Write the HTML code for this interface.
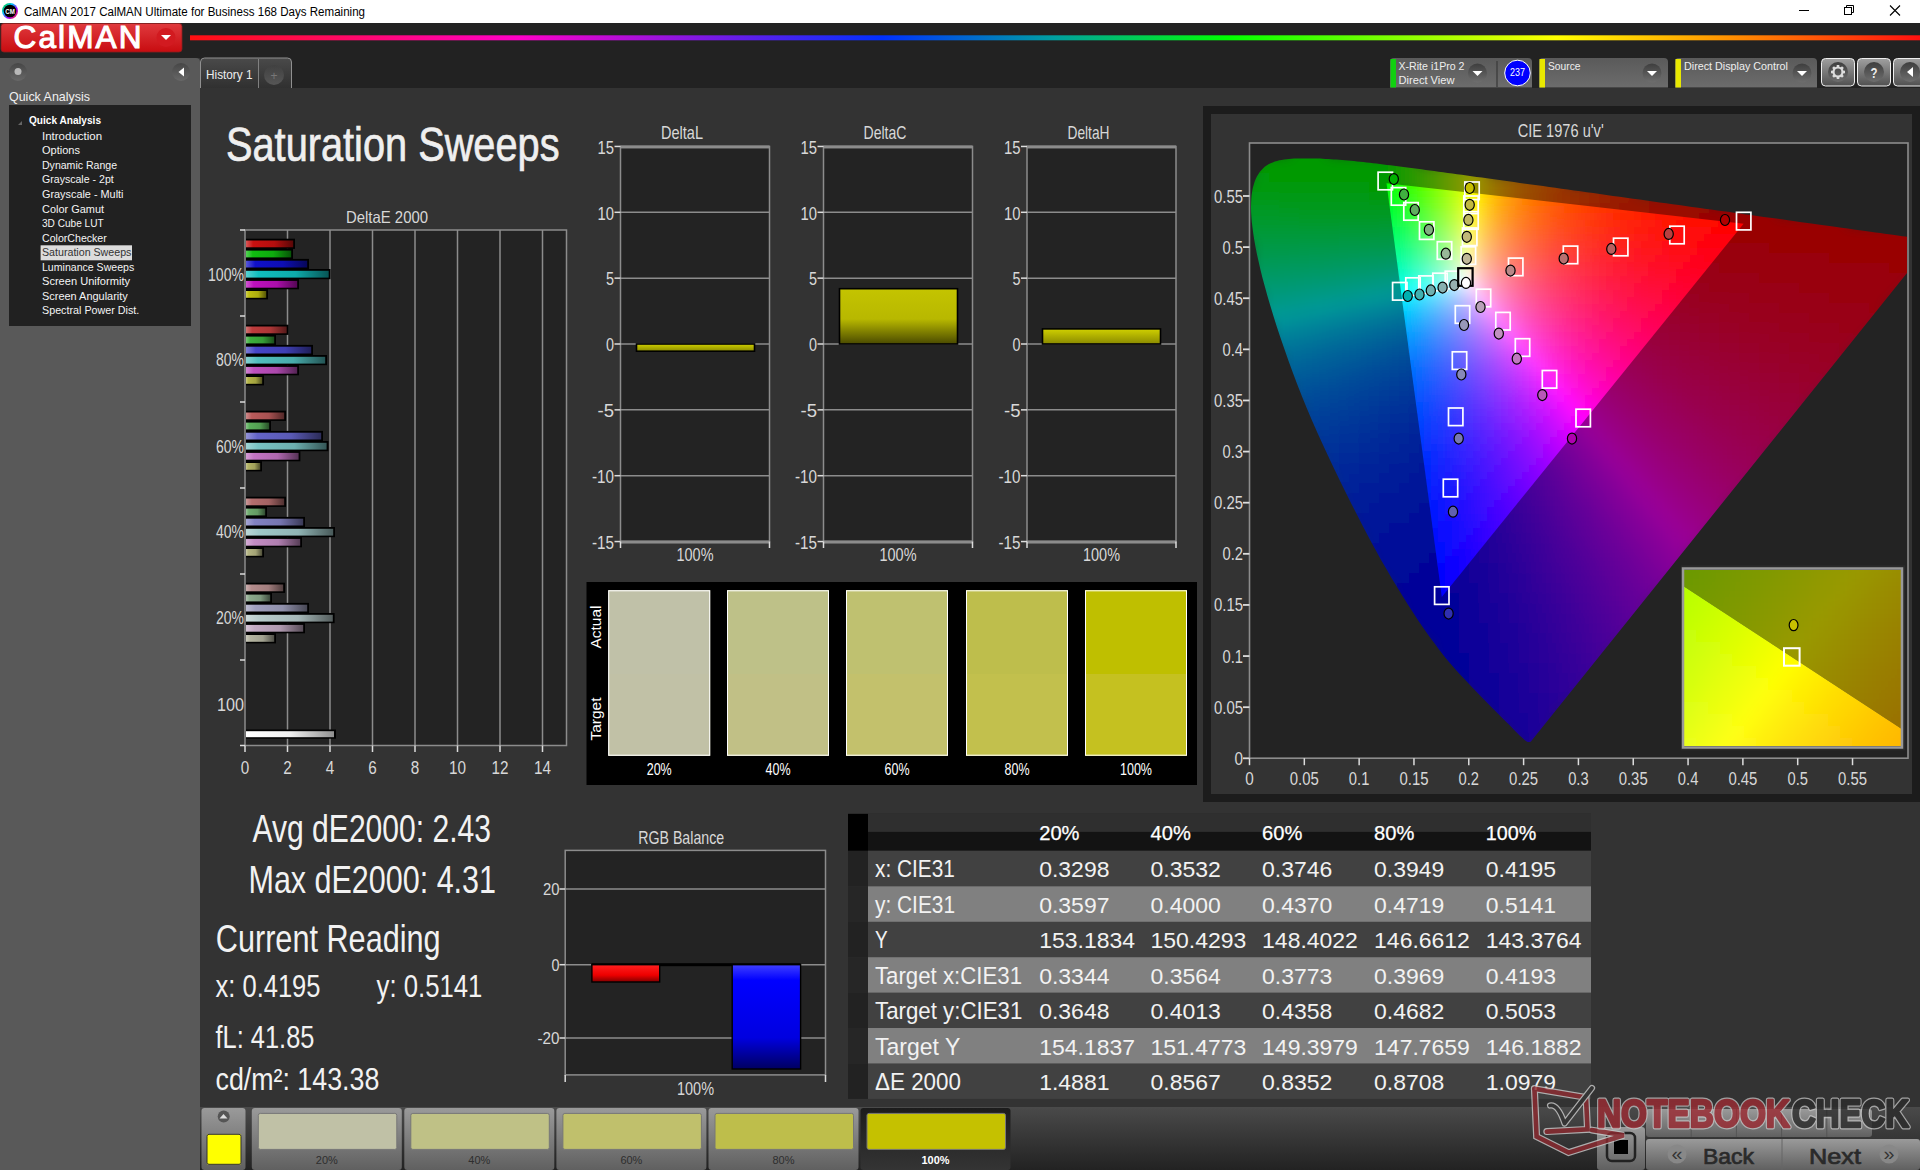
<!DOCTYPE html><html><head><meta charset="utf-8"><style>html,body{margin:0;padding:0;background:#333;overflow:hidden}svg{display:block;font-family:"Liberation Sans",sans-serif}</style></head><body>
<svg width="1920" height="1170" viewBox="0 0 1920 1170">
<defs>
<linearGradient id="rainbow" x1="190" y1="0" x2="1920" y2="0" gradientUnits="userSpaceOnUse">
<stop offset="0" stop-color="#ff1010"/><stop offset="0.19" stop-color="#ff00c8"/><stop offset="0.40" stop-color="#0030ff"/>
<stop offset="0.50" stop-color="#00a0a0"/><stop offset="0.60" stop-color="#00ff00"/><stop offset="0.79" stop-color="#ffff00"/>
<stop offset="0.89" stop-color="#ff9000"/><stop offset="1" stop-color="#ff1010"/></linearGradient>
<linearGradient id="logo" x1="0" y1="0" x2="0" y2="1"><stop offset="0" stop-color="#e03a3e"/><stop offset="1" stop-color="#c80c10"/></linearGradient>
<linearGradient id="btn" x1="0" y1="0" x2="0" y2="1"><stop offset="0" stop-color="#a0a0a0"/><stop offset="1" stop-color="#505050"/></linearGradient>
<linearGradient id="box" x1="0" y1="0" x2="0" y2="1"><stop offset="0" stop-color="#5a5a5a"/><stop offset="1" stop-color="#6c6c6c"/></linearGradient>
<linearGradient id="circ" x1="0" y1="0" x2="0" y2="1"><stop offset="0" stop-color="#3e3e3e"/><stop offset="1" stop-color="#6e6e6e"/></linearGradient>
<linearGradient id="tab" x1="0" y1="0" x2="0" y2="1"><stop offset="0" stop-color="#4a4a4a"/><stop offset="1" stop-color="#303030"/></linearGradient>
<linearGradient id="bar" x1="0" y1="0" x2="0" y2="1"><stop offset="0" stop-color="#4a4a4a"/><stop offset="1" stop-color="#222222"/></linearGradient><linearGradient id="seltab" x1="0" y1="0" x2="0" y2="1"><stop offset="0" stop-color="#1c1c1c"/><stop offset="1" stop-color="#343434"/></linearGradient>
<linearGradient id="btab" x1="0" y1="0" x2="0" y2="1"><stop offset="0" stop-color="#9a9a9a"/><stop offset="1" stop-color="#606060"/></linearGradient>
<linearGradient id="yelV" x1="0" y1="0" x2="0" y2="1"><stop offset="0" stop-color="#c4c400"/><stop offset="0.55" stop-color="#b8b800"/><stop offset="1" stop-color="#4a4a00"/></linearGradient>
<linearGradient id="yelH" x1="0" y1="0" x2="0" y2="1"><stop offset="0" stop-color="#d0d000"/><stop offset="1" stop-color="#8a8a00"/></linearGradient>
<linearGradient id="redB" x1="0" y1="0" x2="0" y2="1"><stop offset="0" stop-color="#ff2020"/><stop offset="0.6" stop-color="#ee0000"/><stop offset="1" stop-color="#800000"/></linearGradient>
<linearGradient id="bluB" x1="0" y1="0" x2="0" y2="1"><stop offset="0" stop-color="#4040ff"/><stop offset="0.15" stop-color="#0000ff"/><stop offset="0.7" stop-color="#0000e0"/><stop offset="1" stop-color="#000060"/></linearGradient>
</defs>
<rect x="0" y="0" width="1920" height="1170" fill="#333333"/>
<rect x="0" y="0" width="1920" height="23" fill="#ffffff"/>
<rect x="0" y="23" width="1920" height="35" fill="#222222"/>
<rect x="200" y="58" width="1720" height="30" fill="#222222"/>
<defs><linearGradient id="cmring" x1="0" y1="0" x2="1" y2="1"><stop offset="0" stop-color="#00d000"/><stop offset="0.35" stop-color="#00c0ff"/><stop offset="0.65" stop-color="#a000ff"/><stop offset="1" stop-color="#ff3000"/></linearGradient></defs>
<circle cx="10" cy="11" r="8" fill="url(#cmring)"/><circle cx="10" cy="11" r="6.3" fill="#000"/>
<text x="10.0" y="14.2" font-size="6.69" fill="#fff" textLength="9.5" lengthAdjust="spacingAndGlyphs" text-anchor="middle" font-weight="bold">CM</text>
<text x="24.0" y="16.0" font-size="13.08" fill="#000" textLength="341.0" lengthAdjust="spacingAndGlyphs">CalMAN 2017 CalMAN Ultimate for Business 168 Days Remaining</text>
<line x1="1799" y1="10.5" x2="1809" y2="10.5" stroke="#000" stroke-width="1"/>
<rect x="1844.5" y="7.5" width="7" height="7" fill="none" stroke="#000" stroke-width="1"/><path d="M1846.5 7.5V5.5h7v7h-2" fill="none" stroke="#000" stroke-width="1"/>
<path d="M1890 5.5l10 10M1900 5.5l-10 10" stroke="#000" stroke-width="1.1"/>
<rect x="1" y="23.5" width="181" height="28.5" rx="3" fill="url(#logo)" stroke="#8a2020" stroke-width="0.8"/>
<text x="13.5" y="48.4" font-size="31.5" fill="#fff" stroke="#fff" stroke-width="1.1" textLength="128" lengthAdjust="spacing">CalMAN</text>
<circle cx="166" cy="37.5" r="9.5" fill="#d21a20"/><path d="M161 35h10l-5 5z" fill="#fff"/>
<rect x="190" y="35.3" width="1730" height="5" fill="url(#rainbow)"/>
<path d="M1390 87.5V62a4 4 0 0 1 4-4h134a4 4 0 0 1 4 4v25.5z" fill="url(#box)"/>
<rect x="1390.5" y="59" width="5.5" height="28.5" fill="#10d010"/>
<text x="1398.5" y="69.8" font-size="10.76" fill="#eee" textLength="66.0" lengthAdjust="spacingAndGlyphs">X-Rite i1Pro 2</text>
<text x="1398.5" y="83.7" font-size="10.76" fill="#eee" textLength="56.0" lengthAdjust="spacingAndGlyphs">Direct View</text>
<circle cx="1477.5" cy="73" r="9.5" fill="url(#circ)"/><path d="M1472.5 71h10l-5 5z" fill="#fff"/>
<line x1="1497" y1="61" x2="1497" y2="87" stroke="#404040" stroke-width="1.5"/>
<circle cx="1517.5" cy="73" r="12.8" fill="#0000ff" stroke="#fff" stroke-width="1"/>
<text x="1517.5" y="76.3" font-size="10.17" fill="#fff" textLength="15.0" lengthAdjust="spacingAndGlyphs" text-anchor="middle">237</text>
<path d="M1539 87.5V62a4 4 0 0 1 4-4h121a4 4 0 0 1 4 4v25.5z" fill="url(#box)"/>
<rect x="1539.5" y="59" width="5.5" height="28.5" fill="#e8e800"/>
<text x="1548.0" y="70.0" font-size="10.76" fill="#eee" textLength="32.5" lengthAdjust="spacingAndGlyphs">Source</text>
<circle cx="1652" cy="73" r="9.5" fill="url(#circ)"/><path d="M1647 71h10l-5 5z" fill="#fff"/>
<path d="M1675 87.5V62a4 4 0 0 1 4-4h134a4 4 0 0 1 4 4v25.5z" fill="url(#box)"/>
<rect x="1675.5" y="59" width="5.5" height="28.5" fill="#e8e800"/>
<text x="1684.0" y="70.0" font-size="10.76" fill="#eee" textLength="104.0" lengthAdjust="spacingAndGlyphs">Direct Display Control</text>
<circle cx="1802" cy="73" r="9.5" fill="url(#circ)"/><path d="M1797 71h10l-5 5z" fill="#fff"/>
<rect x="1821.5" y="58.5" width="33" height="27.5" rx="4" fill="url(#btn)" stroke="#eee" stroke-width="1"/>
<circle cx="1838.0" cy="72" r="10" fill="url(#circ)"/>
<rect x="1857.5" y="58.5" width="33" height="27.5" rx="4" fill="url(#btn)" stroke="#eee" stroke-width="1"/>
<circle cx="1874.0" cy="72" r="10" fill="url(#circ)"/>
<rect x="1893.5" y="58.5" width="33" height="27.5" rx="4" fill="url(#btn)" stroke="#eee" stroke-width="1"/>
<circle cx="1910.0" cy="72" r="10" fill="url(#circ)"/>
<rect x="1836.7" y="65.0" width="2.6" height="3" fill="#ddd" transform="rotate(0 1838 72)"/><rect x="1836.7" y="65.0" width="2.6" height="3" fill="#ddd" transform="rotate(45 1838 72)"/><rect x="1836.7" y="65.0" width="2.6" height="3" fill="#ddd" transform="rotate(90 1838 72)"/><rect x="1836.7" y="65.0" width="2.6" height="3" fill="#ddd" transform="rotate(135 1838 72)"/><rect x="1836.7" y="65.0" width="2.6" height="3" fill="#ddd" transform="rotate(180 1838 72)"/><rect x="1836.7" y="65.0" width="2.6" height="3" fill="#ddd" transform="rotate(225 1838 72)"/><rect x="1836.7" y="65.0" width="2.6" height="3" fill="#ddd" transform="rotate(270 1838 72)"/><rect x="1836.7" y="65.0" width="2.6" height="3" fill="#ddd" transform="rotate(315 1838 72)"/><circle cx="1838" cy="72" r="4.5" fill="none" stroke="#ddd" stroke-width="2.2"/>
<text x="1874.0" y="77.5" font-size="14.54" fill="#eee" textLength="7.0" lengthAdjust="spacingAndGlyphs" text-anchor="middle" font-weight="bold">?</text>
<path d="M1913 67v10l-6-5z" fill="#fff"/>
<path d="M0 58H196a4 4 0 0 1 4 4V1170H0z" fill="#595959"/>
<circle cx="18" cy="72" r="9" fill="url(#circ)" opacity="0.7"/><circle cx="18" cy="71.5" r="3.5" fill="#b8b8b8"/>
<circle cx="181" cy="72" r="9" fill="url(#circ)" opacity="0.7"/><path d="M184 67.5v9l-5.5-4.5z" fill="#fff"/>
<text x="9.0" y="101.0" font-size="12.94" fill="#f0f0f0" textLength="81.0" lengthAdjust="spacingAndGlyphs">Quick Analysis</text>
<rect x="9" y="105" width="182" height="221" fill="#212121"/>
<path d="M18 125l4-4v4z" fill="#666"/>
<text x="29.0" y="124.0" font-size="11.63" fill="#fff" textLength="72.0" lengthAdjust="spacingAndGlyphs" font-weight="bold">Quick Analysis</text>
<text x="42.0" y="139.7" font-size="10.90" fill="#f4f4f4" textLength="60.1" lengthAdjust="spacingAndGlyphs">Introduction</text>
<text x="42.0" y="154.3" font-size="10.90" fill="#f4f4f4" textLength="38.0" lengthAdjust="spacingAndGlyphs">Options</text>
<text x="42.0" y="168.8" font-size="10.90" fill="#f4f4f4" textLength="75.0" lengthAdjust="spacingAndGlyphs">Dynamic Range</text>
<text x="42.0" y="183.4" font-size="10.90" fill="#f4f4f4" textLength="71.7" lengthAdjust="spacingAndGlyphs">Grayscale - 2pt</text>
<text x="42.0" y="197.9" font-size="10.90" fill="#f4f4f4" textLength="81.5" lengthAdjust="spacingAndGlyphs">Grayscale - Multi</text>
<text x="42.0" y="212.5" font-size="10.90" fill="#f4f4f4" textLength="62.0" lengthAdjust="spacingAndGlyphs">Color Gamut</text>
<text x="42.0" y="227.1" font-size="10.90" fill="#f4f4f4" textLength="61.6" lengthAdjust="spacingAndGlyphs">3D Cube LUT</text>
<text x="42.0" y="241.6" font-size="10.90" fill="#f4f4f4" textLength="64.8" lengthAdjust="spacingAndGlyphs">ColorChecker</text>
<rect x="40.6" y="245.3" width="91.4" height="15" fill="#dcdcdc"/>
<text x="42.0" y="256.2" font-size="10.90" fill="#333" textLength="89.4" lengthAdjust="spacingAndGlyphs">Saturation Sweeps</text>
<text x="42.0" y="270.7" font-size="10.90" fill="#f4f4f4" textLength="92.2" lengthAdjust="spacingAndGlyphs">Luminance Sweeps</text>
<text x="42.0" y="285.3" font-size="10.90" fill="#f4f4f4" textLength="88.0" lengthAdjust="spacingAndGlyphs">Screen Uniformity</text>
<text x="42.0" y="299.9" font-size="10.90" fill="#f4f4f4" textLength="85.8" lengthAdjust="spacingAndGlyphs">Screen Angularity</text>
<text x="42.0" y="314.4" font-size="10.90" fill="#f4f4f4" textLength="97.3" lengthAdjust="spacingAndGlyphs">Spectral Power Dist.</text>
<path d="M200.5 88V62a4 4 0 0 1 4-4h83a4 4 0 0 1 4 4v26z" fill="url(#tab)"/><path d="M200.5 88V62a4 4 0 0 1 4-4h83a4 4 0 0 1 4 4v26" fill="none" stroke="#909090" stroke-width="1"/>
<line x1="258.5" y1="59" x2="258.5" y2="88" stroke="#808080" stroke-width="1"/>
<text x="206.0" y="78.5" font-size="12.50" fill="#eee" textLength="46.5" lengthAdjust="spacingAndGlyphs">History 1</text>
<circle cx="274" cy="75" r="10" fill="url(#circ)" opacity="0.6"/>
<text x="274.0" y="80.0" font-size="13.08" fill="#777" textLength="7.0" lengthAdjust="spacingAndGlyphs" text-anchor="middle">+</text>
<rect x="200" y="88" width="1720" height="1082" fill="#333333"/>
<text x="226.0" y="160.8" font-size="48.69" fill="#efefef" textLength="333.5" lengthAdjust="spacingAndGlyphs" stroke="#efefef" stroke-width="0.7">Saturation Sweeps</text>
<rect x="245" y="230" width="321.5" height="515.5" fill="#232323"/>
<line x1="287.5" y1="230" x2="287.5" y2="745.5" stroke="#8c8c8c" stroke-width="1.5"/>
<line x1="330.0" y1="230" x2="330.0" y2="745.5" stroke="#8c8c8c" stroke-width="1.5"/>
<line x1="372.5" y1="230" x2="372.5" y2="745.5" stroke="#8c8c8c" stroke-width="1.5"/>
<line x1="415.0" y1="230" x2="415.0" y2="745.5" stroke="#8c8c8c" stroke-width="1.5"/>
<line x1="457.5" y1="230" x2="457.5" y2="745.5" stroke="#8c8c8c" stroke-width="1.5"/>
<line x1="500.0" y1="230" x2="500.0" y2="745.5" stroke="#8c8c8c" stroke-width="1.5"/>
<line x1="542.5" y1="230" x2="542.5" y2="745.5" stroke="#8c8c8c" stroke-width="1.5"/>
<rect x="245" y="230" width="321.5" height="515.5" fill="none" stroke="#8c8c8c" stroke-width="1.5"/>
<text x="387.0" y="223.0" font-size="16.72" fill="#d8d8d8" textLength="82.0" lengthAdjust="spacingAndGlyphs" text-anchor="middle">DeltaE 2000</text>
<line x1="240" y1="230" x2="245" y2="230" stroke="#ddd" stroke-width="1.5"/>
<line x1="240" y1="316" x2="245" y2="316" stroke="#ddd" stroke-width="1.5"/>
<line x1="240" y1="402" x2="245" y2="402" stroke="#ddd" stroke-width="1.5"/>
<line x1="240" y1="488" x2="245" y2="488" stroke="#ddd" stroke-width="1.5"/>
<line x1="240" y1="574" x2="245" y2="574" stroke="#ddd" stroke-width="1.5"/>
<line x1="240" y1="660" x2="245" y2="660" stroke="#ddd" stroke-width="1.5"/>
<line x1="240" y1="745.5" x2="245" y2="745.5" stroke="#ddd" stroke-width="1.5"/>
<line x1="245.0" y1="745.5" x2="245.0" y2="752" stroke="#ddd" stroke-width="1.5"/>
<text x="245.0" y="774.0" font-size="17.44" fill="#d8d8d8" textLength="8.5" lengthAdjust="spacingAndGlyphs" text-anchor="middle">0</text>
<line x1="287.5" y1="745.5" x2="287.5" y2="752" stroke="#ddd" stroke-width="1.5"/>
<text x="287.5" y="774.0" font-size="17.44" fill="#d8d8d8" textLength="8.5" lengthAdjust="spacingAndGlyphs" text-anchor="middle">2</text>
<line x1="330.0" y1="745.5" x2="330.0" y2="752" stroke="#ddd" stroke-width="1.5"/>
<text x="330.0" y="774.0" font-size="17.44" fill="#d8d8d8" textLength="8.5" lengthAdjust="spacingAndGlyphs" text-anchor="middle">4</text>
<line x1="372.5" y1="745.5" x2="372.5" y2="752" stroke="#ddd" stroke-width="1.5"/>
<text x="372.5" y="774.0" font-size="17.44" fill="#d8d8d8" textLength="8.5" lengthAdjust="spacingAndGlyphs" text-anchor="middle">6</text>
<line x1="415.0" y1="745.5" x2="415.0" y2="752" stroke="#ddd" stroke-width="1.5"/>
<text x="415.0" y="774.0" font-size="17.44" fill="#d8d8d8" textLength="8.5" lengthAdjust="spacingAndGlyphs" text-anchor="middle">8</text>
<line x1="457.5" y1="745.5" x2="457.5" y2="752" stroke="#ddd" stroke-width="1.5"/>
<text x="457.5" y="774.0" font-size="17.44" fill="#d8d8d8" textLength="17.0" lengthAdjust="spacingAndGlyphs" text-anchor="middle">10</text>
<line x1="500.0" y1="745.5" x2="500.0" y2="752" stroke="#ddd" stroke-width="1.5"/>
<text x="500.0" y="774.0" font-size="17.44" fill="#d8d8d8" textLength="17.0" lengthAdjust="spacingAndGlyphs" text-anchor="middle">12</text>
<line x1="542.5" y1="745.5" x2="542.5" y2="752" stroke="#ddd" stroke-width="1.5"/>
<text x="542.5" y="774.0" font-size="17.44" fill="#d8d8d8" textLength="17.0" lengthAdjust="spacingAndGlyphs" text-anchor="middle">14</text>
<text x="244.0" y="281.0" font-size="17.44" fill="#d8d8d8" textLength="36.0" lengthAdjust="spacingAndGlyphs" text-anchor="end">100%</text>
<text x="244.0" y="366.0" font-size="17.44" fill="#d8d8d8" textLength="28.0" lengthAdjust="spacingAndGlyphs" text-anchor="end">80%</text>
<text x="244.0" y="453.0" font-size="17.44" fill="#d8d8d8" textLength="28.0" lengthAdjust="spacingAndGlyphs" text-anchor="end">60%</text>
<text x="244.0" y="538.0" font-size="17.44" fill="#d8d8d8" textLength="28.0" lengthAdjust="spacingAndGlyphs" text-anchor="end">40%</text>
<text x="244.0" y="624.0" font-size="17.44" fill="#d8d8d8" textLength="28.0" lengthAdjust="spacingAndGlyphs" text-anchor="end">20%</text>
<text x="244.0" y="711.0" font-size="17.44" fill="#d8d8d8" textLength="27.0" lengthAdjust="spacingAndGlyphs" text-anchor="end">100</text>
<defs>
<linearGradient id="bg0" x1="0" y1="0" x2="1" y2="0"><stop offset="0" stop-color="#d85757"/><stop offset="0.15" stop-color="#c81010"/><stop offset="0.6" stop-color="#b40e0e"/><stop offset="1" stop-color="#590707"/></linearGradient>
<linearGradient id="bg1" x1="0" y1="0" x2="1" y2="0"><stop offset="0" stop-color="#57d157"/><stop offset="0.15" stop-color="#10be10"/><stop offset="0.6" stop-color="#0eab0e"/><stop offset="1" stop-color="#075507"/></linearGradient>
<linearGradient id="bg2" x1="0" y1="0" x2="1" y2="0"><stop offset="0" stop-color="#5757d8"/><stop offset="0.15" stop-color="#1010c8"/><stop offset="0.6" stop-color="#0e0eb4"/><stop offset="1" stop-color="#070759"/></linearGradient>
<linearGradient id="bg3" x1="0" y1="0" x2="1" y2="0"><stop offset="0" stop-color="#57d1d1"/><stop offset="0.15" stop-color="#10bebe"/><stop offset="0.6" stop-color="#0eabab"/><stop offset="1" stop-color="#075555"/></linearGradient>
<linearGradient id="bg4" x1="0" y1="0" x2="1" y2="0"><stop offset="0" stop-color="#d157d1"/><stop offset="0.15" stop-color="#be10be"/><stop offset="0.6" stop-color="#ab0eab"/><stop offset="1" stop-color="#550755"/></linearGradient>
<linearGradient id="bg5" x1="0" y1="0" x2="1" y2="0"><stop offset="0" stop-color="#d1d157"/><stop offset="0.15" stop-color="#bebe10"/><stop offset="0.6" stop-color="#abab0e"/><stop offset="1" stop-color="#555507"/></linearGradient>
<linearGradient id="bg6" x1="0" y1="0" x2="1" y2="0"><stop offset="0" stop-color="#d17676"/><stop offset="0.15" stop-color="#be3c3c"/><stop offset="0.6" stop-color="#ab3636"/><stop offset="1" stop-color="#551a1a"/></linearGradient>
<linearGradient id="bg7" x1="0" y1="0" x2="1" y2="0"><stop offset="0" stop-color="#76c776"/><stop offset="0.15" stop-color="#3caf3c"/><stop offset="0.6" stop-color="#369d36"/><stop offset="1" stop-color="#1a4e1a"/></linearGradient>
<linearGradient id="bg8" x1="0" y1="0" x2="1" y2="0"><stop offset="0" stop-color="#7d7dd8"/><stop offset="0.15" stop-color="#4646c8"/><stop offset="0.6" stop-color="#3f3fb4"/><stop offset="1" stop-color="#1f1f59"/></linearGradient>
<linearGradient id="bg9" x1="0" y1="0" x2="1" y2="0"><stop offset="0" stop-color="#84d1d1"/><stop offset="0.15" stop-color="#50bebe"/><stop offset="0.6" stop-color="#48abab"/><stop offset="1" stop-color="#245555"/></linearGradient>
<linearGradient id="bg10" x1="0" y1="0" x2="1" y2="0"><stop offset="0" stop-color="#d184d1"/><stop offset="0.15" stop-color="#be50be"/><stop offset="0.6" stop-color="#ab48ab"/><stop offset="1" stop-color="#552455"/></linearGradient>
<linearGradient id="bg11" x1="0" y1="0" x2="1" y2="0"><stop offset="0" stop-color="#caca7d"/><stop offset="0.15" stop-color="#b4b446"/><stop offset="0.6" stop-color="#a2a23f"/><stop offset="1" stop-color="#50501f"/></linearGradient>
<linearGradient id="bg12" x1="0" y1="0" x2="1" y2="0"><stop offset="0" stop-color="#ce8b8b"/><stop offset="0.15" stop-color="#b95a5a"/><stop offset="0.6" stop-color="#a65151"/><stop offset="1" stop-color="#532828"/></linearGradient>
<linearGradient id="bg13" x1="0" y1="0" x2="1" y2="0"><stop offset="0" stop-color="#8bc78b"/><stop offset="0.15" stop-color="#5aaf5a"/><stop offset="0.6" stop-color="#519d51"/><stop offset="1" stop-color="#284e28"/></linearGradient>
<linearGradient id="bg14" x1="0" y1="0" x2="1" y2="0"><stop offset="0" stop-color="#9292d8"/><stop offset="0.15" stop-color="#6464c8"/><stop offset="0.6" stop-color="#5a5ab4"/><stop offset="1" stop-color="#2c2c59"/></linearGradient>
<linearGradient id="bg15" x1="0" y1="0" x2="1" y2="0"><stop offset="0" stop-color="#a0d5d5"/><stop offset="0.15" stop-color="#78c3c3"/><stop offset="0.6" stop-color="#6cafaf"/><stop offset="1" stop-color="#355757"/></linearGradient>
<linearGradient id="bg16" x1="0" y1="0" x2="1" y2="0"><stop offset="0" stop-color="#d59dd5"/><stop offset="0.15" stop-color="#c373c3"/><stop offset="0.6" stop-color="#af67af"/><stop offset="1" stop-color="#573357"/></linearGradient>
<linearGradient id="bg17" x1="0" y1="0" x2="1" y2="0"><stop offset="0" stop-color="#caca92"/><stop offset="0.15" stop-color="#b4b464"/><stop offset="0.6" stop-color="#a2a25a"/><stop offset="1" stop-color="#50502c"/></linearGradient>
<linearGradient id="bg18" x1="0" y1="0" x2="1" y2="0"><stop offset="0" stop-color="#ca9999"/><stop offset="0.15" stop-color="#b46e6e"/><stop offset="0.6" stop-color="#a26363"/><stop offset="1" stop-color="#503131"/></linearGradient>
<linearGradient id="bg19" x1="0" y1="0" x2="1" y2="0"><stop offset="0" stop-color="#99c399"/><stop offset="0.15" stop-color="#6eaa6e"/><stop offset="0.6" stop-color="#639963"/><stop offset="1" stop-color="#314c31"/></linearGradient>
<linearGradient id="bg20" x1="0" y1="0" x2="1" y2="0"><stop offset="0" stop-color="#a7a7d5"/><stop offset="0.15" stop-color="#8282c3"/><stop offset="0.6" stop-color="#7575af"/><stop offset="1" stop-color="#3a3a57"/></linearGradient>
<linearGradient id="bg21" x1="0" y1="0" x2="1" y2="0"><stop offset="0" stop-color="#bcd8d8"/><stop offset="0.15" stop-color="#a0c8c8"/><stop offset="0.6" stop-color="#90b4b4"/><stop offset="1" stop-color="#485959"/></linearGradient>
<linearGradient id="bg22" x1="0" y1="0" x2="1" y2="0"><stop offset="0" stop-color="#d5aed5"/><stop offset="0.15" stop-color="#c38cc3"/><stop offset="0.6" stop-color="#af7eaf"/><stop offset="1" stop-color="#573e57"/></linearGradient>
<linearGradient id="bg23" x1="0" y1="0" x2="1" y2="0"><stop offset="0" stop-color="#cacaa7"/><stop offset="0.15" stop-color="#b4b482"/><stop offset="0.6" stop-color="#a2a275"/><stop offset="1" stop-color="#50503a"/></linearGradient>
<linearGradient id="bg24" x1="0" y1="0" x2="1" y2="0"><stop offset="0" stop-color="#caaeae"/><stop offset="0.15" stop-color="#b48c8c"/><stop offset="0.6" stop-color="#a27e7e"/><stop offset="1" stop-color="#503e3e"/></linearGradient>
<linearGradient id="bg25" x1="0" y1="0" x2="1" y2="0"><stop offset="0" stop-color="#aec3ae"/><stop offset="0.15" stop-color="#8caa8c"/><stop offset="0.6" stop-color="#7e997e"/><stop offset="1" stop-color="#3e4c3e"/></linearGradient>
<linearGradient id="bg26" x1="0" y1="0" x2="1" y2="0"><stop offset="0" stop-color="#bcbcd1"/><stop offset="0.15" stop-color="#a0a0be"/><stop offset="0.6" stop-color="#9090ab"/><stop offset="1" stop-color="#484855"/></linearGradient>
<linearGradient id="bg27" x1="0" y1="0" x2="1" y2="0"><stop offset="0" stop-color="#cedcdc"/><stop offset="0.15" stop-color="#b9cdcd"/><stop offset="0.6" stop-color="#a6b8b8"/><stop offset="1" stop-color="#535c5c"/></linearGradient>
<linearGradient id="bg28" x1="0" y1="0" x2="1" y2="0"><stop offset="0" stop-color="#d5c3d5"/><stop offset="0.15" stop-color="#c3aac3"/><stop offset="0.6" stop-color="#af99af"/><stop offset="1" stop-color="#574c57"/></linearGradient>
<linearGradient id="bg29" x1="0" y1="0" x2="1" y2="0"><stop offset="0" stop-color="#cacabc"/><stop offset="0.15" stop-color="#b4b4a0"/><stop offset="0.6" stop-color="#a2a290"/><stop offset="1" stop-color="#505048"/></linearGradient>
<linearGradient id="bgw" x1="0" y1="0" x2="1" y2="0"><stop offset="0" stop-color="#ffffff"/><stop offset="0.5" stop-color="#f0f0f0"/><stop offset="1" stop-color="#909090"/></linearGradient>
</defs>
<rect x="246" y="238.7" width="49.0" height="10.2" fill="#000"/>
<rect x="246" y="240.5" width="47.2" height="6.8" fill="url(#bg0)"/>
<rect x="246" y="248.8" width="47.0" height="10.2" fill="#000"/>
<rect x="246" y="250.6" width="45.2" height="6.8" fill="url(#bg1)"/>
<rect x="246" y="258.9" width="63.0" height="10.2" fill="#000"/>
<rect x="246" y="260.7" width="61.2" height="6.8" fill="url(#bg2)"/>
<rect x="246" y="269.0" width="84.5" height="10.2" fill="#000"/>
<rect x="246" y="270.8" width="82.7" height="6.8" fill="url(#bg3)"/>
<rect x="246" y="279.1" width="53.0" height="10.2" fill="#000"/>
<rect x="246" y="280.9" width="51.2" height="6.8" fill="url(#bg4)"/>
<rect x="246" y="289.2" width="22.0" height="10.2" fill="#000"/>
<rect x="246" y="291.0" width="20.2" height="6.8" fill="url(#bg5)"/>
<rect x="246" y="324.7" width="42.5" height="10.2" fill="#000"/>
<rect x="246" y="326.5" width="40.7" height="6.8" fill="url(#bg6)"/>
<rect x="246" y="334.8" width="30.0" height="10.2" fill="#000"/>
<rect x="246" y="336.6" width="28.2" height="6.8" fill="url(#bg7)"/>
<rect x="246" y="344.9" width="67.0" height="10.2" fill="#000"/>
<rect x="246" y="346.7" width="65.2" height="6.8" fill="url(#bg8)"/>
<rect x="246" y="355.0" width="81.0" height="10.2" fill="#000"/>
<rect x="246" y="356.8" width="79.2" height="6.8" fill="url(#bg9)"/>
<rect x="246" y="365.1" width="53.0" height="10.2" fill="#000"/>
<rect x="246" y="366.9" width="51.2" height="6.8" fill="url(#bg10)"/>
<rect x="246" y="375.2" width="18.0" height="10.2" fill="#000"/>
<rect x="246" y="377.0" width="16.2" height="6.8" fill="url(#bg11)"/>
<rect x="246" y="410.7" width="40.0" height="10.2" fill="#000"/>
<rect x="246" y="412.5" width="38.2" height="6.8" fill="url(#bg12)"/>
<rect x="246" y="420.8" width="25.0" height="10.2" fill="#000"/>
<rect x="246" y="422.6" width="23.2" height="6.8" fill="url(#bg13)"/>
<rect x="246" y="430.9" width="77.0" height="10.2" fill="#000"/>
<rect x="246" y="432.7" width="75.2" height="6.8" fill="url(#bg14)"/>
<rect x="246" y="441.0" width="82.4" height="10.2" fill="#000"/>
<rect x="246" y="442.8" width="80.6" height="6.8" fill="url(#bg15)"/>
<rect x="246" y="451.1" width="54.4" height="10.2" fill="#000"/>
<rect x="246" y="452.9" width="52.6" height="6.8" fill="url(#bg16)"/>
<rect x="246" y="461.2" width="16.0" height="10.2" fill="#000"/>
<rect x="246" y="463.0" width="14.2" height="6.8" fill="url(#bg17)"/>
<rect x="246" y="496.7" width="40.0" height="10.2" fill="#000"/>
<rect x="246" y="498.5" width="38.2" height="6.8" fill="url(#bg18)"/>
<rect x="246" y="506.8" width="21.0" height="10.2" fill="#000"/>
<rect x="246" y="508.6" width="19.2" height="6.8" fill="url(#bg19)"/>
<rect x="246" y="516.9" width="59.0" height="10.2" fill="#000"/>
<rect x="246" y="518.7" width="57.2" height="6.8" fill="url(#bg20)"/>
<rect x="246" y="527.0" width="89.0" height="10.2" fill="#000"/>
<rect x="246" y="528.8" width="87.2" height="6.8" fill="url(#bg21)"/>
<rect x="246" y="537.1" width="56.0" height="10.2" fill="#000"/>
<rect x="246" y="538.9" width="54.2" height="6.8" fill="url(#bg22)"/>
<rect x="246" y="547.2" width="18.0" height="10.2" fill="#000"/>
<rect x="246" y="549.0" width="16.2" height="6.8" fill="url(#bg23)"/>
<rect x="246" y="582.7" width="39.0" height="10.2" fill="#000"/>
<rect x="246" y="584.5" width="37.2" height="6.8" fill="url(#bg24)"/>
<rect x="246" y="592.8" width="26.0" height="10.2" fill="#000"/>
<rect x="246" y="594.6" width="24.2" height="6.8" fill="url(#bg25)"/>
<rect x="246" y="602.9" width="63.0" height="10.2" fill="#000"/>
<rect x="246" y="604.7" width="61.2" height="6.8" fill="url(#bg26)"/>
<rect x="246" y="613.0" width="88.6" height="10.2" fill="#000"/>
<rect x="246" y="614.8" width="86.8" height="6.8" fill="url(#bg27)"/>
<rect x="246" y="623.1" width="59.0" height="10.2" fill="#000"/>
<rect x="246" y="624.9" width="57.2" height="6.8" fill="url(#bg28)"/>
<rect x="246" y="633.2" width="30.0" height="10.2" fill="#000"/>
<rect x="246" y="635.0" width="28.2" height="6.8" fill="url(#bg29)"/>
<rect x="246" y="729.5" width="90" height="9.2" fill="#000"/>
<rect x="246" y="731.2" width="88" height="6" fill="url(#bgw)"/>
<rect x="620.5" y="146" width="149" height="394" fill="#232323"/>
<line x1="620.5" y1="475.7" x2="769.5" y2="475.7" stroke="#8c8c8c" stroke-width="1.5"/>
<line x1="620.5" y1="409.85" x2="769.5" y2="409.85" stroke="#8c8c8c" stroke-width="1.5"/>
<line x1="620.5" y1="344.0" x2="769.5" y2="344.0" stroke="#8c8c8c" stroke-width="1.5"/>
<line x1="620.5" y1="278.15" x2="769.5" y2="278.15" stroke="#8c8c8c" stroke-width="1.5"/>
<line x1="620.5" y1="212.3" x2="769.5" y2="212.3" stroke="#8c8c8c" stroke-width="1.5"/>
<rect x="620.5" y="146.45" width="149" height="395.1" fill="none" stroke="#8c8c8c" stroke-width="1.5"/>
<rect x="620.5" y="145.45" width="149" height="3" fill="#8c8c8c"/>
<rect x="620.5" y="540.55" width="149" height="3" fill="#8c8c8c"/>
<line x1="614.5" y1="146.45" x2="620.5" y2="146.45" stroke="#ddd" stroke-width="1.5"/>
<text x="614.0" y="153.6" font-size="18.02" fill="#d8d8d8" textLength="16.5" lengthAdjust="spacingAndGlyphs" text-anchor="end">15</text>
<line x1="614.5" y1="212.3" x2="620.5" y2="212.3" stroke="#ddd" stroke-width="1.5"/>
<text x="614.0" y="219.5" font-size="18.02" fill="#d8d8d8" textLength="16.5" lengthAdjust="spacingAndGlyphs" text-anchor="end">10</text>
<line x1="614.5" y1="278.15" x2="620.5" y2="278.15" stroke="#ddd" stroke-width="1.5"/>
<text x="614.0" y="285.3" font-size="18.02" fill="#d8d8d8" textLength="8.0" lengthAdjust="spacingAndGlyphs" text-anchor="end">5</text>
<line x1="614.5" y1="344.0" x2="620.5" y2="344.0" stroke="#ddd" stroke-width="1.5"/>
<text x="614.0" y="351.2" font-size="18.02" fill="#d8d8d8" textLength="8.0" lengthAdjust="spacingAndGlyphs" text-anchor="end">0</text>
<line x1="614.5" y1="409.85" x2="620.5" y2="409.85" stroke="#ddd" stroke-width="1.5"/>
<text x="614.0" y="417.1" font-size="18.02" fill="#d8d8d8" textLength="16.5" lengthAdjust="spacingAndGlyphs" text-anchor="end">-5</text>
<line x1="614.5" y1="475.7" x2="620.5" y2="475.7" stroke="#ddd" stroke-width="1.5"/>
<text x="614.0" y="482.9" font-size="18.02" fill="#d8d8d8" textLength="22.0" lengthAdjust="spacingAndGlyphs" text-anchor="end">-10</text>
<line x1="614.5" y1="541.55" x2="620.5" y2="541.55" stroke="#ddd" stroke-width="1.5"/>
<text x="614.0" y="548.8" font-size="18.02" fill="#d8d8d8" textLength="22.0" lengthAdjust="spacingAndGlyphs" text-anchor="end">-15</text>
<line x1="620.5" y1="541.55" x2="620.5" y2="548" stroke="#ddd" stroke-width="1.5"/>
<line x1="769.5" y1="541.55" x2="769.5" y2="548" stroke="#ddd" stroke-width="1.5"/>
<text x="695.0" y="560.5" font-size="17.44" fill="#d8d8d8" textLength="37.0" lengthAdjust="spacingAndGlyphs" text-anchor="middle">100%</text>
<text x="682.0" y="139.0" font-size="18.17" fill="#d8d8d8" textLength="42.0" lengthAdjust="spacingAndGlyphs" text-anchor="middle">DeltaL</text>
<rect x="636.5" y="344.0" width="118.0" height="7.2" fill="url(#yelH)" stroke="#000" stroke-width="1.6"/>
<rect x="823.5" y="146" width="149" height="394" fill="#232323"/>
<line x1="823.5" y1="475.7" x2="972.5" y2="475.7" stroke="#8c8c8c" stroke-width="1.5"/>
<line x1="823.5" y1="409.85" x2="972.5" y2="409.85" stroke="#8c8c8c" stroke-width="1.5"/>
<line x1="823.5" y1="344.0" x2="972.5" y2="344.0" stroke="#8c8c8c" stroke-width="1.5"/>
<line x1="823.5" y1="278.15" x2="972.5" y2="278.15" stroke="#8c8c8c" stroke-width="1.5"/>
<line x1="823.5" y1="212.3" x2="972.5" y2="212.3" stroke="#8c8c8c" stroke-width="1.5"/>
<rect x="823.5" y="146.45" width="149" height="395.1" fill="none" stroke="#8c8c8c" stroke-width="1.5"/>
<rect x="823.5" y="145.45" width="149" height="3" fill="#8c8c8c"/>
<rect x="823.5" y="540.55" width="149" height="3" fill="#8c8c8c"/>
<line x1="817.5" y1="146.45" x2="823.5" y2="146.45" stroke="#ddd" stroke-width="1.5"/>
<text x="817.0" y="153.6" font-size="18.02" fill="#d8d8d8" textLength="16.5" lengthAdjust="spacingAndGlyphs" text-anchor="end">15</text>
<line x1="817.5" y1="212.3" x2="823.5" y2="212.3" stroke="#ddd" stroke-width="1.5"/>
<text x="817.0" y="219.5" font-size="18.02" fill="#d8d8d8" textLength="16.5" lengthAdjust="spacingAndGlyphs" text-anchor="end">10</text>
<line x1="817.5" y1="278.15" x2="823.5" y2="278.15" stroke="#ddd" stroke-width="1.5"/>
<text x="817.0" y="285.3" font-size="18.02" fill="#d8d8d8" textLength="8.0" lengthAdjust="spacingAndGlyphs" text-anchor="end">5</text>
<line x1="817.5" y1="344.0" x2="823.5" y2="344.0" stroke="#ddd" stroke-width="1.5"/>
<text x="817.0" y="351.2" font-size="18.02" fill="#d8d8d8" textLength="8.0" lengthAdjust="spacingAndGlyphs" text-anchor="end">0</text>
<line x1="817.5" y1="409.85" x2="823.5" y2="409.85" stroke="#ddd" stroke-width="1.5"/>
<text x="817.0" y="417.1" font-size="18.02" fill="#d8d8d8" textLength="16.5" lengthAdjust="spacingAndGlyphs" text-anchor="end">-5</text>
<line x1="817.5" y1="475.7" x2="823.5" y2="475.7" stroke="#ddd" stroke-width="1.5"/>
<text x="817.0" y="482.9" font-size="18.02" fill="#d8d8d8" textLength="22.0" lengthAdjust="spacingAndGlyphs" text-anchor="end">-10</text>
<line x1="817.5" y1="541.55" x2="823.5" y2="541.55" stroke="#ddd" stroke-width="1.5"/>
<text x="817.0" y="548.8" font-size="18.02" fill="#d8d8d8" textLength="22.0" lengthAdjust="spacingAndGlyphs" text-anchor="end">-15</text>
<line x1="823.5" y1="541.55" x2="823.5" y2="548" stroke="#ddd" stroke-width="1.5"/>
<line x1="972.5" y1="541.55" x2="972.5" y2="548" stroke="#ddd" stroke-width="1.5"/>
<text x="898.0" y="560.5" font-size="17.44" fill="#d8d8d8" textLength="37.0" lengthAdjust="spacingAndGlyphs" text-anchor="middle">100%</text>
<text x="885.0" y="139.0" font-size="18.17" fill="#d8d8d8" textLength="43.0" lengthAdjust="spacingAndGlyphs" text-anchor="middle">DeltaC</text>
<rect x="839.5" y="288.7" width="118.0" height="55.3" fill="url(#yelV)" stroke="#000" stroke-width="1.6"/>
<rect x="1027" y="146" width="149" height="394" fill="#232323"/>
<line x1="1027" y1="475.7" x2="1176" y2="475.7" stroke="#8c8c8c" stroke-width="1.5"/>
<line x1="1027" y1="409.85" x2="1176" y2="409.85" stroke="#8c8c8c" stroke-width="1.5"/>
<line x1="1027" y1="344.0" x2="1176" y2="344.0" stroke="#8c8c8c" stroke-width="1.5"/>
<line x1="1027" y1="278.15" x2="1176" y2="278.15" stroke="#8c8c8c" stroke-width="1.5"/>
<line x1="1027" y1="212.3" x2="1176" y2="212.3" stroke="#8c8c8c" stroke-width="1.5"/>
<rect x="1027" y="146.45" width="149" height="395.1" fill="none" stroke="#8c8c8c" stroke-width="1.5"/>
<rect x="1027" y="145.45" width="149" height="3" fill="#8c8c8c"/>
<rect x="1027" y="540.55" width="149" height="3" fill="#8c8c8c"/>
<line x1="1021" y1="146.45" x2="1027" y2="146.45" stroke="#ddd" stroke-width="1.5"/>
<text x="1020.5" y="153.6" font-size="18.02" fill="#d8d8d8" textLength="16.5" lengthAdjust="spacingAndGlyphs" text-anchor="end">15</text>
<line x1="1021" y1="212.3" x2="1027" y2="212.3" stroke="#ddd" stroke-width="1.5"/>
<text x="1020.5" y="219.5" font-size="18.02" fill="#d8d8d8" textLength="16.5" lengthAdjust="spacingAndGlyphs" text-anchor="end">10</text>
<line x1="1021" y1="278.15" x2="1027" y2="278.15" stroke="#ddd" stroke-width="1.5"/>
<text x="1020.5" y="285.3" font-size="18.02" fill="#d8d8d8" textLength="8.0" lengthAdjust="spacingAndGlyphs" text-anchor="end">5</text>
<line x1="1021" y1="344.0" x2="1027" y2="344.0" stroke="#ddd" stroke-width="1.5"/>
<text x="1020.5" y="351.2" font-size="18.02" fill="#d8d8d8" textLength="8.0" lengthAdjust="spacingAndGlyphs" text-anchor="end">0</text>
<line x1="1021" y1="409.85" x2="1027" y2="409.85" stroke="#ddd" stroke-width="1.5"/>
<text x="1020.5" y="417.1" font-size="18.02" fill="#d8d8d8" textLength="16.5" lengthAdjust="spacingAndGlyphs" text-anchor="end">-5</text>
<line x1="1021" y1="475.7" x2="1027" y2="475.7" stroke="#ddd" stroke-width="1.5"/>
<text x="1020.5" y="482.9" font-size="18.02" fill="#d8d8d8" textLength="22.0" lengthAdjust="spacingAndGlyphs" text-anchor="end">-10</text>
<line x1="1021" y1="541.55" x2="1027" y2="541.55" stroke="#ddd" stroke-width="1.5"/>
<text x="1020.5" y="548.8" font-size="18.02" fill="#d8d8d8" textLength="22.0" lengthAdjust="spacingAndGlyphs" text-anchor="end">-15</text>
<line x1="1027" y1="541.55" x2="1027" y2="548" stroke="#ddd" stroke-width="1.5"/>
<line x1="1176" y1="541.55" x2="1176" y2="548" stroke="#ddd" stroke-width="1.5"/>
<text x="1101.5" y="560.5" font-size="17.44" fill="#d8d8d8" textLength="37.0" lengthAdjust="spacingAndGlyphs" text-anchor="middle">100%</text>
<text x="1088.5" y="139.0" font-size="18.17" fill="#d8d8d8" textLength="42.0" lengthAdjust="spacingAndGlyphs" text-anchor="middle">DeltaH</text>
<rect x="1042.5" y="328.9" width="118.0" height="15.1" fill="url(#yelH)" stroke="#000" stroke-width="1.6"/>
<rect x="586.5" y="582" width="610.5" height="203" fill="#000"/>
<rect x="608.2" y="590" width="102" height="84" fill="#c0c1a8"/>
<rect x="608.2" y="674" width="102" height="82" fill="#c1c1a6"/>
<rect x="608.7" y="590.8" width="101" height="164.4" fill="none" stroke="#fff" stroke-width="1"/>
<text x="659.2" y="775.0" font-size="15.70" fill="#fff" textLength="25.0" lengthAdjust="spacingAndGlyphs" text-anchor="middle">20%</text>
<rect x="727" y="590" width="102" height="84" fill="#bec188"/>
<rect x="727" y="674" width="102" height="82" fill="#c1c086"/>
<rect x="727.5" y="590.8" width="101" height="164.4" fill="none" stroke="#fff" stroke-width="1"/>
<text x="778.0" y="775.0" font-size="15.70" fill="#fff" textLength="25.0" lengthAdjust="spacingAndGlyphs" text-anchor="middle">40%</text>
<rect x="846" y="590" width="102" height="84" fill="#bfc170"/>
<rect x="846" y="674" width="102" height="82" fill="#c3c16c"/>
<rect x="846.5" y="590.8" width="101" height="164.4" fill="none" stroke="#fff" stroke-width="1"/>
<text x="897.0" y="775.0" font-size="15.70" fill="#fff" textLength="25.0" lengthAdjust="spacingAndGlyphs" text-anchor="middle">60%</text>
<rect x="966" y="590" width="102" height="84" fill="#bebe4c"/>
<rect x="966" y="674" width="102" height="82" fill="#c2c04d"/>
<rect x="966.5" y="590.8" width="101" height="164.4" fill="none" stroke="#fff" stroke-width="1"/>
<text x="1017.0" y="775.0" font-size="15.70" fill="#fff" textLength="25.0" lengthAdjust="spacingAndGlyphs" text-anchor="middle">80%</text>
<rect x="1085" y="590" width="102" height="84" fill="#bfbf00"/>
<rect x="1085" y="674" width="102" height="82" fill="#c5c120"/>
<rect x="1085.5" y="590.8" width="101" height="164.4" fill="none" stroke="#fff" stroke-width="1"/>
<text x="1136.0" y="775.0" font-size="15.70" fill="#fff" textLength="32.0" lengthAdjust="spacingAndGlyphs" text-anchor="middle">100%</text>
<text transform="translate(600.5 627) rotate(-90)" font-size="15.2" fill="#fff" text-anchor="middle" textLength="43" lengthAdjust="spacingAndGlyphs">Actual</text>
<text transform="translate(600.5 719) rotate(-90)" font-size="15.2" fill="#fff" text-anchor="middle" textLength="43" lengthAdjust="spacingAndGlyphs">Target</text>
<rect x="1203" y="106" width="717" height="696" fill="#1c1c1c"/>
<rect x="1211" y="114" width="701" height="680" fill="#333333"/>
<rect x="1249.5" y="143" width="658.5" height="615.2" fill="#232323"/>
<text x="1560.7" y="136.7" font-size="17.88" fill="#d8d8d8" textLength="86.0" lengthAdjust="spacingAndGlyphs" text-anchor="middle">CIE 1976 u'v'</text>
<defs><clipPath id="hs"><path d="M1531.1 741.3 L1531.0 741.4 L1531.0 741.4 L1530.9 741.5 L1530.8 741.5 L1530.7 741.6 L1530.6 741.7 L1530.5 741.7 L1530.4 741.8 L1530.3 741.9 L1530.2 741.9 L1530.0 742.0 L1529.8 742.0 L1529.7 742.0 L1529.5 742.1 L1529.3 742.1 L1529.1 742.1 L1528.9 742.1 L1528.6 742.0 L1528.3 742.0 L1528.0 741.9 L1527.6 741.9 L1527.2 741.8 L1526.7 741.5 L1526.0 741.0 L1525.2 740.4 L1524.3 739.7 L1523.3 738.8 L1522.2 737.8 L1520.8 736.6 L1519.3 735.2 L1517.7 733.5 L1515.9 731.7 L1513.9 729.7 L1511.8 727.6 L1509.4 725.1 L1506.8 722.5 L1504.0 719.7 L1501.0 716.7 L1497.8 713.6 L1494.3 710.1 L1490.5 706.3 L1486.4 702.1 L1481.7 697.3 L1476.4 691.8 L1470.9 686.0 L1465.3 680.1 L1460.0 674.4 L1455.3 669.2 L1451.4 664.7 L1447.9 660.8 L1444.8 657.0 L1441.7 653.1 L1438.4 648.8 L1434.8 643.8 L1430.6 638.2 L1426.3 632.2 L1421.8 625.7 L1417.2 618.9 L1412.4 611.6 L1407.5 603.9 L1402.4 595.8 L1397.2 587.3 L1391.8 578.4 L1386.4 569.1 L1380.8 559.4 L1375.2 549.3 L1369.6 538.9 L1363.8 527.9 L1357.9 516.6 L1352.0 505.0 L1346.1 493.2 L1340.3 481.4 L1334.5 469.4 L1328.7 457.2 L1322.9 444.8 L1317.3 432.4 L1311.8 420.1 L1306.7 407.9 L1301.8 395.9 L1297.0 383.8 L1292.5 371.8 L1288.2 360.0 L1284.2 348.5 L1280.4 337.4 L1276.8 326.7 L1273.5 316.2 L1270.4 306.0 L1267.5 296.2 L1264.9 286.8 L1262.5 277.9 L1260.4 269.5 L1258.6 261.6 L1256.9 254.0 L1255.5 246.9 L1254.3 240.2 L1253.3 233.7 L1252.5 227.7 L1251.8 222.1 L1251.4 216.9 L1251.1 212.0 L1251.0 207.4 L1251.1 203.0 L1251.3 198.8 L1251.6 194.9 L1252.2 191.3 L1252.8 187.9 L1253.7 184.8 L1254.6 181.8 L1255.7 179.1 L1256.9 176.5 L1258.3 174.2 L1259.7 172.1 L1261.3 170.2 L1263.0 168.4 L1264.7 166.8 L1266.6 165.5 L1268.5 164.3 L1270.6 163.3 L1272.7 162.4 L1274.8 161.6 L1277.1 160.9 L1279.3 160.3 L1281.7 159.9 L1284.1 159.6 L1286.5 159.3 L1289.0 159.0 L1291.5 158.8 L1294.0 158.6 L1296.6 158.5 L1299.2 158.5 L1301.8 158.4 L1304.4 158.4 L1307.0 158.4 L1309.6 158.4 L1312.2 158.4 L1314.8 158.5 L1317.4 158.5 L1320.0 158.6 L1322.7 158.7 L1325.4 158.9 L1328.1 159.0 L1330.8 159.2 L1333.6 159.4 L1336.4 159.6 L1339.2 159.8 L1342.1 160.0 L1345.0 160.3 L1347.9 160.5 L1350.9 160.8 L1354.0 161.1 L1357.0 161.4 L1360.1 161.7 L1363.3 162.1 L1366.5 162.4 L1369.8 162.8 L1373.1 163.2 L1376.4 163.6 L1379.8 164.0 L1383.3 164.4 L1386.8 164.9 L1390.4 165.3 L1394.1 165.8 L1397.8 166.2 L1401.6 166.7 L1405.4 167.2 L1409.3 167.7 L1413.3 168.3 L1417.4 168.8 L1421.5 169.3 L1425.7 169.9 L1429.9 170.5 L1434.2 171.1 L1438.6 171.7 L1443.1 172.3 L1447.7 172.9 L1452.3 173.5 L1457.0 174.2 L1461.8 174.8 L1466.7 175.5 L1471.6 176.2 L1476.7 176.9 L1481.8 177.6 L1486.9 178.3 L1492.2 179.0 L1497.5 179.8 L1503.0 180.5 L1508.5 181.3 L1514.0 182.1 L1519.7 182.9 L1525.4 183.7 L1531.2 184.5 L1537.1 185.3 L1543.1 186.1 L1549.1 187.0 L1555.3 187.8 L1561.4 188.7 L1567.7 189.6 L1574.0 190.4 L1580.4 191.3 L1586.8 192.2 L1593.3 193.1 L1599.8 194.0 L1606.4 194.9 L1613.0 195.9 L1619.6 196.8 L1626.3 197.7 L1633.0 198.7 L1639.7 199.6 L1646.4 200.5 L1653.0 201.5 L1659.6 202.4 L1666.1 203.3 L1672.6 204.2 L1679.0 205.1 L1685.5 206.0 L1691.9 206.9 L1698.3 207.8 L1704.7 208.7 L1711.1 209.6 L1717.4 210.4 L1723.6 211.3 L1729.7 212.1 L1735.3 212.9 L1740.5 213.6 L1745.6 214.4 L1751.0 215.1 L1757.0 215.9 L1763.9 216.9 L1772.2 218.0 L1781.6 219.3 L1791.6 220.7 L1801.6 222.2 L1811.3 223.5 L1819.9 224.7 L1827.6 225.8 L1834.8 226.8 L1841.5 227.7 L1847.8 228.6 L1853.8 229.4 L1859.7 230.2 L1865.2 231.0 L1870.5 231.8 L1875.5 232.5 L1880.2 233.1 L1884.6 233.7 L1888.7 234.3 L1892.6 234.8 L1896.1 235.3 L1899.4 235.8 L1902.4 236.2 L1905.3 236.6 L1907.9 237.0 L1910.2 237.3 L1912.3 237.6 L1914.2 237.8 L1915.9 238.1 L1917.5 238.3 L1919.3 238.5 L1921.1 238.8 L1922.9 239.1 L1924.7 239.3 L1926.4 239.5 L1927.9 239.7 L1929.2 239.9 L1930.2 240.1 L1931.0 240.2 L1931.7 240.3 L1932.2 240.4 L1932.6 240.4 L1933.0 240.5Z"/></clipPath><clipPath id="plot"><rect x="1250.5" y="144" width="656.5" height="613.2"/></clipPath>
<clipPath id="tri"><path d="M1743.6 223.7 L1386.5 183.2 L1441.8 596.9Z"/></clipPath>
<filter id="bl" x="-10%" y="-10%" width="120%" height="120%"><feGaussianBlur stdDeviation="6.5"/></filter></defs>
<style>.co rect{width:10px;height:10px}.ci rect{width:7px;height:7px}</style>
<defs><filter id="blo" x="-10%" y="-10%" width="120%" height="120%"><feGaussianBlur stdDeviation="7"/></filter><filter id="bli" x="-10%" y="-10%" width="120%" height="120%"><feGaussianBlur stdDeviation="4.5"/></filter></defs>
<g clip-path="url(#plot)"><g clip-path="url(#hs)"><g class="co" filter="url(#blo)">
<rect x="1289" y="143" width="10" height="10" fill="#009900"/>
<rect x="1299" y="143" width="10" height="10" fill="#009900"/>
<rect x="1309" y="143" width="10" height="10" fill="#009900"/>
<rect x="1319" y="143" width="10" height="10" fill="#009900"/>
<rect x="1259" y="153" width="10" height="10" fill="#009900"/>
<rect x="1269" y="153" width="10" height="10" fill="#009900"/>
<rect x="1279" y="153" width="10" height="10" fill="#009900"/>
<rect x="1289" y="153" width="10" height="10" fill="#009900"/>
<rect x="1299" y="153" width="10" height="10" fill="#009900"/>
<rect x="1309" y="153" width="10" height="10" fill="#009900"/>
<rect x="1319" y="153" width="10" height="10" fill="#009900"/>
<rect x="1329" y="153" width="10" height="10" fill="#009900"/>
<rect x="1339" y="153" width="10" height="10" fill="#009900"/>
<rect x="1349" y="153" width="10" height="10" fill="#009900"/>
<rect x="1359" y="153" width="10" height="10" fill="#009900"/>
<rect x="1369" y="153" width="10" height="10" fill="#009900"/>
<rect x="1379" y="153" width="10" height="10" fill="#019900"/>
<rect x="1389" y="153" width="10" height="10" fill="#0e9900"/>
<rect x="1399" y="153" width="10" height="10" fill="#1c9900"/>
<rect x="1409" y="153" width="10" height="10" fill="#2b9900"/>
<rect x="1249" y="163" width="10" height="10" fill="#009900"/>
<rect x="1259" y="163" width="10" height="10" fill="#009900"/>
<rect x="1269" y="163" width="10" height="10" fill="#009900"/>
<rect x="1279" y="163" width="10" height="10" fill="#009900"/>
<rect x="1289" y="163" width="10" height="10" fill="#009900"/>
<rect x="1299" y="163" width="10" height="10" fill="#009900"/>
<rect x="1309" y="163" width="10" height="10" fill="#009900"/>
<rect x="1319" y="163" width="10" height="10" fill="#009900"/>
<rect x="1329" y="163" width="10" height="10" fill="#009900"/>
<rect x="1339" y="163" width="10" height="10" fill="#009900"/>
<rect x="1349" y="163" width="10" height="10" fill="#009900"/>
<rect x="1359" y="163" width="10" height="10" fill="#009900"/>
<rect x="1369" y="163" width="10" height="10" fill="#009900"/>
<rect x="1379" y="163" width="10" height="10" fill="#009900"/>
<rect x="1389" y="163" width="10" height="10" fill="#0d9900"/>
<rect x="1399" y="163" width="10" height="10" fill="#1b9900"/>
<rect x="1409" y="163" width="10" height="10" fill="#2a9900"/>
<rect x="1419" y="163" width="10" height="10" fill="#399900"/>
<rect x="1429" y="163" width="10" height="10" fill="#4a9900"/>
<rect x="1439" y="163" width="10" height="10" fill="#5b9900"/>
<rect x="1449" y="163" width="10" height="10" fill="#6e9900"/>
<rect x="1459" y="163" width="10" height="10" fill="#829900"/>
<rect x="1469" y="163" width="10" height="10" fill="#979900"/>
<rect x="1479" y="163" width="10" height="10" fill="#998700"/>
<rect x="1249" y="173" width="10" height="10" fill="#009908"/>
<rect x="1259" y="173" width="10" height="10" fill="#009907"/>
<rect x="1269" y="173" width="10" height="10" fill="#009906"/>
<rect x="1279" y="173" width="10" height="10" fill="#009905"/>
<rect x="1289" y="173" width="10" height="10" fill="#009904"/>
<rect x="1299" y="173" width="10" height="10" fill="#009904"/>
<rect x="1309" y="173" width="10" height="10" fill="#009903"/>
<rect x="1319" y="173" width="10" height="10" fill="#009902"/>
<rect x="1329" y="173" width="10" height="10" fill="#009901"/>
<rect x="1339" y="173" width="10" height="10" fill="#009900"/>
<rect x="1349" y="173" width="10" height="10" fill="#009900"/>
<rect x="1359" y="173" width="10" height="10" fill="#009900"/>
<rect x="1369" y="173" width="10" height="10" fill="#009900"/>
<rect x="1379" y="173" width="10" height="10" fill="#009900"/>
<rect x="1389" y="173" width="10" height="10" fill="#0b9900"/>
<rect x="1399" y="173" width="10" height="10" fill="#1a9900"/>
<rect x="1409" y="173" width="10" height="10" fill="#299900"/>
<rect x="1419" y="173" width="10" height="10" fill="#399900"/>
<rect x="1429" y="173" width="10" height="10" fill="#4a9900"/>
<rect x="1439" y="173" width="10" height="10" fill="#5c9900"/>
<rect x="1449" y="173" width="10" height="10" fill="#6f9900"/>
<rect x="1459" y="173" width="10" height="10" fill="#839900"/>
<rect x="1469" y="173" width="10" height="10" fill="#989900"/>
<rect x="1479" y="173" width="10" height="10" fill="#998500"/>
<rect x="1489" y="173" width="10" height="10" fill="#997500"/>
<rect x="1499" y="173" width="10" height="10" fill="#996700"/>
<rect x="1509" y="173" width="10" height="10" fill="#995c00"/>
<rect x="1519" y="173" width="10" height="10" fill="#995200"/>
<rect x="1529" y="173" width="10" height="10" fill="#994a00"/>
<rect x="1539" y="173" width="10" height="10" fill="#994200"/>
<rect x="1549" y="173" width="10" height="10" fill="#993c00"/>
<rect x="1559" y="173" width="10" height="10" fill="#993600"/>
<rect x="1239" y="183" width="10" height="10" fill="#009910"/>
<rect x="1249" y="183" width="10" height="10" fill="#009910"/>
<rect x="1259" y="183" width="10" height="10" fill="#00990f"/>
<rect x="1269" y="183" width="10" height="10" fill="#00990e"/>
<rect x="1279" y="183" width="10" height="10" fill="#00990e"/>
<rect x="1289" y="183" width="10" height="10" fill="#00990d"/>
<rect x="1299" y="183" width="10" height="10" fill="#00990c"/>
<rect x="1309" y="183" width="10" height="10" fill="#00990c"/>
<rect x="1319" y="183" width="10" height="10" fill="#00990b"/>
<rect x="1329" y="183" width="10" height="10" fill="#00990a"/>
<rect x="1339" y="183" width="10" height="10" fill="#009909"/>
<rect x="1349" y="183" width="10" height="10" fill="#009908"/>
<rect x="1359" y="183" width="10" height="10" fill="#009907"/>
<rect x="1369" y="183" width="10" height="10" fill="#009906"/>
<rect x="1379" y="183" width="10" height="10" fill="#009905"/>
<rect x="1389" y="183" width="10" height="10" fill="#0a9904"/>
<rect x="1399" y="183" width="10" height="10" fill="#189903"/>
<rect x="1409" y="183" width="10" height="10" fill="#289902"/>
<rect x="1419" y="183" width="10" height="10" fill="#389901"/>
<rect x="1429" y="183" width="10" height="10" fill="#499900"/>
<rect x="1439" y="183" width="10" height="10" fill="#5c9900"/>
<rect x="1449" y="183" width="10" height="10" fill="#6f9900"/>
<rect x="1459" y="183" width="10" height="10" fill="#849900"/>
<rect x="1469" y="183" width="10" height="10" fill="#999800"/>
<rect x="1479" y="183" width="10" height="10" fill="#998400"/>
<rect x="1489" y="183" width="10" height="10" fill="#997300"/>
<rect x="1499" y="183" width="10" height="10" fill="#996600"/>
<rect x="1509" y="183" width="10" height="10" fill="#995a00"/>
<rect x="1519" y="183" width="10" height="10" fill="#995000"/>
<rect x="1529" y="183" width="10" height="10" fill="#994800"/>
<rect x="1539" y="183" width="10" height="10" fill="#994000"/>
<rect x="1549" y="183" width="10" height="10" fill="#993a00"/>
<rect x="1559" y="183" width="10" height="10" fill="#993400"/>
<rect x="1569" y="183" width="10" height="10" fill="#992f00"/>
<rect x="1579" y="183" width="10" height="10" fill="#992a00"/>
<rect x="1589" y="183" width="10" height="10" fill="#992600"/>
<rect x="1599" y="183" width="10" height="10" fill="#992200"/>
<rect x="1609" y="183" width="10" height="10" fill="#991f00"/>
<rect x="1619" y="183" width="10" height="10" fill="#991c00"/>
<rect x="1629" y="183" width="10" height="10" fill="#991900"/>
<rect x="1239" y="193" width="10" height="10" fill="#009918"/>
<rect x="1249" y="193" width="10" height="10" fill="#009918"/>
<rect x="1259" y="193" width="10" height="10" fill="#009917"/>
<rect x="1269" y="193" width="10" height="10" fill="#009917"/>
<rect x="1279" y="193" width="10" height="10" fill="#009916"/>
<rect x="1289" y="193" width="10" height="10" fill="#009916"/>
<rect x="1299" y="193" width="10" height="10" fill="#009915"/>
<rect x="1309" y="193" width="10" height="10" fill="#009915"/>
<rect x="1319" y="193" width="10" height="10" fill="#009914"/>
<rect x="1329" y="193" width="10" height="10" fill="#009914"/>
<rect x="1339" y="193" width="10" height="10" fill="#009913"/>
<rect x="1349" y="193" width="10" height="10" fill="#009912"/>
<rect x="1359" y="193" width="10" height="10" fill="#009912"/>
<rect x="1369" y="193" width="10" height="10" fill="#009911"/>
<rect x="1379" y="193" width="10" height="10" fill="#009910"/>
<rect x="1389" y="193" width="10" height="10" fill="#08990f"/>
<rect x="1399" y="193" width="10" height="10" fill="#17990e"/>
<rect x="1409" y="193" width="10" height="10" fill="#27990e"/>
<rect x="1419" y="193" width="10" height="10" fill="#37990d"/>
<rect x="1429" y="193" width="10" height="10" fill="#49990c"/>
<rect x="1439" y="193" width="10" height="10" fill="#5c990b"/>
<rect x="1449" y="193" width="10" height="10" fill="#709909"/>
<rect x="1459" y="193" width="10" height="10" fill="#859908"/>
<rect x="1469" y="193" width="10" height="10" fill="#999607"/>
<rect x="1479" y="193" width="10" height="10" fill="#998205"/>
<rect x="1489" y="193" width="10" height="10" fill="#997103"/>
<rect x="1499" y="193" width="10" height="10" fill="#996402"/>
<rect x="1509" y="193" width="10" height="10" fill="#995800"/>
<rect x="1519" y="193" width="10" height="10" fill="#994e00"/>
<rect x="1529" y="193" width="10" height="10" fill="#994600"/>
<rect x="1539" y="193" width="10" height="10" fill="#993f00"/>
<rect x="1549" y="193" width="10" height="10" fill="#993800"/>
<rect x="1559" y="193" width="10" height="10" fill="#993200"/>
<rect x="1569" y="193" width="10" height="10" fill="#992d00"/>
<rect x="1579" y="193" width="10" height="10" fill="#992900"/>
<rect x="1589" y="193" width="10" height="10" fill="#992500"/>
<rect x="1599" y="193" width="10" height="10" fill="#992100"/>
<rect x="1609" y="193" width="10" height="10" fill="#991d00"/>
<rect x="1619" y="193" width="10" height="10" fill="#991a00"/>
<rect x="1629" y="193" width="10" height="10" fill="#991700"/>
<rect x="1639" y="193" width="10" height="10" fill="#991500"/>
<rect x="1649" y="193" width="10" height="10" fill="#991200"/>
<rect x="1659" y="193" width="10" height="10" fill="#991000"/>
<rect x="1669" y="193" width="10" height="10" fill="#990e00"/>
<rect x="1679" y="193" width="10" height="10" fill="#990c00"/>
<rect x="1689" y="193" width="10" height="10" fill="#990a00"/>
<rect x="1699" y="193" width="10" height="10" fill="#990800"/>
<rect x="1239" y="203" width="10" height="10" fill="#009921"/>
<rect x="1249" y="203" width="10" height="10" fill="#009920"/>
<rect x="1259" y="203" width="10" height="10" fill="#009920"/>
<rect x="1269" y="203" width="10" height="10" fill="#009920"/>
<rect x="1279" y="203" width="10" height="10" fill="#00991f"/>
<rect x="1289" y="203" width="10" height="10" fill="#00991f"/>
<rect x="1299" y="203" width="10" height="10" fill="#00991f"/>
<rect x="1309" y="203" width="10" height="10" fill="#00991e"/>
<rect x="1319" y="203" width="10" height="10" fill="#00991e"/>
<rect x="1329" y="203" width="10" height="10" fill="#00991e"/>
<rect x="1339" y="203" width="10" height="10" fill="#00991d"/>
<rect x="1349" y="203" width="10" height="10" fill="#00991d"/>
<rect x="1359" y="203" width="10" height="10" fill="#00991c"/>
<rect x="1369" y="203" width="10" height="10" fill="#00991c"/>
<rect x="1379" y="203" width="10" height="10" fill="#00991b"/>
<rect x="1389" y="203" width="10" height="10" fill="#06991b"/>
<rect x="1399" y="203" width="10" height="10" fill="#15991a"/>
<rect x="1409" y="203" width="10" height="10" fill="#25991a"/>
<rect x="1419" y="203" width="10" height="10" fill="#369919"/>
<rect x="1429" y="203" width="10" height="10" fill="#499919"/>
<rect x="1439" y="203" width="10" height="10" fill="#5c9918"/>
<rect x="1449" y="203" width="10" height="10" fill="#709917"/>
<rect x="1459" y="203" width="10" height="10" fill="#869916"/>
<rect x="1469" y="203" width="10" height="10" fill="#999415"/>
<rect x="1479" y="203" width="10" height="10" fill="#998011"/>
<rect x="1489" y="203" width="10" height="10" fill="#996f0e"/>
<rect x="1499" y="203" width="10" height="10" fill="#99620c"/>
<rect x="1509" y="203" width="10" height="10" fill="#99560a"/>
<rect x="1519" y="203" width="10" height="10" fill="#994c08"/>
<rect x="1529" y="203" width="10" height="10" fill="#994407"/>
<rect x="1539" y="203" width="10" height="10" fill="#993d05"/>
<rect x="1549" y="203" width="10" height="10" fill="#993604"/>
<rect x="1559" y="203" width="10" height="10" fill="#993103"/>
<rect x="1569" y="203" width="10" height="10" fill="#992c02"/>
<rect x="1579" y="203" width="10" height="10" fill="#992701"/>
<rect x="1589" y="203" width="10" height="10" fill="#992301"/>
<rect x="1599" y="203" width="10" height="10" fill="#991f00"/>
<rect x="1609" y="203" width="10" height="10" fill="#991c00"/>
<rect x="1619" y="203" width="10" height="10" fill="#991900"/>
<rect x="1629" y="203" width="10" height="10" fill="#991600"/>
<rect x="1639" y="203" width="10" height="10" fill="#991400"/>
<rect x="1649" y="203" width="10" height="10" fill="#991100"/>
<rect x="1659" y="203" width="10" height="10" fill="#990f00"/>
<rect x="1669" y="203" width="10" height="10" fill="#990d00"/>
<rect x="1679" y="203" width="10" height="10" fill="#990b00"/>
<rect x="1689" y="203" width="10" height="10" fill="#990900"/>
<rect x="1699" y="203" width="10" height="10" fill="#990700"/>
<rect x="1709" y="203" width="10" height="10" fill="#990600"/>
<rect x="1719" y="203" width="10" height="10" fill="#990400"/>
<rect x="1729" y="203" width="10" height="10" fill="#990300"/>
<rect x="1739" y="203" width="10" height="10" fill="#990200"/>
<rect x="1749" y="203" width="10" height="10" fill="#990000"/>
<rect x="1759" y="203" width="10" height="10" fill="#990000"/>
<rect x="1769" y="203" width="10" height="10" fill="#990000"/>
<rect x="1239" y="213" width="10" height="10" fill="#009929"/>
<rect x="1249" y="213" width="10" height="10" fill="#009929"/>
<rect x="1259" y="213" width="10" height="10" fill="#009929"/>
<rect x="1269" y="213" width="10" height="10" fill="#009929"/>
<rect x="1279" y="213" width="10" height="10" fill="#009929"/>
<rect x="1289" y="213" width="10" height="10" fill="#009929"/>
<rect x="1299" y="213" width="10" height="10" fill="#009928"/>
<rect x="1309" y="213" width="10" height="10" fill="#009928"/>
<rect x="1319" y="213" width="10" height="10" fill="#009928"/>
<rect x="1329" y="213" width="10" height="10" fill="#009928"/>
<rect x="1339" y="213" width="10" height="10" fill="#009928"/>
<rect x="1349" y="213" width="10" height="10" fill="#009928"/>
<rect x="1359" y="213" width="10" height="10" fill="#009928"/>
<rect x="1369" y="213" width="10" height="10" fill="#009927"/>
<rect x="1379" y="213" width="10" height="10" fill="#009927"/>
<rect x="1389" y="213" width="10" height="10" fill="#049927"/>
<rect x="1399" y="213" width="10" height="10" fill="#149927"/>
<rect x="1499" y="213" width="10" height="10" fill="#996016"/>
<rect x="1509" y="213" width="10" height="10" fill="#995413"/>
<rect x="1519" y="213" width="10" height="10" fill="#994b11"/>
<rect x="1529" y="213" width="10" height="10" fill="#99420f"/>
<rect x="1539" y="213" width="10" height="10" fill="#993b0d"/>
<rect x="1549" y="213" width="10" height="10" fill="#99350b"/>
<rect x="1559" y="213" width="10" height="10" fill="#992f0a"/>
<rect x="1569" y="213" width="10" height="10" fill="#992a09"/>
<rect x="1579" y="213" width="10" height="10" fill="#992608"/>
<rect x="1589" y="213" width="10" height="10" fill="#992207"/>
<rect x="1599" y="213" width="10" height="10" fill="#991e06"/>
<rect x="1609" y="213" width="10" height="10" fill="#991b05"/>
<rect x="1619" y="213" width="10" height="10" fill="#991804"/>
<rect x="1629" y="213" width="10" height="10" fill="#991503"/>
<rect x="1639" y="213" width="10" height="10" fill="#991203"/>
<rect x="1649" y="213" width="10" height="10" fill="#991002"/>
<rect x="1659" y="213" width="10" height="10" fill="#990e01"/>
<rect x="1669" y="213" width="10" height="10" fill="#990c01"/>
<rect x="1679" y="213" width="10" height="10" fill="#990a00"/>
<rect x="1689" y="213" width="10" height="10" fill="#990800"/>
<rect x="1699" y="213" width="10" height="10" fill="#990600"/>
<rect x="1709" y="213" width="10" height="10" fill="#990500"/>
<rect x="1719" y="213" width="10" height="10" fill="#990300"/>
<rect x="1729" y="213" width="10" height="10" fill="#990200"/>
<rect x="1739" y="213" width="10" height="10" fill="#990100"/>
<rect x="1749" y="213" width="10" height="10" fill="#990000"/>
<rect x="1759" y="213" width="10" height="10" fill="#990000"/>
<rect x="1769" y="213" width="10" height="10" fill="#990000"/>
<rect x="1779" y="213" width="10" height="10" fill="#990000"/>
<rect x="1789" y="213" width="10" height="10" fill="#990000"/>
<rect x="1799" y="213" width="10" height="10" fill="#990000"/>
<rect x="1809" y="213" width="10" height="10" fill="#990000"/>
<rect x="1819" y="213" width="10" height="10" fill="#990000"/>
<rect x="1829" y="213" width="10" height="10" fill="#990000"/>
<rect x="1839" y="213" width="10" height="10" fill="#990000"/>
<rect x="1239" y="223" width="10" height="10" fill="#009932"/>
<rect x="1249" y="223" width="10" height="10" fill="#009932"/>
<rect x="1259" y="223" width="10" height="10" fill="#009932"/>
<rect x="1269" y="223" width="10" height="10" fill="#009932"/>
<rect x="1279" y="223" width="10" height="10" fill="#009932"/>
<rect x="1289" y="223" width="10" height="10" fill="#009932"/>
<rect x="1299" y="223" width="10" height="10" fill="#009933"/>
<rect x="1309" y="223" width="10" height="10" fill="#009933"/>
<rect x="1319" y="223" width="10" height="10" fill="#009933"/>
<rect x="1329" y="223" width="10" height="10" fill="#009933"/>
<rect x="1339" y="223" width="10" height="10" fill="#009933"/>
<rect x="1349" y="223" width="10" height="10" fill="#009933"/>
<rect x="1359" y="223" width="10" height="10" fill="#009933"/>
<rect x="1369" y="223" width="10" height="10" fill="#009933"/>
<rect x="1379" y="223" width="10" height="10" fill="#009934"/>
<rect x="1389" y="223" width="10" height="10" fill="#029934"/>
<rect x="1399" y="223" width="10" height="10" fill="#129934"/>
<rect x="1409" y="223" width="10" height="10" fill="#239934"/>
<rect x="1589" y="223" width="10" height="10" fill="#99200c"/>
<rect x="1599" y="223" width="10" height="10" fill="#991c0b"/>
<rect x="1609" y="223" width="10" height="10" fill="#99190a"/>
<rect x="1619" y="223" width="10" height="10" fill="#991609"/>
<rect x="1629" y="223" width="10" height="10" fill="#991308"/>
<rect x="1639" y="223" width="10" height="10" fill="#991107"/>
<rect x="1649" y="223" width="10" height="10" fill="#990f07"/>
<rect x="1659" y="223" width="10" height="10" fill="#990c06"/>
<rect x="1669" y="223" width="10" height="10" fill="#990a05"/>
<rect x="1679" y="223" width="10" height="10" fill="#990904"/>
<rect x="1689" y="223" width="10" height="10" fill="#990704"/>
<rect x="1699" y="223" width="10" height="10" fill="#990503"/>
<rect x="1709" y="223" width="10" height="10" fill="#990403"/>
<rect x="1719" y="223" width="10" height="10" fill="#990202"/>
<rect x="1729" y="223" width="10" height="10" fill="#990102"/>
<rect x="1739" y="223" width="10" height="10" fill="#990001"/>
<rect x="1749" y="223" width="10" height="10" fill="#990001"/>
<rect x="1759" y="223" width="10" height="10" fill="#990001"/>
<rect x="1769" y="223" width="10" height="10" fill="#990000"/>
<rect x="1779" y="223" width="10" height="10" fill="#990000"/>
<rect x="1789" y="223" width="10" height="10" fill="#990000"/>
<rect x="1799" y="223" width="10" height="10" fill="#990000"/>
<rect x="1809" y="223" width="10" height="10" fill="#990000"/>
<rect x="1819" y="223" width="10" height="10" fill="#990000"/>
<rect x="1829" y="223" width="10" height="10" fill="#990000"/>
<rect x="1839" y="223" width="10" height="10" fill="#990000"/>
<rect x="1849" y="223" width="10" height="10" fill="#990000"/>
<rect x="1859" y="223" width="10" height="10" fill="#990000"/>
<rect x="1869" y="223" width="10" height="10" fill="#990000"/>
<rect x="1879" y="223" width="10" height="10" fill="#990000"/>
<rect x="1889" y="223" width="10" height="10" fill="#990000"/>
<rect x="1899" y="223" width="10" height="10" fill="#990000"/>
<rect x="1909" y="223" width="10" height="10" fill="#990000"/>
<rect x="1239" y="233" width="10" height="10" fill="#00993b"/>
<rect x="1249" y="233" width="10" height="10" fill="#00993b"/>
<rect x="1259" y="233" width="10" height="10" fill="#00993c"/>
<rect x="1269" y="233" width="10" height="10" fill="#00993c"/>
<rect x="1279" y="233" width="10" height="10" fill="#00993c"/>
<rect x="1289" y="233" width="10" height="10" fill="#00993d"/>
<rect x="1299" y="233" width="10" height="10" fill="#00993d"/>
<rect x="1309" y="233" width="10" height="10" fill="#00993d"/>
<rect x="1319" y="233" width="10" height="10" fill="#00993e"/>
<rect x="1329" y="233" width="10" height="10" fill="#00993e"/>
<rect x="1339" y="233" width="10" height="10" fill="#00993f"/>
<rect x="1349" y="233" width="10" height="10" fill="#00993f"/>
<rect x="1359" y="233" width="10" height="10" fill="#00993f"/>
<rect x="1369" y="233" width="10" height="10" fill="#009940"/>
<rect x="1379" y="233" width="10" height="10" fill="#009940"/>
<rect x="1389" y="233" width="10" height="10" fill="#009941"/>
<rect x="1399" y="233" width="10" height="10" fill="#109942"/>
<rect x="1409" y="233" width="10" height="10" fill="#229942"/>
<rect x="1679" y="233" width="10" height="10" fill="#990709"/>
<rect x="1689" y="233" width="10" height="10" fill="#990608"/>
<rect x="1699" y="233" width="10" height="10" fill="#990407"/>
<rect x="1709" y="233" width="10" height="10" fill="#990306"/>
<rect x="1719" y="233" width="10" height="10" fill="#990106"/>
<rect x="1729" y="233" width="10" height="10" fill="#990005"/>
<rect x="1739" y="233" width="10" height="10" fill="#990005"/>
<rect x="1749" y="233" width="10" height="10" fill="#990004"/>
<rect x="1759" y="233" width="10" height="10" fill="#990004"/>
<rect x="1769" y="233" width="10" height="10" fill="#990003"/>
<rect x="1779" y="233" width="10" height="10" fill="#990003"/>
<rect x="1789" y="233" width="10" height="10" fill="#990003"/>
<rect x="1799" y="233" width="10" height="10" fill="#990002"/>
<rect x="1809" y="233" width="10" height="10" fill="#990002"/>
<rect x="1819" y="233" width="10" height="10" fill="#990001"/>
<rect x="1829" y="233" width="10" height="10" fill="#990001"/>
<rect x="1839" y="233" width="10" height="10" fill="#990001"/>
<rect x="1849" y="233" width="10" height="10" fill="#990000"/>
<rect x="1859" y="233" width="10" height="10" fill="#990000"/>
<rect x="1869" y="233" width="10" height="10" fill="#990000"/>
<rect x="1879" y="233" width="10" height="10" fill="#990000"/>
<rect x="1889" y="233" width="10" height="10" fill="#990000"/>
<rect x="1899" y="233" width="10" height="10" fill="#990000"/>
<rect x="1909" y="233" width="10" height="10" fill="#990000"/>
<rect x="1919" y="233" width="10" height="10" fill="#990000"/>
<rect x="1249" y="243" width="10" height="10" fill="#009945"/>
<rect x="1259" y="243" width="10" height="10" fill="#009946"/>
<rect x="1269" y="243" width="10" height="10" fill="#009946"/>
<rect x="1279" y="243" width="10" height="10" fill="#009947"/>
<rect x="1289" y="243" width="10" height="10" fill="#009947"/>
<rect x="1299" y="243" width="10" height="10" fill="#009948"/>
<rect x="1309" y="243" width="10" height="10" fill="#009949"/>
<rect x="1319" y="243" width="10" height="10" fill="#009949"/>
<rect x="1329" y="243" width="10" height="10" fill="#00994a"/>
<rect x="1339" y="243" width="10" height="10" fill="#00994b"/>
<rect x="1349" y="243" width="10" height="10" fill="#00994b"/>
<rect x="1359" y="243" width="10" height="10" fill="#00994c"/>
<rect x="1369" y="243" width="10" height="10" fill="#00994d"/>
<rect x="1379" y="243" width="10" height="10" fill="#00994e"/>
<rect x="1389" y="243" width="10" height="10" fill="#00994f"/>
<rect x="1399" y="243" width="10" height="10" fill="#0f9950"/>
<rect x="1409" y="243" width="10" height="10" fill="#209951"/>
<rect x="1699" y="243" width="10" height="10" fill="#99030b"/>
<rect x="1709" y="243" width="10" height="10" fill="#99010a"/>
<rect x="1719" y="243" width="10" height="10" fill="#990009"/>
<rect x="1729" y="243" width="10" height="10" fill="#990009"/>
<rect x="1739" y="243" width="10" height="10" fill="#990008"/>
<rect x="1749" y="243" width="10" height="10" fill="#990008"/>
<rect x="1759" y="243" width="10" height="10" fill="#990007"/>
<rect x="1769" y="243" width="10" height="10" fill="#990006"/>
<rect x="1779" y="243" width="10" height="10" fill="#990006"/>
<rect x="1789" y="243" width="10" height="10" fill="#990005"/>
<rect x="1799" y="243" width="10" height="10" fill="#990005"/>
<rect x="1809" y="243" width="10" height="10" fill="#990005"/>
<rect x="1819" y="243" width="10" height="10" fill="#990004"/>
<rect x="1829" y="243" width="10" height="10" fill="#990004"/>
<rect x="1839" y="243" width="10" height="10" fill="#990003"/>
<rect x="1849" y="243" width="10" height="10" fill="#990003"/>
<rect x="1859" y="243" width="10" height="10" fill="#990003"/>
<rect x="1869" y="243" width="10" height="10" fill="#990002"/>
<rect x="1879" y="243" width="10" height="10" fill="#990002"/>
<rect x="1889" y="243" width="10" height="10" fill="#990002"/>
<rect x="1899" y="243" width="10" height="10" fill="#990001"/>
<rect x="1909" y="243" width="10" height="10" fill="#990001"/>
<rect x="1919" y="243" width="10" height="10" fill="#990001"/>
<rect x="1249" y="253" width="10" height="10" fill="#00994f"/>
<rect x="1259" y="253" width="10" height="10" fill="#009950"/>
<rect x="1269" y="253" width="10" height="10" fill="#009951"/>
<rect x="1279" y="253" width="10" height="10" fill="#009951"/>
<rect x="1289" y="253" width="10" height="10" fill="#009952"/>
<rect x="1299" y="253" width="10" height="10" fill="#009953"/>
<rect x="1309" y="253" width="10" height="10" fill="#009954"/>
<rect x="1319" y="253" width="10" height="10" fill="#009955"/>
<rect x="1329" y="253" width="10" height="10" fill="#009956"/>
<rect x="1339" y="253" width="10" height="10" fill="#009957"/>
<rect x="1349" y="253" width="10" height="10" fill="#009958"/>
<rect x="1359" y="253" width="10" height="10" fill="#00995a"/>
<rect x="1369" y="253" width="10" height="10" fill="#00995b"/>
<rect x="1379" y="253" width="10" height="10" fill="#00995c"/>
<rect x="1389" y="253" width="10" height="10" fill="#00995e"/>
<rect x="1399" y="253" width="10" height="10" fill="#0d995f"/>
<rect x="1409" y="253" width="10" height="10" fill="#1f9961"/>
<rect x="1689" y="253" width="10" height="10" fill="#990310"/>
<rect x="1699" y="253" width="10" height="10" fill="#99020f"/>
<rect x="1709" y="253" width="10" height="10" fill="#99000e"/>
<rect x="1719" y="253" width="10" height="10" fill="#99000d"/>
<rect x="1729" y="253" width="10" height="10" fill="#99000c"/>
<rect x="1739" y="253" width="10" height="10" fill="#99000c"/>
<rect x="1749" y="253" width="10" height="10" fill="#99000b"/>
<rect x="1759" y="253" width="10" height="10" fill="#99000a"/>
<rect x="1769" y="253" width="10" height="10" fill="#99000a"/>
<rect x="1779" y="253" width="10" height="10" fill="#990009"/>
<rect x="1789" y="253" width="10" height="10" fill="#990008"/>
<rect x="1799" y="253" width="10" height="10" fill="#990008"/>
<rect x="1809" y="253" width="10" height="10" fill="#990007"/>
<rect x="1819" y="253" width="10" height="10" fill="#990007"/>
<rect x="1829" y="253" width="10" height="10" fill="#990006"/>
<rect x="1839" y="253" width="10" height="10" fill="#990006"/>
<rect x="1849" y="253" width="10" height="10" fill="#990006"/>
<rect x="1859" y="253" width="10" height="10" fill="#990005"/>
<rect x="1869" y="253" width="10" height="10" fill="#990005"/>
<rect x="1879" y="253" width="10" height="10" fill="#990004"/>
<rect x="1889" y="253" width="10" height="10" fill="#990004"/>
<rect x="1899" y="253" width="10" height="10" fill="#990004"/>
<rect x="1909" y="253" width="10" height="10" fill="#990003"/>
<rect x="1919" y="253" width="10" height="10" fill="#990003"/>
<rect x="1249" y="263" width="10" height="10" fill="#00995a"/>
<rect x="1259" y="263" width="10" height="10" fill="#00995b"/>
<rect x="1269" y="263" width="10" height="10" fill="#00995c"/>
<rect x="1279" y="263" width="10" height="10" fill="#00995d"/>
<rect x="1289" y="263" width="10" height="10" fill="#00995e"/>
<rect x="1299" y="263" width="10" height="10" fill="#00995f"/>
<rect x="1309" y="263" width="10" height="10" fill="#009960"/>
<rect x="1319" y="263" width="10" height="10" fill="#009961"/>
<rect x="1329" y="263" width="10" height="10" fill="#009963"/>
<rect x="1339" y="263" width="10" height="10" fill="#009964"/>
<rect x="1349" y="263" width="10" height="10" fill="#009966"/>
<rect x="1359" y="263" width="10" height="10" fill="#009967"/>
<rect x="1369" y="263" width="10" height="10" fill="#009969"/>
<rect x="1379" y="263" width="10" height="10" fill="#00996b"/>
<rect x="1389" y="263" width="10" height="10" fill="#00996d"/>
<rect x="1399" y="263" width="10" height="10" fill="#0b996f"/>
<rect x="1409" y="263" width="10" height="10" fill="#1d9971"/>
<rect x="1679" y="263" width="10" height="10" fill="#990415"/>
<rect x="1689" y="263" width="10" height="10" fill="#990214"/>
<rect x="1699" y="263" width="10" height="10" fill="#990113"/>
<rect x="1709" y="263" width="10" height="10" fill="#990012"/>
<rect x="1719" y="263" width="10" height="10" fill="#990011"/>
<rect x="1729" y="263" width="10" height="10" fill="#990010"/>
<rect x="1739" y="263" width="10" height="10" fill="#99000f"/>
<rect x="1749" y="263" width="10" height="10" fill="#99000e"/>
<rect x="1759" y="263" width="10" height="10" fill="#99000d"/>
<rect x="1769" y="263" width="10" height="10" fill="#99000d"/>
<rect x="1779" y="263" width="10" height="10" fill="#99000c"/>
<rect x="1789" y="263" width="10" height="10" fill="#99000b"/>
<rect x="1799" y="263" width="10" height="10" fill="#99000b"/>
<rect x="1809" y="263" width="10" height="10" fill="#99000a"/>
<rect x="1819" y="263" width="10" height="10" fill="#99000a"/>
<rect x="1829" y="263" width="10" height="10" fill="#990009"/>
<rect x="1839" y="263" width="10" height="10" fill="#990009"/>
<rect x="1849" y="263" width="10" height="10" fill="#990008"/>
<rect x="1859" y="263" width="10" height="10" fill="#990008"/>
<rect x="1869" y="263" width="10" height="10" fill="#990007"/>
<rect x="1879" y="263" width="10" height="10" fill="#990007"/>
<rect x="1889" y="263" width="10" height="10" fill="#990006"/>
<rect x="1899" y="263" width="10" height="10" fill="#990006"/>
<rect x="1909" y="263" width="10" height="10" fill="#990006"/>
<rect x="1919" y="263" width="10" height="10" fill="#990005"/>
<rect x="1249" y="273" width="10" height="10" fill="#009964"/>
<rect x="1259" y="273" width="10" height="10" fill="#009966"/>
<rect x="1269" y="273" width="10" height="10" fill="#009967"/>
<rect x="1279" y="273" width="10" height="10" fill="#009968"/>
<rect x="1289" y="273" width="10" height="10" fill="#00996a"/>
<rect x="1299" y="273" width="10" height="10" fill="#00996b"/>
<rect x="1309" y="273" width="10" height="10" fill="#00996d"/>
<rect x="1319" y="273" width="10" height="10" fill="#00996e"/>
<rect x="1329" y="273" width="10" height="10" fill="#009970"/>
<rect x="1339" y="273" width="10" height="10" fill="#009972"/>
<rect x="1349" y="273" width="10" height="10" fill="#009974"/>
<rect x="1359" y="273" width="10" height="10" fill="#009976"/>
<rect x="1369" y="273" width="10" height="10" fill="#009978"/>
<rect x="1379" y="273" width="10" height="10" fill="#00997b"/>
<rect x="1389" y="273" width="10" height="10" fill="#00997d"/>
<rect x="1399" y="273" width="10" height="10" fill="#099980"/>
<rect x="1409" y="273" width="10" height="10" fill="#1b9983"/>
<rect x="1669" y="273" width="10" height="10" fill="#99041b"/>
<rect x="1679" y="273" width="10" height="10" fill="#990219"/>
<rect x="1689" y="273" width="10" height="10" fill="#990118"/>
<rect x="1699" y="273" width="10" height="10" fill="#990017"/>
<rect x="1709" y="273" width="10" height="10" fill="#990016"/>
<rect x="1719" y="273" width="10" height="10" fill="#990014"/>
<rect x="1729" y="273" width="10" height="10" fill="#990013"/>
<rect x="1739" y="273" width="10" height="10" fill="#990012"/>
<rect x="1749" y="273" width="10" height="10" fill="#990012"/>
<rect x="1759" y="273" width="10" height="10" fill="#990011"/>
<rect x="1769" y="273" width="10" height="10" fill="#990010"/>
<rect x="1779" y="273" width="10" height="10" fill="#99000f"/>
<rect x="1789" y="273" width="10" height="10" fill="#99000e"/>
<rect x="1799" y="273" width="10" height="10" fill="#99000e"/>
<rect x="1809" y="273" width="10" height="10" fill="#99000d"/>
<rect x="1819" y="273" width="10" height="10" fill="#99000d"/>
<rect x="1829" y="273" width="10" height="10" fill="#99000c"/>
<rect x="1839" y="273" width="10" height="10" fill="#99000b"/>
<rect x="1849" y="273" width="10" height="10" fill="#99000b"/>
<rect x="1859" y="273" width="10" height="10" fill="#99000a"/>
<rect x="1869" y="273" width="10" height="10" fill="#99000a"/>
<rect x="1879" y="273" width="10" height="10" fill="#990009"/>
<rect x="1889" y="273" width="10" height="10" fill="#990009"/>
<rect x="1899" y="273" width="10" height="10" fill="#990008"/>
<rect x="1909" y="273" width="10" height="10" fill="#990008"/>
<rect x="1249" y="283" width="10" height="10" fill="#00996f"/>
<rect x="1259" y="283" width="10" height="10" fill="#009971"/>
<rect x="1269" y="283" width="10" height="10" fill="#009973"/>
<rect x="1279" y="283" width="10" height="10" fill="#009974"/>
<rect x="1289" y="283" width="10" height="10" fill="#009976"/>
<rect x="1299" y="283" width="10" height="10" fill="#009978"/>
<rect x="1309" y="283" width="10" height="10" fill="#00997a"/>
<rect x="1319" y="283" width="10" height="10" fill="#00997c"/>
<rect x="1329" y="283" width="10" height="10" fill="#00997e"/>
<rect x="1339" y="283" width="10" height="10" fill="#009980"/>
<rect x="1349" y="283" width="10" height="10" fill="#009983"/>
<rect x="1359" y="283" width="10" height="10" fill="#009985"/>
<rect x="1369" y="283" width="10" height="10" fill="#009988"/>
<rect x="1379" y="283" width="10" height="10" fill="#00998b"/>
<rect x="1389" y="283" width="10" height="10" fill="#00998e"/>
<rect x="1399" y="283" width="10" height="10" fill="#069992"/>
<rect x="1409" y="283" width="10" height="10" fill="#1a9995"/>
<rect x="1659" y="283" width="10" height="10" fill="#990521"/>
<rect x="1669" y="283" width="10" height="10" fill="#99031f"/>
<rect x="1679" y="283" width="10" height="10" fill="#99011d"/>
<rect x="1689" y="283" width="10" height="10" fill="#99001c"/>
<rect x="1699" y="283" width="10" height="10" fill="#99001b"/>
<rect x="1709" y="283" width="10" height="10" fill="#990019"/>
<rect x="1719" y="283" width="10" height="10" fill="#990018"/>
<rect x="1729" y="283" width="10" height="10" fill="#990017"/>
<rect x="1739" y="283" width="10" height="10" fill="#990016"/>
<rect x="1749" y="283" width="10" height="10" fill="#990015"/>
<rect x="1759" y="283" width="10" height="10" fill="#990014"/>
<rect x="1769" y="283" width="10" height="10" fill="#990013"/>
<rect x="1779" y="283" width="10" height="10" fill="#990012"/>
<rect x="1789" y="283" width="10" height="10" fill="#990012"/>
<rect x="1799" y="283" width="10" height="10" fill="#990011"/>
<rect x="1809" y="283" width="10" height="10" fill="#990010"/>
<rect x="1819" y="283" width="10" height="10" fill="#99000f"/>
<rect x="1829" y="283" width="10" height="10" fill="#99000f"/>
<rect x="1839" y="283" width="10" height="10" fill="#99000e"/>
<rect x="1849" y="283" width="10" height="10" fill="#99000d"/>
<rect x="1859" y="283" width="10" height="10" fill="#99000d"/>
<rect x="1869" y="283" width="10" height="10" fill="#99000c"/>
<rect x="1879" y="283" width="10" height="10" fill="#99000c"/>
<rect x="1889" y="283" width="10" height="10" fill="#99000b"/>
<rect x="1899" y="283" width="10" height="10" fill="#99000b"/>
<rect x="1259" y="293" width="10" height="10" fill="#00997d"/>
<rect x="1269" y="293" width="10" height="10" fill="#00997f"/>
<rect x="1279" y="293" width="10" height="10" fill="#009981"/>
<rect x="1289" y="293" width="10" height="10" fill="#009983"/>
<rect x="1299" y="293" width="10" height="10" fill="#009985"/>
<rect x="1309" y="293" width="10" height="10" fill="#009988"/>
<rect x="1319" y="293" width="10" height="10" fill="#00998a"/>
<rect x="1329" y="293" width="10" height="10" fill="#00998d"/>
<rect x="1339" y="293" width="10" height="10" fill="#00998f"/>
<rect x="1349" y="293" width="10" height="10" fill="#009992"/>
<rect x="1359" y="293" width="10" height="10" fill="#009996"/>
<rect x="1369" y="293" width="10" height="10" fill="#009999"/>
<rect x="1379" y="293" width="10" height="10" fill="#009699"/>
<rect x="1389" y="293" width="10" height="10" fill="#009299"/>
<rect x="1399" y="293" width="10" height="10" fill="#048e99"/>
<rect x="1409" y="293" width="10" height="10" fill="#168b99"/>
<rect x="1419" y="293" width="10" height="10" fill="#288799"/>
<rect x="1659" y="293" width="10" height="10" fill="#990325"/>
<rect x="1669" y="293" width="10" height="10" fill="#990223"/>
<rect x="1679" y="293" width="10" height="10" fill="#990022"/>
<rect x="1689" y="293" width="10" height="10" fill="#990020"/>
<rect x="1699" y="293" width="10" height="10" fill="#99001f"/>
<rect x="1709" y="293" width="10" height="10" fill="#99001d"/>
<rect x="1719" y="293" width="10" height="10" fill="#99001c"/>
<rect x="1729" y="293" width="10" height="10" fill="#99001b"/>
<rect x="1739" y="293" width="10" height="10" fill="#99001a"/>
<rect x="1749" y="293" width="10" height="10" fill="#990018"/>
<rect x="1759" y="293" width="10" height="10" fill="#990017"/>
<rect x="1769" y="293" width="10" height="10" fill="#990016"/>
<rect x="1779" y="293" width="10" height="10" fill="#990015"/>
<rect x="1789" y="293" width="10" height="10" fill="#990015"/>
<rect x="1799" y="293" width="10" height="10" fill="#990014"/>
<rect x="1809" y="293" width="10" height="10" fill="#990013"/>
<rect x="1819" y="293" width="10" height="10" fill="#990012"/>
<rect x="1829" y="293" width="10" height="10" fill="#990011"/>
<rect x="1839" y="293" width="10" height="10" fill="#990011"/>
<rect x="1849" y="293" width="10" height="10" fill="#990010"/>
<rect x="1859" y="293" width="10" height="10" fill="#99000f"/>
<rect x="1869" y="293" width="10" height="10" fill="#99000f"/>
<rect x="1879" y="293" width="10" height="10" fill="#99000e"/>
<rect x="1889" y="293" width="10" height="10" fill="#99000e"/>
<rect x="1259" y="303" width="10" height="10" fill="#009989"/>
<rect x="1269" y="303" width="10" height="10" fill="#00998c"/>
<rect x="1279" y="303" width="10" height="10" fill="#00998e"/>
<rect x="1289" y="303" width="10" height="10" fill="#009990"/>
<rect x="1299" y="303" width="10" height="10" fill="#009993"/>
<rect x="1309" y="303" width="10" height="10" fill="#009996"/>
<rect x="1319" y="303" width="10" height="10" fill="#009999"/>
<rect x="1329" y="303" width="10" height="10" fill="#009699"/>
<rect x="1339" y="303" width="10" height="10" fill="#009399"/>
<rect x="1349" y="303" width="10" height="10" fill="#009099"/>
<rect x="1359" y="303" width="10" height="10" fill="#008d99"/>
<rect x="1369" y="303" width="10" height="10" fill="#008999"/>
<rect x="1379" y="303" width="10" height="10" fill="#008699"/>
<rect x="1389" y="303" width="10" height="10" fill="#008399"/>
<rect x="1399" y="303" width="10" height="10" fill="#017f99"/>
<rect x="1409" y="303" width="10" height="10" fill="#127c99"/>
<rect x="1419" y="303" width="10" height="10" fill="#227899"/>
<rect x="1649" y="303" width="10" height="10" fill="#99042c"/>
<rect x="1659" y="303" width="10" height="10" fill="#99022a"/>
<rect x="1669" y="303" width="10" height="10" fill="#990028"/>
<rect x="1679" y="303" width="10" height="10" fill="#990026"/>
<rect x="1689" y="303" width="10" height="10" fill="#990024"/>
<rect x="1699" y="303" width="10" height="10" fill="#990023"/>
<rect x="1709" y="303" width="10" height="10" fill="#990021"/>
<rect x="1719" y="303" width="10" height="10" fill="#990020"/>
<rect x="1729" y="303" width="10" height="10" fill="#99001e"/>
<rect x="1739" y="303" width="10" height="10" fill="#99001d"/>
<rect x="1749" y="303" width="10" height="10" fill="#99001c"/>
<rect x="1759" y="303" width="10" height="10" fill="#99001b"/>
<rect x="1769" y="303" width="10" height="10" fill="#99001a"/>
<rect x="1779" y="303" width="10" height="10" fill="#990019"/>
<rect x="1789" y="303" width="10" height="10" fill="#990018"/>
<rect x="1799" y="303" width="10" height="10" fill="#990017"/>
<rect x="1809" y="303" width="10" height="10" fill="#990016"/>
<rect x="1819" y="303" width="10" height="10" fill="#990015"/>
<rect x="1829" y="303" width="10" height="10" fill="#990014"/>
<rect x="1839" y="303" width="10" height="10" fill="#990013"/>
<rect x="1849" y="303" width="10" height="10" fill="#990013"/>
<rect x="1859" y="303" width="10" height="10" fill="#990012"/>
<rect x="1869" y="303" width="10" height="10" fill="#990011"/>
<rect x="1879" y="303" width="10" height="10" fill="#990011"/>
<rect x="1259" y="313" width="10" height="10" fill="#009996"/>
<rect x="1269" y="313" width="10" height="10" fill="#009999"/>
<rect x="1279" y="313" width="10" height="10" fill="#009799"/>
<rect x="1289" y="313" width="10" height="10" fill="#009499"/>
<rect x="1299" y="313" width="10" height="10" fill="#009199"/>
<rect x="1309" y="313" width="10" height="10" fill="#008e99"/>
<rect x="1319" y="313" width="10" height="10" fill="#008b99"/>
<rect x="1329" y="313" width="10" height="10" fill="#008899"/>
<rect x="1339" y="313" width="10" height="10" fill="#008599"/>
<rect x="1349" y="313" width="10" height="10" fill="#008299"/>
<rect x="1359" y="313" width="10" height="10" fill="#007f99"/>
<rect x="1369" y="313" width="10" height="10" fill="#007c99"/>
<rect x="1379" y="313" width="10" height="10" fill="#007999"/>
<rect x="1389" y="313" width="10" height="10" fill="#007599"/>
<rect x="1399" y="313" width="10" height="10" fill="#007299"/>
<rect x="1409" y="313" width="10" height="10" fill="#0e6f99"/>
<rect x="1419" y="313" width="10" height="10" fill="#1e6b99"/>
<rect x="1639" y="313" width="10" height="10" fill="#990434"/>
<rect x="1649" y="313" width="10" height="10" fill="#990231"/>
<rect x="1659" y="313" width="10" height="10" fill="#99012f"/>
<rect x="1669" y="313" width="10" height="10" fill="#99002d"/>
<rect x="1679" y="313" width="10" height="10" fill="#99002a"/>
<rect x="1689" y="313" width="10" height="10" fill="#990029"/>
<rect x="1699" y="313" width="10" height="10" fill="#990027"/>
<rect x="1709" y="313" width="10" height="10" fill="#990025"/>
<rect x="1719" y="313" width="10" height="10" fill="#990024"/>
<rect x="1729" y="313" width="10" height="10" fill="#990022"/>
<rect x="1739" y="313" width="10" height="10" fill="#990021"/>
<rect x="1749" y="313" width="10" height="10" fill="#99001f"/>
<rect x="1759" y="313" width="10" height="10" fill="#99001e"/>
<rect x="1769" y="313" width="10" height="10" fill="#99001d"/>
<rect x="1779" y="313" width="10" height="10" fill="#99001c"/>
<rect x="1789" y="313" width="10" height="10" fill="#99001b"/>
<rect x="1799" y="313" width="10" height="10" fill="#99001a"/>
<rect x="1809" y="313" width="10" height="10" fill="#990019"/>
<rect x="1819" y="313" width="10" height="10" fill="#990018"/>
<rect x="1829" y="313" width="10" height="10" fill="#990017"/>
<rect x="1839" y="313" width="10" height="10" fill="#990016"/>
<rect x="1849" y="313" width="10" height="10" fill="#990015"/>
<rect x="1859" y="313" width="10" height="10" fill="#990015"/>
<rect x="1869" y="313" width="10" height="10" fill="#990014"/>
<rect x="1879" y="313" width="10" height="10" fill="#990013"/>
<rect x="1269" y="323" width="10" height="10" fill="#008d99"/>
<rect x="1279" y="323" width="10" height="10" fill="#008a99"/>
<rect x="1289" y="323" width="10" height="10" fill="#008799"/>
<rect x="1299" y="323" width="10" height="10" fill="#008499"/>
<rect x="1309" y="323" width="10" height="10" fill="#008299"/>
<rect x="1319" y="323" width="10" height="10" fill="#007f99"/>
<rect x="1329" y="323" width="10" height="10" fill="#007c99"/>
<rect x="1339" y="323" width="10" height="10" fill="#007999"/>
<rect x="1349" y="323" width="10" height="10" fill="#007699"/>
<rect x="1359" y="323" width="10" height="10" fill="#007399"/>
<rect x="1369" y="323" width="10" height="10" fill="#007099"/>
<rect x="1379" y="323" width="10" height="10" fill="#006d99"/>
<rect x="1389" y="323" width="10" height="10" fill="#006a99"/>
<rect x="1399" y="323" width="10" height="10" fill="#006799"/>
<rect x="1409" y="323" width="10" height="10" fill="#0b6499"/>
<rect x="1419" y="323" width="10" height="10" fill="#1a6099"/>
<rect x="1629" y="323" width="10" height="10" fill="#99053c"/>
<rect x="1639" y="323" width="10" height="10" fill="#990339"/>
<rect x="1649" y="323" width="10" height="10" fill="#990136"/>
<rect x="1659" y="323" width="10" height="10" fill="#990034"/>
<rect x="1669" y="323" width="10" height="10" fill="#990031"/>
<rect x="1679" y="323" width="10" height="10" fill="#99002f"/>
<rect x="1689" y="323" width="10" height="10" fill="#99002d"/>
<rect x="1699" y="323" width="10" height="10" fill="#99002b"/>
<rect x="1709" y="323" width="10" height="10" fill="#990029"/>
<rect x="1719" y="323" width="10" height="10" fill="#990027"/>
<rect x="1729" y="323" width="10" height="10" fill="#990026"/>
<rect x="1739" y="323" width="10" height="10" fill="#990024"/>
<rect x="1749" y="323" width="10" height="10" fill="#990023"/>
<rect x="1759" y="323" width="10" height="10" fill="#990021"/>
<rect x="1769" y="323" width="10" height="10" fill="#990020"/>
<rect x="1779" y="323" width="10" height="10" fill="#99001f"/>
<rect x="1789" y="323" width="10" height="10" fill="#99001e"/>
<rect x="1799" y="323" width="10" height="10" fill="#99001d"/>
<rect x="1809" y="323" width="10" height="10" fill="#99001c"/>
<rect x="1819" y="323" width="10" height="10" fill="#99001b"/>
<rect x="1829" y="323" width="10" height="10" fill="#99001a"/>
<rect x="1839" y="323" width="10" height="10" fill="#990019"/>
<rect x="1849" y="323" width="10" height="10" fill="#990018"/>
<rect x="1859" y="323" width="10" height="10" fill="#990017"/>
<rect x="1869" y="323" width="10" height="10" fill="#990016"/>
<rect x="1269" y="333" width="10" height="10" fill="#008199"/>
<rect x="1279" y="333" width="10" height="10" fill="#007f99"/>
<rect x="1289" y="333" width="10" height="10" fill="#007c99"/>
<rect x="1299" y="333" width="10" height="10" fill="#007a99"/>
<rect x="1309" y="333" width="10" height="10" fill="#007799"/>
<rect x="1319" y="333" width="10" height="10" fill="#007499"/>
<rect x="1329" y="333" width="10" height="10" fill="#007199"/>
<rect x="1339" y="333" width="10" height="10" fill="#006f99"/>
<rect x="1349" y="333" width="10" height="10" fill="#006c99"/>
<rect x="1359" y="333" width="10" height="10" fill="#006999"/>
<rect x="1369" y="333" width="10" height="10" fill="#006699"/>
<rect x="1379" y="333" width="10" height="10" fill="#006399"/>
<rect x="1389" y="333" width="10" height="10" fill="#006099"/>
<rect x="1399" y="333" width="10" height="10" fill="#005d99"/>
<rect x="1409" y="333" width="10" height="10" fill="#095a99"/>
<rect x="1419" y="333" width="10" height="10" fill="#165799"/>
<rect x="1619" y="333" width="10" height="10" fill="#990645"/>
<rect x="1629" y="333" width="10" height="10" fill="#990342"/>
<rect x="1639" y="333" width="10" height="10" fill="#99013e"/>
<rect x="1649" y="333" width="10" height="10" fill="#99003b"/>
<rect x="1659" y="333" width="10" height="10" fill="#990038"/>
<rect x="1669" y="333" width="10" height="10" fill="#990036"/>
<rect x="1679" y="333" width="10" height="10" fill="#990033"/>
<rect x="1689" y="333" width="10" height="10" fill="#990031"/>
<rect x="1699" y="333" width="10" height="10" fill="#99002f"/>
<rect x="1709" y="333" width="10" height="10" fill="#99002d"/>
<rect x="1719" y="333" width="10" height="10" fill="#99002b"/>
<rect x="1729" y="333" width="10" height="10" fill="#990029"/>
<rect x="1739" y="333" width="10" height="10" fill="#990028"/>
<rect x="1749" y="333" width="10" height="10" fill="#990026"/>
<rect x="1759" y="333" width="10" height="10" fill="#990025"/>
<rect x="1769" y="333" width="10" height="10" fill="#990024"/>
<rect x="1779" y="333" width="10" height="10" fill="#990022"/>
<rect x="1789" y="333" width="10" height="10" fill="#990021"/>
<rect x="1799" y="333" width="10" height="10" fill="#990020"/>
<rect x="1809" y="333" width="10" height="10" fill="#99001f"/>
<rect x="1819" y="333" width="10" height="10" fill="#99001e"/>
<rect x="1829" y="333" width="10" height="10" fill="#99001d"/>
<rect x="1839" y="333" width="10" height="10" fill="#99001c"/>
<rect x="1849" y="333" width="10" height="10" fill="#99001b"/>
<rect x="1859" y="333" width="10" height="10" fill="#99001a"/>
<rect x="1269" y="343" width="10" height="10" fill="#007899"/>
<rect x="1279" y="343" width="10" height="10" fill="#007599"/>
<rect x="1289" y="343" width="10" height="10" fill="#007299"/>
<rect x="1299" y="343" width="10" height="10" fill="#007099"/>
<rect x="1309" y="343" width="10" height="10" fill="#006d99"/>
<rect x="1319" y="343" width="10" height="10" fill="#006b99"/>
<rect x="1329" y="343" width="10" height="10" fill="#006899"/>
<rect x="1339" y="343" width="10" height="10" fill="#006599"/>
<rect x="1349" y="343" width="10" height="10" fill="#006399"/>
<rect x="1359" y="343" width="10" height="10" fill="#006099"/>
<rect x="1369" y="343" width="10" height="10" fill="#005d99"/>
<rect x="1379" y="343" width="10" height="10" fill="#005a99"/>
<rect x="1389" y="343" width="10" height="10" fill="#005799"/>
<rect x="1399" y="343" width="10" height="10" fill="#005499"/>
<rect x="1409" y="343" width="10" height="10" fill="#075199"/>
<rect x="1419" y="343" width="10" height="10" fill="#134e99"/>
<rect x="1619" y="343" width="10" height="10" fill="#99044b"/>
<rect x="1629" y="343" width="10" height="10" fill="#990247"/>
<rect x="1639" y="343" width="10" height="10" fill="#990044"/>
<rect x="1649" y="343" width="10" height="10" fill="#990040"/>
<rect x="1659" y="343" width="10" height="10" fill="#99003d"/>
<rect x="1669" y="343" width="10" height="10" fill="#99003b"/>
<rect x="1679" y="343" width="10" height="10" fill="#990038"/>
<rect x="1689" y="343" width="10" height="10" fill="#990035"/>
<rect x="1699" y="343" width="10" height="10" fill="#990033"/>
<rect x="1709" y="343" width="10" height="10" fill="#990031"/>
<rect x="1719" y="343" width="10" height="10" fill="#99002f"/>
<rect x="1729" y="343" width="10" height="10" fill="#99002d"/>
<rect x="1739" y="343" width="10" height="10" fill="#99002c"/>
<rect x="1749" y="343" width="10" height="10" fill="#99002a"/>
<rect x="1759" y="343" width="10" height="10" fill="#990028"/>
<rect x="1769" y="343" width="10" height="10" fill="#990027"/>
<rect x="1779" y="343" width="10" height="10" fill="#990025"/>
<rect x="1789" y="343" width="10" height="10" fill="#990024"/>
<rect x="1799" y="343" width="10" height="10" fill="#990023"/>
<rect x="1809" y="343" width="10" height="10" fill="#990022"/>
<rect x="1819" y="343" width="10" height="10" fill="#990021"/>
<rect x="1829" y="343" width="10" height="10" fill="#990020"/>
<rect x="1839" y="343" width="10" height="10" fill="#99001e"/>
<rect x="1849" y="343" width="10" height="10" fill="#99001d"/>
<rect x="1279" y="353" width="10" height="10" fill="#006c99"/>
<rect x="1289" y="353" width="10" height="10" fill="#006a99"/>
<rect x="1299" y="353" width="10" height="10" fill="#006799"/>
<rect x="1309" y="353" width="10" height="10" fill="#006599"/>
<rect x="1319" y="353" width="10" height="10" fill="#006299"/>
<rect x="1329" y="353" width="10" height="10" fill="#006099"/>
<rect x="1339" y="353" width="10" height="10" fill="#005d99"/>
<rect x="1349" y="353" width="10" height="10" fill="#005b99"/>
<rect x="1359" y="353" width="10" height="10" fill="#005899"/>
<rect x="1369" y="353" width="10" height="10" fill="#005599"/>
<rect x="1379" y="353" width="10" height="10" fill="#005299"/>
<rect x="1389" y="353" width="10" height="10" fill="#005099"/>
<rect x="1399" y="353" width="10" height="10" fill="#004d99"/>
<rect x="1409" y="353" width="10" height="10" fill="#054a99"/>
<rect x="1419" y="353" width="10" height="10" fill="#104799"/>
<rect x="1609" y="353" width="10" height="10" fill="#990556"/>
<rect x="1619" y="353" width="10" height="10" fill="#990251"/>
<rect x="1629" y="353" width="10" height="10" fill="#99004d"/>
<rect x="1639" y="353" width="10" height="10" fill="#990049"/>
<rect x="1649" y="353" width="10" height="10" fill="#990046"/>
<rect x="1659" y="353" width="10" height="10" fill="#990042"/>
<rect x="1669" y="353" width="10" height="10" fill="#99003f"/>
<rect x="1679" y="353" width="10" height="10" fill="#99003c"/>
<rect x="1689" y="353" width="10" height="10" fill="#99003a"/>
<rect x="1699" y="353" width="10" height="10" fill="#990037"/>
<rect x="1709" y="353" width="10" height="10" fill="#990035"/>
<rect x="1719" y="353" width="10" height="10" fill="#990033"/>
<rect x="1729" y="353" width="10" height="10" fill="#990031"/>
<rect x="1739" y="353" width="10" height="10" fill="#99002f"/>
<rect x="1749" y="353" width="10" height="10" fill="#99002d"/>
<rect x="1759" y="353" width="10" height="10" fill="#99002c"/>
<rect x="1769" y="353" width="10" height="10" fill="#99002a"/>
<rect x="1779" y="353" width="10" height="10" fill="#990029"/>
<rect x="1789" y="353" width="10" height="10" fill="#990027"/>
<rect x="1799" y="353" width="10" height="10" fill="#990026"/>
<rect x="1809" y="353" width="10" height="10" fill="#990025"/>
<rect x="1819" y="353" width="10" height="10" fill="#990024"/>
<rect x="1829" y="353" width="10" height="10" fill="#990022"/>
<rect x="1839" y="353" width="10" height="10" fill="#990021"/>
<rect x="1279" y="363" width="10" height="10" fill="#006499"/>
<rect x="1289" y="363" width="10" height="10" fill="#006299"/>
<rect x="1299" y="363" width="10" height="10" fill="#006099"/>
<rect x="1309" y="363" width="10" height="10" fill="#005d99"/>
<rect x="1319" y="363" width="10" height="10" fill="#005b99"/>
<rect x="1329" y="363" width="10" height="10" fill="#005899"/>
<rect x="1339" y="363" width="10" height="10" fill="#005699"/>
<rect x="1349" y="363" width="10" height="10" fill="#005399"/>
<rect x="1359" y="363" width="10" height="10" fill="#005199"/>
<rect x="1369" y="363" width="10" height="10" fill="#004e99"/>
<rect x="1379" y="363" width="10" height="10" fill="#004b99"/>
<rect x="1389" y="363" width="10" height="10" fill="#004999"/>
<rect x="1399" y="363" width="10" height="10" fill="#004699"/>
<rect x="1409" y="363" width="10" height="10" fill="#034399"/>
<rect x="1419" y="363" width="10" height="10" fill="#0e4199"/>
<rect x="1599" y="363" width="10" height="10" fill="#990562"/>
<rect x="1609" y="363" width="10" height="10" fill="#99035c"/>
<rect x="1619" y="363" width="10" height="10" fill="#990157"/>
<rect x="1629" y="363" width="10" height="10" fill="#990053"/>
<rect x="1639" y="363" width="10" height="10" fill="#99004f"/>
<rect x="1649" y="363" width="10" height="10" fill="#99004b"/>
<rect x="1659" y="363" width="10" height="10" fill="#990047"/>
<rect x="1669" y="363" width="10" height="10" fill="#990044"/>
<rect x="1679" y="363" width="10" height="10" fill="#990041"/>
<rect x="1689" y="363" width="10" height="10" fill="#99003e"/>
<rect x="1699" y="363" width="10" height="10" fill="#99003c"/>
<rect x="1709" y="363" width="10" height="10" fill="#990039"/>
<rect x="1719" y="363" width="10" height="10" fill="#990037"/>
<rect x="1729" y="363" width="10" height="10" fill="#990035"/>
<rect x="1739" y="363" width="10" height="10" fill="#990033"/>
<rect x="1749" y="363" width="10" height="10" fill="#990031"/>
<rect x="1759" y="363" width="10" height="10" fill="#99002f"/>
<rect x="1769" y="363" width="10" height="10" fill="#99002e"/>
<rect x="1779" y="363" width="10" height="10" fill="#99002c"/>
<rect x="1789" y="363" width="10" height="10" fill="#99002b"/>
<rect x="1799" y="363" width="10" height="10" fill="#990029"/>
<rect x="1809" y="363" width="10" height="10" fill="#990028"/>
<rect x="1819" y="363" width="10" height="10" fill="#990026"/>
<rect x="1829" y="363" width="10" height="10" fill="#990025"/>
<rect x="1839" y="363" width="10" height="10" fill="#990024"/>
<rect x="1279" y="373" width="10" height="10" fill="#005d99"/>
<rect x="1289" y="373" width="10" height="10" fill="#005b99"/>
<rect x="1299" y="373" width="10" height="10" fill="#005999"/>
<rect x="1309" y="373" width="10" height="10" fill="#005699"/>
<rect x="1319" y="373" width="10" height="10" fill="#005499"/>
<rect x="1329" y="373" width="10" height="10" fill="#005299"/>
<rect x="1339" y="373" width="10" height="10" fill="#004f99"/>
<rect x="1349" y="373" width="10" height="10" fill="#004d99"/>
<rect x="1359" y="373" width="10" height="10" fill="#004a99"/>
<rect x="1369" y="373" width="10" height="10" fill="#004899"/>
<rect x="1379" y="373" width="10" height="10" fill="#004599"/>
<rect x="1389" y="373" width="10" height="10" fill="#004399"/>
<rect x="1399" y="373" width="10" height="10" fill="#004099"/>
<rect x="1409" y="373" width="10" height="10" fill="#013d99"/>
<rect x="1419" y="373" width="10" height="10" fill="#0c3b99"/>
<rect x="1429" y="373" width="10" height="10" fill="#173899"/>
<rect x="1589" y="373" width="10" height="10" fill="#99066f"/>
<rect x="1599" y="373" width="10" height="10" fill="#990368"/>
<rect x="1609" y="373" width="10" height="10" fill="#990163"/>
<rect x="1619" y="373" width="10" height="10" fill="#99005d"/>
<rect x="1629" y="373" width="10" height="10" fill="#990058"/>
<rect x="1639" y="373" width="10" height="10" fill="#990054"/>
<rect x="1649" y="373" width="10" height="10" fill="#990050"/>
<rect x="1659" y="373" width="10" height="10" fill="#99004c"/>
<rect x="1669" y="373" width="10" height="10" fill="#990049"/>
<rect x="1679" y="373" width="10" height="10" fill="#990046"/>
<rect x="1689" y="373" width="10" height="10" fill="#990043"/>
<rect x="1699" y="373" width="10" height="10" fill="#990040"/>
<rect x="1709" y="373" width="10" height="10" fill="#99003d"/>
<rect x="1719" y="373" width="10" height="10" fill="#99003b"/>
<rect x="1729" y="373" width="10" height="10" fill="#990039"/>
<rect x="1739" y="373" width="10" height="10" fill="#990037"/>
<rect x="1749" y="373" width="10" height="10" fill="#990035"/>
<rect x="1759" y="373" width="10" height="10" fill="#990033"/>
<rect x="1769" y="373" width="10" height="10" fill="#990031"/>
<rect x="1779" y="373" width="10" height="10" fill="#99002f"/>
<rect x="1789" y="373" width="10" height="10" fill="#99002e"/>
<rect x="1799" y="373" width="10" height="10" fill="#99002c"/>
<rect x="1809" y="373" width="10" height="10" fill="#99002b"/>
<rect x="1819" y="373" width="10" height="10" fill="#990029"/>
<rect x="1829" y="373" width="10" height="10" fill="#990028"/>
<rect x="1289" y="383" width="10" height="10" fill="#005599"/>
<rect x="1299" y="383" width="10" height="10" fill="#005299"/>
<rect x="1309" y="383" width="10" height="10" fill="#005099"/>
<rect x="1319" y="383" width="10" height="10" fill="#004e99"/>
<rect x="1329" y="383" width="10" height="10" fill="#004b99"/>
<rect x="1339" y="383" width="10" height="10" fill="#004999"/>
<rect x="1349" y="383" width="10" height="10" fill="#004799"/>
<rect x="1359" y="383" width="10" height="10" fill="#004499"/>
<rect x="1369" y="383" width="10" height="10" fill="#004299"/>
<rect x="1379" y="383" width="10" height="10" fill="#004099"/>
<rect x="1389" y="383" width="10" height="10" fill="#003d99"/>
<rect x="1399" y="383" width="10" height="10" fill="#003b99"/>
<rect x="1409" y="383" width="10" height="10" fill="#003899"/>
<rect x="1419" y="383" width="10" height="10" fill="#0a3699"/>
<rect x="1429" y="383" width="10" height="10" fill="#143399"/>
<rect x="1579" y="383" width="10" height="10" fill="#99077e"/>
<rect x="1589" y="383" width="10" height="10" fill="#990476"/>
<rect x="1599" y="383" width="10" height="10" fill="#99026f"/>
<rect x="1609" y="383" width="10" height="10" fill="#990069"/>
<rect x="1619" y="383" width="10" height="10" fill="#990063"/>
<rect x="1629" y="383" width="10" height="10" fill="#99005e"/>
<rect x="1639" y="383" width="10" height="10" fill="#99005a"/>
<rect x="1649" y="383" width="10" height="10" fill="#990055"/>
<rect x="1659" y="383" width="10" height="10" fill="#990051"/>
<rect x="1669" y="383" width="10" height="10" fill="#99004e"/>
<rect x="1679" y="383" width="10" height="10" fill="#99004a"/>
<rect x="1689" y="383" width="10" height="10" fill="#990047"/>
<rect x="1699" y="383" width="10" height="10" fill="#990044"/>
<rect x="1709" y="383" width="10" height="10" fill="#990042"/>
<rect x="1719" y="383" width="10" height="10" fill="#99003f"/>
<rect x="1729" y="383" width="10" height="10" fill="#99003d"/>
<rect x="1739" y="383" width="10" height="10" fill="#99003a"/>
<rect x="1749" y="383" width="10" height="10" fill="#990038"/>
<rect x="1759" y="383" width="10" height="10" fill="#990036"/>
<rect x="1769" y="383" width="10" height="10" fill="#990034"/>
<rect x="1779" y="383" width="10" height="10" fill="#990033"/>
<rect x="1789" y="383" width="10" height="10" fill="#990031"/>
<rect x="1799" y="383" width="10" height="10" fill="#99002f"/>
<rect x="1809" y="383" width="10" height="10" fill="#99002e"/>
<rect x="1819" y="383" width="10" height="10" fill="#99002c"/>
<rect x="1289" y="393" width="10" height="10" fill="#004f99"/>
<rect x="1299" y="393" width="10" height="10" fill="#004d99"/>
<rect x="1309" y="393" width="10" height="10" fill="#004a99"/>
<rect x="1319" y="393" width="10" height="10" fill="#004899"/>
<rect x="1329" y="393" width="10" height="10" fill="#004699"/>
<rect x="1339" y="393" width="10" height="10" fill="#004499"/>
<rect x="1349" y="393" width="10" height="10" fill="#004199"/>
<rect x="1359" y="393" width="10" height="10" fill="#003f99"/>
<rect x="1369" y="393" width="10" height="10" fill="#003d99"/>
<rect x="1379" y="393" width="10" height="10" fill="#003a99"/>
<rect x="1389" y="393" width="10" height="10" fill="#003899"/>
<rect x="1399" y="393" width="10" height="10" fill="#003699"/>
<rect x="1409" y="393" width="10" height="10" fill="#003399"/>
<rect x="1419" y="393" width="10" height="10" fill="#083199"/>
<rect x="1429" y="393" width="10" height="10" fill="#122e99"/>
<rect x="1579" y="393" width="10" height="10" fill="#990586"/>
<rect x="1589" y="393" width="10" height="10" fill="#99027e"/>
<rect x="1599" y="393" width="10" height="10" fill="#990076"/>
<rect x="1609" y="393" width="10" height="10" fill="#990070"/>
<rect x="1619" y="393" width="10" height="10" fill="#99006a"/>
<rect x="1629" y="393" width="10" height="10" fill="#990064"/>
<rect x="1639" y="393" width="10" height="10" fill="#99005f"/>
<rect x="1649" y="393" width="10" height="10" fill="#99005b"/>
<rect x="1659" y="393" width="10" height="10" fill="#990057"/>
<rect x="1669" y="393" width="10" height="10" fill="#990053"/>
<rect x="1679" y="393" width="10" height="10" fill="#99004f"/>
<rect x="1689" y="393" width="10" height="10" fill="#99004c"/>
<rect x="1699" y="393" width="10" height="10" fill="#990049"/>
<rect x="1709" y="393" width="10" height="10" fill="#990046"/>
<rect x="1719" y="393" width="10" height="10" fill="#990043"/>
<rect x="1729" y="393" width="10" height="10" fill="#990041"/>
<rect x="1739" y="393" width="10" height="10" fill="#99003e"/>
<rect x="1749" y="393" width="10" height="10" fill="#99003c"/>
<rect x="1759" y="393" width="10" height="10" fill="#99003a"/>
<rect x="1769" y="393" width="10" height="10" fill="#990038"/>
<rect x="1779" y="393" width="10" height="10" fill="#990036"/>
<rect x="1789" y="393" width="10" height="10" fill="#990034"/>
<rect x="1799" y="393" width="10" height="10" fill="#990033"/>
<rect x="1809" y="393" width="10" height="10" fill="#990031"/>
<rect x="1299" y="403" width="10" height="10" fill="#004799"/>
<rect x="1309" y="403" width="10" height="10" fill="#004599"/>
<rect x="1319" y="403" width="10" height="10" fill="#004399"/>
<rect x="1329" y="403" width="10" height="10" fill="#004199"/>
<rect x="1339" y="403" width="10" height="10" fill="#003f99"/>
<rect x="1349" y="403" width="10" height="10" fill="#003d99"/>
<rect x="1359" y="403" width="10" height="10" fill="#003a99"/>
<rect x="1369" y="403" width="10" height="10" fill="#003899"/>
<rect x="1379" y="403" width="10" height="10" fill="#003699"/>
<rect x="1389" y="403" width="10" height="10" fill="#003399"/>
<rect x="1399" y="403" width="10" height="10" fill="#003199"/>
<rect x="1409" y="403" width="10" height="10" fill="#002f99"/>
<rect x="1419" y="403" width="10" height="10" fill="#072c99"/>
<rect x="1429" y="403" width="10" height="10" fill="#102a99"/>
<rect x="1569" y="403" width="10" height="10" fill="#990698"/>
<rect x="1579" y="403" width="10" height="10" fill="#99038e"/>
<rect x="1589" y="403" width="10" height="10" fill="#990085"/>
<rect x="1599" y="403" width="10" height="10" fill="#99007d"/>
<rect x="1609" y="403" width="10" height="10" fill="#990076"/>
<rect x="1619" y="403" width="10" height="10" fill="#990070"/>
<rect x="1629" y="403" width="10" height="10" fill="#99006a"/>
<rect x="1639" y="403" width="10" height="10" fill="#990065"/>
<rect x="1649" y="403" width="10" height="10" fill="#990060"/>
<rect x="1659" y="403" width="10" height="10" fill="#99005c"/>
<rect x="1669" y="403" width="10" height="10" fill="#990058"/>
<rect x="1679" y="403" width="10" height="10" fill="#990054"/>
<rect x="1689" y="403" width="10" height="10" fill="#990050"/>
<rect x="1699" y="403" width="10" height="10" fill="#99004d"/>
<rect x="1709" y="403" width="10" height="10" fill="#99004a"/>
<rect x="1719" y="403" width="10" height="10" fill="#990047"/>
<rect x="1729" y="403" width="10" height="10" fill="#990045"/>
<rect x="1739" y="403" width="10" height="10" fill="#990042"/>
<rect x="1749" y="403" width="10" height="10" fill="#990040"/>
<rect x="1759" y="403" width="10" height="10" fill="#99003e"/>
<rect x="1769" y="403" width="10" height="10" fill="#99003b"/>
<rect x="1779" y="403" width="10" height="10" fill="#990039"/>
<rect x="1789" y="403" width="10" height="10" fill="#990038"/>
<rect x="1799" y="403" width="10" height="10" fill="#990036"/>
<rect x="1299" y="413" width="10" height="10" fill="#004399"/>
<rect x="1309" y="413" width="10" height="10" fill="#004099"/>
<rect x="1319" y="413" width="10" height="10" fill="#003e99"/>
<rect x="1329" y="413" width="10" height="10" fill="#003c99"/>
<rect x="1339" y="413" width="10" height="10" fill="#003a99"/>
<rect x="1349" y="413" width="10" height="10" fill="#003899"/>
<rect x="1359" y="413" width="10" height="10" fill="#003699"/>
<rect x="1369" y="413" width="10" height="10" fill="#003499"/>
<rect x="1379" y="413" width="10" height="10" fill="#003299"/>
<rect x="1389" y="413" width="10" height="10" fill="#002f99"/>
<rect x="1399" y="413" width="10" height="10" fill="#002d99"/>
<rect x="1409" y="413" width="10" height="10" fill="#002b99"/>
<rect x="1419" y="413" width="10" height="10" fill="#052999"/>
<rect x="1429" y="413" width="10" height="10" fill="#0e2699"/>
<rect x="1559" y="413" width="10" height="10" fill="#880699"/>
<rect x="1569" y="413" width="10" height="10" fill="#920399"/>
<rect x="1579" y="413" width="10" height="10" fill="#990196"/>
<rect x="1589" y="413" width="10" height="10" fill="#99008d"/>
<rect x="1599" y="413" width="10" height="10" fill="#990085"/>
<rect x="1609" y="413" width="10" height="10" fill="#99007d"/>
<rect x="1619" y="413" width="10" height="10" fill="#990077"/>
<rect x="1629" y="413" width="10" height="10" fill="#990070"/>
<rect x="1639" y="413" width="10" height="10" fill="#99006b"/>
<rect x="1649" y="413" width="10" height="10" fill="#990066"/>
<rect x="1659" y="413" width="10" height="10" fill="#990061"/>
<rect x="1669" y="413" width="10" height="10" fill="#99005d"/>
<rect x="1679" y="413" width="10" height="10" fill="#990059"/>
<rect x="1689" y="413" width="10" height="10" fill="#990055"/>
<rect x="1699" y="413" width="10" height="10" fill="#990052"/>
<rect x="1709" y="413" width="10" height="10" fill="#99004e"/>
<rect x="1719" y="413" width="10" height="10" fill="#99004b"/>
<rect x="1729" y="413" width="10" height="10" fill="#990049"/>
<rect x="1739" y="413" width="10" height="10" fill="#990046"/>
<rect x="1749" y="413" width="10" height="10" fill="#990044"/>
<rect x="1759" y="413" width="10" height="10" fill="#990041"/>
<rect x="1769" y="413" width="10" height="10" fill="#99003f"/>
<rect x="1779" y="413" width="10" height="10" fill="#99003d"/>
<rect x="1789" y="413" width="10" height="10" fill="#99003b"/>
<rect x="1799" y="413" width="10" height="10" fill="#990039"/>
<rect x="1299" y="423" width="10" height="10" fill="#003e99"/>
<rect x="1309" y="423" width="10" height="10" fill="#003c99"/>
<rect x="1319" y="423" width="10" height="10" fill="#003a99"/>
<rect x="1329" y="423" width="10" height="10" fill="#003899"/>
<rect x="1339" y="423" width="10" height="10" fill="#003699"/>
<rect x="1349" y="423" width="10" height="10" fill="#003499"/>
<rect x="1359" y="423" width="10" height="10" fill="#003299"/>
<rect x="1369" y="423" width="10" height="10" fill="#003099"/>
<rect x="1379" y="423" width="10" height="10" fill="#002e99"/>
<rect x="1389" y="423" width="10" height="10" fill="#002b99"/>
<rect x="1399" y="423" width="10" height="10" fill="#002999"/>
<rect x="1409" y="423" width="10" height="10" fill="#002799"/>
<rect x="1419" y="423" width="10" height="10" fill="#042599"/>
<rect x="1429" y="423" width="10" height="10" fill="#0c2399"/>
<rect x="1549" y="423" width="10" height="10" fill="#770699"/>
<rect x="1559" y="423" width="10" height="10" fill="#800499"/>
<rect x="1569" y="423" width="10" height="10" fill="#8a0199"/>
<rect x="1579" y="423" width="10" height="10" fill="#940099"/>
<rect x="1589" y="423" width="10" height="10" fill="#990095"/>
<rect x="1599" y="423" width="10" height="10" fill="#99008c"/>
<rect x="1609" y="423" width="10" height="10" fill="#990084"/>
<rect x="1619" y="423" width="10" height="10" fill="#99007d"/>
<rect x="1629" y="423" width="10" height="10" fill="#990077"/>
<rect x="1639" y="423" width="10" height="10" fill="#990071"/>
<rect x="1649" y="423" width="10" height="10" fill="#99006b"/>
<rect x="1659" y="423" width="10" height="10" fill="#990066"/>
<rect x="1669" y="423" width="10" height="10" fill="#990062"/>
<rect x="1679" y="423" width="10" height="10" fill="#99005e"/>
<rect x="1689" y="423" width="10" height="10" fill="#99005a"/>
<rect x="1699" y="423" width="10" height="10" fill="#990056"/>
<rect x="1709" y="423" width="10" height="10" fill="#990053"/>
<rect x="1719" y="423" width="10" height="10" fill="#990050"/>
<rect x="1729" y="423" width="10" height="10" fill="#99004d"/>
<rect x="1739" y="423" width="10" height="10" fill="#99004a"/>
<rect x="1749" y="423" width="10" height="10" fill="#990047"/>
<rect x="1759" y="423" width="10" height="10" fill="#990045"/>
<rect x="1769" y="423" width="10" height="10" fill="#990043"/>
<rect x="1779" y="423" width="10" height="10" fill="#990040"/>
<rect x="1789" y="423" width="10" height="10" fill="#99003e"/>
<rect x="1309" y="433" width="10" height="10" fill="#003899"/>
<rect x="1319" y="433" width="10" height="10" fill="#003699"/>
<rect x="1329" y="433" width="10" height="10" fill="#003499"/>
<rect x="1339" y="433" width="10" height="10" fill="#003299"/>
<rect x="1349" y="433" width="10" height="10" fill="#003099"/>
<rect x="1359" y="433" width="10" height="10" fill="#002e99"/>
<rect x="1369" y="433" width="10" height="10" fill="#002c99"/>
<rect x="1379" y="433" width="10" height="10" fill="#002a99"/>
<rect x="1389" y="433" width="10" height="10" fill="#002899"/>
<rect x="1399" y="433" width="10" height="10" fill="#002699"/>
<rect x="1409" y="433" width="10" height="10" fill="#002499"/>
<rect x="1419" y="433" width="10" height="10" fill="#032299"/>
<rect x="1429" y="433" width="10" height="10" fill="#0b1f99"/>
<rect x="1539" y="433" width="10" height="10" fill="#680699"/>
<rect x="1549" y="433" width="10" height="10" fill="#710499"/>
<rect x="1559" y="433" width="10" height="10" fill="#7a0299"/>
<rect x="1569" y="433" width="10" height="10" fill="#830099"/>
<rect x="1579" y="433" width="10" height="10" fill="#8c0099"/>
<rect x="1589" y="433" width="10" height="10" fill="#950099"/>
<rect x="1599" y="433" width="10" height="10" fill="#990093"/>
<rect x="1609" y="433" width="10" height="10" fill="#99008b"/>
<rect x="1619" y="433" width="10" height="10" fill="#990084"/>
<rect x="1629" y="433" width="10" height="10" fill="#99007d"/>
<rect x="1639" y="433" width="10" height="10" fill="#990077"/>
<rect x="1649" y="433" width="10" height="10" fill="#990071"/>
<rect x="1659" y="433" width="10" height="10" fill="#99006c"/>
<rect x="1669" y="433" width="10" height="10" fill="#990067"/>
<rect x="1679" y="433" width="10" height="10" fill="#990063"/>
<rect x="1689" y="433" width="10" height="10" fill="#99005f"/>
<rect x="1699" y="433" width="10" height="10" fill="#99005b"/>
<rect x="1709" y="433" width="10" height="10" fill="#990057"/>
<rect x="1719" y="433" width="10" height="10" fill="#990054"/>
<rect x="1729" y="433" width="10" height="10" fill="#990051"/>
<rect x="1739" y="433" width="10" height="10" fill="#99004e"/>
<rect x="1749" y="433" width="10" height="10" fill="#99004b"/>
<rect x="1759" y="433" width="10" height="10" fill="#990049"/>
<rect x="1769" y="433" width="10" height="10" fill="#990046"/>
<rect x="1779" y="433" width="10" height="10" fill="#990044"/>
<rect x="1309" y="443" width="10" height="10" fill="#003499"/>
<rect x="1319" y="443" width="10" height="10" fill="#003299"/>
<rect x="1329" y="443" width="10" height="10" fill="#003099"/>
<rect x="1339" y="443" width="10" height="10" fill="#002f99"/>
<rect x="1349" y="443" width="10" height="10" fill="#002d99"/>
<rect x="1359" y="443" width="10" height="10" fill="#002b99"/>
<rect x="1369" y="443" width="10" height="10" fill="#002999"/>
<rect x="1379" y="443" width="10" height="10" fill="#002799"/>
<rect x="1389" y="443" width="10" height="10" fill="#002599"/>
<rect x="1399" y="443" width="10" height="10" fill="#002399"/>
<rect x="1409" y="443" width="10" height="10" fill="#002199"/>
<rect x="1419" y="443" width="10" height="10" fill="#021f99"/>
<rect x="1429" y="443" width="10" height="10" fill="#091c99"/>
<rect x="1439" y="443" width="10" height="10" fill="#111a99"/>
<rect x="1529" y="443" width="10" height="10" fill="#5a0799"/>
<rect x="1539" y="443" width="10" height="10" fill="#620499"/>
<rect x="1549" y="443" width="10" height="10" fill="#6b0299"/>
<rect x="1559" y="443" width="10" height="10" fill="#740099"/>
<rect x="1569" y="443" width="10" height="10" fill="#7c0099"/>
<rect x="1579" y="443" width="10" height="10" fill="#850099"/>
<rect x="1589" y="443" width="10" height="10" fill="#8e0099"/>
<rect x="1599" y="443" width="10" height="10" fill="#970099"/>
<rect x="1609" y="443" width="10" height="10" fill="#990092"/>
<rect x="1619" y="443" width="10" height="10" fill="#99008a"/>
<rect x="1629" y="443" width="10" height="10" fill="#990083"/>
<rect x="1639" y="443" width="10" height="10" fill="#99007d"/>
<rect x="1649" y="443" width="10" height="10" fill="#990077"/>
<rect x="1659" y="443" width="10" height="10" fill="#990071"/>
<rect x="1669" y="443" width="10" height="10" fill="#99006c"/>
<rect x="1679" y="443" width="10" height="10" fill="#990068"/>
<rect x="1689" y="443" width="10" height="10" fill="#990063"/>
<rect x="1699" y="443" width="10" height="10" fill="#99005f"/>
<rect x="1709" y="443" width="10" height="10" fill="#99005c"/>
<rect x="1719" y="443" width="10" height="10" fill="#990058"/>
<rect x="1729" y="443" width="10" height="10" fill="#990055"/>
<rect x="1739" y="443" width="10" height="10" fill="#990052"/>
<rect x="1749" y="443" width="10" height="10" fill="#99004f"/>
<rect x="1759" y="443" width="10" height="10" fill="#99004c"/>
<rect x="1769" y="443" width="10" height="10" fill="#99004a"/>
<rect x="1319" y="453" width="10" height="10" fill="#002f99"/>
<rect x="1329" y="453" width="10" height="10" fill="#002d99"/>
<rect x="1339" y="453" width="10" height="10" fill="#002b99"/>
<rect x="1349" y="453" width="10" height="10" fill="#002999"/>
<rect x="1359" y="453" width="10" height="10" fill="#002799"/>
<rect x="1369" y="453" width="10" height="10" fill="#002599"/>
<rect x="1379" y="453" width="10" height="10" fill="#002499"/>
<rect x="1389" y="453" width="10" height="10" fill="#002299"/>
<rect x="1399" y="453" width="10" height="10" fill="#002099"/>
<rect x="1409" y="453" width="10" height="10" fill="#001e99"/>
<rect x="1419" y="453" width="10" height="10" fill="#011c99"/>
<rect x="1429" y="453" width="10" height="10" fill="#081a99"/>
<rect x="1439" y="453" width="10" height="10" fill="#0f1899"/>
<rect x="1529" y="453" width="10" height="10" fill="#550599"/>
<rect x="1539" y="453" width="10" height="10" fill="#5e0299"/>
<rect x="1549" y="453" width="10" height="10" fill="#660099"/>
<rect x="1559" y="453" width="10" height="10" fill="#6e0099"/>
<rect x="1569" y="453" width="10" height="10" fill="#760099"/>
<rect x="1579" y="453" width="10" height="10" fill="#7f0099"/>
<rect x="1589" y="453" width="10" height="10" fill="#870099"/>
<rect x="1599" y="453" width="10" height="10" fill="#900099"/>
<rect x="1609" y="453" width="10" height="10" fill="#990099"/>
<rect x="1619" y="453" width="10" height="10" fill="#990091"/>
<rect x="1629" y="453" width="10" height="10" fill="#99008a"/>
<rect x="1639" y="453" width="10" height="10" fill="#990083"/>
<rect x="1649" y="453" width="10" height="10" fill="#99007d"/>
<rect x="1659" y="453" width="10" height="10" fill="#990077"/>
<rect x="1669" y="453" width="10" height="10" fill="#990072"/>
<rect x="1679" y="453" width="10" height="10" fill="#99006d"/>
<rect x="1689" y="453" width="10" height="10" fill="#990068"/>
<rect x="1699" y="453" width="10" height="10" fill="#990064"/>
<rect x="1709" y="453" width="10" height="10" fill="#990060"/>
<rect x="1719" y="453" width="10" height="10" fill="#99005c"/>
<rect x="1729" y="453" width="10" height="10" fill="#990059"/>
<rect x="1739" y="453" width="10" height="10" fill="#990056"/>
<rect x="1749" y="453" width="10" height="10" fill="#990053"/>
<rect x="1759" y="453" width="10" height="10" fill="#990050"/>
<rect x="1319" y="463" width="10" height="10" fill="#002c99"/>
<rect x="1329" y="463" width="10" height="10" fill="#002a99"/>
<rect x="1339" y="463" width="10" height="10" fill="#002899"/>
<rect x="1349" y="463" width="10" height="10" fill="#002699"/>
<rect x="1359" y="463" width="10" height="10" fill="#002499"/>
<rect x="1369" y="463" width="10" height="10" fill="#002399"/>
<rect x="1379" y="463" width="10" height="10" fill="#002199"/>
<rect x="1389" y="463" width="10" height="10" fill="#001f99"/>
<rect x="1399" y="463" width="10" height="10" fill="#001d99"/>
<rect x="1409" y="463" width="10" height="10" fill="#001b99"/>
<rect x="1419" y="463" width="10" height="10" fill="#001999"/>
<rect x="1429" y="463" width="10" height="10" fill="#071799"/>
<rect x="1439" y="463" width="10" height="10" fill="#0e1599"/>
<rect x="1519" y="463" width="10" height="10" fill="#4a0599"/>
<rect x="1529" y="463" width="10" height="10" fill="#510399"/>
<rect x="1539" y="463" width="10" height="10" fill="#590099"/>
<rect x="1549" y="463" width="10" height="10" fill="#610099"/>
<rect x="1559" y="463" width="10" height="10" fill="#690099"/>
<rect x="1569" y="463" width="10" height="10" fill="#710099"/>
<rect x="1579" y="463" width="10" height="10" fill="#790099"/>
<rect x="1589" y="463" width="10" height="10" fill="#810099"/>
<rect x="1599" y="463" width="10" height="10" fill="#890099"/>
<rect x="1609" y="463" width="10" height="10" fill="#920099"/>
<rect x="1619" y="463" width="10" height="10" fill="#990098"/>
<rect x="1629" y="463" width="10" height="10" fill="#990090"/>
<rect x="1639" y="463" width="10" height="10" fill="#990089"/>
<rect x="1649" y="463" width="10" height="10" fill="#990082"/>
<rect x="1659" y="463" width="10" height="10" fill="#99007c"/>
<rect x="1669" y="463" width="10" height="10" fill="#990077"/>
<rect x="1679" y="463" width="10" height="10" fill="#990072"/>
<rect x="1689" y="463" width="10" height="10" fill="#99006d"/>
<rect x="1699" y="463" width="10" height="10" fill="#990069"/>
<rect x="1709" y="463" width="10" height="10" fill="#990065"/>
<rect x="1719" y="463" width="10" height="10" fill="#990061"/>
<rect x="1729" y="463" width="10" height="10" fill="#99005d"/>
<rect x="1739" y="463" width="10" height="10" fill="#99005a"/>
<rect x="1749" y="463" width="10" height="10" fill="#990057"/>
<rect x="1759" y="463" width="10" height="10" fill="#990054"/>
<rect x="1329" y="473" width="10" height="10" fill="#002799"/>
<rect x="1339" y="473" width="10" height="10" fill="#002599"/>
<rect x="1349" y="473" width="10" height="10" fill="#002399"/>
<rect x="1359" y="473" width="10" height="10" fill="#002299"/>
<rect x="1369" y="473" width="10" height="10" fill="#002099"/>
<rect x="1379" y="473" width="10" height="10" fill="#001e99"/>
<rect x="1389" y="473" width="10" height="10" fill="#001c99"/>
<rect x="1399" y="473" width="10" height="10" fill="#001a99"/>
<rect x="1409" y="473" width="10" height="10" fill="#001899"/>
<rect x="1419" y="473" width="10" height="10" fill="#001799"/>
<rect x="1429" y="473" width="10" height="10" fill="#061599"/>
<rect x="1439" y="473" width="10" height="10" fill="#0c1399"/>
<rect x="1509" y="473" width="10" height="10" fill="#3f0599"/>
<rect x="1519" y="473" width="10" height="10" fill="#460399"/>
<rect x="1529" y="473" width="10" height="10" fill="#4d0199"/>
<rect x="1539" y="473" width="10" height="10" fill="#550099"/>
<rect x="1549" y="473" width="10" height="10" fill="#5c0099"/>
<rect x="1559" y="473" width="10" height="10" fill="#640099"/>
<rect x="1569" y="473" width="10" height="10" fill="#6c0099"/>
<rect x="1579" y="473" width="10" height="10" fill="#740099"/>
<rect x="1589" y="473" width="10" height="10" fill="#7b0099"/>
<rect x="1599" y="473" width="10" height="10" fill="#830099"/>
<rect x="1609" y="473" width="10" height="10" fill="#8b0099"/>
<rect x="1619" y="473" width="10" height="10" fill="#930099"/>
<rect x="1629" y="473" width="10" height="10" fill="#990097"/>
<rect x="1639" y="473" width="10" height="10" fill="#99008f"/>
<rect x="1649" y="473" width="10" height="10" fill="#990088"/>
<rect x="1659" y="473" width="10" height="10" fill="#990082"/>
<rect x="1669" y="473" width="10" height="10" fill="#99007c"/>
<rect x="1679" y="473" width="10" height="10" fill="#990077"/>
<rect x="1689" y="473" width="10" height="10" fill="#990072"/>
<rect x="1699" y="473" width="10" height="10" fill="#99006d"/>
<rect x="1709" y="473" width="10" height="10" fill="#990069"/>
<rect x="1719" y="473" width="10" height="10" fill="#990065"/>
<rect x="1729" y="473" width="10" height="10" fill="#990061"/>
<rect x="1739" y="473" width="10" height="10" fill="#99005e"/>
<rect x="1749" y="473" width="10" height="10" fill="#99005b"/>
<rect x="1329" y="483" width="10" height="10" fill="#002499"/>
<rect x="1339" y="483" width="10" height="10" fill="#002399"/>
<rect x="1349" y="483" width="10" height="10" fill="#002199"/>
<rect x="1359" y="483" width="10" height="10" fill="#001f99"/>
<rect x="1369" y="483" width="10" height="10" fill="#001d99"/>
<rect x="1379" y="483" width="10" height="10" fill="#001b99"/>
<rect x="1389" y="483" width="10" height="10" fill="#001a99"/>
<rect x="1399" y="483" width="10" height="10" fill="#001899"/>
<rect x="1409" y="483" width="10" height="10" fill="#001699"/>
<rect x="1419" y="483" width="10" height="10" fill="#001499"/>
<rect x="1429" y="483" width="10" height="10" fill="#041299"/>
<rect x="1439" y="483" width="10" height="10" fill="#0b1199"/>
<rect x="1499" y="483" width="10" height="10" fill="#340599"/>
<rect x="1509" y="483" width="10" height="10" fill="#3b0399"/>
<rect x="1519" y="483" width="10" height="10" fill="#430199"/>
<rect x="1529" y="483" width="10" height="10" fill="#4a0099"/>
<rect x="1539" y="483" width="10" height="10" fill="#510099"/>
<rect x="1549" y="483" width="10" height="10" fill="#580099"/>
<rect x="1559" y="483" width="10" height="10" fill="#600099"/>
<rect x="1569" y="483" width="10" height="10" fill="#670099"/>
<rect x="1579" y="483" width="10" height="10" fill="#6f0099"/>
<rect x="1589" y="483" width="10" height="10" fill="#760099"/>
<rect x="1599" y="483" width="10" height="10" fill="#7e0099"/>
<rect x="1609" y="483" width="10" height="10" fill="#850099"/>
<rect x="1619" y="483" width="10" height="10" fill="#8d0099"/>
<rect x="1629" y="483" width="10" height="10" fill="#950099"/>
<rect x="1639" y="483" width="10" height="10" fill="#990095"/>
<rect x="1649" y="483" width="10" height="10" fill="#99008e"/>
<rect x="1659" y="483" width="10" height="10" fill="#990088"/>
<rect x="1669" y="483" width="10" height="10" fill="#990082"/>
<rect x="1679" y="483" width="10" height="10" fill="#99007c"/>
<rect x="1689" y="483" width="10" height="10" fill="#990077"/>
<rect x="1699" y="483" width="10" height="10" fill="#990072"/>
<rect x="1709" y="483" width="10" height="10" fill="#99006e"/>
<rect x="1719" y="483" width="10" height="10" fill="#99006a"/>
<rect x="1729" y="483" width="10" height="10" fill="#990066"/>
<rect x="1739" y="483" width="10" height="10" fill="#990062"/>
<rect x="1339" y="493" width="10" height="10" fill="#002099"/>
<rect x="1349" y="493" width="10" height="10" fill="#001e99"/>
<rect x="1359" y="493" width="10" height="10" fill="#001d99"/>
<rect x="1369" y="493" width="10" height="10" fill="#001b99"/>
<rect x="1379" y="493" width="10" height="10" fill="#001999"/>
<rect x="1389" y="493" width="10" height="10" fill="#001799"/>
<rect x="1399" y="493" width="10" height="10" fill="#001699"/>
<rect x="1409" y="493" width="10" height="10" fill="#001499"/>
<rect x="1419" y="493" width="10" height="10" fill="#001299"/>
<rect x="1429" y="493" width="10" height="10" fill="#031099"/>
<rect x="1439" y="493" width="10" height="10" fill="#0a0f99"/>
<rect x="1489" y="493" width="10" height="10" fill="#2b0599"/>
<rect x="1499" y="493" width="10" height="10" fill="#320399"/>
<rect x="1509" y="493" width="10" height="10" fill="#390299"/>
<rect x="1519" y="493" width="10" height="10" fill="#3f0099"/>
<rect x="1529" y="493" width="10" height="10" fill="#460099"/>
<rect x="1539" y="493" width="10" height="10" fill="#4d0099"/>
<rect x="1549" y="493" width="10" height="10" fill="#540099"/>
<rect x="1559" y="493" width="10" height="10" fill="#5c0099"/>
<rect x="1569" y="493" width="10" height="10" fill="#630099"/>
<rect x="1579" y="493" width="10" height="10" fill="#6a0099"/>
<rect x="1589" y="493" width="10" height="10" fill="#710099"/>
<rect x="1599" y="493" width="10" height="10" fill="#780099"/>
<rect x="1609" y="493" width="10" height="10" fill="#800099"/>
<rect x="1619" y="493" width="10" height="10" fill="#870099"/>
<rect x="1629" y="493" width="10" height="10" fill="#8f0099"/>
<rect x="1639" y="493" width="10" height="10" fill="#960099"/>
<rect x="1649" y="493" width="10" height="10" fill="#990094"/>
<rect x="1659" y="493" width="10" height="10" fill="#99008d"/>
<rect x="1669" y="493" width="10" height="10" fill="#990087"/>
<rect x="1679" y="493" width="10" height="10" fill="#990081"/>
<rect x="1689" y="493" width="10" height="10" fill="#99007c"/>
<rect x="1699" y="493" width="10" height="10" fill="#990077"/>
<rect x="1709" y="493" width="10" height="10" fill="#990072"/>
<rect x="1719" y="493" width="10" height="10" fill="#99006e"/>
<rect x="1729" y="493" width="10" height="10" fill="#99006a"/>
<rect x="1339" y="503" width="10" height="10" fill="#001e99"/>
<rect x="1349" y="503" width="10" height="10" fill="#001c99"/>
<rect x="1359" y="503" width="10" height="10" fill="#001a99"/>
<rect x="1369" y="503" width="10" height="10" fill="#001999"/>
<rect x="1379" y="503" width="10" height="10" fill="#001799"/>
<rect x="1389" y="503" width="10" height="10" fill="#001599"/>
<rect x="1399" y="503" width="10" height="10" fill="#001499"/>
<rect x="1409" y="503" width="10" height="10" fill="#001299"/>
<rect x="1419" y="503" width="10" height="10" fill="#001099"/>
<rect x="1429" y="503" width="10" height="10" fill="#030e99"/>
<rect x="1439" y="503" width="10" height="10" fill="#090d99"/>
<rect x="1489" y="503" width="10" height="10" fill="#290499"/>
<rect x="1499" y="503" width="10" height="10" fill="#2f0299"/>
<rect x="1509" y="503" width="10" height="10" fill="#360099"/>
<rect x="1519" y="503" width="10" height="10" fill="#3d0099"/>
<rect x="1529" y="503" width="10" height="10" fill="#430099"/>
<rect x="1539" y="503" width="10" height="10" fill="#4a0099"/>
<rect x="1549" y="503" width="10" height="10" fill="#510099"/>
<rect x="1559" y="503" width="10" height="10" fill="#580099"/>
<rect x="1569" y="503" width="10" height="10" fill="#5f0099"/>
<rect x="1579" y="503" width="10" height="10" fill="#650099"/>
<rect x="1589" y="503" width="10" height="10" fill="#6c0099"/>
<rect x="1599" y="503" width="10" height="10" fill="#740099"/>
<rect x="1609" y="503" width="10" height="10" fill="#7b0099"/>
<rect x="1619" y="503" width="10" height="10" fill="#820099"/>
<rect x="1629" y="503" width="10" height="10" fill="#890099"/>
<rect x="1639" y="503" width="10" height="10" fill="#900099"/>
<rect x="1649" y="503" width="10" height="10" fill="#980099"/>
<rect x="1659" y="503" width="10" height="10" fill="#990093"/>
<rect x="1669" y="503" width="10" height="10" fill="#99008d"/>
<rect x="1679" y="503" width="10" height="10" fill="#990087"/>
<rect x="1689" y="503" width="10" height="10" fill="#990081"/>
<rect x="1699" y="503" width="10" height="10" fill="#99007c"/>
<rect x="1709" y="503" width="10" height="10" fill="#990077"/>
<rect x="1719" y="503" width="10" height="10" fill="#990073"/>
<rect x="1349" y="513" width="10" height="10" fill="#001a99"/>
<rect x="1359" y="513" width="10" height="10" fill="#001899"/>
<rect x="1369" y="513" width="10" height="10" fill="#001799"/>
<rect x="1379" y="513" width="10" height="10" fill="#001599"/>
<rect x="1389" y="513" width="10" height="10" fill="#001399"/>
<rect x="1399" y="513" width="10" height="10" fill="#001299"/>
<rect x="1409" y="513" width="10" height="10" fill="#001099"/>
<rect x="1419" y="513" width="10" height="10" fill="#000e99"/>
<rect x="1429" y="513" width="10" height="10" fill="#020d99"/>
<rect x="1439" y="513" width="10" height="10" fill="#080b99"/>
<rect x="1479" y="513" width="10" height="10" fill="#200499"/>
<rect x="1489" y="513" width="10" height="10" fill="#270299"/>
<rect x="1499" y="513" width="10" height="10" fill="#2d0099"/>
<rect x="1509" y="513" width="10" height="10" fill="#330099"/>
<rect x="1519" y="513" width="10" height="10" fill="#3a0099"/>
<rect x="1529" y="513" width="10" height="10" fill="#400099"/>
<rect x="1539" y="513" width="10" height="10" fill="#470099"/>
<rect x="1549" y="513" width="10" height="10" fill="#4d0099"/>
<rect x="1559" y="513" width="10" height="10" fill="#540099"/>
<rect x="1569" y="513" width="10" height="10" fill="#5b0099"/>
<rect x="1579" y="513" width="10" height="10" fill="#610099"/>
<rect x="1589" y="513" width="10" height="10" fill="#680099"/>
<rect x="1599" y="513" width="10" height="10" fill="#6f0099"/>
<rect x="1609" y="513" width="10" height="10" fill="#760099"/>
<rect x="1619" y="513" width="10" height="10" fill="#7d0099"/>
<rect x="1629" y="513" width="10" height="10" fill="#840099"/>
<rect x="1639" y="513" width="10" height="10" fill="#8b0099"/>
<rect x="1649" y="513" width="10" height="10" fill="#920099"/>
<rect x="1659" y="513" width="10" height="10" fill="#990099"/>
<rect x="1669" y="513" width="10" height="10" fill="#990092"/>
<rect x="1679" y="513" width="10" height="10" fill="#99008c"/>
<rect x="1689" y="513" width="10" height="10" fill="#990086"/>
<rect x="1699" y="513" width="10" height="10" fill="#990081"/>
<rect x="1709" y="513" width="10" height="10" fill="#99007c"/>
<rect x="1719" y="513" width="10" height="10" fill="#990077"/>
<rect x="1349" y="523" width="10" height="10" fill="#001899"/>
<rect x="1359" y="523" width="10" height="10" fill="#001699"/>
<rect x="1369" y="523" width="10" height="10" fill="#001599"/>
<rect x="1379" y="523" width="10" height="10" fill="#001399"/>
<rect x="1389" y="523" width="10" height="10" fill="#001199"/>
<rect x="1399" y="523" width="10" height="10" fill="#001099"/>
<rect x="1409" y="523" width="10" height="10" fill="#000e99"/>
<rect x="1419" y="523" width="10" height="10" fill="#000c99"/>
<rect x="1429" y="523" width="10" height="10" fill="#010b99"/>
<rect x="1439" y="523" width="10" height="10" fill="#070999"/>
<rect x="1449" y="523" width="10" height="10" fill="#0d0799"/>
<rect x="1469" y="523" width="10" height="10" fill="#190499"/>
<rect x="1479" y="523" width="10" height="10" fill="#1f0299"/>
<rect x="1489" y="523" width="10" height="10" fill="#250199"/>
<rect x="1499" y="523" width="10" height="10" fill="#2b0099"/>
<rect x="1509" y="523" width="10" height="10" fill="#310099"/>
<rect x="1519" y="523" width="10" height="10" fill="#370099"/>
<rect x="1529" y="523" width="10" height="10" fill="#3e0099"/>
<rect x="1539" y="523" width="10" height="10" fill="#440099"/>
<rect x="1549" y="523" width="10" height="10" fill="#4a0099"/>
<rect x="1559" y="523" width="10" height="10" fill="#510099"/>
<rect x="1569" y="523" width="10" height="10" fill="#570099"/>
<rect x="1579" y="523" width="10" height="10" fill="#5e0099"/>
<rect x="1589" y="523" width="10" height="10" fill="#640099"/>
<rect x="1599" y="523" width="10" height="10" fill="#6b0099"/>
<rect x="1609" y="523" width="10" height="10" fill="#710099"/>
<rect x="1619" y="523" width="10" height="10" fill="#780099"/>
<rect x="1629" y="523" width="10" height="10" fill="#7f0099"/>
<rect x="1639" y="523" width="10" height="10" fill="#850099"/>
<rect x="1649" y="523" width="10" height="10" fill="#8c0099"/>
<rect x="1659" y="523" width="10" height="10" fill="#930099"/>
<rect x="1669" y="523" width="10" height="10" fill="#990098"/>
<rect x="1679" y="523" width="10" height="10" fill="#990091"/>
<rect x="1689" y="523" width="10" height="10" fill="#99008b"/>
<rect x="1699" y="523" width="10" height="10" fill="#990086"/>
<rect x="1709" y="523" width="10" height="10" fill="#990080"/>
<rect x="1359" y="533" width="10" height="10" fill="#001499"/>
<rect x="1369" y="533" width="10" height="10" fill="#001399"/>
<rect x="1379" y="533" width="10" height="10" fill="#001199"/>
<rect x="1389" y="533" width="10" height="10" fill="#001099"/>
<rect x="1399" y="533" width="10" height="10" fill="#000e99"/>
<rect x="1409" y="533" width="10" height="10" fill="#000c99"/>
<rect x="1419" y="533" width="10" height="10" fill="#000b99"/>
<rect x="1429" y="533" width="10" height="10" fill="#000999"/>
<rect x="1439" y="533" width="10" height="10" fill="#060899"/>
<rect x="1449" y="533" width="10" height="10" fill="#0b0699"/>
<rect x="1459" y="533" width="10" height="10" fill="#110499"/>
<rect x="1469" y="533" width="10" height="10" fill="#170399"/>
<rect x="1479" y="533" width="10" height="10" fill="#1d0199"/>
<rect x="1489" y="533" width="10" height="10" fill="#230099"/>
<rect x="1499" y="533" width="10" height="10" fill="#290099"/>
<rect x="1509" y="533" width="10" height="10" fill="#2f0099"/>
<rect x="1519" y="533" width="10" height="10" fill="#350099"/>
<rect x="1529" y="533" width="10" height="10" fill="#3b0099"/>
<rect x="1539" y="533" width="10" height="10" fill="#410099"/>
<rect x="1549" y="533" width="10" height="10" fill="#470099"/>
<rect x="1559" y="533" width="10" height="10" fill="#4d0099"/>
<rect x="1569" y="533" width="10" height="10" fill="#540099"/>
<rect x="1579" y="533" width="10" height="10" fill="#5a0099"/>
<rect x="1589" y="533" width="10" height="10" fill="#600099"/>
<rect x="1599" y="533" width="10" height="10" fill="#670099"/>
<rect x="1609" y="533" width="10" height="10" fill="#6d0099"/>
<rect x="1619" y="533" width="10" height="10" fill="#730099"/>
<rect x="1629" y="533" width="10" height="10" fill="#7a0099"/>
<rect x="1639" y="533" width="10" height="10" fill="#810099"/>
<rect x="1649" y="533" width="10" height="10" fill="#870099"/>
<rect x="1659" y="533" width="10" height="10" fill="#8e0099"/>
<rect x="1669" y="533" width="10" height="10" fill="#940099"/>
<rect x="1679" y="533" width="10" height="10" fill="#990097"/>
<rect x="1689" y="533" width="10" height="10" fill="#990091"/>
<rect x="1699" y="533" width="10" height="10" fill="#99008b"/>
<rect x="1359" y="543" width="10" height="10" fill="#001299"/>
<rect x="1369" y="543" width="10" height="10" fill="#001199"/>
<rect x="1379" y="543" width="10" height="10" fill="#000f99"/>
<rect x="1389" y="543" width="10" height="10" fill="#000e99"/>
<rect x="1399" y="543" width="10" height="10" fill="#000c99"/>
<rect x="1409" y="543" width="10" height="10" fill="#000b99"/>
<rect x="1419" y="543" width="10" height="10" fill="#000999"/>
<rect x="1429" y="543" width="10" height="10" fill="#000899"/>
<rect x="1439" y="543" width="10" height="10" fill="#050699"/>
<rect x="1449" y="543" width="10" height="10" fill="#0a0499"/>
<rect x="1459" y="543" width="10" height="10" fill="#100399"/>
<rect x="1469" y="543" width="10" height="10" fill="#160199"/>
<rect x="1479" y="543" width="10" height="10" fill="#1b0099"/>
<rect x="1489" y="543" width="10" height="10" fill="#210099"/>
<rect x="1499" y="543" width="10" height="10" fill="#270099"/>
<rect x="1509" y="543" width="10" height="10" fill="#2d0099"/>
<rect x="1519" y="543" width="10" height="10" fill="#330099"/>
<rect x="1529" y="543" width="10" height="10" fill="#380099"/>
<rect x="1539" y="543" width="10" height="10" fill="#3e0099"/>
<rect x="1549" y="543" width="10" height="10" fill="#440099"/>
<rect x="1559" y="543" width="10" height="10" fill="#4a0099"/>
<rect x="1569" y="543" width="10" height="10" fill="#500099"/>
<rect x="1579" y="543" width="10" height="10" fill="#570099"/>
<rect x="1589" y="543" width="10" height="10" fill="#5d0099"/>
<rect x="1599" y="543" width="10" height="10" fill="#630099"/>
<rect x="1609" y="543" width="10" height="10" fill="#690099"/>
<rect x="1619" y="543" width="10" height="10" fill="#6f0099"/>
<rect x="1629" y="543" width="10" height="10" fill="#760099"/>
<rect x="1639" y="543" width="10" height="10" fill="#7c0099"/>
<rect x="1649" y="543" width="10" height="10" fill="#820099"/>
<rect x="1659" y="543" width="10" height="10" fill="#890099"/>
<rect x="1669" y="543" width="10" height="10" fill="#8f0099"/>
<rect x="1679" y="543" width="10" height="10" fill="#960099"/>
<rect x="1689" y="543" width="10" height="10" fill="#990096"/>
<rect x="1369" y="553" width="10" height="10" fill="#000f99"/>
<rect x="1379" y="553" width="10" height="10" fill="#000e99"/>
<rect x="1389" y="553" width="10" height="10" fill="#000c99"/>
<rect x="1399" y="553" width="10" height="10" fill="#000b99"/>
<rect x="1409" y="553" width="10" height="10" fill="#000999"/>
<rect x="1419" y="553" width="10" height="10" fill="#000899"/>
<rect x="1429" y="553" width="10" height="10" fill="#000699"/>
<rect x="1439" y="553" width="10" height="10" fill="#040599"/>
<rect x="1449" y="553" width="10" height="10" fill="#090399"/>
<rect x="1459" y="553" width="10" height="10" fill="#0f0199"/>
<rect x="1469" y="553" width="10" height="10" fill="#140099"/>
<rect x="1479" y="553" width="10" height="10" fill="#1a0099"/>
<rect x="1489" y="553" width="10" height="10" fill="#200099"/>
<rect x="1499" y="553" width="10" height="10" fill="#250099"/>
<rect x="1509" y="553" width="10" height="10" fill="#2b0099"/>
<rect x="1519" y="553" width="10" height="10" fill="#300099"/>
<rect x="1529" y="553" width="10" height="10" fill="#360099"/>
<rect x="1539" y="553" width="10" height="10" fill="#3c0099"/>
<rect x="1549" y="553" width="10" height="10" fill="#420099"/>
<rect x="1559" y="553" width="10" height="10" fill="#480099"/>
<rect x="1569" y="553" width="10" height="10" fill="#4d0099"/>
<rect x="1579" y="553" width="10" height="10" fill="#530099"/>
<rect x="1589" y="553" width="10" height="10" fill="#590099"/>
<rect x="1599" y="553" width="10" height="10" fill="#5f0099"/>
<rect x="1609" y="553" width="10" height="10" fill="#650099"/>
<rect x="1619" y="553" width="10" height="10" fill="#6b0099"/>
<rect x="1629" y="553" width="10" height="10" fill="#710099"/>
<rect x="1639" y="553" width="10" height="10" fill="#780099"/>
<rect x="1649" y="553" width="10" height="10" fill="#7e0099"/>
<rect x="1659" y="553" width="10" height="10" fill="#840099"/>
<rect x="1669" y="553" width="10" height="10" fill="#8a0099"/>
<rect x="1679" y="553" width="10" height="10" fill="#900099"/>
<rect x="1369" y="563" width="10" height="10" fill="#000e99"/>
<rect x="1379" y="563" width="10" height="10" fill="#000c99"/>
<rect x="1389" y="563" width="10" height="10" fill="#000b99"/>
<rect x="1399" y="563" width="10" height="10" fill="#000999"/>
<rect x="1409" y="563" width="10" height="10" fill="#000899"/>
<rect x="1419" y="563" width="10" height="10" fill="#000699"/>
<rect x="1429" y="563" width="10" height="10" fill="#000599"/>
<rect x="1439" y="563" width="10" height="10" fill="#030399"/>
<rect x="1449" y="563" width="10" height="10" fill="#080299"/>
<rect x="1459" y="563" width="10" height="10" fill="#0e0099"/>
<rect x="1469" y="563" width="10" height="10" fill="#130099"/>
<rect x="1479" y="563" width="10" height="10" fill="#190099"/>
<rect x="1489" y="563" width="10" height="10" fill="#1e0099"/>
<rect x="1499" y="563" width="10" height="10" fill="#230099"/>
<rect x="1509" y="563" width="10" height="10" fill="#290099"/>
<rect x="1519" y="563" width="10" height="10" fill="#2e0099"/>
<rect x="1529" y="563" width="10" height="10" fill="#340099"/>
<rect x="1539" y="563" width="10" height="10" fill="#3a0099"/>
<rect x="1549" y="563" width="10" height="10" fill="#3f0099"/>
<rect x="1559" y="563" width="10" height="10" fill="#450099"/>
<rect x="1569" y="563" width="10" height="10" fill="#4b0099"/>
<rect x="1579" y="563" width="10" height="10" fill="#500099"/>
<rect x="1589" y="563" width="10" height="10" fill="#560099"/>
<rect x="1599" y="563" width="10" height="10" fill="#5c0099"/>
<rect x="1609" y="563" width="10" height="10" fill="#620099"/>
<rect x="1619" y="563" width="10" height="10" fill="#680099"/>
<rect x="1629" y="563" width="10" height="10" fill="#6d0099"/>
<rect x="1639" y="563" width="10" height="10" fill="#730099"/>
<rect x="1649" y="563" width="10" height="10" fill="#790099"/>
<rect x="1659" y="563" width="10" height="10" fill="#7f0099"/>
<rect x="1669" y="563" width="10" height="10" fill="#860099"/>
<rect x="1679" y="563" width="10" height="10" fill="#8c0099"/>
<rect x="1379" y="573" width="10" height="10" fill="#000b99"/>
<rect x="1389" y="573" width="10" height="10" fill="#000999"/>
<rect x="1399" y="573" width="10" height="10" fill="#000899"/>
<rect x="1409" y="573" width="10" height="10" fill="#000699"/>
<rect x="1419" y="573" width="10" height="10" fill="#000599"/>
<rect x="1429" y="573" width="10" height="10" fill="#000399"/>
<rect x="1439" y="573" width="10" height="10" fill="#020299"/>
<rect x="1449" y="573" width="10" height="10" fill="#080099"/>
<rect x="1459" y="573" width="10" height="10" fill="#0d0099"/>
<rect x="1469" y="573" width="10" height="10" fill="#120099"/>
<rect x="1479" y="573" width="10" height="10" fill="#170099"/>
<rect x="1489" y="573" width="10" height="10" fill="#1c0099"/>
<rect x="1499" y="573" width="10" height="10" fill="#220099"/>
<rect x="1509" y="573" width="10" height="10" fill="#270099"/>
<rect x="1519" y="573" width="10" height="10" fill="#2c0099"/>
<rect x="1529" y="573" width="10" height="10" fill="#320099"/>
<rect x="1539" y="573" width="10" height="10" fill="#370099"/>
<rect x="1549" y="573" width="10" height="10" fill="#3d0099"/>
<rect x="1559" y="573" width="10" height="10" fill="#420099"/>
<rect x="1569" y="573" width="10" height="10" fill="#480099"/>
<rect x="1579" y="573" width="10" height="10" fill="#4d0099"/>
<rect x="1589" y="573" width="10" height="10" fill="#530099"/>
<rect x="1599" y="573" width="10" height="10" fill="#590099"/>
<rect x="1609" y="573" width="10" height="10" fill="#5e0099"/>
<rect x="1619" y="573" width="10" height="10" fill="#640099"/>
<rect x="1629" y="573" width="10" height="10" fill="#6a0099"/>
<rect x="1639" y="573" width="10" height="10" fill="#700099"/>
<rect x="1649" y="573" width="10" height="10" fill="#750099"/>
<rect x="1659" y="573" width="10" height="10" fill="#7b0099"/>
<rect x="1669" y="573" width="10" height="10" fill="#810099"/>
<rect x="1389" y="583" width="10" height="10" fill="#000899"/>
<rect x="1399" y="583" width="10" height="10" fill="#000699"/>
<rect x="1409" y="583" width="10" height="10" fill="#000599"/>
<rect x="1419" y="583" width="10" height="10" fill="#000499"/>
<rect x="1429" y="583" width="10" height="10" fill="#000299"/>
<rect x="1439" y="583" width="10" height="10" fill="#020199"/>
<rect x="1449" y="583" width="10" height="10" fill="#070099"/>
<rect x="1459" y="583" width="10" height="10" fill="#0c0099"/>
<rect x="1469" y="583" width="10" height="10" fill="#110099"/>
<rect x="1479" y="583" width="10" height="10" fill="#160099"/>
<rect x="1489" y="583" width="10" height="10" fill="#1b0099"/>
<rect x="1499" y="583" width="10" height="10" fill="#200099"/>
<rect x="1509" y="583" width="10" height="10" fill="#250099"/>
<rect x="1519" y="583" width="10" height="10" fill="#2b0099"/>
<rect x="1529" y="583" width="10" height="10" fill="#300099"/>
<rect x="1539" y="583" width="10" height="10" fill="#350099"/>
<rect x="1549" y="583" width="10" height="10" fill="#3b0099"/>
<rect x="1559" y="583" width="10" height="10" fill="#400099"/>
<rect x="1569" y="583" width="10" height="10" fill="#450099"/>
<rect x="1579" y="583" width="10" height="10" fill="#4b0099"/>
<rect x="1589" y="583" width="10" height="10" fill="#500099"/>
<rect x="1599" y="583" width="10" height="10" fill="#560099"/>
<rect x="1609" y="583" width="10" height="10" fill="#5b0099"/>
<rect x="1619" y="583" width="10" height="10" fill="#610099"/>
<rect x="1629" y="583" width="10" height="10" fill="#660099"/>
<rect x="1639" y="583" width="10" height="10" fill="#6c0099"/>
<rect x="1649" y="583" width="10" height="10" fill="#710099"/>
<rect x="1659" y="583" width="10" height="10" fill="#770099"/>
<rect x="1389" y="593" width="10" height="10" fill="#000799"/>
<rect x="1399" y="593" width="10" height="10" fill="#000599"/>
<rect x="1409" y="593" width="10" height="10" fill="#000499"/>
<rect x="1419" y="593" width="10" height="10" fill="#000299"/>
<rect x="1429" y="593" width="10" height="10" fill="#000199"/>
<rect x="1439" y="593" width="10" height="10" fill="#010099"/>
<rect x="1449" y="593" width="10" height="10" fill="#060099"/>
<rect x="1459" y="593" width="10" height="10" fill="#0b0099"/>
<rect x="1469" y="593" width="10" height="10" fill="#100099"/>
<rect x="1479" y="593" width="10" height="10" fill="#150099"/>
<rect x="1489" y="593" width="10" height="10" fill="#1a0099"/>
<rect x="1499" y="593" width="10" height="10" fill="#1f0099"/>
<rect x="1509" y="593" width="10" height="10" fill="#240099"/>
<rect x="1519" y="593" width="10" height="10" fill="#290099"/>
<rect x="1529" y="593" width="10" height="10" fill="#2e0099"/>
<rect x="1539" y="593" width="10" height="10" fill="#330099"/>
<rect x="1549" y="593" width="10" height="10" fill="#380099"/>
<rect x="1559" y="593" width="10" height="10" fill="#3e0099"/>
<rect x="1569" y="593" width="10" height="10" fill="#430099"/>
<rect x="1579" y="593" width="10" height="10" fill="#480099"/>
<rect x="1589" y="593" width="10" height="10" fill="#4d0099"/>
<rect x="1599" y="593" width="10" height="10" fill="#530099"/>
<rect x="1609" y="593" width="10" height="10" fill="#580099"/>
<rect x="1619" y="593" width="10" height="10" fill="#5d0099"/>
<rect x="1629" y="593" width="10" height="10" fill="#630099"/>
<rect x="1639" y="593" width="10" height="10" fill="#680099"/>
<rect x="1649" y="593" width="10" height="10" fill="#6e0099"/>
<rect x="1399" y="603" width="10" height="10" fill="#000499"/>
<rect x="1409" y="603" width="10" height="10" fill="#000399"/>
<rect x="1419" y="603" width="10" height="10" fill="#000199"/>
<rect x="1429" y="603" width="10" height="10" fill="#000099"/>
<rect x="1439" y="603" width="10" height="10" fill="#000099"/>
<rect x="1449" y="603" width="10" height="10" fill="#050099"/>
<rect x="1459" y="603" width="10" height="10" fill="#0a0099"/>
<rect x="1469" y="603" width="10" height="10" fill="#0f0099"/>
<rect x="1479" y="603" width="10" height="10" fill="#140099"/>
<rect x="1489" y="603" width="10" height="10" fill="#180099"/>
<rect x="1499" y="603" width="10" height="10" fill="#1d0099"/>
<rect x="1509" y="603" width="10" height="10" fill="#220099"/>
<rect x="1519" y="603" width="10" height="10" fill="#270099"/>
<rect x="1529" y="603" width="10" height="10" fill="#2c0099"/>
<rect x="1539" y="603" width="10" height="10" fill="#310099"/>
<rect x="1549" y="603" width="10" height="10" fill="#360099"/>
<rect x="1559" y="603" width="10" height="10" fill="#3b0099"/>
<rect x="1569" y="603" width="10" height="10" fill="#410099"/>
<rect x="1579" y="603" width="10" height="10" fill="#460099"/>
<rect x="1589" y="603" width="10" height="10" fill="#4b0099"/>
<rect x="1599" y="603" width="10" height="10" fill="#500099"/>
<rect x="1609" y="603" width="10" height="10" fill="#550099"/>
<rect x="1619" y="603" width="10" height="10" fill="#5a0099"/>
<rect x="1629" y="603" width="10" height="10" fill="#600099"/>
<rect x="1639" y="603" width="10" height="10" fill="#650099"/>
<rect x="1399" y="613" width="10" height="10" fill="#000399"/>
<rect x="1409" y="613" width="10" height="10" fill="#000199"/>
<rect x="1419" y="613" width="10" height="10" fill="#000099"/>
<rect x="1429" y="613" width="10" height="10" fill="#000099"/>
<rect x="1439" y="613" width="10" height="10" fill="#000099"/>
<rect x="1449" y="613" width="10" height="10" fill="#040099"/>
<rect x="1459" y="613" width="10" height="10" fill="#090099"/>
<rect x="1469" y="613" width="10" height="10" fill="#0e0099"/>
<rect x="1479" y="613" width="10" height="10" fill="#120099"/>
<rect x="1489" y="613" width="10" height="10" fill="#170099"/>
<rect x="1499" y="613" width="10" height="10" fill="#1c0099"/>
<rect x="1509" y="613" width="10" height="10" fill="#210099"/>
<rect x="1519" y="613" width="10" height="10" fill="#260099"/>
<rect x="1529" y="613" width="10" height="10" fill="#2b0099"/>
<rect x="1539" y="613" width="10" height="10" fill="#2f0099"/>
<rect x="1549" y="613" width="10" height="10" fill="#340099"/>
<rect x="1559" y="613" width="10" height="10" fill="#390099"/>
<rect x="1569" y="613" width="10" height="10" fill="#3e0099"/>
<rect x="1579" y="613" width="10" height="10" fill="#430099"/>
<rect x="1589" y="613" width="10" height="10" fill="#480099"/>
<rect x="1599" y="613" width="10" height="10" fill="#4d0099"/>
<rect x="1609" y="613" width="10" height="10" fill="#520099"/>
<rect x="1619" y="613" width="10" height="10" fill="#580099"/>
<rect x="1629" y="613" width="10" height="10" fill="#5d0099"/>
<rect x="1639" y="613" width="10" height="10" fill="#620099"/>
<rect x="1409" y="623" width="10" height="10" fill="#000099"/>
<rect x="1419" y="623" width="10" height="10" fill="#000099"/>
<rect x="1429" y="623" width="10" height="10" fill="#000099"/>
<rect x="1439" y="623" width="10" height="10" fill="#000099"/>
<rect x="1449" y="623" width="10" height="10" fill="#040099"/>
<rect x="1459" y="623" width="10" height="10" fill="#080099"/>
<rect x="1469" y="623" width="10" height="10" fill="#0d0099"/>
<rect x="1479" y="623" width="10" height="10" fill="#110099"/>
<rect x="1489" y="623" width="10" height="10" fill="#160099"/>
<rect x="1499" y="623" width="10" height="10" fill="#1b0099"/>
<rect x="1509" y="623" width="10" height="10" fill="#1f0099"/>
<rect x="1519" y="623" width="10" height="10" fill="#240099"/>
<rect x="1529" y="623" width="10" height="10" fill="#290099"/>
<rect x="1539" y="623" width="10" height="10" fill="#2e0099"/>
<rect x="1549" y="623" width="10" height="10" fill="#330099"/>
<rect x="1559" y="623" width="10" height="10" fill="#370099"/>
<rect x="1569" y="623" width="10" height="10" fill="#3c0099"/>
<rect x="1579" y="623" width="10" height="10" fill="#410099"/>
<rect x="1589" y="623" width="10" height="10" fill="#460099"/>
<rect x="1599" y="623" width="10" height="10" fill="#4b0099"/>
<rect x="1609" y="623" width="10" height="10" fill="#500099"/>
<rect x="1619" y="623" width="10" height="10" fill="#550099"/>
<rect x="1629" y="623" width="10" height="10" fill="#5a0099"/>
<rect x="1419" y="633" width="10" height="10" fill="#000099"/>
<rect x="1429" y="633" width="10" height="10" fill="#000099"/>
<rect x="1439" y="633" width="10" height="10" fill="#000099"/>
<rect x="1449" y="633" width="10" height="10" fill="#030099"/>
<rect x="1459" y="633" width="10" height="10" fill="#070099"/>
<rect x="1469" y="633" width="10" height="10" fill="#0c0099"/>
<rect x="1479" y="633" width="10" height="10" fill="#100099"/>
<rect x="1489" y="633" width="10" height="10" fill="#150099"/>
<rect x="1499" y="633" width="10" height="10" fill="#1a0099"/>
<rect x="1509" y="633" width="10" height="10" fill="#1e0099"/>
<rect x="1519" y="633" width="10" height="10" fill="#230099"/>
<rect x="1529" y="633" width="10" height="10" fill="#270099"/>
<rect x="1539" y="633" width="10" height="10" fill="#2c0099"/>
<rect x="1549" y="633" width="10" height="10" fill="#310099"/>
<rect x="1559" y="633" width="10" height="10" fill="#350099"/>
<rect x="1569" y="633" width="10" height="10" fill="#3a0099"/>
<rect x="1579" y="633" width="10" height="10" fill="#3f0099"/>
<rect x="1589" y="633" width="10" height="10" fill="#440099"/>
<rect x="1599" y="633" width="10" height="10" fill="#490099"/>
<rect x="1609" y="633" width="10" height="10" fill="#4d0099"/>
<rect x="1619" y="633" width="10" height="10" fill="#520099"/>
<rect x="1429" y="643" width="10" height="10" fill="#000099"/>
<rect x="1439" y="643" width="10" height="10" fill="#000099"/>
<rect x="1449" y="643" width="10" height="10" fill="#020099"/>
<rect x="1459" y="643" width="10" height="10" fill="#070099"/>
<rect x="1469" y="643" width="10" height="10" fill="#0b0099"/>
<rect x="1479" y="643" width="10" height="10" fill="#0f0099"/>
<rect x="1489" y="643" width="10" height="10" fill="#140099"/>
<rect x="1499" y="643" width="10" height="10" fill="#180099"/>
<rect x="1509" y="643" width="10" height="10" fill="#1d0099"/>
<rect x="1519" y="643" width="10" height="10" fill="#210099"/>
<rect x="1529" y="643" width="10" height="10" fill="#260099"/>
<rect x="1539" y="643" width="10" height="10" fill="#2a0099"/>
<rect x="1549" y="643" width="10" height="10" fill="#2f0099"/>
<rect x="1559" y="643" width="10" height="10" fill="#340099"/>
<rect x="1569" y="643" width="10" height="10" fill="#380099"/>
<rect x="1579" y="643" width="10" height="10" fill="#3d0099"/>
<rect x="1589" y="643" width="10" height="10" fill="#420099"/>
<rect x="1599" y="643" width="10" height="10" fill="#460099"/>
<rect x="1609" y="643" width="10" height="10" fill="#4b0099"/>
<rect x="1429" y="653" width="10" height="10" fill="#000099"/>
<rect x="1439" y="653" width="10" height="10" fill="#000099"/>
<rect x="1449" y="653" width="10" height="10" fill="#020099"/>
<rect x="1459" y="653" width="10" height="10" fill="#060099"/>
<rect x="1469" y="653" width="10" height="10" fill="#0a0099"/>
<rect x="1479" y="653" width="10" height="10" fill="#0f0099"/>
<rect x="1489" y="653" width="10" height="10" fill="#130099"/>
<rect x="1499" y="653" width="10" height="10" fill="#170099"/>
<rect x="1509" y="653" width="10" height="10" fill="#1c0099"/>
<rect x="1519" y="653" width="10" height="10" fill="#200099"/>
<rect x="1529" y="653" width="10" height="10" fill="#250099"/>
<rect x="1539" y="653" width="10" height="10" fill="#290099"/>
<rect x="1549" y="653" width="10" height="10" fill="#2d0099"/>
<rect x="1559" y="653" width="10" height="10" fill="#320099"/>
<rect x="1569" y="653" width="10" height="10" fill="#360099"/>
<rect x="1579" y="653" width="10" height="10" fill="#3b0099"/>
<rect x="1589" y="653" width="10" height="10" fill="#400099"/>
<rect x="1599" y="653" width="10" height="10" fill="#440099"/>
<rect x="1439" y="663" width="10" height="10" fill="#000099"/>
<rect x="1449" y="663" width="10" height="10" fill="#010099"/>
<rect x="1459" y="663" width="10" height="10" fill="#050099"/>
<rect x="1469" y="663" width="10" height="10" fill="#090099"/>
<rect x="1479" y="663" width="10" height="10" fill="#0e0099"/>
<rect x="1489" y="663" width="10" height="10" fill="#120099"/>
<rect x="1499" y="663" width="10" height="10" fill="#160099"/>
<rect x="1509" y="663" width="10" height="10" fill="#1b0099"/>
<rect x="1519" y="663" width="10" height="10" fill="#1f0099"/>
<rect x="1529" y="663" width="10" height="10" fill="#230099"/>
<rect x="1539" y="663" width="10" height="10" fill="#280099"/>
<rect x="1549" y="663" width="10" height="10" fill="#2c0099"/>
<rect x="1559" y="663" width="10" height="10" fill="#300099"/>
<rect x="1569" y="663" width="10" height="10" fill="#350099"/>
<rect x="1579" y="663" width="10" height="10" fill="#390099"/>
<rect x="1589" y="663" width="10" height="10" fill="#3e0099"/>
<rect x="1599" y="663" width="10" height="10" fill="#420099"/>
<rect x="1449" y="673" width="10" height="10" fill="#010099"/>
<rect x="1459" y="673" width="10" height="10" fill="#050099"/>
<rect x="1469" y="673" width="10" height="10" fill="#090099"/>
<rect x="1479" y="673" width="10" height="10" fill="#0d0099"/>
<rect x="1489" y="673" width="10" height="10" fill="#110099"/>
<rect x="1499" y="673" width="10" height="10" fill="#150099"/>
<rect x="1509" y="673" width="10" height="10" fill="#190099"/>
<rect x="1519" y="673" width="10" height="10" fill="#1e0099"/>
<rect x="1529" y="673" width="10" height="10" fill="#220099"/>
<rect x="1539" y="673" width="10" height="10" fill="#260099"/>
<rect x="1549" y="673" width="10" height="10" fill="#2a0099"/>
<rect x="1559" y="673" width="10" height="10" fill="#2f0099"/>
<rect x="1569" y="673" width="10" height="10" fill="#330099"/>
<rect x="1579" y="673" width="10" height="10" fill="#370099"/>
<rect x="1589" y="673" width="10" height="10" fill="#3c0099"/>
<rect x="1459" y="683" width="10" height="10" fill="#040099"/>
<rect x="1469" y="683" width="10" height="10" fill="#080099"/>
<rect x="1479" y="683" width="10" height="10" fill="#0c0099"/>
<rect x="1489" y="683" width="10" height="10" fill="#100099"/>
<rect x="1499" y="683" width="10" height="10" fill="#140099"/>
<rect x="1509" y="683" width="10" height="10" fill="#180099"/>
<rect x="1519" y="683" width="10" height="10" fill="#1c0099"/>
<rect x="1529" y="683" width="10" height="10" fill="#210099"/>
<rect x="1539" y="683" width="10" height="10" fill="#250099"/>
<rect x="1549" y="683" width="10" height="10" fill="#290099"/>
<rect x="1559" y="683" width="10" height="10" fill="#2d0099"/>
<rect x="1569" y="683" width="10" height="10" fill="#310099"/>
<rect x="1579" y="683" width="10" height="10" fill="#360099"/>
<rect x="1469" y="693" width="10" height="10" fill="#070099"/>
<rect x="1479" y="693" width="10" height="10" fill="#0b0099"/>
<rect x="1489" y="693" width="10" height="10" fill="#0f0099"/>
<rect x="1499" y="693" width="10" height="10" fill="#130099"/>
<rect x="1509" y="693" width="10" height="10" fill="#170099"/>
<rect x="1519" y="693" width="10" height="10" fill="#1b0099"/>
<rect x="1529" y="693" width="10" height="10" fill="#1f0099"/>
<rect x="1539" y="693" width="10" height="10" fill="#240099"/>
<rect x="1549" y="693" width="10" height="10" fill="#280099"/>
<rect x="1559" y="693" width="10" height="10" fill="#2c0099"/>
<rect x="1569" y="693" width="10" height="10" fill="#300099"/>
<rect x="1479" y="703" width="10" height="10" fill="#0b0099"/>
<rect x="1489" y="703" width="10" height="10" fill="#0e0099"/>
<rect x="1499" y="703" width="10" height="10" fill="#120099"/>
<rect x="1509" y="703" width="10" height="10" fill="#160099"/>
<rect x="1519" y="703" width="10" height="10" fill="#1a0099"/>
<rect x="1529" y="703" width="10" height="10" fill="#1e0099"/>
<rect x="1539" y="703" width="10" height="10" fill="#220099"/>
<rect x="1549" y="703" width="10" height="10" fill="#260099"/>
<rect x="1559" y="703" width="10" height="10" fill="#2a0099"/>
<rect x="1489" y="713" width="10" height="10" fill="#0e0099"/>
<rect x="1499" y="713" width="10" height="10" fill="#120099"/>
<rect x="1509" y="713" width="10" height="10" fill="#150099"/>
<rect x="1519" y="713" width="10" height="10" fill="#190099"/>
<rect x="1529" y="713" width="10" height="10" fill="#1d0099"/>
<rect x="1539" y="713" width="10" height="10" fill="#210099"/>
<rect x="1549" y="713" width="10" height="10" fill="#250099"/>
<rect x="1499" y="723" width="10" height="10" fill="#110099"/>
<rect x="1509" y="723" width="10" height="10" fill="#150099"/>
<rect x="1519" y="723" width="10" height="10" fill="#180099"/>
<rect x="1529" y="723" width="10" height="10" fill="#1c0099"/>
<rect x="1539" y="723" width="10" height="10" fill="#200099"/>
<rect x="1549" y="723" width="10" height="10" fill="#240099"/>
<rect x="1509" y="733" width="10" height="10" fill="#140099"/>
<rect x="1519" y="733" width="10" height="10" fill="#170099"/>
<rect x="1529" y="733" width="10" height="10" fill="#1b0099"/>
<rect x="1539" y="733" width="10" height="10" fill="#1f0099"/>
<rect x="1519" y="743" width="10" height="10" fill="#160099"/>
<rect x="1529" y="743" width="10" height="10" fill="#1a0099"/>
</g></g>
<g clip-path="url(#tri)"><g class="ci" filter="url(#bli)">
<rect x="1368" y="164" width="7" height="7" fill="#00ff00"/>
<rect x="1375" y="164" width="7" height="7" fill="#00ff00"/>
<rect x="1382" y="164" width="7" height="7" fill="#02ff00"/>
<rect x="1389" y="164" width="7" height="7" fill="#12ff00"/>
<rect x="1396" y="164" width="7" height="7" fill="#22ff00"/>
<rect x="1403" y="164" width="7" height="7" fill="#33ff00"/>
<rect x="1368" y="171" width="7" height="7" fill="#00ff00"/>
<rect x="1375" y="171" width="7" height="7" fill="#00ff00"/>
<rect x="1382" y="171" width="7" height="7" fill="#00ff00"/>
<rect x="1389" y="171" width="7" height="7" fill="#10ff00"/>
<rect x="1396" y="171" width="7" height="7" fill="#20ff00"/>
<rect x="1403" y="171" width="7" height="7" fill="#31ff00"/>
<rect x="1410" y="171" width="7" height="7" fill="#43ff00"/>
<rect x="1417" y="171" width="7" height="7" fill="#55ff00"/>
<rect x="1424" y="171" width="7" height="7" fill="#69ff00"/>
<rect x="1431" y="171" width="7" height="7" fill="#7cff00"/>
<rect x="1438" y="171" width="7" height="7" fill="#91ff00"/>
<rect x="1445" y="171" width="7" height="7" fill="#a6ff00"/>
<rect x="1452" y="171" width="7" height="7" fill="#bdff00"/>
<rect x="1459" y="171" width="7" height="7" fill="#d4ff00"/>
<rect x="1466" y="171" width="7" height="7" fill="#edff00"/>
<rect x="1368" y="178" width="7" height="7" fill="#00ff00"/>
<rect x="1375" y="178" width="7" height="7" fill="#00ff00"/>
<rect x="1382" y="178" width="7" height="7" fill="#00ff00"/>
<rect x="1389" y="178" width="7" height="7" fill="#0eff00"/>
<rect x="1396" y="178" width="7" height="7" fill="#1fff00"/>
<rect x="1403" y="178" width="7" height="7" fill="#30ff00"/>
<rect x="1410" y="178" width="7" height="7" fill="#42ff00"/>
<rect x="1417" y="178" width="7" height="7" fill="#55ff00"/>
<rect x="1424" y="178" width="7" height="7" fill="#68ff00"/>
<rect x="1431" y="178" width="7" height="7" fill="#7cff00"/>
<rect x="1438" y="178" width="7" height="7" fill="#91ff00"/>
<rect x="1445" y="178" width="7" height="7" fill="#a7ff00"/>
<rect x="1452" y="178" width="7" height="7" fill="#beff00"/>
<rect x="1459" y="178" width="7" height="7" fill="#d5ff00"/>
<rect x="1466" y="178" width="7" height="7" fill="#eeff00"/>
<rect x="1473" y="178" width="7" height="7" fill="#fff600"/>
<rect x="1480" y="178" width="7" height="7" fill="#ffdf00"/>
<rect x="1487" y="178" width="7" height="7" fill="#ffcb00"/>
<rect x="1494" y="178" width="7" height="7" fill="#ffba00"/>
<rect x="1501" y="178" width="7" height="7" fill="#ffaa00"/>
<rect x="1508" y="178" width="7" height="7" fill="#ff9d00"/>
<rect x="1515" y="178" width="7" height="7" fill="#ff9000"/>
<rect x="1522" y="178" width="7" height="7" fill="#ff8500"/>
<rect x="1529" y="178" width="7" height="7" fill="#ff7b00"/>
<rect x="1368" y="185" width="7" height="7" fill="#00ff0c"/>
<rect x="1375" y="185" width="7" height="7" fill="#00ff0b"/>
<rect x="1382" y="185" width="7" height="7" fill="#00ff0a"/>
<rect x="1389" y="185" width="7" height="7" fill="#0cff08"/>
<rect x="1396" y="185" width="7" height="7" fill="#1dff07"/>
<rect x="1403" y="185" width="7" height="7" fill="#2fff06"/>
<rect x="1410" y="185" width="7" height="7" fill="#41ff04"/>
<rect x="1417" y="185" width="7" height="7" fill="#54ff03"/>
<rect x="1424" y="185" width="7" height="7" fill="#67ff01"/>
<rect x="1431" y="185" width="7" height="7" fill="#7cff00"/>
<rect x="1438" y="185" width="7" height="7" fill="#91ff00"/>
<rect x="1445" y="185" width="7" height="7" fill="#a7ff00"/>
<rect x="1452" y="185" width="7" height="7" fill="#beff00"/>
<rect x="1459" y="185" width="7" height="7" fill="#d7ff00"/>
<rect x="1466" y="185" width="7" height="7" fill="#f0ff00"/>
<rect x="1473" y="185" width="7" height="7" fill="#fff400"/>
<rect x="1480" y="185" width="7" height="7" fill="#ffdd00"/>
<rect x="1487" y="185" width="7" height="7" fill="#ffc900"/>
<rect x="1494" y="185" width="7" height="7" fill="#ffb700"/>
<rect x="1501" y="185" width="7" height="7" fill="#ffa800"/>
<rect x="1508" y="185" width="7" height="7" fill="#ff9a00"/>
<rect x="1515" y="185" width="7" height="7" fill="#ff8e00"/>
<rect x="1522" y="185" width="7" height="7" fill="#ff8300"/>
<rect x="1529" y="185" width="7" height="7" fill="#ff7900"/>
<rect x="1536" y="185" width="7" height="7" fill="#ff7000"/>
<rect x="1543" y="185" width="7" height="7" fill="#ff6800"/>
<rect x="1550" y="185" width="7" height="7" fill="#ff6100"/>
<rect x="1557" y="185" width="7" height="7" fill="#ff5a00"/>
<rect x="1564" y="185" width="7" height="7" fill="#ff5400"/>
<rect x="1571" y="185" width="7" height="7" fill="#ff4e00"/>
<rect x="1578" y="185" width="7" height="7" fill="#ff4800"/>
<rect x="1585" y="185" width="7" height="7" fill="#ff4300"/>
<rect x="1368" y="192" width="7" height="7" fill="#00ff18"/>
<rect x="1375" y="192" width="7" height="7" fill="#00ff17"/>
<rect x="1382" y="192" width="7" height="7" fill="#00ff16"/>
<rect x="1389" y="192" width="7" height="7" fill="#0aff15"/>
<rect x="1396" y="192" width="7" height="7" fill="#1bff14"/>
<rect x="1403" y="192" width="7" height="7" fill="#2dff13"/>
<rect x="1410" y="192" width="7" height="7" fill="#3fff12"/>
<rect x="1417" y="192" width="7" height="7" fill="#53ff11"/>
<rect x="1424" y="192" width="7" height="7" fill="#66ff0f"/>
<rect x="1431" y="192" width="7" height="7" fill="#7bff0e"/>
<rect x="1438" y="192" width="7" height="7" fill="#91ff0d"/>
<rect x="1445" y="192" width="7" height="7" fill="#a8ff0b"/>
<rect x="1452" y="192" width="7" height="7" fill="#bfff0a"/>
<rect x="1459" y="192" width="7" height="7" fill="#d8ff08"/>
<rect x="1466" y="192" width="7" height="7" fill="#f2ff07"/>
<rect x="1473" y="192" width="7" height="7" fill="#fff205"/>
<rect x="1480" y="192" width="7" height="7" fill="#ffda03"/>
<rect x="1487" y="192" width="7" height="7" fill="#ffc701"/>
<rect x="1494" y="192" width="7" height="7" fill="#ffb500"/>
<rect x="1501" y="192" width="7" height="7" fill="#ffa600"/>
<rect x="1508" y="192" width="7" height="7" fill="#ff9800"/>
<rect x="1515" y="192" width="7" height="7" fill="#ff8c00"/>
<rect x="1522" y="192" width="7" height="7" fill="#ff8100"/>
<rect x="1529" y="192" width="7" height="7" fill="#ff7700"/>
<rect x="1536" y="192" width="7" height="7" fill="#ff6e00"/>
<rect x="1543" y="192" width="7" height="7" fill="#ff6600"/>
<rect x="1550" y="192" width="7" height="7" fill="#ff5f00"/>
<rect x="1557" y="192" width="7" height="7" fill="#ff5800"/>
<rect x="1564" y="192" width="7" height="7" fill="#ff5200"/>
<rect x="1571" y="192" width="7" height="7" fill="#ff4c00"/>
<rect x="1578" y="192" width="7" height="7" fill="#ff4600"/>
<rect x="1585" y="192" width="7" height="7" fill="#ff4100"/>
<rect x="1592" y="192" width="7" height="7" fill="#ff3d00"/>
<rect x="1599" y="192" width="7" height="7" fill="#ff3800"/>
<rect x="1606" y="192" width="7" height="7" fill="#ff3400"/>
<rect x="1613" y="192" width="7" height="7" fill="#ff3000"/>
<rect x="1620" y="192" width="7" height="7" fill="#ff2d00"/>
<rect x="1627" y="192" width="7" height="7" fill="#ff2900"/>
<rect x="1634" y="192" width="7" height="7" fill="#ff2600"/>
<rect x="1641" y="192" width="7" height="7" fill="#ff2300"/>
<rect x="1648" y="192" width="7" height="7" fill="#ff2000"/>
<rect x="1368" y="199" width="7" height="7" fill="#00ff25"/>
<rect x="1375" y="199" width="7" height="7" fill="#00ff24"/>
<rect x="1382" y="199" width="7" height="7" fill="#00ff23"/>
<rect x="1389" y="199" width="7" height="7" fill="#08ff22"/>
<rect x="1396" y="199" width="7" height="7" fill="#19ff21"/>
<rect x="1403" y="199" width="7" height="7" fill="#2bff21"/>
<rect x="1410" y="199" width="7" height="7" fill="#3eff20"/>
<rect x="1417" y="199" width="7" height="7" fill="#51ff1f"/>
<rect x="1424" y="199" width="7" height="7" fill="#66ff1e"/>
<rect x="1431" y="199" width="7" height="7" fill="#7bff1d"/>
<rect x="1438" y="199" width="7" height="7" fill="#91ff1c"/>
<rect x="1445" y="199" width="7" height="7" fill="#a8ff1b"/>
<rect x="1452" y="199" width="7" height="7" fill="#c0ff1a"/>
<rect x="1459" y="199" width="7" height="7" fill="#d9ff18"/>
<rect x="1466" y="199" width="7" height="7" fill="#f4ff17"/>
<rect x="1473" y="199" width="7" height="7" fill="#ffef14"/>
<rect x="1480" y="199" width="7" height="7" fill="#ffd811"/>
<rect x="1487" y="199" width="7" height="7" fill="#ffc40f"/>
<rect x="1494" y="199" width="7" height="7" fill="#ffb30c"/>
<rect x="1501" y="199" width="7" height="7" fill="#ffa30a"/>
<rect x="1508" y="199" width="7" height="7" fill="#ff9608"/>
<rect x="1515" y="199" width="7" height="7" fill="#ff8a07"/>
<rect x="1522" y="199" width="7" height="7" fill="#ff7f05"/>
<rect x="1529" y="199" width="7" height="7" fill="#ff7504"/>
<rect x="1536" y="199" width="7" height="7" fill="#ff6c03"/>
<rect x="1543" y="199" width="7" height="7" fill="#ff6401"/>
<rect x="1550" y="199" width="7" height="7" fill="#ff5d00"/>
<rect x="1557" y="199" width="7" height="7" fill="#ff5600"/>
<rect x="1564" y="199" width="7" height="7" fill="#ff5000"/>
<rect x="1571" y="199" width="7" height="7" fill="#ff4a00"/>
<rect x="1578" y="199" width="7" height="7" fill="#ff4500"/>
<rect x="1585" y="199" width="7" height="7" fill="#ff4000"/>
<rect x="1592" y="199" width="7" height="7" fill="#ff3b00"/>
<rect x="1599" y="199" width="7" height="7" fill="#ff3700"/>
<rect x="1606" y="199" width="7" height="7" fill="#ff3300"/>
<rect x="1613" y="199" width="7" height="7" fill="#ff2f00"/>
<rect x="1620" y="199" width="7" height="7" fill="#ff2b00"/>
<rect x="1627" y="199" width="7" height="7" fill="#ff2800"/>
<rect x="1634" y="199" width="7" height="7" fill="#ff2500"/>
<rect x="1641" y="199" width="7" height="7" fill="#ff2200"/>
<rect x="1648" y="199" width="7" height="7" fill="#ff1f00"/>
<rect x="1655" y="199" width="7" height="7" fill="#ff1c00"/>
<rect x="1662" y="199" width="7" height="7" fill="#ff1900"/>
<rect x="1669" y="199" width="7" height="7" fill="#ff1700"/>
<rect x="1676" y="199" width="7" height="7" fill="#ff1500"/>
<rect x="1683" y="199" width="7" height="7" fill="#ff1200"/>
<rect x="1690" y="199" width="7" height="7" fill="#ff1000"/>
<rect x="1697" y="199" width="7" height="7" fill="#ff0e00"/>
<rect x="1704" y="199" width="7" height="7" fill="#ff0c00"/>
<rect x="1711" y="199" width="7" height="7" fill="#ff0a00"/>
<rect x="1375" y="206" width="7" height="7" fill="#00ff31"/>
<rect x="1382" y="206" width="7" height="7" fill="#00ff31"/>
<rect x="1389" y="206" width="7" height="7" fill="#06ff30"/>
<rect x="1396" y="206" width="7" height="7" fill="#17ff2f"/>
<rect x="1403" y="206" width="7" height="7" fill="#2aff2f"/>
<rect x="1410" y="206" width="7" height="7" fill="#3dff2e"/>
<rect x="1417" y="206" width="7" height="7" fill="#50ff2e"/>
<rect x="1424" y="206" width="7" height="7" fill="#65ff2d"/>
<rect x="1431" y="206" width="7" height="7" fill="#7aff2c"/>
<rect x="1438" y="206" width="7" height="7" fill="#91ff2b"/>
<rect x="1445" y="206" width="7" height="7" fill="#a8ff2b"/>
<rect x="1452" y="206" width="7" height="7" fill="#c1ff2a"/>
<rect x="1459" y="206" width="7" height="7" fill="#dbff29"/>
<rect x="1466" y="206" width="7" height="7" fill="#f6ff28"/>
<rect x="1473" y="206" width="7" height="7" fill="#ffed24"/>
<rect x="1480" y="206" width="7" height="7" fill="#ffd620"/>
<rect x="1487" y="206" width="7" height="7" fill="#ffc21c"/>
<rect x="1494" y="206" width="7" height="7" fill="#ffb019"/>
<rect x="1501" y="206" width="7" height="7" fill="#ffa116"/>
<rect x="1508" y="206" width="7" height="7" fill="#ff9414"/>
<rect x="1515" y="206" width="7" height="7" fill="#ff8811"/>
<rect x="1522" y="206" width="7" height="7" fill="#ff7d0f"/>
<rect x="1529" y="206" width="7" height="7" fill="#ff730d"/>
<rect x="1536" y="206" width="7" height="7" fill="#ff6a0c"/>
<rect x="1543" y="206" width="7" height="7" fill="#ff620a"/>
<rect x="1550" y="206" width="7" height="7" fill="#ff5b09"/>
<rect x="1557" y="206" width="7" height="7" fill="#ff5408"/>
<rect x="1564" y="206" width="7" height="7" fill="#ff4e06"/>
<rect x="1571" y="206" width="7" height="7" fill="#ff4805"/>
<rect x="1578" y="206" width="7" height="7" fill="#ff4304"/>
<rect x="1585" y="206" width="7" height="7" fill="#ff3e03"/>
<rect x="1592" y="206" width="7" height="7" fill="#ff3902"/>
<rect x="1599" y="206" width="7" height="7" fill="#ff3502"/>
<rect x="1606" y="206" width="7" height="7" fill="#ff3101"/>
<rect x="1613" y="206" width="7" height="7" fill="#ff2d00"/>
<rect x="1620" y="206" width="7" height="7" fill="#ff2a00"/>
<rect x="1627" y="206" width="7" height="7" fill="#ff2600"/>
<rect x="1634" y="206" width="7" height="7" fill="#ff2300"/>
<rect x="1641" y="206" width="7" height="7" fill="#ff2000"/>
<rect x="1648" y="206" width="7" height="7" fill="#ff1d00"/>
<rect x="1655" y="206" width="7" height="7" fill="#ff1b00"/>
<rect x="1662" y="206" width="7" height="7" fill="#ff1800"/>
<rect x="1669" y="206" width="7" height="7" fill="#ff1600"/>
<rect x="1676" y="206" width="7" height="7" fill="#ff1300"/>
<rect x="1683" y="206" width="7" height="7" fill="#ff1100"/>
<rect x="1690" y="206" width="7" height="7" fill="#ff0f00"/>
<rect x="1697" y="206" width="7" height="7" fill="#ff0d00"/>
<rect x="1704" y="206" width="7" height="7" fill="#ff0b00"/>
<rect x="1711" y="206" width="7" height="7" fill="#ff0900"/>
<rect x="1718" y="206" width="7" height="7" fill="#ff0700"/>
<rect x="1725" y="206" width="7" height="7" fill="#ff0600"/>
<rect x="1732" y="206" width="7" height="7" fill="#ff0400"/>
<rect x="1739" y="206" width="7" height="7" fill="#ff0300"/>
<rect x="1746" y="206" width="7" height="7" fill="#ff0100"/>
<rect x="1753" y="206" width="7" height="7" fill="#ff0000"/>
<rect x="1760" y="206" width="7" height="7" fill="#ff0000"/>
<rect x="1767" y="206" width="7" height="7" fill="#ff0000"/>
<rect x="1774" y="206" width="7" height="7" fill="#ff0000"/>
<rect x="1375" y="213" width="7" height="7" fill="#00ff3f"/>
<rect x="1382" y="213" width="7" height="7" fill="#00ff3e"/>
<rect x="1389" y="213" width="7" height="7" fill="#04ff3e"/>
<rect x="1396" y="213" width="7" height="7" fill="#15ff3e"/>
<rect x="1403" y="213" width="7" height="7" fill="#28ff3d"/>
<rect x="1410" y="213" width="7" height="7" fill="#3bff3d"/>
<rect x="1417" y="213" width="7" height="7" fill="#4fff3d"/>
<rect x="1424" y="213" width="7" height="7" fill="#64ff3c"/>
<rect x="1431" y="213" width="7" height="7" fill="#7aff3c"/>
<rect x="1438" y="213" width="7" height="7" fill="#91ff3c"/>
<rect x="1445" y="213" width="7" height="7" fill="#a9ff3b"/>
<rect x="1452" y="213" width="7" height="7" fill="#c2ff3b"/>
<rect x="1459" y="213" width="7" height="7" fill="#dcff3a"/>
<rect x="1466" y="213" width="7" height="7" fill="#f8ff3a"/>
<rect x="1473" y="213" width="7" height="7" fill="#ffeb35"/>
<rect x="1480" y="213" width="7" height="7" fill="#ffd42f"/>
<rect x="1487" y="213" width="7" height="7" fill="#ffc02a"/>
<rect x="1494" y="213" width="7" height="7" fill="#ffae26"/>
<rect x="1501" y="213" width="7" height="7" fill="#ff9f22"/>
<rect x="1508" y="213" width="7" height="7" fill="#ff911f"/>
<rect x="1515" y="213" width="7" height="7" fill="#ff851c"/>
<rect x="1522" y="213" width="7" height="7" fill="#ff7b1a"/>
<rect x="1529" y="213" width="7" height="7" fill="#ff7117"/>
<rect x="1536" y="213" width="7" height="7" fill="#ff6815"/>
<rect x="1543" y="213" width="7" height="7" fill="#ff6013"/>
<rect x="1550" y="213" width="7" height="7" fill="#ff5911"/>
<rect x="1557" y="213" width="7" height="7" fill="#ff5210"/>
<rect x="1564" y="213" width="7" height="7" fill="#ff4c0e"/>
<rect x="1571" y="213" width="7" height="7" fill="#ff460d"/>
<rect x="1578" y="213" width="7" height="7" fill="#ff410c"/>
<rect x="1585" y="213" width="7" height="7" fill="#ff3c0a"/>
<rect x="1592" y="213" width="7" height="7" fill="#ff3709"/>
<rect x="1599" y="213" width="7" height="7" fill="#ff3308"/>
<rect x="1606" y="213" width="7" height="7" fill="#ff2f07"/>
<rect x="1613" y="213" width="7" height="7" fill="#ff2b06"/>
<rect x="1620" y="213" width="7" height="7" fill="#ff2805"/>
<rect x="1627" y="213" width="7" height="7" fill="#ff2505"/>
<rect x="1634" y="213" width="7" height="7" fill="#ff2104"/>
<rect x="1641" y="213" width="7" height="7" fill="#ff1e03"/>
<rect x="1648" y="213" width="7" height="7" fill="#ff1c02"/>
<rect x="1655" y="213" width="7" height="7" fill="#ff1902"/>
<rect x="1662" y="213" width="7" height="7" fill="#ff1701"/>
<rect x="1669" y="213" width="7" height="7" fill="#ff1401"/>
<rect x="1676" y="213" width="7" height="7" fill="#ff1200"/>
<rect x="1683" y="213" width="7" height="7" fill="#ff1000"/>
<rect x="1690" y="213" width="7" height="7" fill="#ff0e00"/>
<rect x="1697" y="213" width="7" height="7" fill="#ff0c00"/>
<rect x="1704" y="213" width="7" height="7" fill="#ff0a00"/>
<rect x="1711" y="213" width="7" height="7" fill="#ff0800"/>
<rect x="1718" y="213" width="7" height="7" fill="#ff0600"/>
<rect x="1725" y="213" width="7" height="7" fill="#ff0500"/>
<rect x="1732" y="213" width="7" height="7" fill="#ff0300"/>
<rect x="1739" y="213" width="7" height="7" fill="#ff0100"/>
<rect x="1746" y="213" width="7" height="7" fill="#ff0000"/>
<rect x="1753" y="213" width="7" height="7" fill="#ff0000"/>
<rect x="1760" y="213" width="7" height="7" fill="#ff0000"/>
<rect x="1767" y="213" width="7" height="7" fill="#ff0000"/>
<rect x="1375" y="220" width="7" height="7" fill="#00ff4d"/>
<rect x="1382" y="220" width="7" height="7" fill="#00ff4d"/>
<rect x="1389" y="220" width="7" height="7" fill="#01ff4d"/>
<rect x="1396" y="220" width="7" height="7" fill="#13ff4d"/>
<rect x="1403" y="220" width="7" height="7" fill="#26ff4d"/>
<rect x="1410" y="220" width="7" height="7" fill="#3aff4d"/>
<rect x="1417" y="220" width="7" height="7" fill="#4eff4d"/>
<rect x="1424" y="220" width="7" height="7" fill="#63ff4c"/>
<rect x="1431" y="220" width="7" height="7" fill="#7aff4c"/>
<rect x="1438" y="220" width="7" height="7" fill="#91ff4c"/>
<rect x="1445" y="220" width="7" height="7" fill="#a9ff4c"/>
<rect x="1452" y="220" width="7" height="7" fill="#c3ff4c"/>
<rect x="1459" y="220" width="7" height="7" fill="#deff4c"/>
<rect x="1466" y="220" width="7" height="7" fill="#faff4c"/>
<rect x="1473" y="220" width="7" height="7" fill="#ffe946"/>
<rect x="1480" y="220" width="7" height="7" fill="#ffd13f"/>
<rect x="1487" y="220" width="7" height="7" fill="#ffbd39"/>
<rect x="1494" y="220" width="7" height="7" fill="#ffac33"/>
<rect x="1501" y="220" width="7" height="7" fill="#ff9c2f"/>
<rect x="1508" y="220" width="7" height="7" fill="#ff8f2b"/>
<rect x="1515" y="220" width="7" height="7" fill="#ff8327"/>
<rect x="1522" y="220" width="7" height="7" fill="#ff7824"/>
<rect x="1529" y="220" width="7" height="7" fill="#ff6f21"/>
<rect x="1536" y="220" width="7" height="7" fill="#ff661e"/>
<rect x="1543" y="220" width="7" height="7" fill="#ff5e1c"/>
<rect x="1550" y="220" width="7" height="7" fill="#ff571a"/>
<rect x="1557" y="220" width="7" height="7" fill="#ff5018"/>
<rect x="1564" y="220" width="7" height="7" fill="#ff4a16"/>
<rect x="1571" y="220" width="7" height="7" fill="#ff4414"/>
<rect x="1578" y="220" width="7" height="7" fill="#ff3f13"/>
<rect x="1585" y="220" width="7" height="7" fill="#ff3a11"/>
<rect x="1592" y="220" width="7" height="7" fill="#ff3610"/>
<rect x="1599" y="220" width="7" height="7" fill="#ff310f"/>
<rect x="1606" y="220" width="7" height="7" fill="#ff2d0e"/>
<rect x="1613" y="220" width="7" height="7" fill="#ff2a0c"/>
<rect x="1620" y="220" width="7" height="7" fill="#ff260b"/>
<rect x="1627" y="220" width="7" height="7" fill="#ff230a"/>
<rect x="1634" y="220" width="7" height="7" fill="#ff2009"/>
<rect x="1641" y="220" width="7" height="7" fill="#ff1d09"/>
<rect x="1648" y="220" width="7" height="7" fill="#ff1a08"/>
<rect x="1655" y="220" width="7" height="7" fill="#ff1807"/>
<rect x="1662" y="220" width="7" height="7" fill="#ff1506"/>
<rect x="1669" y="220" width="7" height="7" fill="#ff1305"/>
<rect x="1676" y="220" width="7" height="7" fill="#ff1005"/>
<rect x="1683" y="220" width="7" height="7" fill="#ff0e04"/>
<rect x="1690" y="220" width="7" height="7" fill="#ff0c04"/>
<rect x="1697" y="220" width="7" height="7" fill="#ff0a03"/>
<rect x="1704" y="220" width="7" height="7" fill="#ff0802"/>
<rect x="1711" y="220" width="7" height="7" fill="#ff0702"/>
<rect x="1718" y="220" width="7" height="7" fill="#ff0501"/>
<rect x="1725" y="220" width="7" height="7" fill="#ff0301"/>
<rect x="1732" y="220" width="7" height="7" fill="#ff0200"/>
<rect x="1739" y="220" width="7" height="7" fill="#ff0000"/>
<rect x="1746" y="220" width="7" height="7" fill="#ff0000"/>
<rect x="1753" y="220" width="7" height="7" fill="#ff0000"/>
<rect x="1760" y="220" width="7" height="7" fill="#ff0000"/>
<rect x="1375" y="227" width="7" height="7" fill="#00ff5b"/>
<rect x="1382" y="227" width="7" height="7" fill="#00ff5b"/>
<rect x="1389" y="227" width="7" height="7" fill="#00ff5c"/>
<rect x="1396" y="227" width="7" height="7" fill="#11ff5c"/>
<rect x="1403" y="227" width="7" height="7" fill="#24ff5c"/>
<rect x="1410" y="227" width="7" height="7" fill="#38ff5c"/>
<rect x="1417" y="227" width="7" height="7" fill="#4dff5d"/>
<rect x="1424" y="227" width="7" height="7" fill="#62ff5d"/>
<rect x="1431" y="227" width="7" height="7" fill="#79ff5e"/>
<rect x="1438" y="227" width="7" height="7" fill="#91ff5e"/>
<rect x="1445" y="227" width="7" height="7" fill="#aaff5e"/>
<rect x="1452" y="227" width="7" height="7" fill="#c4ff5f"/>
<rect x="1459" y="227" width="7" height="7" fill="#dfff5f"/>
<rect x="1466" y="227" width="7" height="7" fill="#fcff60"/>
<rect x="1473" y="227" width="7" height="7" fill="#ffe657"/>
<rect x="1480" y="227" width="7" height="7" fill="#ffcf4e"/>
<rect x="1487" y="227" width="7" height="7" fill="#ffbb47"/>
<rect x="1494" y="227" width="7" height="7" fill="#ffa941"/>
<rect x="1501" y="227" width="7" height="7" fill="#ff9a3c"/>
<rect x="1508" y="227" width="7" height="7" fill="#ff8d37"/>
<rect x="1515" y="227" width="7" height="7" fill="#ff8132"/>
<rect x="1522" y="227" width="7" height="7" fill="#ff762f"/>
<rect x="1529" y="227" width="7" height="7" fill="#ff6c2b"/>
<rect x="1536" y="227" width="7" height="7" fill="#ff6428"/>
<rect x="1543" y="227" width="7" height="7" fill="#ff5c25"/>
<rect x="1550" y="227" width="7" height="7" fill="#ff5523"/>
<rect x="1557" y="227" width="7" height="7" fill="#ff4e20"/>
<rect x="1564" y="227" width="7" height="7" fill="#ff481e"/>
<rect x="1571" y="227" width="7" height="7" fill="#ff421c"/>
<rect x="1578" y="227" width="7" height="7" fill="#ff3d1a"/>
<rect x="1585" y="227" width="7" height="7" fill="#ff3818"/>
<rect x="1592" y="227" width="7" height="7" fill="#ff3417"/>
<rect x="1599" y="227" width="7" height="7" fill="#ff3015"/>
<rect x="1606" y="227" width="7" height="7" fill="#ff2c14"/>
<rect x="1613" y="227" width="7" height="7" fill="#ff2813"/>
<rect x="1620" y="227" width="7" height="7" fill="#ff2511"/>
<rect x="1627" y="227" width="7" height="7" fill="#ff2110"/>
<rect x="1634" y="227" width="7" height="7" fill="#ff1e0f"/>
<rect x="1641" y="227" width="7" height="7" fill="#ff1b0e"/>
<rect x="1648" y="227" width="7" height="7" fill="#ff190d"/>
<rect x="1655" y="227" width="7" height="7" fill="#ff160c"/>
<rect x="1662" y="227" width="7" height="7" fill="#ff140b"/>
<rect x="1669" y="227" width="7" height="7" fill="#ff110a"/>
<rect x="1676" y="227" width="7" height="7" fill="#ff0f0a"/>
<rect x="1683" y="227" width="7" height="7" fill="#ff0d09"/>
<rect x="1690" y="227" width="7" height="7" fill="#ff0b08"/>
<rect x="1697" y="227" width="7" height="7" fill="#ff0907"/>
<rect x="1704" y="227" width="7" height="7" fill="#ff0707"/>
<rect x="1711" y="227" width="7" height="7" fill="#ff0506"/>
<rect x="1718" y="227" width="7" height="7" fill="#ff0406"/>
<rect x="1725" y="227" width="7" height="7" fill="#ff0205"/>
<rect x="1732" y="227" width="7" height="7" fill="#ff0104"/>
<rect x="1739" y="227" width="7" height="7" fill="#ff0004"/>
<rect x="1746" y="227" width="7" height="7" fill="#ff0003"/>
<rect x="1753" y="227" width="7" height="7" fill="#ff0003"/>
<rect x="1375" y="234" width="7" height="7" fill="#00ff6a"/>
<rect x="1382" y="234" width="7" height="7" fill="#00ff6a"/>
<rect x="1389" y="234" width="7" height="7" fill="#00ff6b"/>
<rect x="1396" y="234" width="7" height="7" fill="#0fff6c"/>
<rect x="1403" y="234" width="7" height="7" fill="#22ff6c"/>
<rect x="1410" y="234" width="7" height="7" fill="#37ff6d"/>
<rect x="1417" y="234" width="7" height="7" fill="#4cff6e"/>
<rect x="1424" y="234" width="7" height="7" fill="#62ff6e"/>
<rect x="1431" y="234" width="7" height="7" fill="#79ff6f"/>
<rect x="1438" y="234" width="7" height="7" fill="#91ff70"/>
<rect x="1445" y="234" width="7" height="7" fill="#aaff71"/>
<rect x="1452" y="234" width="7" height="7" fill="#c5ff72"/>
<rect x="1459" y="234" width="7" height="7" fill="#e1ff73"/>
<rect x="1466" y="234" width="7" height="7" fill="#feff74"/>
<rect x="1473" y="234" width="7" height="7" fill="#ffe468"/>
<rect x="1480" y="234" width="7" height="7" fill="#ffcc5f"/>
<rect x="1487" y="234" width="7" height="7" fill="#ffb856"/>
<rect x="1494" y="234" width="7" height="7" fill="#ffa74f"/>
<rect x="1501" y="234" width="7" height="7" fill="#ff9848"/>
<rect x="1508" y="234" width="7" height="7" fill="#ff8a43"/>
<rect x="1515" y="234" width="7" height="7" fill="#ff7e3e"/>
<rect x="1522" y="234" width="7" height="7" fill="#ff7439"/>
<rect x="1529" y="234" width="7" height="7" fill="#ff6a35"/>
<rect x="1536" y="234" width="7" height="7" fill="#ff6232"/>
<rect x="1543" y="234" width="7" height="7" fill="#ff5a2e"/>
<rect x="1550" y="234" width="7" height="7" fill="#ff532b"/>
<rect x="1557" y="234" width="7" height="7" fill="#ff4c29"/>
<rect x="1564" y="234" width="7" height="7" fill="#ff4626"/>
<rect x="1571" y="234" width="7" height="7" fill="#ff4024"/>
<rect x="1578" y="234" width="7" height="7" fill="#ff3b22"/>
<rect x="1585" y="234" width="7" height="7" fill="#ff3620"/>
<rect x="1592" y="234" width="7" height="7" fill="#ff321e"/>
<rect x="1599" y="234" width="7" height="7" fill="#ff2e1c"/>
<rect x="1606" y="234" width="7" height="7" fill="#ff2a1a"/>
<rect x="1613" y="234" width="7" height="7" fill="#ff2619"/>
<rect x="1620" y="234" width="7" height="7" fill="#ff2317"/>
<rect x="1627" y="234" width="7" height="7" fill="#ff2016"/>
<rect x="1634" y="234" width="7" height="7" fill="#ff1d15"/>
<rect x="1641" y="234" width="7" height="7" fill="#ff1a14"/>
<rect x="1648" y="234" width="7" height="7" fill="#ff1712"/>
<rect x="1655" y="234" width="7" height="7" fill="#ff1511"/>
<rect x="1662" y="234" width="7" height="7" fill="#ff1210"/>
<rect x="1669" y="234" width="7" height="7" fill="#ff100f"/>
<rect x="1676" y="234" width="7" height="7" fill="#ff0e0e"/>
<rect x="1683" y="234" width="7" height="7" fill="#ff0c0e"/>
<rect x="1690" y="234" width="7" height="7" fill="#ff0a0d"/>
<rect x="1697" y="234" width="7" height="7" fill="#ff080c"/>
<rect x="1704" y="234" width="7" height="7" fill="#ff060b"/>
<rect x="1711" y="234" width="7" height="7" fill="#ff040a"/>
<rect x="1718" y="234" width="7" height="7" fill="#ff020a"/>
<rect x="1725" y="234" width="7" height="7" fill="#ff0109"/>
<rect x="1732" y="234" width="7" height="7" fill="#ff0008"/>
<rect x="1739" y="234" width="7" height="7" fill="#ff0008"/>
<rect x="1746" y="234" width="7" height="7" fill="#ff0007"/>
<rect x="1375" y="241" width="7" height="7" fill="#00ff79"/>
<rect x="1382" y="241" width="7" height="7" fill="#00ff7a"/>
<rect x="1389" y="241" width="7" height="7" fill="#00ff7b"/>
<rect x="1396" y="241" width="7" height="7" fill="#0dff7c"/>
<rect x="1403" y="241" width="7" height="7" fill="#20ff7d"/>
<rect x="1410" y="241" width="7" height="7" fill="#35ff7e"/>
<rect x="1417" y="241" width="7" height="7" fill="#4aff7f"/>
<rect x="1424" y="241" width="7" height="7" fill="#61ff80"/>
<rect x="1431" y="241" width="7" height="7" fill="#78ff82"/>
<rect x="1438" y="241" width="7" height="7" fill="#91ff83"/>
<rect x="1445" y="241" width="7" height="7" fill="#abff84"/>
<rect x="1452" y="241" width="7" height="7" fill="#c6ff86"/>
<rect x="1459" y="241" width="7" height="7" fill="#e2ff87"/>
<rect x="1466" y="241" width="7" height="7" fill="#fffd88"/>
<rect x="1473" y="241" width="7" height="7" fill="#ffe17a"/>
<rect x="1480" y="241" width="7" height="7" fill="#ffca6f"/>
<rect x="1487" y="241" width="7" height="7" fill="#ffb665"/>
<rect x="1494" y="241" width="7" height="7" fill="#ffa45d"/>
<rect x="1501" y="241" width="7" height="7" fill="#ff9556"/>
<rect x="1508" y="241" width="7" height="7" fill="#ff884f"/>
<rect x="1515" y="241" width="7" height="7" fill="#ff7c49"/>
<rect x="1522" y="241" width="7" height="7" fill="#ff7144"/>
<rect x="1529" y="241" width="7" height="7" fill="#ff6840"/>
<rect x="1536" y="241" width="7" height="7" fill="#ff5f3b"/>
<rect x="1543" y="241" width="7" height="7" fill="#ff5738"/>
<rect x="1550" y="241" width="7" height="7" fill="#ff5034"/>
<rect x="1557" y="241" width="7" height="7" fill="#ff4a31"/>
<rect x="1564" y="241" width="7" height="7" fill="#ff442e"/>
<rect x="1571" y="241" width="7" height="7" fill="#ff3e2c"/>
<rect x="1578" y="241" width="7" height="7" fill="#ff3929"/>
<rect x="1585" y="241" width="7" height="7" fill="#ff3527"/>
<rect x="1592" y="241" width="7" height="7" fill="#ff3025"/>
<rect x="1599" y="241" width="7" height="7" fill="#ff2c23"/>
<rect x="1606" y="241" width="7" height="7" fill="#ff2821"/>
<rect x="1613" y="241" width="7" height="7" fill="#ff251f"/>
<rect x="1620" y="241" width="7" height="7" fill="#ff211d"/>
<rect x="1627" y="241" width="7" height="7" fill="#ff1e1c"/>
<rect x="1634" y="241" width="7" height="7" fill="#ff1b1a"/>
<rect x="1641" y="241" width="7" height="7" fill="#ff1819"/>
<rect x="1648" y="241" width="7" height="7" fill="#ff1618"/>
<rect x="1655" y="241" width="7" height="7" fill="#ff1317"/>
<rect x="1662" y="241" width="7" height="7" fill="#ff1115"/>
<rect x="1669" y="241" width="7" height="7" fill="#ff0e14"/>
<rect x="1676" y="241" width="7" height="7" fill="#ff0c13"/>
<rect x="1683" y="241" width="7" height="7" fill="#ff0a12"/>
<rect x="1690" y="241" width="7" height="7" fill="#ff0811"/>
<rect x="1697" y="241" width="7" height="7" fill="#ff0610"/>
<rect x="1704" y="241" width="7" height="7" fill="#ff0510"/>
<rect x="1711" y="241" width="7" height="7" fill="#ff030f"/>
<rect x="1718" y="241" width="7" height="7" fill="#ff010e"/>
<rect x="1725" y="241" width="7" height="7" fill="#ff000d"/>
<rect x="1732" y="241" width="7" height="7" fill="#ff000c"/>
<rect x="1739" y="241" width="7" height="7" fill="#ff000c"/>
<rect x="1746" y="241" width="7" height="7" fill="#ff000b"/>
<rect x="1375" y="248" width="7" height="7" fill="#00ff89"/>
<rect x="1382" y="248" width="7" height="7" fill="#00ff8a"/>
<rect x="1389" y="248" width="7" height="7" fill="#00ff8c"/>
<rect x="1396" y="248" width="7" height="7" fill="#0aff8d"/>
<rect x="1403" y="248" width="7" height="7" fill="#1eff8e"/>
<rect x="1410" y="248" width="7" height="7" fill="#33ff90"/>
<rect x="1417" y="248" width="7" height="7" fill="#49ff91"/>
<rect x="1424" y="248" width="7" height="7" fill="#60ff93"/>
<rect x="1431" y="248" width="7" height="7" fill="#78ff95"/>
<rect x="1438" y="248" width="7" height="7" fill="#91ff97"/>
<rect x="1445" y="248" width="7" height="7" fill="#abff98"/>
<rect x="1452" y="248" width="7" height="7" fill="#c7ff9a"/>
<rect x="1459" y="248" width="7" height="7" fill="#e4ff9d"/>
<rect x="1466" y="248" width="7" height="7" fill="#fffb9c"/>
<rect x="1473" y="248" width="7" height="7" fill="#ffdf8d"/>
<rect x="1480" y="248" width="7" height="7" fill="#ffc780"/>
<rect x="1487" y="248" width="7" height="7" fill="#ffb375"/>
<rect x="1494" y="248" width="7" height="7" fill="#ffa26b"/>
<rect x="1501" y="248" width="7" height="7" fill="#ff9363"/>
<rect x="1508" y="248" width="7" height="7" fill="#ff855c"/>
<rect x="1515" y="248" width="7" height="7" fill="#ff7955"/>
<rect x="1522" y="248" width="7" height="7" fill="#ff6f4f"/>
<rect x="1529" y="248" width="7" height="7" fill="#ff654a"/>
<rect x="1536" y="248" width="7" height="7" fill="#ff5d45"/>
<rect x="1543" y="248" width="7" height="7" fill="#ff5541"/>
<rect x="1550" y="248" width="7" height="7" fill="#ff4e3d"/>
<rect x="1557" y="248" width="7" height="7" fill="#ff483a"/>
<rect x="1564" y="248" width="7" height="7" fill="#ff4236"/>
<rect x="1571" y="248" width="7" height="7" fill="#ff3c33"/>
<rect x="1578" y="248" width="7" height="7" fill="#ff3731"/>
<rect x="1585" y="248" width="7" height="7" fill="#ff332e"/>
<rect x="1592" y="248" width="7" height="7" fill="#ff2e2c"/>
<rect x="1599" y="248" width="7" height="7" fill="#ff2a29"/>
<rect x="1606" y="248" width="7" height="7" fill="#ff2627"/>
<rect x="1613" y="248" width="7" height="7" fill="#ff2325"/>
<rect x="1620" y="248" width="7" height="7" fill="#ff2024"/>
<rect x="1627" y="248" width="7" height="7" fill="#ff1c22"/>
<rect x="1634" y="248" width="7" height="7" fill="#ff1920"/>
<rect x="1641" y="248" width="7" height="7" fill="#ff171f"/>
<rect x="1648" y="248" width="7" height="7" fill="#ff141d"/>
<rect x="1655" y="248" width="7" height="7" fill="#ff121c"/>
<rect x="1662" y="248" width="7" height="7" fill="#ff0f1b"/>
<rect x="1669" y="248" width="7" height="7" fill="#ff0d19"/>
<rect x="1676" y="248" width="7" height="7" fill="#ff0b18"/>
<rect x="1683" y="248" width="7" height="7" fill="#ff0917"/>
<rect x="1690" y="248" width="7" height="7" fill="#ff0716"/>
<rect x="1697" y="248" width="7" height="7" fill="#ff0515"/>
<rect x="1704" y="248" width="7" height="7" fill="#ff0314"/>
<rect x="1711" y="248" width="7" height="7" fill="#ff0213"/>
<rect x="1718" y="248" width="7" height="7" fill="#ff0012"/>
<rect x="1725" y="248" width="7" height="7" fill="#ff0011"/>
<rect x="1732" y="248" width="7" height="7" fill="#ff0011"/>
<rect x="1739" y="248" width="7" height="7" fill="#ff0010"/>
<rect x="1375" y="255" width="7" height="7" fill="#00ff99"/>
<rect x="1382" y="255" width="7" height="7" fill="#00ff9b"/>
<rect x="1389" y="255" width="7" height="7" fill="#00ff9d"/>
<rect x="1396" y="255" width="7" height="7" fill="#08ff9f"/>
<rect x="1403" y="255" width="7" height="7" fill="#1cffa0"/>
<rect x="1410" y="255" width="7" height="7" fill="#31ffa2"/>
<rect x="1417" y="255" width="7" height="7" fill="#48ffa4"/>
<rect x="1424" y="255" width="7" height="7" fill="#5fffa6"/>
<rect x="1431" y="255" width="7" height="7" fill="#77ffa9"/>
<rect x="1438" y="255" width="7" height="7" fill="#91ffab"/>
<rect x="1445" y="255" width="7" height="7" fill="#acffae"/>
<rect x="1452" y="255" width="7" height="7" fill="#c8ffb0"/>
<rect x="1459" y="255" width="7" height="7" fill="#e6ffb3"/>
<rect x="1466" y="255" width="7" height="7" fill="#fff8b1"/>
<rect x="1473" y="255" width="7" height="7" fill="#ffdca0"/>
<rect x="1480" y="255" width="7" height="7" fill="#ffc591"/>
<rect x="1487" y="255" width="7" height="7" fill="#ffb084"/>
<rect x="1494" y="255" width="7" height="7" fill="#ff9f7a"/>
<rect x="1501" y="255" width="7" height="7" fill="#ff9070"/>
<rect x="1508" y="255" width="7" height="7" fill="#ff8368"/>
<rect x="1515" y="255" width="7" height="7" fill="#ff7761"/>
<rect x="1522" y="255" width="7" height="7" fill="#ff6d5a"/>
<rect x="1529" y="255" width="7" height="7" fill="#ff6355"/>
<rect x="1536" y="255" width="7" height="7" fill="#ff5b4f"/>
<rect x="1543" y="255" width="7" height="7" fill="#ff534b"/>
<rect x="1550" y="255" width="7" height="7" fill="#ff4c46"/>
<rect x="1557" y="255" width="7" height="7" fill="#ff4642"/>
<rect x="1564" y="255" width="7" height="7" fill="#ff403f"/>
<rect x="1571" y="255" width="7" height="7" fill="#ff3a3b"/>
<rect x="1578" y="255" width="7" height="7" fill="#ff3538"/>
<rect x="1585" y="255" width="7" height="7" fill="#ff3135"/>
<rect x="1592" y="255" width="7" height="7" fill="#ff2c33"/>
<rect x="1599" y="255" width="7" height="7" fill="#ff2830"/>
<rect x="1606" y="255" width="7" height="7" fill="#ff252e"/>
<rect x="1613" y="255" width="7" height="7" fill="#ff212c"/>
<rect x="1620" y="255" width="7" height="7" fill="#ff1e2a"/>
<rect x="1627" y="255" width="7" height="7" fill="#ff1b28"/>
<rect x="1634" y="255" width="7" height="7" fill="#ff1826"/>
<rect x="1641" y="255" width="7" height="7" fill="#ff1524"/>
<rect x="1648" y="255" width="7" height="7" fill="#ff1323"/>
<rect x="1655" y="255" width="7" height="7" fill="#ff1021"/>
<rect x="1662" y="255" width="7" height="7" fill="#ff0e20"/>
<rect x="1669" y="255" width="7" height="7" fill="#ff0b1e"/>
<rect x="1676" y="255" width="7" height="7" fill="#ff091d"/>
<rect x="1683" y="255" width="7" height="7" fill="#ff071c"/>
<rect x="1690" y="255" width="7" height="7" fill="#ff051b"/>
<rect x="1697" y="255" width="7" height="7" fill="#ff041a"/>
<rect x="1704" y="255" width="7" height="7" fill="#ff0219"/>
<rect x="1711" y="255" width="7" height="7" fill="#ff0017"/>
<rect x="1718" y="255" width="7" height="7" fill="#ff0016"/>
<rect x="1725" y="255" width="7" height="7" fill="#ff0016"/>
<rect x="1732" y="255" width="7" height="7" fill="#ff0015"/>
<rect x="1382" y="262" width="7" height="7" fill="#00ffac"/>
<rect x="1389" y="262" width="7" height="7" fill="#00ffaf"/>
<rect x="1396" y="262" width="7" height="7" fill="#06ffb1"/>
<rect x="1403" y="262" width="7" height="7" fill="#1affb3"/>
<rect x="1410" y="262" width="7" height="7" fill="#30ffb5"/>
<rect x="1417" y="262" width="7" height="7" fill="#46ffb8"/>
<rect x="1424" y="262" width="7" height="7" fill="#5effbb"/>
<rect x="1431" y="262" width="7" height="7" fill="#77ffbd"/>
<rect x="1438" y="262" width="7" height="7" fill="#91ffc0"/>
<rect x="1445" y="262" width="7" height="7" fill="#acffc3"/>
<rect x="1452" y="262" width="7" height="7" fill="#c9ffc7"/>
<rect x="1459" y="262" width="7" height="7" fill="#e8ffca"/>
<rect x="1466" y="262" width="7" height="7" fill="#fff6c6"/>
<rect x="1473" y="262" width="7" height="7" fill="#ffdab3"/>
<rect x="1480" y="262" width="7" height="7" fill="#ffc2a2"/>
<rect x="1487" y="262" width="7" height="7" fill="#ffae95"/>
<rect x="1494" y="262" width="7" height="7" fill="#ff9c89"/>
<rect x="1501" y="262" width="7" height="7" fill="#ff8d7e"/>
<rect x="1508" y="262" width="7" height="7" fill="#ff8075"/>
<rect x="1515" y="262" width="7" height="7" fill="#ff746d"/>
<rect x="1522" y="262" width="7" height="7" fill="#ff6a66"/>
<rect x="1529" y="262" width="7" height="7" fill="#ff615f"/>
<rect x="1536" y="262" width="7" height="7" fill="#ff585a"/>
<rect x="1543" y="262" width="7" height="7" fill="#ff5154"/>
<rect x="1550" y="262" width="7" height="7" fill="#ff4a50"/>
<rect x="1557" y="262" width="7" height="7" fill="#ff434b"/>
<rect x="1564" y="262" width="7" height="7" fill="#ff3e47"/>
<rect x="1571" y="262" width="7" height="7" fill="#ff3843"/>
<rect x="1578" y="262" width="7" height="7" fill="#ff3340"/>
<rect x="1585" y="262" width="7" height="7" fill="#ff2f3d"/>
<rect x="1592" y="262" width="7" height="7" fill="#ff2b3a"/>
<rect x="1599" y="262" width="7" height="7" fill="#ff2737"/>
<rect x="1606" y="262" width="7" height="7" fill="#ff2335"/>
<rect x="1613" y="262" width="7" height="7" fill="#ff1f32"/>
<rect x="1620" y="262" width="7" height="7" fill="#ff1c30"/>
<rect x="1627" y="262" width="7" height="7" fill="#ff192e"/>
<rect x="1634" y="262" width="7" height="7" fill="#ff162c"/>
<rect x="1641" y="262" width="7" height="7" fill="#ff132a"/>
<rect x="1648" y="262" width="7" height="7" fill="#ff1128"/>
<rect x="1655" y="262" width="7" height="7" fill="#ff0f27"/>
<rect x="1662" y="262" width="7" height="7" fill="#ff0c25"/>
<rect x="1669" y="262" width="7" height="7" fill="#ff0a24"/>
<rect x="1676" y="262" width="7" height="7" fill="#ff0822"/>
<rect x="1683" y="262" width="7" height="7" fill="#ff0621"/>
<rect x="1690" y="262" width="7" height="7" fill="#ff041f"/>
<rect x="1697" y="262" width="7" height="7" fill="#ff021e"/>
<rect x="1704" y="262" width="7" height="7" fill="#ff011d"/>
<rect x="1711" y="262" width="7" height="7" fill="#ff001c"/>
<rect x="1718" y="262" width="7" height="7" fill="#ff001b"/>
<rect x="1725" y="262" width="7" height="7" fill="#ff001a"/>
<rect x="1382" y="269" width="7" height="7" fill="#00ffbe"/>
<rect x="1389" y="269" width="7" height="7" fill="#00ffc1"/>
<rect x="1396" y="269" width="7" height="7" fill="#03ffc4"/>
<rect x="1403" y="269" width="7" height="7" fill="#18ffc6"/>
<rect x="1410" y="269" width="7" height="7" fill="#2effc9"/>
<rect x="1417" y="269" width="7" height="7" fill="#45ffcc"/>
<rect x="1424" y="269" width="7" height="7" fill="#5dffd0"/>
<rect x="1431" y="269" width="7" height="7" fill="#76ffd3"/>
<rect x="1438" y="269" width="7" height="7" fill="#91ffd7"/>
<rect x="1445" y="269" width="7" height="7" fill="#adffda"/>
<rect x="1452" y="269" width="7" height="7" fill="#cbffde"/>
<rect x="1459" y="269" width="7" height="7" fill="#eaffe3"/>
<rect x="1466" y="269" width="7" height="7" fill="#fff3dc"/>
<rect x="1473" y="269" width="7" height="7" fill="#ffd7c7"/>
<rect x="1480" y="269" width="7" height="7" fill="#ffbfb4"/>
<rect x="1487" y="269" width="7" height="7" fill="#ffaba5"/>
<rect x="1494" y="269" width="7" height="7" fill="#ff9a98"/>
<rect x="1501" y="269" width="7" height="7" fill="#ff8b8c"/>
<rect x="1508" y="269" width="7" height="7" fill="#ff7d82"/>
<rect x="1515" y="269" width="7" height="7" fill="#ff7279"/>
<rect x="1522" y="269" width="7" height="7" fill="#ff6871"/>
<rect x="1529" y="269" width="7" height="7" fill="#ff5e6a"/>
<rect x="1536" y="269" width="7" height="7" fill="#ff5664"/>
<rect x="1543" y="269" width="7" height="7" fill="#ff4e5e"/>
<rect x="1550" y="269" width="7" height="7" fill="#ff4859"/>
<rect x="1557" y="269" width="7" height="7" fill="#ff4154"/>
<rect x="1564" y="269" width="7" height="7" fill="#ff3c50"/>
<rect x="1571" y="269" width="7" height="7" fill="#ff364c"/>
<rect x="1578" y="269" width="7" height="7" fill="#ff3148"/>
<rect x="1585" y="269" width="7" height="7" fill="#ff2d44"/>
<rect x="1592" y="269" width="7" height="7" fill="#ff2941"/>
<rect x="1599" y="269" width="7" height="7" fill="#ff253e"/>
<rect x="1606" y="269" width="7" height="7" fill="#ff213b"/>
<rect x="1613" y="269" width="7" height="7" fill="#ff1e39"/>
<rect x="1620" y="269" width="7" height="7" fill="#ff1a36"/>
<rect x="1627" y="269" width="7" height="7" fill="#ff1734"/>
<rect x="1634" y="269" width="7" height="7" fill="#ff1532"/>
<rect x="1641" y="269" width="7" height="7" fill="#ff1230"/>
<rect x="1648" y="269" width="7" height="7" fill="#ff0f2e"/>
<rect x="1655" y="269" width="7" height="7" fill="#ff0d2c"/>
<rect x="1662" y="269" width="7" height="7" fill="#ff0b2a"/>
<rect x="1669" y="269" width="7" height="7" fill="#ff0929"/>
<rect x="1676" y="269" width="7" height="7" fill="#ff0627"/>
<rect x="1683" y="269" width="7" height="7" fill="#ff0526"/>
<rect x="1690" y="269" width="7" height="7" fill="#ff0324"/>
<rect x="1697" y="269" width="7" height="7" fill="#ff0123"/>
<rect x="1704" y="269" width="7" height="7" fill="#ff0022"/>
<rect x="1711" y="269" width="7" height="7" fill="#ff0020"/>
<rect x="1718" y="269" width="7" height="7" fill="#ff001f"/>
<rect x="1382" y="276" width="7" height="7" fill="#00ffd1"/>
<rect x="1389" y="276" width="7" height="7" fill="#00ffd4"/>
<rect x="1396" y="276" width="7" height="7" fill="#00ffd7"/>
<rect x="1403" y="276" width="7" height="7" fill="#15ffdb"/>
<rect x="1410" y="276" width="7" height="7" fill="#2cffde"/>
<rect x="1417" y="276" width="7" height="7" fill="#43ffe2"/>
<rect x="1424" y="276" width="7" height="7" fill="#5cffe5"/>
<rect x="1431" y="276" width="7" height="7" fill="#75ffea"/>
<rect x="1438" y="276" width="7" height="7" fill="#91ffee"/>
<rect x="1445" y="276" width="7" height="7" fill="#adfff2"/>
<rect x="1452" y="276" width="7" height="7" fill="#ccfff7"/>
<rect x="1459" y="276" width="7" height="7" fill="#ecfffc"/>
<rect x="1466" y="276" width="7" height="7" fill="#fff1f3"/>
<rect x="1473" y="276" width="7" height="7" fill="#ffd4db"/>
<rect x="1480" y="276" width="7" height="7" fill="#ffbcc7"/>
<rect x="1487" y="276" width="7" height="7" fill="#ffa8b6"/>
<rect x="1494" y="276" width="7" height="7" fill="#ff97a7"/>
<rect x="1501" y="276" width="7" height="7" fill="#ff889b"/>
<rect x="1508" y="276" width="7" height="7" fill="#ff7b90"/>
<rect x="1515" y="276" width="7" height="7" fill="#ff6f86"/>
<rect x="1522" y="276" width="7" height="7" fill="#ff657d"/>
<rect x="1529" y="276" width="7" height="7" fill="#ff5c75"/>
<rect x="1536" y="276" width="7" height="7" fill="#ff546e"/>
<rect x="1543" y="276" width="7" height="7" fill="#ff4c68"/>
<rect x="1550" y="276" width="7" height="7" fill="#ff4562"/>
<rect x="1557" y="276" width="7" height="7" fill="#ff3f5d"/>
<rect x="1564" y="276" width="7" height="7" fill="#ff3958"/>
<rect x="1571" y="276" width="7" height="7" fill="#ff3454"/>
<rect x="1578" y="276" width="7" height="7" fill="#ff2f50"/>
<rect x="1585" y="276" width="7" height="7" fill="#ff2b4c"/>
<rect x="1592" y="276" width="7" height="7" fill="#ff2749"/>
<rect x="1599" y="276" width="7" height="7" fill="#ff2345"/>
<rect x="1606" y="276" width="7" height="7" fill="#ff1f42"/>
<rect x="1613" y="276" width="7" height="7" fill="#ff1c3f"/>
<rect x="1620" y="276" width="7" height="7" fill="#ff193d"/>
<rect x="1627" y="276" width="7" height="7" fill="#ff163a"/>
<rect x="1634" y="276" width="7" height="7" fill="#ff1338"/>
<rect x="1641" y="276" width="7" height="7" fill="#ff1036"/>
<rect x="1648" y="276" width="7" height="7" fill="#ff0e33"/>
<rect x="1655" y="276" width="7" height="7" fill="#ff0b31"/>
<rect x="1662" y="276" width="7" height="7" fill="#ff0930"/>
<rect x="1669" y="276" width="7" height="7" fill="#ff072e"/>
<rect x="1676" y="276" width="7" height="7" fill="#ff052c"/>
<rect x="1683" y="276" width="7" height="7" fill="#ff032a"/>
<rect x="1690" y="276" width="7" height="7" fill="#ff0129"/>
<rect x="1697" y="276" width="7" height="7" fill="#ff0027"/>
<rect x="1704" y="276" width="7" height="7" fill="#ff0026"/>
<rect x="1711" y="276" width="7" height="7" fill="#ff0025"/>
<rect x="1718" y="276" width="7" height="7" fill="#ff0023"/>
<rect x="1382" y="283" width="7" height="7" fill="#00ffe4"/>
<rect x="1389" y="283" width="7" height="7" fill="#00ffe8"/>
<rect x="1396" y="283" width="7" height="7" fill="#00ffec"/>
<rect x="1403" y="283" width="7" height="7" fill="#13ffef"/>
<rect x="1410" y="283" width="7" height="7" fill="#2afff3"/>
<rect x="1417" y="283" width="7" height="7" fill="#41fff8"/>
<rect x="1424" y="283" width="7" height="7" fill="#5afffc"/>
<rect x="1431" y="283" width="7" height="7" fill="#74fdff"/>
<rect x="1438" y="283" width="7" height="7" fill="#8df8ff"/>
<rect x="1445" y="283" width="7" height="7" fill="#a6f3ff"/>
<rect x="1452" y="283" width="7" height="7" fill="#c0eeff"/>
<rect x="1459" y="283" width="7" height="7" fill="#dae9ff"/>
<rect x="1466" y="283" width="7" height="7" fill="#f5e4ff"/>
<rect x="1473" y="283" width="7" height="7" fill="#ffd1ef"/>
<rect x="1480" y="283" width="7" height="7" fill="#ffb9d9"/>
<rect x="1487" y="283" width="7" height="7" fill="#ffa5c7"/>
<rect x="1494" y="283" width="7" height="7" fill="#ff94b7"/>
<rect x="1501" y="283" width="7" height="7" fill="#ff85a9"/>
<rect x="1508" y="283" width="7" height="7" fill="#ff789d"/>
<rect x="1515" y="283" width="7" height="7" fill="#ff6d92"/>
<rect x="1522" y="283" width="7" height="7" fill="#ff6289"/>
<rect x="1529" y="283" width="7" height="7" fill="#ff5981"/>
<rect x="1536" y="283" width="7" height="7" fill="#ff5179"/>
<rect x="1543" y="283" width="7" height="7" fill="#ff4a72"/>
<rect x="1550" y="283" width="7" height="7" fill="#ff436c"/>
<rect x="1557" y="283" width="7" height="7" fill="#ff3d66"/>
<rect x="1564" y="283" width="7" height="7" fill="#ff3761"/>
<rect x="1571" y="283" width="7" height="7" fill="#ff325c"/>
<rect x="1578" y="283" width="7" height="7" fill="#ff2d58"/>
<rect x="1585" y="283" width="7" height="7" fill="#ff2954"/>
<rect x="1592" y="283" width="7" height="7" fill="#ff2550"/>
<rect x="1599" y="283" width="7" height="7" fill="#ff214c"/>
<rect x="1606" y="283" width="7" height="7" fill="#ff1d49"/>
<rect x="1613" y="283" width="7" height="7" fill="#ff1a46"/>
<rect x="1620" y="283" width="7" height="7" fill="#ff1743"/>
<rect x="1627" y="283" width="7" height="7" fill="#ff1440"/>
<rect x="1634" y="283" width="7" height="7" fill="#ff113e"/>
<rect x="1641" y="283" width="7" height="7" fill="#ff0f3b"/>
<rect x="1648" y="283" width="7" height="7" fill="#ff0c39"/>
<rect x="1655" y="283" width="7" height="7" fill="#ff0a37"/>
<rect x="1662" y="283" width="7" height="7" fill="#ff0835"/>
<rect x="1669" y="283" width="7" height="7" fill="#ff0633"/>
<rect x="1676" y="283" width="7" height="7" fill="#ff0431"/>
<rect x="1683" y="283" width="7" height="7" fill="#ff022f"/>
<rect x="1690" y="283" width="7" height="7" fill="#ff002e"/>
<rect x="1697" y="283" width="7" height="7" fill="#ff002c"/>
<rect x="1704" y="283" width="7" height="7" fill="#ff002b"/>
<rect x="1711" y="283" width="7" height="7" fill="#ff0029"/>
<rect x="1382" y="290" width="7" height="7" fill="#00fff8"/>
<rect x="1389" y="290" width="7" height="7" fill="#00fffc"/>
<rect x="1396" y="290" width="7" height="7" fill="#00fdff"/>
<rect x="1403" y="290" width="7" height="7" fill="#10f9ff"/>
<rect x="1410" y="290" width="7" height="7" fill="#26f5ff"/>
<rect x="1417" y="290" width="7" height="7" fill="#3cf0ff"/>
<rect x="1424" y="290" width="7" height="7" fill="#52ecff"/>
<rect x="1431" y="290" width="7" height="7" fill="#69e7ff"/>
<rect x="1438" y="290" width="7" height="7" fill="#80e2ff"/>
<rect x="1445" y="290" width="7" height="7" fill="#98ddff"/>
<rect x="1452" y="290" width="7" height="7" fill="#b0d9ff"/>
<rect x="1459" y="290" width="7" height="7" fill="#c8d4ff"/>
<rect x="1466" y="290" width="7" height="7" fill="#e0cfff"/>
<rect x="1473" y="290" width="7" height="7" fill="#f9caff"/>
<rect x="1480" y="290" width="7" height="7" fill="#ffb6ed"/>
<rect x="1487" y="290" width="7" height="7" fill="#ffa2d8"/>
<rect x="1494" y="290" width="7" height="7" fill="#ff91c7"/>
<rect x="1501" y="290" width="7" height="7" fill="#ff82b8"/>
<rect x="1508" y="290" width="7" height="7" fill="#ff75ab"/>
<rect x="1515" y="290" width="7" height="7" fill="#ff6a9f"/>
<rect x="1522" y="290" width="7" height="7" fill="#ff6095"/>
<rect x="1529" y="290" width="7" height="7" fill="#ff578c"/>
<rect x="1536" y="290" width="7" height="7" fill="#ff4f84"/>
<rect x="1543" y="290" width="7" height="7" fill="#ff477c"/>
<rect x="1550" y="290" width="7" height="7" fill="#ff4176"/>
<rect x="1557" y="290" width="7" height="7" fill="#ff3b6f"/>
<rect x="1564" y="290" width="7" height="7" fill="#ff356a"/>
<rect x="1571" y="290" width="7" height="7" fill="#ff3065"/>
<rect x="1578" y="290" width="7" height="7" fill="#ff2b60"/>
<rect x="1585" y="290" width="7" height="7" fill="#ff275b"/>
<rect x="1592" y="290" width="7" height="7" fill="#ff2357"/>
<rect x="1599" y="290" width="7" height="7" fill="#ff1f54"/>
<rect x="1606" y="290" width="7" height="7" fill="#ff1b50"/>
<rect x="1613" y="290" width="7" height="7" fill="#ff184d"/>
<rect x="1620" y="290" width="7" height="7" fill="#ff154a"/>
<rect x="1627" y="290" width="7" height="7" fill="#ff1247"/>
<rect x="1634" y="290" width="7" height="7" fill="#ff1044"/>
<rect x="1641" y="290" width="7" height="7" fill="#ff0d41"/>
<rect x="1648" y="290" width="7" height="7" fill="#ff0b3f"/>
<rect x="1655" y="290" width="7" height="7" fill="#ff083d"/>
<rect x="1662" y="290" width="7" height="7" fill="#ff063a"/>
<rect x="1669" y="290" width="7" height="7" fill="#ff0438"/>
<rect x="1676" y="290" width="7" height="7" fill="#ff0236"/>
<rect x="1683" y="290" width="7" height="7" fill="#ff0034"/>
<rect x="1690" y="290" width="7" height="7" fill="#ff0033"/>
<rect x="1697" y="290" width="7" height="7" fill="#ff0031"/>
<rect x="1704" y="290" width="7" height="7" fill="#ff002f"/>
<rect x="1382" y="297" width="7" height="7" fill="#00f2ff"/>
<rect x="1389" y="297" width="7" height="7" fill="#00edff"/>
<rect x="1396" y="297" width="7" height="7" fill="#00e9ff"/>
<rect x="1403" y="297" width="7" height="7" fill="#0ce5ff"/>
<rect x="1410" y="297" width="7" height="7" fill="#21e1ff"/>
<rect x="1417" y="297" width="7" height="7" fill="#35dcff"/>
<rect x="1424" y="297" width="7" height="7" fill="#4ad8ff"/>
<rect x="1431" y="297" width="7" height="7" fill="#60d4ff"/>
<rect x="1438" y="297" width="7" height="7" fill="#75cfff"/>
<rect x="1445" y="297" width="7" height="7" fill="#8bcbff"/>
<rect x="1452" y="297" width="7" height="7" fill="#a2c6ff"/>
<rect x="1459" y="297" width="7" height="7" fill="#b8c1ff"/>
<rect x="1466" y="297" width="7" height="7" fill="#cfbcff"/>
<rect x="1473" y="297" width="7" height="7" fill="#e6b7ff"/>
<rect x="1480" y="297" width="7" height="7" fill="#feb3ff"/>
<rect x="1487" y="297" width="7" height="7" fill="#ff9fea"/>
<rect x="1494" y="297" width="7" height="7" fill="#ff8ed7"/>
<rect x="1501" y="297" width="7" height="7" fill="#ff7fc7"/>
<rect x="1508" y="297" width="7" height="7" fill="#ff73b9"/>
<rect x="1515" y="297" width="7" height="7" fill="#ff67ac"/>
<rect x="1522" y="297" width="7" height="7" fill="#ff5da1"/>
<rect x="1529" y="297" width="7" height="7" fill="#ff5497"/>
<rect x="1536" y="297" width="7" height="7" fill="#ff4c8f"/>
<rect x="1543" y="297" width="7" height="7" fill="#ff4587"/>
<rect x="1550" y="297" width="7" height="7" fill="#ff3e7f"/>
<rect x="1557" y="297" width="7" height="7" fill="#ff3879"/>
<rect x="1564" y="297" width="7" height="7" fill="#ff3373"/>
<rect x="1571" y="297" width="7" height="7" fill="#ff2e6d"/>
<rect x="1578" y="297" width="7" height="7" fill="#ff2968"/>
<rect x="1585" y="297" width="7" height="7" fill="#ff2563"/>
<rect x="1592" y="297" width="7" height="7" fill="#ff215f"/>
<rect x="1599" y="297" width="7" height="7" fill="#ff1d5b"/>
<rect x="1606" y="297" width="7" height="7" fill="#ff1a57"/>
<rect x="1613" y="297" width="7" height="7" fill="#ff1653"/>
<rect x="1620" y="297" width="7" height="7" fill="#ff1350"/>
<rect x="1627" y="297" width="7" height="7" fill="#ff104d"/>
<rect x="1634" y="297" width="7" height="7" fill="#ff0e4a"/>
<rect x="1641" y="297" width="7" height="7" fill="#ff0b47"/>
<rect x="1648" y="297" width="7" height="7" fill="#ff0945"/>
<rect x="1655" y="297" width="7" height="7" fill="#ff0742"/>
<rect x="1662" y="297" width="7" height="7" fill="#ff0540"/>
<rect x="1669" y="297" width="7" height="7" fill="#ff023d"/>
<rect x="1676" y="297" width="7" height="7" fill="#ff013b"/>
<rect x="1683" y="297" width="7" height="7" fill="#ff0039"/>
<rect x="1690" y="297" width="7" height="7" fill="#ff0037"/>
<rect x="1697" y="297" width="7" height="7" fill="#ff0036"/>
<rect x="1382" y="304" width="7" height="7" fill="#00e0ff"/>
<rect x="1389" y="304" width="7" height="7" fill="#00dcff"/>
<rect x="1396" y="304" width="7" height="7" fill="#00d8ff"/>
<rect x="1403" y="304" width="7" height="7" fill="#09d4ff"/>
<rect x="1410" y="304" width="7" height="7" fill="#1ccfff"/>
<rect x="1417" y="304" width="7" height="7" fill="#30cbff"/>
<rect x="1424" y="304" width="7" height="7" fill="#44c7ff"/>
<rect x="1431" y="304" width="7" height="7" fill="#58c3ff"/>
<rect x="1438" y="304" width="7" height="7" fill="#6cbeff"/>
<rect x="1445" y="304" width="7" height="7" fill="#80baff"/>
<rect x="1452" y="304" width="7" height="7" fill="#95b5ff"/>
<rect x="1459" y="304" width="7" height="7" fill="#aab1ff"/>
<rect x="1466" y="304" width="7" height="7" fill="#c0acff"/>
<rect x="1473" y="304" width="7" height="7" fill="#d5a7ff"/>
<rect x="1480" y="304" width="7" height="7" fill="#eba3ff"/>
<rect x="1487" y="304" width="7" height="7" fill="#ff9cfc"/>
<rect x="1494" y="304" width="7" height="7" fill="#ff8be8"/>
<rect x="1501" y="304" width="7" height="7" fill="#ff7cd6"/>
<rect x="1508" y="304" width="7" height="7" fill="#ff70c7"/>
<rect x="1515" y="304" width="7" height="7" fill="#ff64ba"/>
<rect x="1522" y="304" width="7" height="7" fill="#ff5aae"/>
<rect x="1529" y="304" width="7" height="7" fill="#ff52a3"/>
<rect x="1536" y="304" width="7" height="7" fill="#ff4a9a"/>
<rect x="1543" y="304" width="7" height="7" fill="#ff4291"/>
<rect x="1550" y="304" width="7" height="7" fill="#ff3c89"/>
<rect x="1557" y="304" width="7" height="7" fill="#ff3682"/>
<rect x="1564" y="304" width="7" height="7" fill="#ff317c"/>
<rect x="1571" y="304" width="7" height="7" fill="#ff2c76"/>
<rect x="1578" y="304" width="7" height="7" fill="#ff2770"/>
<rect x="1585" y="304" width="7" height="7" fill="#ff236b"/>
<rect x="1592" y="304" width="7" height="7" fill="#ff1f66"/>
<rect x="1599" y="304" width="7" height="7" fill="#ff1b62"/>
<rect x="1606" y="304" width="7" height="7" fill="#ff185e"/>
<rect x="1613" y="304" width="7" height="7" fill="#ff155a"/>
<rect x="1620" y="304" width="7" height="7" fill="#ff1257"/>
<rect x="1627" y="304" width="7" height="7" fill="#ff0f53"/>
<rect x="1634" y="304" width="7" height="7" fill="#ff0c50"/>
<rect x="1641" y="304" width="7" height="7" fill="#ff0a4d"/>
<rect x="1648" y="304" width="7" height="7" fill="#ff074a"/>
<rect x="1655" y="304" width="7" height="7" fill="#ff0548"/>
<rect x="1662" y="304" width="7" height="7" fill="#ff0345"/>
<rect x="1669" y="304" width="7" height="7" fill="#ff0143"/>
<rect x="1676" y="304" width="7" height="7" fill="#ff0041"/>
<rect x="1683" y="304" width="7" height="7" fill="#ff003e"/>
<rect x="1690" y="304" width="7" height="7" fill="#ff003c"/>
<rect x="1389" y="311" width="7" height="7" fill="#00ccff"/>
<rect x="1396" y="311" width="7" height="7" fill="#00c8ff"/>
<rect x="1403" y="311" width="7" height="7" fill="#06c4ff"/>
<rect x="1410" y="311" width="7" height="7" fill="#18c0ff"/>
<rect x="1417" y="311" width="7" height="7" fill="#2bbcff"/>
<rect x="1424" y="311" width="7" height="7" fill="#3db8ff"/>
<rect x="1431" y="311" width="7" height="7" fill="#50b3ff"/>
<rect x="1438" y="311" width="7" height="7" fill="#63afff"/>
<rect x="1445" y="311" width="7" height="7" fill="#77abff"/>
<rect x="1452" y="311" width="7" height="7" fill="#8aa7ff"/>
<rect x="1459" y="311" width="7" height="7" fill="#9ea2ff"/>
<rect x="1466" y="311" width="7" height="7" fill="#b29eff"/>
<rect x="1473" y="311" width="7" height="7" fill="#c799ff"/>
<rect x="1480" y="311" width="7" height="7" fill="#db95ff"/>
<rect x="1487" y="311" width="7" height="7" fill="#f090ff"/>
<rect x="1494" y="311" width="7" height="7" fill="#ff88f9"/>
<rect x="1501" y="311" width="7" height="7" fill="#ff79e6"/>
<rect x="1508" y="311" width="7" height="7" fill="#ff6dd6"/>
<rect x="1515" y="311" width="7" height="7" fill="#ff62c7"/>
<rect x="1522" y="311" width="7" height="7" fill="#ff58ba"/>
<rect x="1529" y="311" width="7" height="7" fill="#ff4faf"/>
<rect x="1536" y="311" width="7" height="7" fill="#ff47a5"/>
<rect x="1543" y="311" width="7" height="7" fill="#ff409c"/>
<rect x="1550" y="311" width="7" height="7" fill="#ff3a93"/>
<rect x="1557" y="311" width="7" height="7" fill="#ff348c"/>
<rect x="1564" y="311" width="7" height="7" fill="#ff2e85"/>
<rect x="1571" y="311" width="7" height="7" fill="#ff297e"/>
<rect x="1578" y="311" width="7" height="7" fill="#ff2579"/>
<rect x="1585" y="311" width="7" height="7" fill="#ff2173"/>
<rect x="1592" y="311" width="7" height="7" fill="#ff1d6e"/>
<rect x="1599" y="311" width="7" height="7" fill="#ff1969"/>
<rect x="1606" y="311" width="7" height="7" fill="#ff1665"/>
<rect x="1613" y="311" width="7" height="7" fill="#ff1361"/>
<rect x="1620" y="311" width="7" height="7" fill="#ff105d"/>
<rect x="1627" y="311" width="7" height="7" fill="#ff0d5a"/>
<rect x="1634" y="311" width="7" height="7" fill="#ff0a56"/>
<rect x="1641" y="311" width="7" height="7" fill="#ff0853"/>
<rect x="1648" y="311" width="7" height="7" fill="#ff0650"/>
<rect x="1655" y="311" width="7" height="7" fill="#ff034d"/>
<rect x="1662" y="311" width="7" height="7" fill="#ff014b"/>
<rect x="1669" y="311" width="7" height="7" fill="#ff0048"/>
<rect x="1676" y="311" width="7" height="7" fill="#ff0046"/>
<rect x="1683" y="311" width="7" height="7" fill="#ff0043"/>
<rect x="1690" y="311" width="7" height="7" fill="#ff0041"/>
<rect x="1389" y="318" width="7" height="7" fill="#00bdff"/>
<rect x="1396" y="318" width="7" height="7" fill="#00baff"/>
<rect x="1403" y="318" width="7" height="7" fill="#04b6ff"/>
<rect x="1410" y="318" width="7" height="7" fill="#15b2ff"/>
<rect x="1417" y="318" width="7" height="7" fill="#26aeff"/>
<rect x="1424" y="318" width="7" height="7" fill="#38aaff"/>
<rect x="1431" y="318" width="7" height="7" fill="#4aa6ff"/>
<rect x="1438" y="318" width="7" height="7" fill="#5ca2ff"/>
<rect x="1445" y="318" width="7" height="7" fill="#6e9eff"/>
<rect x="1452" y="318" width="7" height="7" fill="#809aff"/>
<rect x="1459" y="318" width="7" height="7" fill="#9395ff"/>
<rect x="1466" y="318" width="7" height="7" fill="#a691ff"/>
<rect x="1473" y="318" width="7" height="7" fill="#b98dff"/>
<rect x="1480" y="318" width="7" height="7" fill="#cd88ff"/>
<rect x="1487" y="318" width="7" height="7" fill="#e084ff"/>
<rect x="1494" y="318" width="7" height="7" fill="#f47fff"/>
<rect x="1501" y="318" width="7" height="7" fill="#ff76f6"/>
<rect x="1508" y="318" width="7" height="7" fill="#ff6ae4"/>
<rect x="1515" y="318" width="7" height="7" fill="#ff5fd5"/>
<rect x="1522" y="318" width="7" height="7" fill="#ff55c7"/>
<rect x="1529" y="318" width="7" height="7" fill="#ff4cbb"/>
<rect x="1536" y="318" width="7" height="7" fill="#ff44b0"/>
<rect x="1543" y="318" width="7" height="7" fill="#ff3da6"/>
<rect x="1550" y="318" width="7" height="7" fill="#ff379d"/>
<rect x="1557" y="318" width="7" height="7" fill="#ff3195"/>
<rect x="1564" y="318" width="7" height="7" fill="#ff2c8e"/>
<rect x="1571" y="318" width="7" height="7" fill="#ff2787"/>
<rect x="1578" y="318" width="7" height="7" fill="#ff2381"/>
<rect x="1585" y="318" width="7" height="7" fill="#ff1f7b"/>
<rect x="1592" y="318" width="7" height="7" fill="#ff1b76"/>
<rect x="1599" y="318" width="7" height="7" fill="#ff1771"/>
<rect x="1606" y="318" width="7" height="7" fill="#ff146c"/>
<rect x="1613" y="318" width="7" height="7" fill="#ff1168"/>
<rect x="1620" y="318" width="7" height="7" fill="#ff0e64"/>
<rect x="1627" y="318" width="7" height="7" fill="#ff0b60"/>
<rect x="1634" y="318" width="7" height="7" fill="#ff095d"/>
<rect x="1641" y="318" width="7" height="7" fill="#ff0659"/>
<rect x="1648" y="318" width="7" height="7" fill="#ff0456"/>
<rect x="1655" y="318" width="7" height="7" fill="#ff0253"/>
<rect x="1662" y="318" width="7" height="7" fill="#ff0050"/>
<rect x="1669" y="318" width="7" height="7" fill="#ff004e"/>
<rect x="1676" y="318" width="7" height="7" fill="#ff004b"/>
<rect x="1683" y="318" width="7" height="7" fill="#ff0049"/>
<rect x="1389" y="325" width="7" height="7" fill="#00b0ff"/>
<rect x="1396" y="325" width="7" height="7" fill="#00adff"/>
<rect x="1403" y="325" width="7" height="7" fill="#01a9ff"/>
<rect x="1410" y="325" width="7" height="7" fill="#12a5ff"/>
<rect x="1417" y="325" width="7" height="7" fill="#22a1ff"/>
<rect x="1424" y="325" width="7" height="7" fill="#339eff"/>
<rect x="1431" y="325" width="7" height="7" fill="#449aff"/>
<rect x="1438" y="325" width="7" height="7" fill="#5596ff"/>
<rect x="1445" y="325" width="7" height="7" fill="#6692ff"/>
<rect x="1452" y="325" width="7" height="7" fill="#788eff"/>
<rect x="1459" y="325" width="7" height="7" fill="#898aff"/>
<rect x="1466" y="325" width="7" height="7" fill="#9b86ff"/>
<rect x="1473" y="325" width="7" height="7" fill="#ad81ff"/>
<rect x="1480" y="325" width="7" height="7" fill="#c07dff"/>
<rect x="1487" y="325" width="7" height="7" fill="#d279ff"/>
<rect x="1494" y="325" width="7" height="7" fill="#e575ff"/>
<rect x="1501" y="325" width="7" height="7" fill="#f870ff"/>
<rect x="1508" y="325" width="7" height="7" fill="#ff67f3"/>
<rect x="1515" y="325" width="7" height="7" fill="#ff5ce3"/>
<rect x="1522" y="325" width="7" height="7" fill="#ff52d4"/>
<rect x="1529" y="325" width="7" height="7" fill="#ff4ac7"/>
<rect x="1536" y="325" width="7" height="7" fill="#ff42bc"/>
<rect x="1543" y="325" width="7" height="7" fill="#ff3bb1"/>
<rect x="1550" y="325" width="7" height="7" fill="#ff35a8"/>
<rect x="1557" y="325" width="7" height="7" fill="#ff2f9f"/>
<rect x="1564" y="325" width="7" height="7" fill="#ff2a97"/>
<rect x="1571" y="325" width="7" height="7" fill="#ff2590"/>
<rect x="1578" y="325" width="7" height="7" fill="#ff2089"/>
<rect x="1585" y="325" width="7" height="7" fill="#ff1c83"/>
<rect x="1592" y="325" width="7" height="7" fill="#ff197e"/>
<rect x="1599" y="325" width="7" height="7" fill="#ff1578"/>
<rect x="1606" y="325" width="7" height="7" fill="#ff1273"/>
<rect x="1613" y="325" width="7" height="7" fill="#ff0f6f"/>
<rect x="1620" y="325" width="7" height="7" fill="#ff0c6b"/>
<rect x="1627" y="325" width="7" height="7" fill="#ff0967"/>
<rect x="1634" y="325" width="7" height="7" fill="#ff0763"/>
<rect x="1641" y="325" width="7" height="7" fill="#ff045f"/>
<rect x="1648" y="325" width="7" height="7" fill="#ff025c"/>
<rect x="1655" y="325" width="7" height="7" fill="#ff0059"/>
<rect x="1662" y="325" width="7" height="7" fill="#ff0056"/>
<rect x="1669" y="325" width="7" height="7" fill="#ff0053"/>
<rect x="1676" y="325" width="7" height="7" fill="#ff0050"/>
<rect x="1389" y="332" width="7" height="7" fill="#00a5ff"/>
<rect x="1396" y="332" width="7" height="7" fill="#00a1ff"/>
<rect x="1403" y="332" width="7" height="7" fill="#009eff"/>
<rect x="1410" y="332" width="7" height="7" fill="#0f9aff"/>
<rect x="1417" y="332" width="7" height="7" fill="#1e96ff"/>
<rect x="1424" y="332" width="7" height="7" fill="#2e92ff"/>
<rect x="1431" y="332" width="7" height="7" fill="#3e8fff"/>
<rect x="1438" y="332" width="7" height="7" fill="#4f8bff"/>
<rect x="1445" y="332" width="7" height="7" fill="#5f87ff"/>
<rect x="1452" y="332" width="7" height="7" fill="#7083ff"/>
<rect x="1459" y="332" width="7" height="7" fill="#807fff"/>
<rect x="1466" y="332" width="7" height="7" fill="#917bff"/>
<rect x="1473" y="332" width="7" height="7" fill="#a377ff"/>
<rect x="1480" y="332" width="7" height="7" fill="#b473ff"/>
<rect x="1487" y="332" width="7" height="7" fill="#c66fff"/>
<rect x="1494" y="332" width="7" height="7" fill="#d76bff"/>
<rect x="1501" y="332" width="7" height="7" fill="#e967ff"/>
<rect x="1508" y="332" width="7" height="7" fill="#fb62ff"/>
<rect x="1515" y="332" width="7" height="7" fill="#ff59f1"/>
<rect x="1522" y="332" width="7" height="7" fill="#ff4fe1"/>
<rect x="1529" y="332" width="7" height="7" fill="#ff47d4"/>
<rect x="1536" y="332" width="7" height="7" fill="#ff3fc7"/>
<rect x="1543" y="332" width="7" height="7" fill="#ff38bc"/>
<rect x="1550" y="332" width="7" height="7" fill="#ff32b2"/>
<rect x="1557" y="332" width="7" height="7" fill="#ff2ca9"/>
<rect x="1564" y="332" width="7" height="7" fill="#ff27a1"/>
<rect x="1571" y="332" width="7" height="7" fill="#ff2399"/>
<rect x="1578" y="332" width="7" height="7" fill="#ff1e92"/>
<rect x="1585" y="332" width="7" height="7" fill="#ff1a8c"/>
<rect x="1592" y="332" width="7" height="7" fill="#ff1786"/>
<rect x="1599" y="332" width="7" height="7" fill="#ff1380"/>
<rect x="1606" y="332" width="7" height="7" fill="#ff107b"/>
<rect x="1613" y="332" width="7" height="7" fill="#ff0d76"/>
<rect x="1620" y="332" width="7" height="7" fill="#ff0a71"/>
<rect x="1627" y="332" width="7" height="7" fill="#ff086d"/>
<rect x="1634" y="332" width="7" height="7" fill="#ff0569"/>
<rect x="1641" y="332" width="7" height="7" fill="#ff0365"/>
<rect x="1648" y="332" width="7" height="7" fill="#ff0162"/>
<rect x="1655" y="332" width="7" height="7" fill="#ff005f"/>
<rect x="1662" y="332" width="7" height="7" fill="#ff005b"/>
<rect x="1669" y="332" width="7" height="7" fill="#ff0058"/>
<rect x="1389" y="339" width="7" height="7" fill="#009aff"/>
<rect x="1396" y="339" width="7" height="7" fill="#0097ff"/>
<rect x="1403" y="339" width="7" height="7" fill="#0093ff"/>
<rect x="1410" y="339" width="7" height="7" fill="#0c90ff"/>
<rect x="1417" y="339" width="7" height="7" fill="#1b8cff"/>
<rect x="1424" y="339" width="7" height="7" fill="#2a88ff"/>
<rect x="1431" y="339" width="7" height="7" fill="#3a85ff"/>
<rect x="1438" y="339" width="7" height="7" fill="#4981ff"/>
<rect x="1445" y="339" width="7" height="7" fill="#597dff"/>
<rect x="1452" y="339" width="7" height="7" fill="#687aff"/>
<rect x="1459" y="339" width="7" height="7" fill="#7876ff"/>
<rect x="1466" y="339" width="7" height="7" fill="#8972ff"/>
<rect x="1473" y="339" width="7" height="7" fill="#996eff"/>
<rect x="1480" y="339" width="7" height="7" fill="#a96aff"/>
<rect x="1487" y="339" width="7" height="7" fill="#ba66ff"/>
<rect x="1494" y="339" width="7" height="7" fill="#cb62ff"/>
<rect x="1501" y="339" width="7" height="7" fill="#dc5eff"/>
<rect x="1508" y="339" width="7" height="7" fill="#ed5aff"/>
<rect x="1515" y="339" width="7" height="7" fill="#ff56ff"/>
<rect x="1522" y="339" width="7" height="7" fill="#ff4cef"/>
<rect x="1529" y="339" width="7" height="7" fill="#ff44e0"/>
<rect x="1536" y="339" width="7" height="7" fill="#ff3cd3"/>
<rect x="1543" y="339" width="7" height="7" fill="#ff36c7"/>
<rect x="1550" y="339" width="7" height="7" fill="#ff30bd"/>
<rect x="1557" y="339" width="7" height="7" fill="#ff2ab3"/>
<rect x="1564" y="339" width="7" height="7" fill="#ff25aa"/>
<rect x="1571" y="339" width="7" height="7" fill="#ff20a2"/>
<rect x="1578" y="339" width="7" height="7" fill="#ff1c9b"/>
<rect x="1585" y="339" width="7" height="7" fill="#ff1894"/>
<rect x="1592" y="339" width="7" height="7" fill="#ff148e"/>
<rect x="1599" y="339" width="7" height="7" fill="#ff1188"/>
<rect x="1606" y="339" width="7" height="7" fill="#ff0e82"/>
<rect x="1613" y="339" width="7" height="7" fill="#ff0b7d"/>
<rect x="1620" y="339" width="7" height="7" fill="#ff0878"/>
<rect x="1627" y="339" width="7" height="7" fill="#ff0674"/>
<rect x="1634" y="339" width="7" height="7" fill="#ff0370"/>
<rect x="1641" y="339" width="7" height="7" fill="#ff016c"/>
<rect x="1648" y="339" width="7" height="7" fill="#ff0068"/>
<rect x="1655" y="339" width="7" height="7" fill="#ff0064"/>
<rect x="1662" y="339" width="7" height="7" fill="#ff0061"/>
<rect x="1389" y="346" width="7" height="7" fill="#0090ff"/>
<rect x="1396" y="346" width="7" height="7" fill="#008dff"/>
<rect x="1403" y="346" width="7" height="7" fill="#008aff"/>
<rect x="1410" y="346" width="7" height="7" fill="#0a86ff"/>
<rect x="1417" y="346" width="7" height="7" fill="#1883ff"/>
<rect x="1424" y="346" width="7" height="7" fill="#267fff"/>
<rect x="1431" y="346" width="7" height="7" fill="#357cff"/>
<rect x="1438" y="346" width="7" height="7" fill="#4478ff"/>
<rect x="1445" y="346" width="7" height="7" fill="#5374ff"/>
<rect x="1452" y="346" width="7" height="7" fill="#6271ff"/>
<rect x="1459" y="346" width="7" height="7" fill="#716dff"/>
<rect x="1466" y="346" width="7" height="7" fill="#8069ff"/>
<rect x="1473" y="346" width="7" height="7" fill="#9066ff"/>
<rect x="1480" y="346" width="7" height="7" fill="#a062ff"/>
<rect x="1487" y="346" width="7" height="7" fill="#b05eff"/>
<rect x="1494" y="346" width="7" height="7" fill="#c05aff"/>
<rect x="1501" y="346" width="7" height="7" fill="#d056ff"/>
<rect x="1508" y="346" width="7" height="7" fill="#e052ff"/>
<rect x="1515" y="346" width="7" height="7" fill="#f14eff"/>
<rect x="1522" y="346" width="7" height="7" fill="#ff49fd"/>
<rect x="1529" y="346" width="7" height="7" fill="#ff41ed"/>
<rect x="1536" y="346" width="7" height="7" fill="#ff3adf"/>
<rect x="1543" y="346" width="7" height="7" fill="#ff33d3"/>
<rect x="1550" y="346" width="7" height="7" fill="#ff2dc7"/>
<rect x="1557" y="346" width="7" height="7" fill="#ff28bd"/>
<rect x="1564" y="346" width="7" height="7" fill="#ff23b4"/>
<rect x="1571" y="346" width="7" height="7" fill="#ff1eab"/>
<rect x="1578" y="346" width="7" height="7" fill="#ff1aa3"/>
<rect x="1585" y="346" width="7" height="7" fill="#ff169c"/>
<rect x="1592" y="346" width="7" height="7" fill="#ff1296"/>
<rect x="1599" y="346" width="7" height="7" fill="#ff0f8f"/>
<rect x="1606" y="346" width="7" height="7" fill="#ff0c8a"/>
<rect x="1613" y="346" width="7" height="7" fill="#ff0984"/>
<rect x="1620" y="346" width="7" height="7" fill="#ff067f"/>
<rect x="1627" y="346" width="7" height="7" fill="#ff047a"/>
<rect x="1634" y="346" width="7" height="7" fill="#ff0176"/>
<rect x="1641" y="346" width="7" height="7" fill="#ff0072"/>
<rect x="1648" y="346" width="7" height="7" fill="#ff006e"/>
<rect x="1655" y="346" width="7" height="7" fill="#ff006a"/>
<rect x="1389" y="353" width="7" height="7" fill="#0087ff"/>
<rect x="1396" y="353" width="7" height="7" fill="#0084ff"/>
<rect x="1403" y="353" width="7" height="7" fill="#0081ff"/>
<rect x="1410" y="353" width="7" height="7" fill="#077dff"/>
<rect x="1417" y="353" width="7" height="7" fill="#157aff"/>
<rect x="1424" y="353" width="7" height="7" fill="#2377ff"/>
<rect x="1431" y="353" width="7" height="7" fill="#3173ff"/>
<rect x="1438" y="353" width="7" height="7" fill="#3f70ff"/>
<rect x="1445" y="353" width="7" height="7" fill="#4d6cff"/>
<rect x="1452" y="353" width="7" height="7" fill="#5c69ff"/>
<rect x="1459" y="353" width="7" height="7" fill="#6a65ff"/>
<rect x="1466" y="353" width="7" height="7" fill="#7962ff"/>
<rect x="1473" y="353" width="7" height="7" fill="#885eff"/>
<rect x="1480" y="353" width="7" height="7" fill="#975aff"/>
<rect x="1487" y="353" width="7" height="7" fill="#a656ff"/>
<rect x="1494" y="353" width="7" height="7" fill="#b553ff"/>
<rect x="1501" y="353" width="7" height="7" fill="#c54fff"/>
<rect x="1508" y="353" width="7" height="7" fill="#d44bff"/>
<rect x="1515" y="353" width="7" height="7" fill="#e447ff"/>
<rect x="1522" y="353" width="7" height="7" fill="#f443ff"/>
<rect x="1529" y="353" width="7" height="7" fill="#ff3efa"/>
<rect x="1536" y="353" width="7" height="7" fill="#ff37eb"/>
<rect x="1543" y="353" width="7" height="7" fill="#ff30de"/>
<rect x="1550" y="353" width="7" height="7" fill="#ff2ad2"/>
<rect x="1557" y="353" width="7" height="7" fill="#ff25c7"/>
<rect x="1564" y="353" width="7" height="7" fill="#ff20be"/>
<rect x="1571" y="353" width="7" height="7" fill="#ff1cb5"/>
<rect x="1578" y="353" width="7" height="7" fill="#ff17ac"/>
<rect x="1585" y="353" width="7" height="7" fill="#ff14a5"/>
<rect x="1592" y="353" width="7" height="7" fill="#ff109e"/>
<rect x="1599" y="353" width="7" height="7" fill="#ff0d97"/>
<rect x="1606" y="353" width="7" height="7" fill="#ff0a91"/>
<rect x="1613" y="353" width="7" height="7" fill="#ff078b"/>
<rect x="1620" y="353" width="7" height="7" fill="#ff0486"/>
<rect x="1627" y="353" width="7" height="7" fill="#ff0281"/>
<rect x="1634" y="353" width="7" height="7" fill="#ff007d"/>
<rect x="1641" y="353" width="7" height="7" fill="#ff0078"/>
<rect x="1648" y="353" width="7" height="7" fill="#ff0074"/>
<rect x="1655" y="353" width="7" height="7" fill="#ff0070"/>
<rect x="1389" y="360" width="7" height="7" fill="#007fff"/>
<rect x="1396" y="360" width="7" height="7" fill="#007cff"/>
<rect x="1403" y="360" width="7" height="7" fill="#0079ff"/>
<rect x="1410" y="360" width="7" height="7" fill="#0575ff"/>
<rect x="1417" y="360" width="7" height="7" fill="#1372ff"/>
<rect x="1424" y="360" width="7" height="7" fill="#206fff"/>
<rect x="1431" y="360" width="7" height="7" fill="#2d6bff"/>
<rect x="1438" y="360" width="7" height="7" fill="#3b68ff"/>
<rect x="1445" y="360" width="7" height="7" fill="#4965ff"/>
<rect x="1452" y="360" width="7" height="7" fill="#5661ff"/>
<rect x="1459" y="360" width="7" height="7" fill="#645eff"/>
<rect x="1466" y="360" width="7" height="7" fill="#725aff"/>
<rect x="1473" y="360" width="7" height="7" fill="#8157ff"/>
<rect x="1480" y="360" width="7" height="7" fill="#8f53ff"/>
<rect x="1487" y="360" width="7" height="7" fill="#9d50ff"/>
<rect x="1494" y="360" width="7" height="7" fill="#ac4cff"/>
<rect x="1501" y="360" width="7" height="7" fill="#bb48ff"/>
<rect x="1508" y="360" width="7" height="7" fill="#ca45ff"/>
<rect x="1515" y="360" width="7" height="7" fill="#d941ff"/>
<rect x="1522" y="360" width="7" height="7" fill="#e83dff"/>
<rect x="1529" y="360" width="7" height="7" fill="#f739ff"/>
<rect x="1536" y="360" width="7" height="7" fill="#ff34f8"/>
<rect x="1543" y="360" width="7" height="7" fill="#ff2eea"/>
<rect x="1550" y="360" width="7" height="7" fill="#ff28dd"/>
<rect x="1557" y="360" width="7" height="7" fill="#ff22d2"/>
<rect x="1564" y="360" width="7" height="7" fill="#ff1ec7"/>
<rect x="1571" y="360" width="7" height="7" fill="#ff19be"/>
<rect x="1578" y="360" width="7" height="7" fill="#ff15b5"/>
<rect x="1585" y="360" width="7" height="7" fill="#ff11ad"/>
<rect x="1592" y="360" width="7" height="7" fill="#ff0ea6"/>
<rect x="1599" y="360" width="7" height="7" fill="#ff0b9f"/>
<rect x="1606" y="360" width="7" height="7" fill="#ff0899"/>
<rect x="1613" y="360" width="7" height="7" fill="#ff0593"/>
<rect x="1620" y="360" width="7" height="7" fill="#ff028d"/>
<rect x="1627" y="360" width="7" height="7" fill="#ff0088"/>
<rect x="1634" y="360" width="7" height="7" fill="#ff0083"/>
<rect x="1641" y="360" width="7" height="7" fill="#ff007e"/>
<rect x="1648" y="360" width="7" height="7" fill="#ff007a"/>
<rect x="1396" y="367" width="7" height="7" fill="#0074ff"/>
<rect x="1403" y="367" width="7" height="7" fill="#0071ff"/>
<rect x="1410" y="367" width="7" height="7" fill="#036eff"/>
<rect x="1417" y="367" width="7" height="7" fill="#106bff"/>
<rect x="1424" y="367" width="7" height="7" fill="#1d68ff"/>
<rect x="1431" y="367" width="7" height="7" fill="#2a64ff"/>
<rect x="1438" y="367" width="7" height="7" fill="#3761ff"/>
<rect x="1445" y="367" width="7" height="7" fill="#445eff"/>
<rect x="1452" y="367" width="7" height="7" fill="#515aff"/>
<rect x="1459" y="367" width="7" height="7" fill="#5f57ff"/>
<rect x="1466" y="367" width="7" height="7" fill="#6c54ff"/>
<rect x="1473" y="367" width="7" height="7" fill="#7a50ff"/>
<rect x="1480" y="367" width="7" height="7" fill="#874dff"/>
<rect x="1487" y="367" width="7" height="7" fill="#9549ff"/>
<rect x="1494" y="367" width="7" height="7" fill="#a346ff"/>
<rect x="1501" y="367" width="7" height="7" fill="#b142ff"/>
<rect x="1508" y="367" width="7" height="7" fill="#c03fff"/>
<rect x="1515" y="367" width="7" height="7" fill="#ce3bff"/>
<rect x="1522" y="367" width="7" height="7" fill="#dc38ff"/>
<rect x="1529" y="367" width="7" height="7" fill="#eb34ff"/>
<rect x="1536" y="367" width="7" height="7" fill="#fa30ff"/>
<rect x="1543" y="367" width="7" height="7" fill="#ff2bf6"/>
<rect x="1550" y="367" width="7" height="7" fill="#ff25e8"/>
<rect x="1557" y="367" width="7" height="7" fill="#ff20dc"/>
<rect x="1564" y="367" width="7" height="7" fill="#ff1bd1"/>
<rect x="1571" y="367" width="7" height="7" fill="#ff17c8"/>
<rect x="1578" y="367" width="7" height="7" fill="#ff13be"/>
<rect x="1585" y="367" width="7" height="7" fill="#ff0fb6"/>
<rect x="1592" y="367" width="7" height="7" fill="#ff0cae"/>
<rect x="1599" y="367" width="7" height="7" fill="#ff09a7"/>
<rect x="1606" y="367" width="7" height="7" fill="#ff06a0"/>
<rect x="1613" y="367" width="7" height="7" fill="#ff039a"/>
<rect x="1620" y="367" width="7" height="7" fill="#ff0194"/>
<rect x="1627" y="367" width="7" height="7" fill="#ff008f"/>
<rect x="1634" y="367" width="7" height="7" fill="#ff008a"/>
<rect x="1641" y="367" width="7" height="7" fill="#ff0085"/>
<rect x="1396" y="374" width="7" height="7" fill="#006dff"/>
<rect x="1403" y="374" width="7" height="7" fill="#006aff"/>
<rect x="1410" y="374" width="7" height="7" fill="#0267ff"/>
<rect x="1417" y="374" width="7" height="7" fill="#0e64ff"/>
<rect x="1424" y="374" width="7" height="7" fill="#1a61ff"/>
<rect x="1431" y="374" width="7" height="7" fill="#275eff"/>
<rect x="1438" y="374" width="7" height="7" fill="#335bff"/>
<rect x="1445" y="374" width="7" height="7" fill="#4057ff"/>
<rect x="1452" y="374" width="7" height="7" fill="#4d54ff"/>
<rect x="1459" y="374" width="7" height="7" fill="#5951ff"/>
<rect x="1466" y="374" width="7" height="7" fill="#664eff"/>
<rect x="1473" y="374" width="7" height="7" fill="#734aff"/>
<rect x="1480" y="374" width="7" height="7" fill="#8147ff"/>
<rect x="1487" y="374" width="7" height="7" fill="#8e44ff"/>
<rect x="1494" y="374" width="7" height="7" fill="#9b40ff"/>
<rect x="1501" y="374" width="7" height="7" fill="#a93dff"/>
<rect x="1508" y="374" width="7" height="7" fill="#b639ff"/>
<rect x="1515" y="374" width="7" height="7" fill="#c436ff"/>
<rect x="1522" y="374" width="7" height="7" fill="#d232ff"/>
<rect x="1529" y="374" width="7" height="7" fill="#e02fff"/>
<rect x="1536" y="374" width="7" height="7" fill="#ee2bff"/>
<rect x="1543" y="374" width="7" height="7" fill="#fd28ff"/>
<rect x="1550" y="374" width="7" height="7" fill="#ff22f4"/>
<rect x="1557" y="374" width="7" height="7" fill="#ff1de7"/>
<rect x="1564" y="374" width="7" height="7" fill="#ff19dc"/>
<rect x="1571" y="374" width="7" height="7" fill="#ff14d1"/>
<rect x="1578" y="374" width="7" height="7" fill="#ff10c8"/>
<rect x="1585" y="374" width="7" height="7" fill="#ff0dbf"/>
<rect x="1592" y="374" width="7" height="7" fill="#ff0ab7"/>
<rect x="1599" y="374" width="7" height="7" fill="#ff07af"/>
<rect x="1606" y="374" width="7" height="7" fill="#ff04a8"/>
<rect x="1613" y="374" width="7" height="7" fill="#ff01a2"/>
<rect x="1620" y="374" width="7" height="7" fill="#ff009b"/>
<rect x="1627" y="374" width="7" height="7" fill="#ff0096"/>
<rect x="1634" y="374" width="7" height="7" fill="#ff0090"/>
<rect x="1396" y="381" width="7" height="7" fill="#0067ff"/>
<rect x="1403" y="381" width="7" height="7" fill="#0064ff"/>
<rect x="1410" y="381" width="7" height="7" fill="#0061ff"/>
<rect x="1417" y="381" width="7" height="7" fill="#0c5eff"/>
<rect x="1424" y="381" width="7" height="7" fill="#185bff"/>
<rect x="1431" y="381" width="7" height="7" fill="#2458ff"/>
<rect x="1438" y="381" width="7" height="7" fill="#3055ff"/>
<rect x="1445" y="381" width="7" height="7" fill="#3c51ff"/>
<rect x="1452" y="381" width="7" height="7" fill="#484eff"/>
<rect x="1459" y="381" width="7" height="7" fill="#544bff"/>
<rect x="1466" y="381" width="7" height="7" fill="#6148ff"/>
<rect x="1473" y="381" width="7" height="7" fill="#6e45ff"/>
<rect x="1480" y="381" width="7" height="7" fill="#7a42ff"/>
<rect x="1487" y="381" width="7" height="7" fill="#873eff"/>
<rect x="1494" y="381" width="7" height="7" fill="#943bff"/>
<rect x="1501" y="381" width="7" height="7" fill="#a138ff"/>
<rect x="1508" y="381" width="7" height="7" fill="#ae34ff"/>
<rect x="1515" y="381" width="7" height="7" fill="#bb31ff"/>
<rect x="1522" y="381" width="7" height="7" fill="#c92eff"/>
<rect x="1529" y="381" width="7" height="7" fill="#d62aff"/>
<rect x="1536" y="381" width="7" height="7" fill="#e427ff"/>
<rect x="1543" y="381" width="7" height="7" fill="#f123ff"/>
<rect x="1550" y="381" width="7" height="7" fill="#ff20ff"/>
<rect x="1557" y="381" width="7" height="7" fill="#ff1bf2"/>
<rect x="1564" y="381" width="7" height="7" fill="#ff16e6"/>
<rect x="1571" y="381" width="7" height="7" fill="#ff12db"/>
<rect x="1578" y="381" width="7" height="7" fill="#ff0ed1"/>
<rect x="1585" y="381" width="7" height="7" fill="#ff0bc8"/>
<rect x="1592" y="381" width="7" height="7" fill="#ff07bf"/>
<rect x="1599" y="381" width="7" height="7" fill="#ff04b7"/>
<rect x="1606" y="381" width="7" height="7" fill="#ff02b0"/>
<rect x="1613" y="381" width="7" height="7" fill="#ff00a9"/>
<rect x="1620" y="381" width="7" height="7" fill="#ff00a3"/>
<rect x="1627" y="381" width="7" height="7" fill="#ff009d"/>
<rect x="1396" y="388" width="7" height="7" fill="#0061ff"/>
<rect x="1403" y="388" width="7" height="7" fill="#005eff"/>
<rect x="1410" y="388" width="7" height="7" fill="#005bff"/>
<rect x="1417" y="388" width="7" height="7" fill="#0a58ff"/>
<rect x="1424" y="388" width="7" height="7" fill="#1555ff"/>
<rect x="1431" y="388" width="7" height="7" fill="#2152ff"/>
<rect x="1438" y="388" width="7" height="7" fill="#2d4fff"/>
<rect x="1445" y="388" width="7" height="7" fill="#384cff"/>
<rect x="1452" y="388" width="7" height="7" fill="#4449ff"/>
<rect x="1459" y="388" width="7" height="7" fill="#5046ff"/>
<rect x="1466" y="388" width="7" height="7" fill="#5c43ff"/>
<rect x="1473" y="388" width="7" height="7" fill="#6840ff"/>
<rect x="1480" y="388" width="7" height="7" fill="#743cff"/>
<rect x="1487" y="388" width="7" height="7" fill="#8139ff"/>
<rect x="1494" y="388" width="7" height="7" fill="#8d36ff"/>
<rect x="1501" y="388" width="7" height="7" fill="#9933ff"/>
<rect x="1508" y="388" width="7" height="7" fill="#a630ff"/>
<rect x="1515" y="388" width="7" height="7" fill="#b32cff"/>
<rect x="1522" y="388" width="7" height="7" fill="#c029ff"/>
<rect x="1529" y="388" width="7" height="7" fill="#cd26ff"/>
<rect x="1536" y="388" width="7" height="7" fill="#da22ff"/>
<rect x="1543" y="388" width="7" height="7" fill="#e71fff"/>
<rect x="1550" y="388" width="7" height="7" fill="#f41cff"/>
<rect x="1557" y="388" width="7" height="7" fill="#ff18fd"/>
<rect x="1564" y="388" width="7" height="7" fill="#ff13f0"/>
<rect x="1571" y="388" width="7" height="7" fill="#ff0fe5"/>
<rect x="1578" y="388" width="7" height="7" fill="#ff0cda"/>
<rect x="1585" y="388" width="7" height="7" fill="#ff08d1"/>
<rect x="1592" y="388" width="7" height="7" fill="#ff05c8"/>
<rect x="1599" y="388" width="7" height="7" fill="#ff02bf"/>
<rect x="1606" y="388" width="7" height="7" fill="#ff00b8"/>
<rect x="1613" y="388" width="7" height="7" fill="#ff00b1"/>
<rect x="1620" y="388" width="7" height="7" fill="#ff00aa"/>
<rect x="1627" y="388" width="7" height="7" fill="#ff00a4"/>
<rect x="1396" y="395" width="7" height="7" fill="#005bff"/>
<rect x="1403" y="395" width="7" height="7" fill="#0058ff"/>
<rect x="1410" y="395" width="7" height="7" fill="#0055ff"/>
<rect x="1417" y="395" width="7" height="7" fill="#0852ff"/>
<rect x="1424" y="395" width="7" height="7" fill="#1350ff"/>
<rect x="1431" y="395" width="7" height="7" fill="#1e4dff"/>
<rect x="1438" y="395" width="7" height="7" fill="#2a4aff"/>
<rect x="1445" y="395" width="7" height="7" fill="#3547ff"/>
<rect x="1452" y="395" width="7" height="7" fill="#4044ff"/>
<rect x="1459" y="395" width="7" height="7" fill="#4c41ff"/>
<rect x="1466" y="395" width="7" height="7" fill="#573eff"/>
<rect x="1473" y="395" width="7" height="7" fill="#633bff"/>
<rect x="1480" y="395" width="7" height="7" fill="#6f38ff"/>
<rect x="1487" y="395" width="7" height="7" fill="#7b35ff"/>
<rect x="1494" y="395" width="7" height="7" fill="#8732ff"/>
<rect x="1501" y="395" width="7" height="7" fill="#932eff"/>
<rect x="1508" y="395" width="7" height="7" fill="#9f2bff"/>
<rect x="1515" y="395" width="7" height="7" fill="#ab28ff"/>
<rect x="1522" y="395" width="7" height="7" fill="#b725ff"/>
<rect x="1529" y="395" width="7" height="7" fill="#c422ff"/>
<rect x="1536" y="395" width="7" height="7" fill="#d01eff"/>
<rect x="1543" y="395" width="7" height="7" fill="#dd1bff"/>
<rect x="1550" y="395" width="7" height="7" fill="#ea18ff"/>
<rect x="1557" y="395" width="7" height="7" fill="#f614ff"/>
<rect x="1564" y="395" width="7" height="7" fill="#ff11fb"/>
<rect x="1571" y="395" width="7" height="7" fill="#ff0def"/>
<rect x="1578" y="395" width="7" height="7" fill="#ff09e4"/>
<rect x="1585" y="395" width="7" height="7" fill="#ff06da"/>
<rect x="1592" y="395" width="7" height="7" fill="#ff03d0"/>
<rect x="1599" y="395" width="7" height="7" fill="#ff00c8"/>
<rect x="1606" y="395" width="7" height="7" fill="#ff00c0"/>
<rect x="1613" y="395" width="7" height="7" fill="#ff00b8"/>
<rect x="1620" y="395" width="7" height="7" fill="#ff00b1"/>
<rect x="1396" y="402" width="7" height="7" fill="#0056ff"/>
<rect x="1403" y="402" width="7" height="7" fill="#0053ff"/>
<rect x="1410" y="402" width="7" height="7" fill="#0050ff"/>
<rect x="1417" y="402" width="7" height="7" fill="#064dff"/>
<rect x="1424" y="402" width="7" height="7" fill="#114aff"/>
<rect x="1431" y="402" width="7" height="7" fill="#1c48ff"/>
<rect x="1438" y="402" width="7" height="7" fill="#2745ff"/>
<rect x="1445" y="402" width="7" height="7" fill="#3242ff"/>
<rect x="1452" y="402" width="7" height="7" fill="#3d3fff"/>
<rect x="1459" y="402" width="7" height="7" fill="#483cff"/>
<rect x="1466" y="402" width="7" height="7" fill="#5339ff"/>
<rect x="1473" y="402" width="7" height="7" fill="#5e36ff"/>
<rect x="1480" y="402" width="7" height="7" fill="#6a33ff"/>
<rect x="1487" y="402" width="7" height="7" fill="#7530ff"/>
<rect x="1494" y="402" width="7" height="7" fill="#812dff"/>
<rect x="1501" y="402" width="7" height="7" fill="#8c2aff"/>
<rect x="1508" y="402" width="7" height="7" fill="#9827ff"/>
<rect x="1515" y="402" width="7" height="7" fill="#a424ff"/>
<rect x="1522" y="402" width="7" height="7" fill="#b021ff"/>
<rect x="1529" y="402" width="7" height="7" fill="#bc1eff"/>
<rect x="1536" y="402" width="7" height="7" fill="#c81bff"/>
<rect x="1543" y="402" width="7" height="7" fill="#d418ff"/>
<rect x="1550" y="402" width="7" height="7" fill="#e014ff"/>
<rect x="1557" y="402" width="7" height="7" fill="#ec11ff"/>
<rect x="1564" y="402" width="7" height="7" fill="#f90eff"/>
<rect x="1571" y="402" width="7" height="7" fill="#ff0af9"/>
<rect x="1578" y="402" width="7" height="7" fill="#ff07ed"/>
<rect x="1585" y="402" width="7" height="7" fill="#ff03e3"/>
<rect x="1592" y="402" width="7" height="7" fill="#ff00d9"/>
<rect x="1599" y="402" width="7" height="7" fill="#ff00d0"/>
<rect x="1606" y="402" width="7" height="7" fill="#ff00c8"/>
<rect x="1613" y="402" width="7" height="7" fill="#ff00c0"/>
<rect x="1396" y="409" width="7" height="7" fill="#0051ff"/>
<rect x="1403" y="409" width="7" height="7" fill="#004eff"/>
<rect x="1410" y="409" width="7" height="7" fill="#004bff"/>
<rect x="1417" y="409" width="7" height="7" fill="#0548ff"/>
<rect x="1424" y="409" width="7" height="7" fill="#0f46ff"/>
<rect x="1431" y="409" width="7" height="7" fill="#1a43ff"/>
<rect x="1438" y="409" width="7" height="7" fill="#2440ff"/>
<rect x="1445" y="409" width="7" height="7" fill="#2f3dff"/>
<rect x="1452" y="409" width="7" height="7" fill="#393bff"/>
<rect x="1459" y="409" width="7" height="7" fill="#4438ff"/>
<rect x="1466" y="409" width="7" height="7" fill="#4f35ff"/>
<rect x="1473" y="409" width="7" height="7" fill="#5a32ff"/>
<rect x="1480" y="409" width="7" height="7" fill="#652fff"/>
<rect x="1487" y="409" width="7" height="7" fill="#702cff"/>
<rect x="1494" y="409" width="7" height="7" fill="#7b29ff"/>
<rect x="1501" y="409" width="7" height="7" fill="#8626ff"/>
<rect x="1508" y="409" width="7" height="7" fill="#9223ff"/>
<rect x="1515" y="409" width="7" height="7" fill="#9d20ff"/>
<rect x="1522" y="409" width="7" height="7" fill="#a81dff"/>
<rect x="1529" y="409" width="7" height="7" fill="#b41aff"/>
<rect x="1536" y="409" width="7" height="7" fill="#c017ff"/>
<rect x="1543" y="409" width="7" height="7" fill="#cb14ff"/>
<rect x="1550" y="409" width="7" height="7" fill="#d711ff"/>
<rect x="1557" y="409" width="7" height="7" fill="#e30eff"/>
<rect x="1564" y="409" width="7" height="7" fill="#ef0bff"/>
<rect x="1571" y="409" width="7" height="7" fill="#fb08ff"/>
<rect x="1578" y="409" width="7" height="7" fill="#ff04f7"/>
<rect x="1585" y="409" width="7" height="7" fill="#ff01ec"/>
<rect x="1592" y="409" width="7" height="7" fill="#ff00e2"/>
<rect x="1599" y="409" width="7" height="7" fill="#ff00d8"/>
<rect x="1606" y="409" width="7" height="7" fill="#ff00d0"/>
<rect x="1403" y="416" width="7" height="7" fill="#0049ff"/>
<rect x="1410" y="416" width="7" height="7" fill="#0047ff"/>
<rect x="1417" y="416" width="7" height="7" fill="#0344ff"/>
<rect x="1424" y="416" width="7" height="7" fill="#0d41ff"/>
<rect x="1431" y="416" width="7" height="7" fill="#183fff"/>
<rect x="1438" y="416" width="7" height="7" fill="#223cff"/>
<rect x="1445" y="416" width="7" height="7" fill="#2c39ff"/>
<rect x="1452" y="416" width="7" height="7" fill="#3636ff"/>
<rect x="1459" y="416" width="7" height="7" fill="#4134ff"/>
<rect x="1466" y="416" width="7" height="7" fill="#4b31ff"/>
<rect x="1473" y="416" width="7" height="7" fill="#562eff"/>
<rect x="1480" y="416" width="7" height="7" fill="#602bff"/>
<rect x="1487" y="416" width="7" height="7" fill="#6b28ff"/>
<rect x="1494" y="416" width="7" height="7" fill="#7626ff"/>
<rect x="1501" y="416" width="7" height="7" fill="#8123ff"/>
<rect x="1508" y="416" width="7" height="7" fill="#8c20ff"/>
<rect x="1515" y="416" width="7" height="7" fill="#971dff"/>
<rect x="1522" y="416" width="7" height="7" fill="#a21aff"/>
<rect x="1529" y="416" width="7" height="7" fill="#ad17ff"/>
<rect x="1536" y="416" width="7" height="7" fill="#b814ff"/>
<rect x="1543" y="416" width="7" height="7" fill="#c311ff"/>
<rect x="1550" y="416" width="7" height="7" fill="#cf0eff"/>
<rect x="1557" y="416" width="7" height="7" fill="#da0bff"/>
<rect x="1564" y="416" width="7" height="7" fill="#e608ff"/>
<rect x="1571" y="416" width="7" height="7" fill="#f105ff"/>
<rect x="1578" y="416" width="7" height="7" fill="#fd02ff"/>
<rect x="1585" y="416" width="7" height="7" fill="#ff00f5"/>
<rect x="1592" y="416" width="7" height="7" fill="#ff00eb"/>
<rect x="1599" y="416" width="7" height="7" fill="#ff00e1"/>
<rect x="1403" y="423" width="7" height="7" fill="#0045ff"/>
<rect x="1410" y="423" width="7" height="7" fill="#0042ff"/>
<rect x="1417" y="423" width="7" height="7" fill="#0240ff"/>
<rect x="1424" y="423" width="7" height="7" fill="#0c3dff"/>
<rect x="1431" y="423" width="7" height="7" fill="#163aff"/>
<rect x="1438" y="423" width="7" height="7" fill="#1f38ff"/>
<rect x="1445" y="423" width="7" height="7" fill="#2935ff"/>
<rect x="1452" y="423" width="7" height="7" fill="#3333ff"/>
<rect x="1459" y="423" width="7" height="7" fill="#3d30ff"/>
<rect x="1466" y="423" width="7" height="7" fill="#482dff"/>
<rect x="1473" y="423" width="7" height="7" fill="#522aff"/>
<rect x="1480" y="423" width="7" height="7" fill="#5c28ff"/>
<rect x="1487" y="423" width="7" height="7" fill="#6625ff"/>
<rect x="1494" y="423" width="7" height="7" fill="#7122ff"/>
<rect x="1501" y="423" width="7" height="7" fill="#7b1fff"/>
<rect x="1508" y="423" width="7" height="7" fill="#861dff"/>
<rect x="1515" y="423" width="7" height="7" fill="#911aff"/>
<rect x="1522" y="423" width="7" height="7" fill="#9b17ff"/>
<rect x="1529" y="423" width="7" height="7" fill="#a614ff"/>
<rect x="1536" y="423" width="7" height="7" fill="#b111ff"/>
<rect x="1543" y="423" width="7" height="7" fill="#bc0eff"/>
<rect x="1550" y="423" width="7" height="7" fill="#c70bff"/>
<rect x="1557" y="423" width="7" height="7" fill="#d208ff"/>
<rect x="1564" y="423" width="7" height="7" fill="#dd05ff"/>
<rect x="1571" y="423" width="7" height="7" fill="#e802ff"/>
<rect x="1578" y="423" width="7" height="7" fill="#f400ff"/>
<rect x="1585" y="423" width="7" height="7" fill="#ff00ff"/>
<rect x="1592" y="423" width="7" height="7" fill="#ff00f4"/>
<rect x="1599" y="423" width="7" height="7" fill="#ff00ea"/>
<rect x="1403" y="430" width="7" height="7" fill="#0041ff"/>
<rect x="1410" y="430" width="7" height="7" fill="#003eff"/>
<rect x="1417" y="430" width="7" height="7" fill="#013cff"/>
<rect x="1424" y="430" width="7" height="7" fill="#0a39ff"/>
<rect x="1431" y="430" width="7" height="7" fill="#1437ff"/>
<rect x="1438" y="430" width="7" height="7" fill="#1d34ff"/>
<rect x="1445" y="430" width="7" height="7" fill="#2731ff"/>
<rect x="1452" y="430" width="7" height="7" fill="#312fff"/>
<rect x="1459" y="430" width="7" height="7" fill="#3a2cff"/>
<rect x="1466" y="430" width="7" height="7" fill="#442aff"/>
<rect x="1473" y="430" width="7" height="7" fill="#4e27ff"/>
<rect x="1480" y="430" width="7" height="7" fill="#5824ff"/>
<rect x="1487" y="430" width="7" height="7" fill="#6222ff"/>
<rect x="1494" y="430" width="7" height="7" fill="#6c1fff"/>
<rect x="1501" y="430" width="7" height="7" fill="#761cff"/>
<rect x="1508" y="430" width="7" height="7" fill="#8119ff"/>
<rect x="1515" y="430" width="7" height="7" fill="#8b17ff"/>
<rect x="1522" y="430" width="7" height="7" fill="#9514ff"/>
<rect x="1529" y="430" width="7" height="7" fill="#a011ff"/>
<rect x="1536" y="430" width="7" height="7" fill="#aa0eff"/>
<rect x="1543" y="430" width="7" height="7" fill="#b50bff"/>
<rect x="1550" y="430" width="7" height="7" fill="#c008ff"/>
<rect x="1557" y="430" width="7" height="7" fill="#ca06ff"/>
<rect x="1564" y="430" width="7" height="7" fill="#d503ff"/>
<rect x="1571" y="430" width="7" height="7" fill="#e000ff"/>
<rect x="1578" y="430" width="7" height="7" fill="#eb00ff"/>
<rect x="1585" y="430" width="7" height="7" fill="#f600ff"/>
<rect x="1592" y="430" width="7" height="7" fill="#ff00fd"/>
<rect x="1403" y="437" width="7" height="7" fill="#003dff"/>
<rect x="1410" y="437" width="7" height="7" fill="#003aff"/>
<rect x="1417" y="437" width="7" height="7" fill="#0038ff"/>
<rect x="1424" y="437" width="7" height="7" fill="#0935ff"/>
<rect x="1431" y="437" width="7" height="7" fill="#1233ff"/>
<rect x="1438" y="437" width="7" height="7" fill="#1b30ff"/>
<rect x="1445" y="437" width="7" height="7" fill="#252eff"/>
<rect x="1452" y="437" width="7" height="7" fill="#2e2bff"/>
<rect x="1459" y="437" width="7" height="7" fill="#3729ff"/>
<rect x="1466" y="437" width="7" height="7" fill="#4126ff"/>
<rect x="1473" y="437" width="7" height="7" fill="#4b24ff"/>
<rect x="1480" y="437" width="7" height="7" fill="#5421ff"/>
<rect x="1487" y="437" width="7" height="7" fill="#5e1eff"/>
<rect x="1494" y="437" width="7" height="7" fill="#681cff"/>
<rect x="1501" y="437" width="7" height="7" fill="#7219ff"/>
<rect x="1508" y="437" width="7" height="7" fill="#7c16ff"/>
<rect x="1515" y="437" width="7" height="7" fill="#8614ff"/>
<rect x="1522" y="437" width="7" height="7" fill="#9011ff"/>
<rect x="1529" y="437" width="7" height="7" fill="#9a0eff"/>
<rect x="1536" y="437" width="7" height="7" fill="#a40cff"/>
<rect x="1543" y="437" width="7" height="7" fill="#ae09ff"/>
<rect x="1550" y="437" width="7" height="7" fill="#b906ff"/>
<rect x="1557" y="437" width="7" height="7" fill="#c303ff"/>
<rect x="1564" y="437" width="7" height="7" fill="#ce00ff"/>
<rect x="1571" y="437" width="7" height="7" fill="#d800ff"/>
<rect x="1578" y="437" width="7" height="7" fill="#e300ff"/>
<rect x="1585" y="437" width="7" height="7" fill="#ed00ff"/>
<rect x="1403" y="444" width="7" height="7" fill="#0039ff"/>
<rect x="1410" y="444" width="7" height="7" fill="#0037ff"/>
<rect x="1417" y="444" width="7" height="7" fill="#0034ff"/>
<rect x="1424" y="444" width="7" height="7" fill="#0732ff"/>
<rect x="1431" y="444" width="7" height="7" fill="#102fff"/>
<rect x="1438" y="444" width="7" height="7" fill="#192dff"/>
<rect x="1445" y="444" width="7" height="7" fill="#222bff"/>
<rect x="1452" y="444" width="7" height="7" fill="#2c28ff"/>
<rect x="1459" y="444" width="7" height="7" fill="#3526ff"/>
<rect x="1466" y="444" width="7" height="7" fill="#3e23ff"/>
<rect x="1473" y="444" width="7" height="7" fill="#4720ff"/>
<rect x="1480" y="444" width="7" height="7" fill="#511eff"/>
<rect x="1487" y="444" width="7" height="7" fill="#5a1bff"/>
<rect x="1494" y="444" width="7" height="7" fill="#6419ff"/>
<rect x="1501" y="444" width="7" height="7" fill="#6d16ff"/>
<rect x="1508" y="444" width="7" height="7" fill="#7714ff"/>
<rect x="1515" y="444" width="7" height="7" fill="#8111ff"/>
<rect x="1522" y="444" width="7" height="7" fill="#8a0eff"/>
<rect x="1529" y="444" width="7" height="7" fill="#940cff"/>
<rect x="1536" y="444" width="7" height="7" fill="#9e09ff"/>
<rect x="1543" y="444" width="7" height="7" fill="#a806ff"/>
<rect x="1550" y="444" width="7" height="7" fill="#b204ff"/>
<rect x="1557" y="444" width="7" height="7" fill="#bc01ff"/>
<rect x="1564" y="444" width="7" height="7" fill="#c600ff"/>
<rect x="1571" y="444" width="7" height="7" fill="#d100ff"/>
<rect x="1578" y="444" width="7" height="7" fill="#db00ff"/>
<rect x="1403" y="451" width="7" height="7" fill="#0036ff"/>
<rect x="1410" y="451" width="7" height="7" fill="#0033ff"/>
<rect x="1417" y="451" width="7" height="7" fill="#0031ff"/>
<rect x="1424" y="451" width="7" height="7" fill="#062fff"/>
<rect x="1431" y="451" width="7" height="7" fill="#0f2cff"/>
<rect x="1438" y="451" width="7" height="7" fill="#172aff"/>
<rect x="1445" y="451" width="7" height="7" fill="#2027ff"/>
<rect x="1452" y="451" width="7" height="7" fill="#2925ff"/>
<rect x="1459" y="451" width="7" height="7" fill="#3222ff"/>
<rect x="1466" y="451" width="7" height="7" fill="#3b20ff"/>
<rect x="1473" y="451" width="7" height="7" fill="#441eff"/>
<rect x="1480" y="451" width="7" height="7" fill="#4d1bff"/>
<rect x="1487" y="451" width="7" height="7" fill="#5719ff"/>
<rect x="1494" y="451" width="7" height="7" fill="#6016ff"/>
<rect x="1501" y="451" width="7" height="7" fill="#6914ff"/>
<rect x="1508" y="451" width="7" height="7" fill="#7311ff"/>
<rect x="1515" y="451" width="7" height="7" fill="#7c0eff"/>
<rect x="1522" y="451" width="7" height="7" fill="#850cff"/>
<rect x="1529" y="451" width="7" height="7" fill="#8f09ff"/>
<rect x="1536" y="451" width="7" height="7" fill="#9907ff"/>
<rect x="1543" y="451" width="7" height="7" fill="#a204ff"/>
<rect x="1550" y="451" width="7" height="7" fill="#ac01ff"/>
<rect x="1557" y="451" width="7" height="7" fill="#b600ff"/>
<rect x="1564" y="451" width="7" height="7" fill="#c000ff"/>
<rect x="1571" y="451" width="7" height="7" fill="#c900ff"/>
<rect x="1403" y="458" width="7" height="7" fill="#0032ff"/>
<rect x="1410" y="458" width="7" height="7" fill="#0030ff"/>
<rect x="1417" y="458" width="7" height="7" fill="#002eff"/>
<rect x="1424" y="458" width="7" height="7" fill="#052bff"/>
<rect x="1431" y="458" width="7" height="7" fill="#0d29ff"/>
<rect x="1438" y="458" width="7" height="7" fill="#1627ff"/>
<rect x="1445" y="458" width="7" height="7" fill="#1e24ff"/>
<rect x="1452" y="458" width="7" height="7" fill="#2722ff"/>
<rect x="1459" y="458" width="7" height="7" fill="#3020ff"/>
<rect x="1466" y="458" width="7" height="7" fill="#381dff"/>
<rect x="1473" y="458" width="7" height="7" fill="#411bff"/>
<rect x="1480" y="458" width="7" height="7" fill="#4a18ff"/>
<rect x="1487" y="458" width="7" height="7" fill="#5316ff"/>
<rect x="1494" y="458" width="7" height="7" fill="#5c13ff"/>
<rect x="1501" y="458" width="7" height="7" fill="#6511ff"/>
<rect x="1508" y="458" width="7" height="7" fill="#6e0eff"/>
<rect x="1515" y="458" width="7" height="7" fill="#770cff"/>
<rect x="1522" y="458" width="7" height="7" fill="#8109ff"/>
<rect x="1529" y="458" width="7" height="7" fill="#8a07ff"/>
<rect x="1536" y="458" width="7" height="7" fill="#9304ff"/>
<rect x="1543" y="458" width="7" height="7" fill="#9d02ff"/>
<rect x="1550" y="458" width="7" height="7" fill="#a600ff"/>
<rect x="1557" y="458" width="7" height="7" fill="#b000ff"/>
<rect x="1564" y="458" width="7" height="7" fill="#b900ff"/>
<rect x="1571" y="458" width="7" height="7" fill="#c300ff"/>
<rect x="1403" y="465" width="7" height="7" fill="#002fff"/>
<rect x="1410" y="465" width="7" height="7" fill="#002dff"/>
<rect x="1417" y="465" width="7" height="7" fill="#002bff"/>
<rect x="1424" y="465" width="7" height="7" fill="#0328ff"/>
<rect x="1431" y="465" width="7" height="7" fill="#0c26ff"/>
<rect x="1438" y="465" width="7" height="7" fill="#1424ff"/>
<rect x="1445" y="465" width="7" height="7" fill="#1c21ff"/>
<rect x="1452" y="465" width="7" height="7" fill="#251fff"/>
<rect x="1459" y="465" width="7" height="7" fill="#2d1dff"/>
<rect x="1466" y="465" width="7" height="7" fill="#361aff"/>
<rect x="1473" y="465" width="7" height="7" fill="#3f18ff"/>
<rect x="1480" y="465" width="7" height="7" fill="#4716ff"/>
<rect x="1487" y="465" width="7" height="7" fill="#5013ff"/>
<rect x="1494" y="465" width="7" height="7" fill="#5911ff"/>
<rect x="1501" y="465" width="7" height="7" fill="#610fff"/>
<rect x="1508" y="465" width="7" height="7" fill="#6a0cff"/>
<rect x="1515" y="465" width="7" height="7" fill="#730aff"/>
<rect x="1522" y="465" width="7" height="7" fill="#7c07ff"/>
<rect x="1529" y="465" width="7" height="7" fill="#8505ff"/>
<rect x="1536" y="465" width="7" height="7" fill="#8e02ff"/>
<rect x="1543" y="465" width="7" height="7" fill="#9700ff"/>
<rect x="1550" y="465" width="7" height="7" fill="#a100ff"/>
<rect x="1557" y="465" width="7" height="7" fill="#aa00ff"/>
<rect x="1564" y="465" width="7" height="7" fill="#b300ff"/>
<rect x="1410" y="472" width="7" height="7" fill="#002aff"/>
<rect x="1417" y="472" width="7" height="7" fill="#0028ff"/>
<rect x="1424" y="472" width="7" height="7" fill="#0225ff"/>
<rect x="1431" y="472" width="7" height="7" fill="#0a23ff"/>
<rect x="1438" y="472" width="7" height="7" fill="#1221ff"/>
<rect x="1445" y="472" width="7" height="7" fill="#1b1fff"/>
<rect x="1452" y="472" width="7" height="7" fill="#231cff"/>
<rect x="1459" y="472" width="7" height="7" fill="#2b1aff"/>
<rect x="1466" y="472" width="7" height="7" fill="#3318ff"/>
<rect x="1473" y="472" width="7" height="7" fill="#3c16ff"/>
<rect x="1480" y="472" width="7" height="7" fill="#4413ff"/>
<rect x="1487" y="472" width="7" height="7" fill="#4d11ff"/>
<rect x="1494" y="472" width="7" height="7" fill="#550fff"/>
<rect x="1501" y="472" width="7" height="7" fill="#5e0cff"/>
<rect x="1508" y="472" width="7" height="7" fill="#670aff"/>
<rect x="1515" y="472" width="7" height="7" fill="#6f07ff"/>
<rect x="1522" y="472" width="7" height="7" fill="#7805ff"/>
<rect x="1529" y="472" width="7" height="7" fill="#8103ff"/>
<rect x="1536" y="472" width="7" height="7" fill="#8a00ff"/>
<rect x="1543" y="472" width="7" height="7" fill="#9200ff"/>
<rect x="1550" y="472" width="7" height="7" fill="#9b00ff"/>
<rect x="1557" y="472" width="7" height="7" fill="#a400ff"/>
<rect x="1410" y="479" width="7" height="7" fill="#0027ff"/>
<rect x="1417" y="479" width="7" height="7" fill="#0025ff"/>
<rect x="1424" y="479" width="7" height="7" fill="#0123ff"/>
<rect x="1431" y="479" width="7" height="7" fill="#0921ff"/>
<rect x="1438" y="479" width="7" height="7" fill="#111eff"/>
<rect x="1445" y="479" width="7" height="7" fill="#191cff"/>
<rect x="1452" y="479" width="7" height="7" fill="#211aff"/>
<rect x="1459" y="479" width="7" height="7" fill="#2918ff"/>
<rect x="1466" y="479" width="7" height="7" fill="#3115ff"/>
<rect x="1473" y="479" width="7" height="7" fill="#3913ff"/>
<rect x="1480" y="479" width="7" height="7" fill="#4211ff"/>
<rect x="1487" y="479" width="7" height="7" fill="#4a0fff"/>
<rect x="1494" y="479" width="7" height="7" fill="#520cff"/>
<rect x="1501" y="479" width="7" height="7" fill="#5b0aff"/>
<rect x="1508" y="479" width="7" height="7" fill="#6308ff"/>
<rect x="1515" y="479" width="7" height="7" fill="#6b05ff"/>
<rect x="1522" y="479" width="7" height="7" fill="#7403ff"/>
<rect x="1529" y="479" width="7" height="7" fill="#7c01ff"/>
<rect x="1536" y="479" width="7" height="7" fill="#8500ff"/>
<rect x="1543" y="479" width="7" height="7" fill="#8e00ff"/>
<rect x="1550" y="479" width="7" height="7" fill="#9600ff"/>
<rect x="1410" y="486" width="7" height="7" fill="#0024ff"/>
<rect x="1417" y="486" width="7" height="7" fill="#0022ff"/>
<rect x="1424" y="486" width="7" height="7" fill="#0020ff"/>
<rect x="1431" y="486" width="7" height="7" fill="#081eff"/>
<rect x="1438" y="486" width="7" height="7" fill="#0f1cff"/>
<rect x="1445" y="486" width="7" height="7" fill="#171aff"/>
<rect x="1452" y="486" width="7" height="7" fill="#1f17ff"/>
<rect x="1459" y="486" width="7" height="7" fill="#2715ff"/>
<rect x="1466" y="486" width="7" height="7" fill="#2f13ff"/>
<rect x="1473" y="486" width="7" height="7" fill="#3711ff"/>
<rect x="1480" y="486" width="7" height="7" fill="#3f0fff"/>
<rect x="1487" y="486" width="7" height="7" fill="#470cff"/>
<rect x="1494" y="486" width="7" height="7" fill="#4f0aff"/>
<rect x="1501" y="486" width="7" height="7" fill="#5708ff"/>
<rect x="1508" y="486" width="7" height="7" fill="#5f06ff"/>
<rect x="1515" y="486" width="7" height="7" fill="#6803ff"/>
<rect x="1522" y="486" width="7" height="7" fill="#7001ff"/>
<rect x="1529" y="486" width="7" height="7" fill="#7800ff"/>
<rect x="1536" y="486" width="7" height="7" fill="#8100ff"/>
<rect x="1543" y="486" width="7" height="7" fill="#8900ff"/>
<rect x="1410" y="493" width="7" height="7" fill="#0022ff"/>
<rect x="1417" y="493" width="7" height="7" fill="#0020ff"/>
<rect x="1424" y="493" width="7" height="7" fill="#001eff"/>
<rect x="1431" y="493" width="7" height="7" fill="#071cff"/>
<rect x="1438" y="493" width="7" height="7" fill="#0e19ff"/>
<rect x="1445" y="493" width="7" height="7" fill="#1617ff"/>
<rect x="1452" y="493" width="7" height="7" fill="#1d15ff"/>
<rect x="1459" y="493" width="7" height="7" fill="#2513ff"/>
<rect x="1466" y="493" width="7" height="7" fill="#2d11ff"/>
<rect x="1473" y="493" width="7" height="7" fill="#350fff"/>
<rect x="1480" y="493" width="7" height="7" fill="#3c0dff"/>
<rect x="1487" y="493" width="7" height="7" fill="#440aff"/>
<rect x="1494" y="493" width="7" height="7" fill="#4c08ff"/>
<rect x="1501" y="493" width="7" height="7" fill="#5406ff"/>
<rect x="1508" y="493" width="7" height="7" fill="#5c04ff"/>
<rect x="1515" y="493" width="7" height="7" fill="#6401ff"/>
<rect x="1522" y="493" width="7" height="7" fill="#6c00ff"/>
<rect x="1529" y="493" width="7" height="7" fill="#7400ff"/>
<rect x="1536" y="493" width="7" height="7" fill="#7d00ff"/>
<rect x="1410" y="500" width="7" height="7" fill="#001fff"/>
<rect x="1417" y="500" width="7" height="7" fill="#001dff"/>
<rect x="1424" y="500" width="7" height="7" fill="#001bff"/>
<rect x="1431" y="500" width="7" height="7" fill="#0519ff"/>
<rect x="1438" y="500" width="7" height="7" fill="#0d17ff"/>
<rect x="1445" y="500" width="7" height="7" fill="#1415ff"/>
<rect x="1452" y="500" width="7" height="7" fill="#1c13ff"/>
<rect x="1459" y="500" width="7" height="7" fill="#2311ff"/>
<rect x="1466" y="500" width="7" height="7" fill="#2b0fff"/>
<rect x="1473" y="500" width="7" height="7" fill="#320dff"/>
<rect x="1480" y="500" width="7" height="7" fill="#3a0aff"/>
<rect x="1487" y="500" width="7" height="7" fill="#4208ff"/>
<rect x="1494" y="500" width="7" height="7" fill="#4a06ff"/>
<rect x="1501" y="500" width="7" height="7" fill="#5104ff"/>
<rect x="1508" y="500" width="7" height="7" fill="#5902ff"/>
<rect x="1515" y="500" width="7" height="7" fill="#6100ff"/>
<rect x="1522" y="500" width="7" height="7" fill="#6900ff"/>
<rect x="1529" y="500" width="7" height="7" fill="#7100ff"/>
<rect x="1536" y="500" width="7" height="7" fill="#7900ff"/>
<rect x="1410" y="507" width="7" height="7" fill="#001dff"/>
<rect x="1417" y="507" width="7" height="7" fill="#001bff"/>
<rect x="1424" y="507" width="7" height="7" fill="#0019ff"/>
<rect x="1431" y="507" width="7" height="7" fill="#0417ff"/>
<rect x="1438" y="507" width="7" height="7" fill="#0c15ff"/>
<rect x="1445" y="507" width="7" height="7" fill="#1313ff"/>
<rect x="1452" y="507" width="7" height="7" fill="#1a11ff"/>
<rect x="1459" y="507" width="7" height="7" fill="#220fff"/>
<rect x="1466" y="507" width="7" height="7" fill="#290dff"/>
<rect x="1473" y="507" width="7" height="7" fill="#300bff"/>
<rect x="1480" y="507" width="7" height="7" fill="#3809ff"/>
<rect x="1487" y="507" width="7" height="7" fill="#3f06ff"/>
<rect x="1494" y="507" width="7" height="7" fill="#4704ff"/>
<rect x="1501" y="507" width="7" height="7" fill="#4e02ff"/>
<rect x="1508" y="507" width="7" height="7" fill="#5600ff"/>
<rect x="1515" y="507" width="7" height="7" fill="#5e00ff"/>
<rect x="1522" y="507" width="7" height="7" fill="#6500ff"/>
<rect x="1529" y="507" width="7" height="7" fill="#6d00ff"/>
<rect x="1410" y="514" width="7" height="7" fill="#001bff"/>
<rect x="1417" y="514" width="7" height="7" fill="#0019ff"/>
<rect x="1424" y="514" width="7" height="7" fill="#0017ff"/>
<rect x="1431" y="514" width="7" height="7" fill="#0315ff"/>
<rect x="1438" y="514" width="7" height="7" fill="#0a13ff"/>
<rect x="1445" y="514" width="7" height="7" fill="#1211ff"/>
<rect x="1452" y="514" width="7" height="7" fill="#190fff"/>
<rect x="1459" y="514" width="7" height="7" fill="#200dff"/>
<rect x="1466" y="514" width="7" height="7" fill="#270bff"/>
<rect x="1473" y="514" width="7" height="7" fill="#2e09ff"/>
<rect x="1480" y="514" width="7" height="7" fill="#3607ff"/>
<rect x="1487" y="514" width="7" height="7" fill="#3d05ff"/>
<rect x="1494" y="514" width="7" height="7" fill="#4403ff"/>
<rect x="1501" y="514" width="7" height="7" fill="#4c00ff"/>
<rect x="1508" y="514" width="7" height="7" fill="#5300ff"/>
<rect x="1515" y="514" width="7" height="7" fill="#5b00ff"/>
<rect x="1522" y="514" width="7" height="7" fill="#6200ff"/>
<rect x="1417" y="521" width="7" height="7" fill="#0017ff"/>
<rect x="1424" y="521" width="7" height="7" fill="#0015ff"/>
<rect x="1431" y="521" width="7" height="7" fill="#0213ff"/>
<rect x="1438" y="521" width="7" height="7" fill="#0911ff"/>
<rect x="1445" y="521" width="7" height="7" fill="#100fff"/>
<rect x="1452" y="521" width="7" height="7" fill="#170dff"/>
<rect x="1459" y="521" width="7" height="7" fill="#1e0bff"/>
<rect x="1466" y="521" width="7" height="7" fill="#2509ff"/>
<rect x="1473" y="521" width="7" height="7" fill="#2c07ff"/>
<rect x="1480" y="521" width="7" height="7" fill="#3405ff"/>
<rect x="1487" y="521" width="7" height="7" fill="#3b03ff"/>
<rect x="1494" y="521" width="7" height="7" fill="#4201ff"/>
<rect x="1501" y="521" width="7" height="7" fill="#4900ff"/>
<rect x="1508" y="521" width="7" height="7" fill="#5100ff"/>
<rect x="1515" y="521" width="7" height="7" fill="#5800ff"/>
<rect x="1417" y="528" width="7" height="7" fill="#0015ff"/>
<rect x="1424" y="528" width="7" height="7" fill="#0013ff"/>
<rect x="1431" y="528" width="7" height="7" fill="#0111ff"/>
<rect x="1438" y="528" width="7" height="7" fill="#080fff"/>
<rect x="1445" y="528" width="7" height="7" fill="#0f0dff"/>
<rect x="1452" y="528" width="7" height="7" fill="#160bff"/>
<rect x="1459" y="528" width="7" height="7" fill="#1d09ff"/>
<rect x="1466" y="528" width="7" height="7" fill="#2407ff"/>
<rect x="1473" y="528" width="7" height="7" fill="#2b05ff"/>
<rect x="1480" y="528" width="7" height="7" fill="#3203ff"/>
<rect x="1487" y="528" width="7" height="7" fill="#3901ff"/>
<rect x="1494" y="528" width="7" height="7" fill="#4000ff"/>
<rect x="1501" y="528" width="7" height="7" fill="#4700ff"/>
<rect x="1508" y="528" width="7" height="7" fill="#4e00ff"/>
<rect x="1417" y="535" width="7" height="7" fill="#0013ff"/>
<rect x="1424" y="535" width="7" height="7" fill="#0011ff"/>
<rect x="1431" y="535" width="7" height="7" fill="#000fff"/>
<rect x="1438" y="535" width="7" height="7" fill="#070dff"/>
<rect x="1445" y="535" width="7" height="7" fill="#0e0bff"/>
<rect x="1452" y="535" width="7" height="7" fill="#1409ff"/>
<rect x="1459" y="535" width="7" height="7" fill="#1b07ff"/>
<rect x="1466" y="535" width="7" height="7" fill="#2205ff"/>
<rect x="1473" y="535" width="7" height="7" fill="#2903ff"/>
<rect x="1480" y="535" width="7" height="7" fill="#3002ff"/>
<rect x="1487" y="535" width="7" height="7" fill="#3700ff"/>
<rect x="1494" y="535" width="7" height="7" fill="#3d00ff"/>
<rect x="1501" y="535" width="7" height="7" fill="#4400ff"/>
<rect x="1508" y="535" width="7" height="7" fill="#4b00ff"/>
<rect x="1417" y="542" width="7" height="7" fill="#0011ff"/>
<rect x="1424" y="542" width="7" height="7" fill="#000fff"/>
<rect x="1431" y="542" width="7" height="7" fill="#000dff"/>
<rect x="1438" y="542" width="7" height="7" fill="#060bff"/>
<rect x="1445" y="542" width="7" height="7" fill="#0d09ff"/>
<rect x="1452" y="542" width="7" height="7" fill="#1308ff"/>
<rect x="1459" y="542" width="7" height="7" fill="#1a06ff"/>
<rect x="1466" y="542" width="7" height="7" fill="#2004ff"/>
<rect x="1473" y="542" width="7" height="7" fill="#2702ff"/>
<rect x="1480" y="542" width="7" height="7" fill="#2e00ff"/>
<rect x="1487" y="542" width="7" height="7" fill="#3500ff"/>
<rect x="1494" y="542" width="7" height="7" fill="#3b00ff"/>
<rect x="1501" y="542" width="7" height="7" fill="#4200ff"/>
<rect x="1417" y="549" width="7" height="7" fill="#000fff"/>
<rect x="1424" y="549" width="7" height="7" fill="#000dff"/>
<rect x="1431" y="549" width="7" height="7" fill="#000bff"/>
<rect x="1438" y="549" width="7" height="7" fill="#050aff"/>
<rect x="1445" y="549" width="7" height="7" fill="#0c08ff"/>
<rect x="1452" y="549" width="7" height="7" fill="#1206ff"/>
<rect x="1459" y="549" width="7" height="7" fill="#1804ff"/>
<rect x="1466" y="549" width="7" height="7" fill="#1f02ff"/>
<rect x="1473" y="549" width="7" height="7" fill="#2600ff"/>
<rect x="1480" y="549" width="7" height="7" fill="#2c00ff"/>
<rect x="1487" y="549" width="7" height="7" fill="#3300ff"/>
<rect x="1494" y="549" width="7" height="7" fill="#3900ff"/>
<rect x="1417" y="556" width="7" height="7" fill="#000dff"/>
<rect x="1424" y="556" width="7" height="7" fill="#000bff"/>
<rect x="1431" y="556" width="7" height="7" fill="#000aff"/>
<rect x="1438" y="556" width="7" height="7" fill="#0408ff"/>
<rect x="1445" y="556" width="7" height="7" fill="#0a06ff"/>
<rect x="1452" y="556" width="7" height="7" fill="#1104ff"/>
<rect x="1459" y="556" width="7" height="7" fill="#1702ff"/>
<rect x="1466" y="556" width="7" height="7" fill="#1e01ff"/>
<rect x="1473" y="556" width="7" height="7" fill="#2400ff"/>
<rect x="1480" y="556" width="7" height="7" fill="#2a00ff"/>
<rect x="1487" y="556" width="7" height="7" fill="#3100ff"/>
<rect x="1417" y="563" width="7" height="7" fill="#000cff"/>
<rect x="1424" y="563" width="7" height="7" fill="#000aff"/>
<rect x="1431" y="563" width="7" height="7" fill="#0008ff"/>
<rect x="1438" y="563" width="7" height="7" fill="#0306ff"/>
<rect x="1445" y="563" width="7" height="7" fill="#0905ff"/>
<rect x="1452" y="563" width="7" height="7" fill="#1003ff"/>
<rect x="1459" y="563" width="7" height="7" fill="#1601ff"/>
<rect x="1466" y="563" width="7" height="7" fill="#1c00ff"/>
<rect x="1473" y="563" width="7" height="7" fill="#2200ff"/>
<rect x="1480" y="563" width="7" height="7" fill="#2900ff"/>
<rect x="1417" y="570" width="7" height="7" fill="#000aff"/>
<rect x="1424" y="570" width="7" height="7" fill="#0008ff"/>
<rect x="1431" y="570" width="7" height="7" fill="#0007ff"/>
<rect x="1438" y="570" width="7" height="7" fill="#0205ff"/>
<rect x="1445" y="570" width="7" height="7" fill="#0803ff"/>
<rect x="1452" y="570" width="7" height="7" fill="#0f01ff"/>
<rect x="1459" y="570" width="7" height="7" fill="#1500ff"/>
<rect x="1466" y="570" width="7" height="7" fill="#1b00ff"/>
<rect x="1473" y="570" width="7" height="7" fill="#2100ff"/>
<rect x="1480" y="570" width="7" height="7" fill="#2700ff"/>
<rect x="1424" y="577" width="7" height="7" fill="#0007ff"/>
<rect x="1431" y="577" width="7" height="7" fill="#0005ff"/>
<rect x="1438" y="577" width="7" height="7" fill="#0203ff"/>
<rect x="1445" y="577" width="7" height="7" fill="#0802ff"/>
<rect x="1452" y="577" width="7" height="7" fill="#0d00ff"/>
<rect x="1459" y="577" width="7" height="7" fill="#1300ff"/>
<rect x="1466" y="577" width="7" height="7" fill="#1a00ff"/>
<rect x="1473" y="577" width="7" height="7" fill="#2000ff"/>
<rect x="1424" y="584" width="7" height="7" fill="#0005ff"/>
<rect x="1431" y="584" width="7" height="7" fill="#0004ff"/>
<rect x="1438" y="584" width="7" height="7" fill="#0102ff"/>
<rect x="1445" y="584" width="7" height="7" fill="#0700ff"/>
<rect x="1452" y="584" width="7" height="7" fill="#0c00ff"/>
<rect x="1459" y="584" width="7" height="7" fill="#1200ff"/>
<rect x="1466" y="584" width="7" height="7" fill="#1800ff"/>
<rect x="1424" y="591" width="7" height="7" fill="#0004ff"/>
<rect x="1431" y="591" width="7" height="7" fill="#0002ff"/>
<rect x="1438" y="591" width="7" height="7" fill="#0001ff"/>
<rect x="1445" y="591" width="7" height="7" fill="#0600ff"/>
<rect x="1452" y="591" width="7" height="7" fill="#0b00ff"/>
<rect x="1459" y="591" width="7" height="7" fill="#1100ff"/>
<rect x="1424" y="598" width="7" height="7" fill="#0002ff"/>
<rect x="1431" y="598" width="7" height="7" fill="#0001ff"/>
<rect x="1438" y="598" width="7" height="7" fill="#0000ff"/>
<rect x="1445" y="598" width="7" height="7" fill="#0500ff"/>
<rect x="1452" y="598" width="7" height="7" fill="#0b00ff"/>
<rect x="1424" y="605" width="7" height="7" fill="#0001ff"/>
<rect x="1431" y="605" width="7" height="7" fill="#0000ff"/>
<rect x="1438" y="605" width="7" height="7" fill="#0000ff"/>
<rect x="1445" y="605" width="7" height="7" fill="#0400ff"/>
<rect x="1452" y="605" width="7" height="7" fill="#0a00ff"/>
<rect x="1424" y="612" width="7" height="7" fill="#0000ff"/>
<rect x="1431" y="612" width="7" height="7" fill="#0000ff"/>
<rect x="1438" y="612" width="7" height="7" fill="#0000ff"/>
<rect x="1445" y="612" width="7" height="7" fill="#0300ff"/>
<rect x="1424" y="619" width="7" height="7" fill="#0000ff"/>
<rect x="1431" y="619" width="7" height="7" fill="#0000ff"/>
<rect x="1438" y="619" width="7" height="7" fill="#0000ff"/>
<rect x="1431" y="626" width="7" height="7" fill="#0000ff"/>
</g></g></g>
<rect x="1249.5" y="143" width="658.5" height="615.2" fill="none" stroke="#8c8c8c" stroke-width="1.6"/>
<line x1="1249.5" y1="758.2" x2="1249.5" y2="765.2" stroke="#ddd" stroke-width="1.5"/>
<text x="1249.5" y="784.8" font-size="18.31" fill="#d8d8d8" textLength="8.5" lengthAdjust="spacingAndGlyphs" text-anchor="middle">0</text>
<line x1="1304.32" y1="758.2" x2="1304.32" y2="765.2" stroke="#ddd" stroke-width="1.5"/>
<text x="1304.3" y="784.8" font-size="18.31" fill="#d8d8d8" textLength="29.0" lengthAdjust="spacingAndGlyphs" text-anchor="middle">0.05</text>
<line x1="1359.14" y1="758.2" x2="1359.14" y2="765.2" stroke="#ddd" stroke-width="1.5"/>
<text x="1359.1" y="784.8" font-size="18.31" fill="#d8d8d8" textLength="20.5" lengthAdjust="spacingAndGlyphs" text-anchor="middle">0.1</text>
<line x1="1413.96" y1="758.2" x2="1413.96" y2="765.2" stroke="#ddd" stroke-width="1.5"/>
<text x="1414.0" y="784.8" font-size="18.31" fill="#d8d8d8" textLength="29.0" lengthAdjust="spacingAndGlyphs" text-anchor="middle">0.15</text>
<line x1="1468.78" y1="758.2" x2="1468.78" y2="765.2" stroke="#ddd" stroke-width="1.5"/>
<text x="1468.8" y="784.8" font-size="18.31" fill="#d8d8d8" textLength="20.5" lengthAdjust="spacingAndGlyphs" text-anchor="middle">0.2</text>
<line x1="1523.6" y1="758.2" x2="1523.6" y2="765.2" stroke="#ddd" stroke-width="1.5"/>
<text x="1523.6" y="784.8" font-size="18.31" fill="#d8d8d8" textLength="29.0" lengthAdjust="spacingAndGlyphs" text-anchor="middle">0.25</text>
<line x1="1578.42" y1="758.2" x2="1578.42" y2="765.2" stroke="#ddd" stroke-width="1.5"/>
<text x="1578.4" y="784.8" font-size="18.31" fill="#d8d8d8" textLength="20.5" lengthAdjust="spacingAndGlyphs" text-anchor="middle">0.3</text>
<line x1="1633.24" y1="758.2" x2="1633.24" y2="765.2" stroke="#ddd" stroke-width="1.5"/>
<text x="1633.2" y="784.8" font-size="18.31" fill="#d8d8d8" textLength="29.0" lengthAdjust="spacingAndGlyphs" text-anchor="middle">0.35</text>
<line x1="1688.06" y1="758.2" x2="1688.06" y2="765.2" stroke="#ddd" stroke-width="1.5"/>
<text x="1688.1" y="784.8" font-size="18.31" fill="#d8d8d8" textLength="20.5" lengthAdjust="spacingAndGlyphs" text-anchor="middle">0.4</text>
<line x1="1742.88" y1="758.2" x2="1742.88" y2="765.2" stroke="#ddd" stroke-width="1.5"/>
<text x="1742.9" y="784.8" font-size="18.31" fill="#d8d8d8" textLength="29.0" lengthAdjust="spacingAndGlyphs" text-anchor="middle">0.45</text>
<line x1="1797.7" y1="758.2" x2="1797.7" y2="765.2" stroke="#ddd" stroke-width="1.5"/>
<text x="1797.7" y="784.8" font-size="18.31" fill="#d8d8d8" textLength="20.5" lengthAdjust="spacingAndGlyphs" text-anchor="middle">0.5</text>
<line x1="1852.52" y1="758.2" x2="1852.52" y2="765.2" stroke="#ddd" stroke-width="1.5"/>
<text x="1852.5" y="784.8" font-size="18.31" fill="#d8d8d8" textLength="29.0" lengthAdjust="spacingAndGlyphs" text-anchor="middle">0.55</text>
<line x1="1243" y1="758.3" x2="1249.5" y2="758.3" stroke="#ddd" stroke-width="1.8"/>
<text x="1243.0" y="764.8" font-size="18.60" fill="#d8d8d8" textLength="8.5" lengthAdjust="spacingAndGlyphs" text-anchor="end">0</text>
<line x1="1243" y1="707.18" x2="1249.5" y2="707.18" stroke="#ddd" stroke-width="1.8"/>
<text x="1243.0" y="713.7" font-size="18.60" fill="#d8d8d8" textLength="29.0" lengthAdjust="spacingAndGlyphs" text-anchor="end">0.05</text>
<line x1="1243" y1="656.06" x2="1249.5" y2="656.06" stroke="#ddd" stroke-width="1.8"/>
<text x="1243.0" y="662.6" font-size="18.60" fill="#d8d8d8" textLength="20.5" lengthAdjust="spacingAndGlyphs" text-anchor="end">0.1</text>
<line x1="1243" y1="604.9399999999999" x2="1249.5" y2="604.9399999999999" stroke="#ddd" stroke-width="1.8"/>
<text x="1243.0" y="611.4" font-size="18.60" fill="#d8d8d8" textLength="29.0" lengthAdjust="spacingAndGlyphs" text-anchor="end">0.15</text>
<line x1="1243" y1="553.8199999999999" x2="1249.5" y2="553.8199999999999" stroke="#ddd" stroke-width="1.8"/>
<text x="1243.0" y="560.3" font-size="18.60" fill="#d8d8d8" textLength="20.5" lengthAdjust="spacingAndGlyphs" text-anchor="end">0.2</text>
<line x1="1243" y1="502.69999999999993" x2="1249.5" y2="502.69999999999993" stroke="#ddd" stroke-width="1.8"/>
<text x="1243.0" y="509.2" font-size="18.60" fill="#d8d8d8" textLength="29.0" lengthAdjust="spacingAndGlyphs" text-anchor="end">0.25</text>
<line x1="1243" y1="451.5799999999999" x2="1249.5" y2="451.5799999999999" stroke="#ddd" stroke-width="1.8"/>
<text x="1243.0" y="458.1" font-size="18.60" fill="#d8d8d8" textLength="20.5" lengthAdjust="spacingAndGlyphs" text-anchor="end">0.3</text>
<line x1="1243" y1="400.4599999999999" x2="1249.5" y2="400.4599999999999" stroke="#ddd" stroke-width="1.8"/>
<text x="1243.0" y="407.0" font-size="18.60" fill="#d8d8d8" textLength="29.0" lengthAdjust="spacingAndGlyphs" text-anchor="end">0.35</text>
<line x1="1243" y1="349.3399999999999" x2="1249.5" y2="349.3399999999999" stroke="#ddd" stroke-width="1.8"/>
<text x="1243.0" y="355.8" font-size="18.60" fill="#d8d8d8" textLength="20.5" lengthAdjust="spacingAndGlyphs" text-anchor="end">0.4</text>
<line x1="1243" y1="298.21999999999997" x2="1249.5" y2="298.21999999999997" stroke="#ddd" stroke-width="1.8"/>
<text x="1243.0" y="304.7" font-size="18.60" fill="#d8d8d8" textLength="29.0" lengthAdjust="spacingAndGlyphs" text-anchor="end">0.45</text>
<line x1="1243" y1="247.09999999999997" x2="1249.5" y2="247.09999999999997" stroke="#ddd" stroke-width="1.8"/>
<text x="1243.0" y="253.6" font-size="18.60" fill="#d8d8d8" textLength="20.5" lengthAdjust="spacingAndGlyphs" text-anchor="end">0.5</text>
<line x1="1243" y1="195.9799999999999" x2="1249.5" y2="195.9799999999999" stroke="#ddd" stroke-width="1.8"/>
<text x="1243.0" y="202.5" font-size="18.60" fill="#d8d8d8" textLength="29.0" lengthAdjust="spacingAndGlyphs" text-anchor="end">0.55</text>
<rect x="1378.1" y="172.2" width="14.4" height="17.6" fill="none" stroke="#fff" stroke-width="1.7"/>
<rect x="1391.3" y="187.6" width="14.4" height="17.6" fill="none" stroke="#fff" stroke-width="1.7"/>
<rect x="1403.8" y="202.6" width="14.4" height="17.6" fill="none" stroke="#fff" stroke-width="1.7"/>
<rect x="1419.5" y="221.8" width="14.4" height="17.6" fill="none" stroke="#fff" stroke-width="1.7"/>
<rect x="1437.3" y="241.7" width="14.4" height="17.6" fill="none" stroke="#fff" stroke-width="1.7"/>
<rect x="1464.8" y="182.0" width="14.4" height="17.6" fill="none" stroke="#fff" stroke-width="1.7"/>
<rect x="1463.8" y="196.0" width="14.4" height="17.6" fill="none" stroke="#fff" stroke-width="1.7"/>
<rect x="1463.8" y="211.7" width="14.4" height="17.6" fill="none" stroke="#fff" stroke-width="1.7"/>
<rect x="1462.5" y="228.0" width="14.4" height="17.6" fill="none" stroke="#fff" stroke-width="1.7"/>
<rect x="1461.2" y="246.8" width="14.4" height="17.6" fill="none" stroke="#fff" stroke-width="1.7"/>
<rect x="1392.6" y="282.5" width="14.4" height="17.6" fill="none" stroke="#fff" stroke-width="1.7"/>
<rect x="1405.8" y="277.8" width="14.4" height="17.6" fill="none" stroke="#fff" stroke-width="1.7"/>
<rect x="1418.8" y="275.9" width="14.4" height="17.6" fill="none" stroke="#fff" stroke-width="1.7"/>
<rect x="1432.8" y="273.2" width="14.4" height="17.6" fill="none" stroke="#fff" stroke-width="1.7"/>
<rect x="1445.2" y="271.2" width="14.4" height="17.6" fill="none" stroke="#fff" stroke-width="1.7"/>
<rect x="1736.5" y="212.3" width="14.4" height="17.6" fill="none" stroke="#fff" stroke-width="1.7"/>
<rect x="1669.8" y="226.2" width="14.4" height="17.6" fill="none" stroke="#fff" stroke-width="1.7"/>
<rect x="1613.5" y="238.2" width="14.4" height="17.6" fill="none" stroke="#fff" stroke-width="1.7"/>
<rect x="1563.3" y="246.1" width="14.4" height="17.6" fill="none" stroke="#fff" stroke-width="1.7"/>
<rect x="1508.5" y="258.1" width="14.4" height="17.6" fill="none" stroke="#fff" stroke-width="1.7"/>
<rect x="1576.0" y="409.2" width="14.4" height="17.6" fill="none" stroke="#fff" stroke-width="1.7"/>
<rect x="1542.3" y="370.5" width="14.4" height="17.6" fill="none" stroke="#fff" stroke-width="1.7"/>
<rect x="1515.3" y="338.7" width="14.4" height="17.6" fill="none" stroke="#fff" stroke-width="1.7"/>
<rect x="1495.8" y="312.4" width="14.4" height="17.6" fill="none" stroke="#fff" stroke-width="1.7"/>
<rect x="1476.3" y="289.2" width="14.4" height="17.6" fill="none" stroke="#fff" stroke-width="1.7"/>
<rect x="1434.6" y="586.8" width="14.4" height="17.6" fill="none" stroke="#fff" stroke-width="1.7"/>
<rect x="1443.3" y="479.2" width="14.4" height="17.6" fill="none" stroke="#fff" stroke-width="1.7"/>
<rect x="1448.5" y="408.0" width="14.4" height="17.6" fill="none" stroke="#fff" stroke-width="1.7"/>
<rect x="1452.3" y="351.8" width="14.4" height="17.6" fill="none" stroke="#fff" stroke-width="1.7"/>
<rect x="1455.3" y="305.7" width="14.4" height="17.6" fill="none" stroke="#fff" stroke-width="1.7"/>
<ellipse cx="1393.8" cy="179.1" rx="4.6" ry="5.5" fill="#00b000" stroke="#000" stroke-width="1.2"/>
<ellipse cx="1404.0" cy="194.5" rx="4.6" ry="5.5" fill="#40b040" stroke="#000" stroke-width="1.2"/>
<ellipse cx="1414.8" cy="210.0" rx="4.6" ry="5.5" fill="#60b060" stroke="#000" stroke-width="1.2"/>
<ellipse cx="1428.9" cy="229.8" rx="4.6" ry="5.5" fill="#80b080" stroke="#000" stroke-width="1.2"/>
<ellipse cx="1445.8" cy="253.7" rx="4.6" ry="5.5" fill="#98b898" stroke="#000" stroke-width="1.2"/>
<ellipse cx="1469.7" cy="188.0" rx="4.6" ry="5.5" fill="#c8c000" stroke="#000" stroke-width="1.2"/>
<ellipse cx="1469.7" cy="204.8" rx="4.6" ry="5.5" fill="#c0b840" stroke="#000" stroke-width="1.2"/>
<ellipse cx="1468.4" cy="219.9" rx="4.6" ry="5.5" fill="#c0b860" stroke="#000" stroke-width="1.2"/>
<ellipse cx="1466.8" cy="236.8" rx="4.6" ry="5.5" fill="#c0b878" stroke="#000" stroke-width="1.2"/>
<ellipse cx="1466.8" cy="258.8" rx="4.6" ry="5.5" fill="#c0b898" stroke="#000" stroke-width="1.2"/>
<ellipse cx="1407.7" cy="296.0" rx="4.6" ry="5.5" fill="#00b0b0" stroke="#000" stroke-width="1.2"/>
<ellipse cx="1419.5" cy="294.5" rx="4.6" ry="5.5" fill="#40b0b0" stroke="#000" stroke-width="1.2"/>
<ellipse cx="1430.8" cy="290.4" rx="4.6" ry="5.5" fill="#70b0b0" stroke="#000" stroke-width="1.2"/>
<ellipse cx="1442.6" cy="287.6" rx="4.6" ry="5.5" fill="#88b0b0" stroke="#000" stroke-width="1.2"/>
<ellipse cx="1454.3" cy="285.1" rx="4.6" ry="5.5" fill="#98b0b0" stroke="#000" stroke-width="1.2"/>
<ellipse cx="1725.0" cy="220.0" rx="4.6" ry="5.5" fill="#b00000" stroke="#000" stroke-width="1.2"/>
<ellipse cx="1668.7" cy="233.9" rx="4.6" ry="5.5" fill="#b84040" stroke="#000" stroke-width="1.2"/>
<ellipse cx="1611.3" cy="248.9" rx="4.6" ry="5.5" fill="#b86060" stroke="#000" stroke-width="1.2"/>
<ellipse cx="1563.7" cy="258.6" rx="4.6" ry="5.5" fill="#b87070" stroke="#000" stroke-width="1.2"/>
<ellipse cx="1510.5" cy="270.6" rx="4.6" ry="5.5" fill="#b88888" stroke="#000" stroke-width="1.2"/>
<ellipse cx="1572.0" cy="438.6" rx="4.6" ry="5.5" fill="#b000b0" stroke="#000" stroke-width="1.2"/>
<ellipse cx="1542.3" cy="395.1" rx="4.6" ry="5.5" fill="#b858b8" stroke="#000" stroke-width="1.2"/>
<ellipse cx="1516.8" cy="358.7" rx="4.6" ry="5.5" fill="#c078c0" stroke="#000" stroke-width="1.2"/>
<ellipse cx="1498.8" cy="333.6" rx="4.6" ry="5.5" fill="#c090c0" stroke="#000" stroke-width="1.2"/>
<ellipse cx="1480.5" cy="307.0" rx="4.6" ry="5.5" fill="#b8a0b8" stroke="#000" stroke-width="1.2"/>
<ellipse cx="1448.6" cy="613.6" rx="4.6" ry="5.5" fill="#3030b0" stroke="#000" stroke-width="1.2"/>
<ellipse cx="1453.0" cy="511.7" rx="4.6" ry="5.5" fill="#6060b0" stroke="#000" stroke-width="1.2"/>
<ellipse cx="1458.7" cy="438.6" rx="4.6" ry="5.5" fill="#7878b0" stroke="#000" stroke-width="1.2"/>
<ellipse cx="1461.3" cy="374.5" rx="4.6" ry="5.5" fill="#8888b8" stroke="#000" stroke-width="1.2"/>
<ellipse cx="1464.0" cy="325.0" rx="4.6" ry="5.5" fill="#9898b8" stroke="#000" stroke-width="1.2"/>
<rect x="1458.2" y="268.2" width="14.4" height="17.6" fill="none" stroke="#000" stroke-width="2.2"/>
<ellipse cx="1466" cy="282.9" rx="4.6" ry="5.5" fill="#fff" stroke="#000" stroke-width="1.2"/>
<rect x="1681" y="565.2" width="224" height="185.2" fill="#2a2a2a"/>
<defs><clipPath id="insc"><rect x="1684" y="570" width="217" height="176"/></clipPath><clipPath id="insU"><path d="M1684 570H1901V728.5L1684 586.5z"/></clipPath><clipPath id="insL"><path d="M1684 586.5L1901 728.5V746H1684z"/></clipPath><filter id="bin" x="-10%" y="-10%" width="120%" height="120%"><feGaussianBlur stdDeviation="6"/></filter></defs>
<style>.cn rect{width:12px;height:12px}</style>
<g clip-path="url(#insc)"><g clip-path="url(#insU)"><g class="cn" filter="url(#bin)">
<rect x="1660" y="546" width="12" height="12" fill="#649900"/>
<rect x="1672" y="546" width="12" height="12" fill="#669900"/>
<rect x="1684" y="546" width="12" height="12" fill="#699900"/>
<rect x="1696" y="546" width="12" height="12" fill="#6c9900"/>
<rect x="1708" y="546" width="12" height="12" fill="#6f9900"/>
<rect x="1720" y="546" width="12" height="12" fill="#729900"/>
<rect x="1732" y="546" width="12" height="12" fill="#769900"/>
<rect x="1744" y="546" width="12" height="12" fill="#799900"/>
<rect x="1756" y="546" width="12" height="12" fill="#7c9900"/>
<rect x="1768" y="546" width="12" height="12" fill="#7f9900"/>
<rect x="1780" y="546" width="12" height="12" fill="#829900"/>
<rect x="1792" y="546" width="12" height="12" fill="#859900"/>
<rect x="1804" y="546" width="12" height="12" fill="#899900"/>
<rect x="1816" y="546" width="12" height="12" fill="#8c9900"/>
<rect x="1828" y="546" width="12" height="12" fill="#8f9900"/>
<rect x="1840" y="546" width="12" height="12" fill="#929900"/>
<rect x="1852" y="546" width="12" height="12" fill="#969900"/>
<rect x="1864" y="546" width="12" height="12" fill="#999900"/>
<rect x="1876" y="546" width="12" height="12" fill="#999500"/>
<rect x="1888" y="546" width="12" height="12" fill="#999200"/>
<rect x="1900" y="546" width="12" height="12" fill="#998f00"/>
<rect x="1912" y="546" width="12" height="12" fill="#998c00"/>
<rect x="1924" y="546" width="12" height="12" fill="#998900"/>
<rect x="1660" y="558" width="12" height="12" fill="#659900"/>
<rect x="1672" y="558" width="12" height="12" fill="#689900"/>
<rect x="1684" y="558" width="12" height="12" fill="#6b9900"/>
<rect x="1696" y="558" width="12" height="12" fill="#6e9900"/>
<rect x="1708" y="558" width="12" height="12" fill="#719900"/>
<rect x="1720" y="558" width="12" height="12" fill="#749900"/>
<rect x="1732" y="558" width="12" height="12" fill="#789900"/>
<rect x="1744" y="558" width="12" height="12" fill="#7b9900"/>
<rect x="1756" y="558" width="12" height="12" fill="#7e9900"/>
<rect x="1768" y="558" width="12" height="12" fill="#819900"/>
<rect x="1780" y="558" width="12" height="12" fill="#849900"/>
<rect x="1792" y="558" width="12" height="12" fill="#889900"/>
<rect x="1804" y="558" width="12" height="12" fill="#8b9900"/>
<rect x="1816" y="558" width="12" height="12" fill="#8e9900"/>
<rect x="1828" y="558" width="12" height="12" fill="#919900"/>
<rect x="1840" y="558" width="12" height="12" fill="#959900"/>
<rect x="1852" y="558" width="12" height="12" fill="#989900"/>
<rect x="1864" y="558" width="12" height="12" fill="#999600"/>
<rect x="1876" y="558" width="12" height="12" fill="#999300"/>
<rect x="1888" y="558" width="12" height="12" fill="#999000"/>
<rect x="1900" y="558" width="12" height="12" fill="#998d00"/>
<rect x="1912" y="558" width="12" height="12" fill="#998a00"/>
<rect x="1924" y="558" width="12" height="12" fill="#998700"/>
<rect x="1660" y="570" width="12" height="12" fill="#679900"/>
<rect x="1672" y="570" width="12" height="12" fill="#6a9900"/>
<rect x="1684" y="570" width="12" height="12" fill="#6d9900"/>
<rect x="1696" y="570" width="12" height="12" fill="#709900"/>
<rect x="1708" y="570" width="12" height="12" fill="#739900"/>
<rect x="1720" y="570" width="12" height="12" fill="#779900"/>
<rect x="1732" y="570" width="12" height="12" fill="#7a9900"/>
<rect x="1744" y="570" width="12" height="12" fill="#7d9900"/>
<rect x="1756" y="570" width="12" height="12" fill="#809900"/>
<rect x="1768" y="570" width="12" height="12" fill="#839900"/>
<rect x="1780" y="570" width="12" height="12" fill="#879900"/>
<rect x="1792" y="570" width="12" height="12" fill="#8a9900"/>
<rect x="1804" y="570" width="12" height="12" fill="#8d9900"/>
<rect x="1816" y="570" width="12" height="12" fill="#919900"/>
<rect x="1828" y="570" width="12" height="12" fill="#949900"/>
<rect x="1840" y="570" width="12" height="12" fill="#979900"/>
<rect x="1852" y="570" width="12" height="12" fill="#999700"/>
<rect x="1864" y="570" width="12" height="12" fill="#999400"/>
<rect x="1876" y="570" width="12" height="12" fill="#999100"/>
<rect x="1888" y="570" width="12" height="12" fill="#998e00"/>
<rect x="1900" y="570" width="12" height="12" fill="#998b00"/>
<rect x="1912" y="570" width="12" height="12" fill="#998800"/>
<rect x="1924" y="570" width="12" height="12" fill="#998500"/>
<rect x="1660" y="582" width="12" height="12" fill="#699901"/>
<rect x="1672" y="582" width="12" height="12" fill="#6c9900"/>
<rect x="1684" y="582" width="12" height="12" fill="#6f9900"/>
<rect x="1696" y="582" width="12" height="12" fill="#729900"/>
<rect x="1708" y="582" width="12" height="12" fill="#759900"/>
<rect x="1720" y="582" width="12" height="12" fill="#799900"/>
<rect x="1732" y="582" width="12" height="12" fill="#7c9900"/>
<rect x="1744" y="582" width="12" height="12" fill="#7f9900"/>
<rect x="1756" y="582" width="12" height="12" fill="#829900"/>
<rect x="1768" y="582" width="12" height="12" fill="#869900"/>
<rect x="1780" y="582" width="12" height="12" fill="#899900"/>
<rect x="1792" y="582" width="12" height="12" fill="#8c9900"/>
<rect x="1804" y="582" width="12" height="12" fill="#909900"/>
<rect x="1816" y="582" width="12" height="12" fill="#939900"/>
<rect x="1828" y="582" width="12" height="12" fill="#969900"/>
<rect x="1840" y="582" width="12" height="12" fill="#999800"/>
<rect x="1852" y="582" width="12" height="12" fill="#999500"/>
<rect x="1864" y="582" width="12" height="12" fill="#999100"/>
<rect x="1876" y="582" width="12" height="12" fill="#998e00"/>
<rect x="1888" y="582" width="12" height="12" fill="#998b00"/>
<rect x="1900" y="582" width="12" height="12" fill="#998800"/>
<rect x="1912" y="582" width="12" height="12" fill="#998500"/>
<rect x="1924" y="582" width="12" height="12" fill="#998300"/>
<rect x="1660" y="594" width="12" height="12" fill="#6b9902"/>
<rect x="1672" y="594" width="12" height="12" fill="#6e9902"/>
<rect x="1684" y="594" width="12" height="12" fill="#719901"/>
<rect x="1696" y="594" width="12" height="12" fill="#749900"/>
<rect x="1708" y="594" width="12" height="12" fill="#789900"/>
<rect x="1720" y="594" width="12" height="12" fill="#7b9900"/>
<rect x="1732" y="594" width="12" height="12" fill="#7e9900"/>
<rect x="1744" y="594" width="12" height="12" fill="#819900"/>
<rect x="1756" y="594" width="12" height="12" fill="#859900"/>
<rect x="1768" y="594" width="12" height="12" fill="#889900"/>
<rect x="1780" y="594" width="12" height="12" fill="#8b9900"/>
<rect x="1792" y="594" width="12" height="12" fill="#8f9900"/>
<rect x="1804" y="594" width="12" height="12" fill="#929900"/>
<rect x="1816" y="594" width="12" height="12" fill="#959900"/>
<rect x="1828" y="594" width="12" height="12" fill="#999900"/>
<rect x="1840" y="594" width="12" height="12" fill="#999600"/>
<rect x="1852" y="594" width="12" height="12" fill="#999200"/>
<rect x="1864" y="594" width="12" height="12" fill="#998f00"/>
<rect x="1876" y="594" width="12" height="12" fill="#998c00"/>
<rect x="1888" y="594" width="12" height="12" fill="#998900"/>
<rect x="1900" y="594" width="12" height="12" fill="#998600"/>
<rect x="1912" y="594" width="12" height="12" fill="#998300"/>
<rect x="1924" y="594" width="12" height="12" fill="#998100"/>
<rect x="1660" y="606" width="12" height="12" fill="#6d9903"/>
<rect x="1672" y="606" width="12" height="12" fill="#709903"/>
<rect x="1684" y="606" width="12" height="12" fill="#739902"/>
<rect x="1696" y="606" width="12" height="12" fill="#769901"/>
<rect x="1708" y="606" width="12" height="12" fill="#7a9901"/>
<rect x="1720" y="606" width="12" height="12" fill="#7d9900"/>
<rect x="1732" y="606" width="12" height="12" fill="#809900"/>
<rect x="1744" y="606" width="12" height="12" fill="#849900"/>
<rect x="1756" y="606" width="12" height="12" fill="#879900"/>
<rect x="1768" y="606" width="12" height="12" fill="#8a9900"/>
<rect x="1780" y="606" width="12" height="12" fill="#8e9900"/>
<rect x="1792" y="606" width="12" height="12" fill="#919900"/>
<rect x="1804" y="606" width="12" height="12" fill="#959900"/>
<rect x="1816" y="606" width="12" height="12" fill="#989900"/>
<rect x="1828" y="606" width="12" height="12" fill="#999600"/>
<rect x="1840" y="606" width="12" height="12" fill="#999300"/>
<rect x="1852" y="606" width="12" height="12" fill="#999000"/>
<rect x="1864" y="606" width="12" height="12" fill="#998d00"/>
<rect x="1876" y="606" width="12" height="12" fill="#998a00"/>
<rect x="1888" y="606" width="12" height="12" fill="#998700"/>
<rect x="1900" y="606" width="12" height="12" fill="#998400"/>
<rect x="1912" y="606" width="12" height="12" fill="#998100"/>
<rect x="1924" y="606" width="12" height="12" fill="#997e00"/>
<rect x="1660" y="618" width="12" height="12" fill="#6f9904"/>
<rect x="1672" y="618" width="12" height="12" fill="#729904"/>
<rect x="1684" y="618" width="12" height="12" fill="#759903"/>
<rect x="1696" y="618" width="12" height="12" fill="#799902"/>
<rect x="1708" y="618" width="12" height="12" fill="#7c9902"/>
<rect x="1720" y="618" width="12" height="12" fill="#7f9901"/>
<rect x="1732" y="618" width="12" height="12" fill="#829900"/>
<rect x="1744" y="618" width="12" height="12" fill="#869900"/>
<rect x="1756" y="618" width="12" height="12" fill="#899900"/>
<rect x="1768" y="618" width="12" height="12" fill="#8d9900"/>
<rect x="1780" y="618" width="12" height="12" fill="#909900"/>
<rect x="1792" y="618" width="12" height="12" fill="#949900"/>
<rect x="1804" y="618" width="12" height="12" fill="#979900"/>
<rect x="1816" y="618" width="12" height="12" fill="#999700"/>
<rect x="1828" y="618" width="12" height="12" fill="#999400"/>
<rect x="1840" y="618" width="12" height="12" fill="#999100"/>
<rect x="1852" y="618" width="12" height="12" fill="#998d00"/>
<rect x="1864" y="618" width="12" height="12" fill="#998a00"/>
<rect x="1876" y="618" width="12" height="12" fill="#998700"/>
<rect x="1888" y="618" width="12" height="12" fill="#998400"/>
<rect x="1900" y="618" width="12" height="12" fill="#998200"/>
<rect x="1912" y="618" width="12" height="12" fill="#997f00"/>
<rect x="1924" y="618" width="12" height="12" fill="#997c00"/>
<rect x="1660" y="630" width="12" height="12" fill="#719906"/>
<rect x="1672" y="630" width="12" height="12" fill="#749905"/>
<rect x="1684" y="630" width="12" height="12" fill="#789904"/>
<rect x="1696" y="630" width="12" height="12" fill="#7b9903"/>
<rect x="1708" y="630" width="12" height="12" fill="#7e9903"/>
<rect x="1720" y="630" width="12" height="12" fill="#819902"/>
<rect x="1732" y="630" width="12" height="12" fill="#859901"/>
<rect x="1744" y="630" width="12" height="12" fill="#889901"/>
<rect x="1756" y="630" width="12" height="12" fill="#8c9900"/>
<rect x="1768" y="630" width="12" height="12" fill="#8f9900"/>
<rect x="1780" y="630" width="12" height="12" fill="#939900"/>
<rect x="1792" y="630" width="12" height="12" fill="#969900"/>
<rect x="1804" y="630" width="12" height="12" fill="#999800"/>
<rect x="1816" y="630" width="12" height="12" fill="#999500"/>
<rect x="1828" y="630" width="12" height="12" fill="#999100"/>
<rect x="1840" y="630" width="12" height="12" fill="#998e00"/>
<rect x="1852" y="630" width="12" height="12" fill="#998b00"/>
<rect x="1864" y="630" width="12" height="12" fill="#998800"/>
<rect x="1876" y="630" width="12" height="12" fill="#998500"/>
<rect x="1888" y="630" width="12" height="12" fill="#998200"/>
<rect x="1900" y="630" width="12" height="12" fill="#998000"/>
<rect x="1912" y="630" width="12" height="12" fill="#997d00"/>
<rect x="1924" y="630" width="12" height="12" fill="#997a00"/>
<rect x="1660" y="642" width="12" height="12" fill="#739907"/>
<rect x="1672" y="642" width="12" height="12" fill="#769906"/>
<rect x="1684" y="642" width="12" height="12" fill="#7a9905"/>
<rect x="1696" y="642" width="12" height="12" fill="#7d9905"/>
<rect x="1708" y="642" width="12" height="12" fill="#809904"/>
<rect x="1720" y="642" width="12" height="12" fill="#849903"/>
<rect x="1732" y="642" width="12" height="12" fill="#879902"/>
<rect x="1744" y="642" width="12" height="12" fill="#8b9902"/>
<rect x="1756" y="642" width="12" height="12" fill="#8e9901"/>
<rect x="1768" y="642" width="12" height="12" fill="#929900"/>
<rect x="1780" y="642" width="12" height="12" fill="#959900"/>
<rect x="1792" y="642" width="12" height="12" fill="#999900"/>
<rect x="1804" y="642" width="12" height="12" fill="#999600"/>
<rect x="1816" y="642" width="12" height="12" fill="#999200"/>
<rect x="1828" y="642" width="12" height="12" fill="#998f00"/>
<rect x="1840" y="642" width="12" height="12" fill="#998c00"/>
<rect x="1852" y="642" width="12" height="12" fill="#998900"/>
<rect x="1864" y="642" width="12" height="12" fill="#998600"/>
<rect x="1876" y="642" width="12" height="12" fill="#998300"/>
<rect x="1888" y="642" width="12" height="12" fill="#998000"/>
<rect x="1900" y="642" width="12" height="12" fill="#997d00"/>
<rect x="1912" y="642" width="12" height="12" fill="#997b00"/>
<rect x="1924" y="642" width="12" height="12" fill="#997800"/>
<rect x="1660" y="654" width="12" height="12" fill="#759908"/>
<rect x="1672" y="654" width="12" height="12" fill="#799907"/>
<rect x="1684" y="654" width="12" height="12" fill="#7c9907"/>
<rect x="1696" y="654" width="12" height="12" fill="#7f9906"/>
<rect x="1708" y="654" width="12" height="12" fill="#839905"/>
<rect x="1720" y="654" width="12" height="12" fill="#869904"/>
<rect x="1732" y="654" width="12" height="12" fill="#8a9904"/>
<rect x="1744" y="654" width="12" height="12" fill="#8d9903"/>
<rect x="1756" y="654" width="12" height="12" fill="#919902"/>
<rect x="1768" y="654" width="12" height="12" fill="#949901"/>
<rect x="1780" y="654" width="12" height="12" fill="#989901"/>
<rect x="1792" y="654" width="12" height="12" fill="#999700"/>
<rect x="1804" y="654" width="12" height="12" fill="#999300"/>
<rect x="1816" y="654" width="12" height="12" fill="#999000"/>
<rect x="1828" y="654" width="12" height="12" fill="#998d00"/>
<rect x="1840" y="654" width="12" height="12" fill="#998900"/>
<rect x="1852" y="654" width="12" height="12" fill="#998600"/>
<rect x="1864" y="654" width="12" height="12" fill="#998300"/>
<rect x="1876" y="654" width="12" height="12" fill="#998100"/>
<rect x="1888" y="654" width="12" height="12" fill="#997e00"/>
<rect x="1900" y="654" width="12" height="12" fill="#997b00"/>
<rect x="1912" y="654" width="12" height="12" fill="#997900"/>
<rect x="1924" y="654" width="12" height="12" fill="#997600"/>
<rect x="1660" y="666" width="12" height="12" fill="#779909"/>
<rect x="1672" y="666" width="12" height="12" fill="#7b9908"/>
<rect x="1684" y="666" width="12" height="12" fill="#7e9908"/>
<rect x="1696" y="666" width="12" height="12" fill="#829907"/>
<rect x="1708" y="666" width="12" height="12" fill="#859906"/>
<rect x="1720" y="666" width="12" height="12" fill="#899906"/>
<rect x="1732" y="666" width="12" height="12" fill="#8c9905"/>
<rect x="1744" y="666" width="12" height="12" fill="#909904"/>
<rect x="1756" y="666" width="12" height="12" fill="#939903"/>
<rect x="1768" y="666" width="12" height="12" fill="#979903"/>
<rect x="1780" y="666" width="12" height="12" fill="#999802"/>
<rect x="1792" y="666" width="12" height="12" fill="#999401"/>
<rect x="1804" y="666" width="12" height="12" fill="#999100"/>
<rect x="1816" y="666" width="12" height="12" fill="#998d00"/>
<rect x="1828" y="666" width="12" height="12" fill="#998a00"/>
<rect x="1840" y="666" width="12" height="12" fill="#998700"/>
<rect x="1852" y="666" width="12" height="12" fill="#998400"/>
<rect x="1864" y="666" width="12" height="12" fill="#998100"/>
<rect x="1876" y="666" width="12" height="12" fill="#997e00"/>
<rect x="1888" y="666" width="12" height="12" fill="#997c00"/>
<rect x="1900" y="666" width="12" height="12" fill="#997900"/>
<rect x="1912" y="666" width="12" height="12" fill="#997700"/>
<rect x="1924" y="666" width="12" height="12" fill="#997400"/>
<rect x="1660" y="678" width="12" height="12" fill="#7a990a"/>
<rect x="1672" y="678" width="12" height="12" fill="#7d990a"/>
<rect x="1684" y="678" width="12" height="12" fill="#819909"/>
<rect x="1696" y="678" width="12" height="12" fill="#849908"/>
<rect x="1708" y="678" width="12" height="12" fill="#879908"/>
<rect x="1720" y="678" width="12" height="12" fill="#8b9907"/>
<rect x="1732" y="678" width="12" height="12" fill="#8f9906"/>
<rect x="1744" y="678" width="12" height="12" fill="#929905"/>
<rect x="1756" y="678" width="12" height="12" fill="#969905"/>
<rect x="1768" y="678" width="12" height="12" fill="#999904"/>
<rect x="1780" y="678" width="12" height="12" fill="#999503"/>
<rect x="1792" y="678" width="12" height="12" fill="#999102"/>
<rect x="1804" y="678" width="12" height="12" fill="#998e01"/>
<rect x="1816" y="678" width="12" height="12" fill="#998b01"/>
<rect x="1828" y="678" width="12" height="12" fill="#998800"/>
<rect x="1840" y="678" width="12" height="12" fill="#998500"/>
<rect x="1852" y="678" width="12" height="12" fill="#998200"/>
<rect x="1864" y="678" width="12" height="12" fill="#997f00"/>
<rect x="1876" y="678" width="12" height="12" fill="#997c00"/>
<rect x="1888" y="678" width="12" height="12" fill="#997a00"/>
<rect x="1900" y="678" width="12" height="12" fill="#997700"/>
<rect x="1912" y="678" width="12" height="12" fill="#997500"/>
<rect x="1924" y="678" width="12" height="12" fill="#997200"/>
<rect x="1660" y="690" width="12" height="12" fill="#7c990c"/>
<rect x="1672" y="690" width="12" height="12" fill="#7f990b"/>
<rect x="1684" y="690" width="12" height="12" fill="#83990a"/>
<rect x="1696" y="690" width="12" height="12" fill="#86990a"/>
<rect x="1708" y="690" width="12" height="12" fill="#8a9909"/>
<rect x="1720" y="690" width="12" height="12" fill="#8e9908"/>
<rect x="1732" y="690" width="12" height="12" fill="#919907"/>
<rect x="1744" y="690" width="12" height="12" fill="#959907"/>
<rect x="1756" y="690" width="12" height="12" fill="#999906"/>
<rect x="1768" y="690" width="12" height="12" fill="#999605"/>
<rect x="1780" y="690" width="12" height="12" fill="#999204"/>
<rect x="1792" y="690" width="12" height="12" fill="#998f03"/>
<rect x="1804" y="690" width="12" height="12" fill="#998c03"/>
<rect x="1816" y="690" width="12" height="12" fill="#998802"/>
<rect x="1828" y="690" width="12" height="12" fill="#998501"/>
<rect x="1840" y="690" width="12" height="12" fill="#998200"/>
<rect x="1852" y="690" width="12" height="12" fill="#998000"/>
<rect x="1864" y="690" width="12" height="12" fill="#997d00"/>
<rect x="1876" y="690" width="12" height="12" fill="#997a00"/>
<rect x="1888" y="690" width="12" height="12" fill="#997800"/>
<rect x="1900" y="690" width="12" height="12" fill="#997500"/>
<rect x="1912" y="690" width="12" height="12" fill="#997300"/>
<rect x="1924" y="690" width="12" height="12" fill="#997000"/>
<rect x="1660" y="702" width="12" height="12" fill="#7e990d"/>
<rect x="1672" y="702" width="12" height="12" fill="#82990c"/>
<rect x="1684" y="702" width="12" height="12" fill="#85990c"/>
<rect x="1696" y="702" width="12" height="12" fill="#89990b"/>
<rect x="1708" y="702" width="12" height="12" fill="#8c990a"/>
<rect x="1720" y="702" width="12" height="12" fill="#909909"/>
<rect x="1732" y="702" width="12" height="12" fill="#949909"/>
<rect x="1744" y="702" width="12" height="12" fill="#989908"/>
<rect x="1756" y="702" width="12" height="12" fill="#999707"/>
<rect x="1768" y="702" width="12" height="12" fill="#999306"/>
<rect x="1780" y="702" width="12" height="12" fill="#999005"/>
<rect x="1792" y="702" width="12" height="12" fill="#998c04"/>
<rect x="1804" y="702" width="12" height="12" fill="#998904"/>
<rect x="1816" y="702" width="12" height="12" fill="#998603"/>
<rect x="1828" y="702" width="12" height="12" fill="#998302"/>
<rect x="1840" y="702" width="12" height="12" fill="#998001"/>
<rect x="1852" y="702" width="12" height="12" fill="#997d01"/>
<rect x="1864" y="702" width="12" height="12" fill="#997b00"/>
<rect x="1876" y="702" width="12" height="12" fill="#997800"/>
<rect x="1888" y="702" width="12" height="12" fill="#997500"/>
<rect x="1900" y="702" width="12" height="12" fill="#997300"/>
<rect x="1912" y="702" width="12" height="12" fill="#997100"/>
<rect x="1924" y="702" width="12" height="12" fill="#996e00"/>
<rect x="1660" y="714" width="12" height="12" fill="#81990e"/>
<rect x="1672" y="714" width="12" height="12" fill="#84990e"/>
<rect x="1684" y="714" width="12" height="12" fill="#88990d"/>
<rect x="1696" y="714" width="12" height="12" fill="#8b990c"/>
<rect x="1708" y="714" width="12" height="12" fill="#8f990b"/>
<rect x="1720" y="714" width="12" height="12" fill="#93990b"/>
<rect x="1732" y="714" width="12" height="12" fill="#96990a"/>
<rect x="1744" y="714" width="12" height="12" fill="#999809"/>
<rect x="1756" y="714" width="12" height="12" fill="#999408"/>
<rect x="1768" y="714" width="12" height="12" fill="#999107"/>
<rect x="1780" y="714" width="12" height="12" fill="#998d06"/>
<rect x="1792" y="714" width="12" height="12" fill="#998a06"/>
<rect x="1804" y="714" width="12" height="12" fill="#998705"/>
<rect x="1816" y="714" width="12" height="12" fill="#998404"/>
<rect x="1828" y="714" width="12" height="12" fill="#998103"/>
<rect x="1840" y="714" width="12" height="12" fill="#997e02"/>
<rect x="1852" y="714" width="12" height="12" fill="#997b02"/>
<rect x="1864" y="714" width="12" height="12" fill="#997901"/>
<rect x="1876" y="714" width="12" height="12" fill="#997600"/>
<rect x="1888" y="714" width="12" height="12" fill="#997300"/>
<rect x="1900" y="714" width="12" height="12" fill="#997100"/>
<rect x="1912" y="714" width="12" height="12" fill="#996f00"/>
<rect x="1924" y="714" width="12" height="12" fill="#996c00"/>
<rect x="1660" y="726" width="12" height="12" fill="#839910"/>
<rect x="1672" y="726" width="12" height="12" fill="#87990f"/>
<rect x="1684" y="726" width="12" height="12" fill="#8a990e"/>
<rect x="1696" y="726" width="12" height="12" fill="#8e990d"/>
<rect x="1708" y="726" width="12" height="12" fill="#92990d"/>
<rect x="1720" y="726" width="12" height="12" fill="#95990c"/>
<rect x="1732" y="726" width="12" height="12" fill="#99990b"/>
<rect x="1744" y="726" width="12" height="12" fill="#99950a"/>
<rect x="1756" y="726" width="12" height="12" fill="#999109"/>
<rect x="1768" y="726" width="12" height="12" fill="#998e08"/>
<rect x="1780" y="726" width="12" height="12" fill="#998b07"/>
<rect x="1792" y="726" width="12" height="12" fill="#998707"/>
<rect x="1804" y="726" width="12" height="12" fill="#998406"/>
<rect x="1816" y="726" width="12" height="12" fill="#998105"/>
<rect x="1828" y="726" width="12" height="12" fill="#997e04"/>
<rect x="1840" y="726" width="12" height="12" fill="#997c03"/>
<rect x="1852" y="726" width="12" height="12" fill="#997903"/>
<rect x="1864" y="726" width="12" height="12" fill="#997602"/>
<rect x="1876" y="726" width="12" height="12" fill="#997401"/>
<rect x="1888" y="726" width="12" height="12" fill="#997101"/>
<rect x="1900" y="726" width="12" height="12" fill="#996f00"/>
<rect x="1912" y="726" width="12" height="12" fill="#996d00"/>
<rect x="1924" y="726" width="12" height="12" fill="#996b00"/>
<rect x="1660" y="738" width="12" height="12" fill="#869911"/>
<rect x="1672" y="738" width="12" height="12" fill="#899910"/>
<rect x="1684" y="738" width="12" height="12" fill="#8d9910"/>
<rect x="1696" y="738" width="12" height="12" fill="#91990f"/>
<rect x="1708" y="738" width="12" height="12" fill="#94990e"/>
<rect x="1720" y="738" width="12" height="12" fill="#98990d"/>
<rect x="1732" y="738" width="12" height="12" fill="#99960c"/>
<rect x="1744" y="738" width="12" height="12" fill="#99920b"/>
<rect x="1756" y="738" width="12" height="12" fill="#998f0a"/>
<rect x="1768" y="738" width="12" height="12" fill="#998b09"/>
<rect x="1780" y="738" width="12" height="12" fill="#998809"/>
<rect x="1792" y="738" width="12" height="12" fill="#998508"/>
<rect x="1804" y="738" width="12" height="12" fill="#998207"/>
<rect x="1816" y="738" width="12" height="12" fill="#997f06"/>
<rect x="1828" y="738" width="12" height="12" fill="#997c05"/>
<rect x="1840" y="738" width="12" height="12" fill="#997a04"/>
<rect x="1852" y="738" width="12" height="12" fill="#997704"/>
<rect x="1864" y="738" width="12" height="12" fill="#997403"/>
<rect x="1876" y="738" width="12" height="12" fill="#997202"/>
<rect x="1888" y="738" width="12" height="12" fill="#996f02"/>
<rect x="1900" y="738" width="12" height="12" fill="#996d01"/>
<rect x="1912" y="738" width="12" height="12" fill="#996b00"/>
<rect x="1924" y="738" width="12" height="12" fill="#996900"/>
<rect x="1660" y="750" width="12" height="12" fill="#889912"/>
<rect x="1672" y="750" width="12" height="12" fill="#8c9912"/>
<rect x="1684" y="750" width="12" height="12" fill="#909911"/>
<rect x="1696" y="750" width="12" height="12" fill="#939910"/>
<rect x="1708" y="750" width="12" height="12" fill="#979910"/>
<rect x="1720" y="750" width="12" height="12" fill="#99970f"/>
<rect x="1732" y="750" width="12" height="12" fill="#99930e"/>
<rect x="1744" y="750" width="12" height="12" fill="#99900c"/>
<rect x="1756" y="750" width="12" height="12" fill="#998c0b"/>
<rect x="1768" y="750" width="12" height="12" fill="#99890b"/>
<rect x="1780" y="750" width="12" height="12" fill="#99860a"/>
<rect x="1792" y="750" width="12" height="12" fill="#998309"/>
<rect x="1804" y="750" width="12" height="12" fill="#998008"/>
<rect x="1816" y="750" width="12" height="12" fill="#997d07"/>
<rect x="1828" y="750" width="12" height="12" fill="#997a06"/>
<rect x="1840" y="750" width="12" height="12" fill="#997705"/>
<rect x="1852" y="750" width="12" height="12" fill="#997505"/>
<rect x="1864" y="750" width="12" height="12" fill="#997204"/>
<rect x="1876" y="750" width="12" height="12" fill="#997003"/>
<rect x="1888" y="750" width="12" height="12" fill="#996d03"/>
<rect x="1900" y="750" width="12" height="12" fill="#996b02"/>
<rect x="1912" y="750" width="12" height="12" fill="#996901"/>
<rect x="1924" y="750" width="12" height="12" fill="#996701"/>
<rect x="1660" y="762" width="12" height="12" fill="#8b9914"/>
<rect x="1672" y="762" width="12" height="12" fill="#8f9913"/>
<rect x="1684" y="762" width="12" height="12" fill="#929912"/>
<rect x="1696" y="762" width="12" height="12" fill="#969912"/>
<rect x="1708" y="762" width="12" height="12" fill="#999811"/>
<rect x="1720" y="762" width="12" height="12" fill="#999410"/>
<rect x="1732" y="762" width="12" height="12" fill="#99910f"/>
<rect x="1744" y="762" width="12" height="12" fill="#998d0e"/>
<rect x="1756" y="762" width="12" height="12" fill="#998a0d"/>
<rect x="1768" y="762" width="12" height="12" fill="#99860c"/>
<rect x="1780" y="762" width="12" height="12" fill="#99830b"/>
<rect x="1792" y="762" width="12" height="12" fill="#99800a"/>
<rect x="1804" y="762" width="12" height="12" fill="#997d09"/>
<rect x="1816" y="762" width="12" height="12" fill="#997b08"/>
<rect x="1828" y="762" width="12" height="12" fill="#997807"/>
<rect x="1840" y="762" width="12" height="12" fill="#997506"/>
<rect x="1852" y="762" width="12" height="12" fill="#997306"/>
<rect x="1864" y="762" width="12" height="12" fill="#997005"/>
<rect x="1876" y="762" width="12" height="12" fill="#996e04"/>
<rect x="1888" y="762" width="12" height="12" fill="#996b04"/>
<rect x="1900" y="762" width="12" height="12" fill="#996903"/>
<rect x="1912" y="762" width="12" height="12" fill="#996702"/>
<rect x="1924" y="762" width="12" height="12" fill="#996502"/>
</g></g></g>
<g clip-path="url(#insc)"><g clip-path="url(#insL)"><g class="cn" filter="url(#bin)">
<rect x="1660" y="546" width="12" height="12" fill="#a6ff00"/>
<rect x="1672" y="546" width="12" height="12" fill="#abff00"/>
<rect x="1684" y="546" width="12" height="12" fill="#b0ff00"/>
<rect x="1696" y="546" width="12" height="12" fill="#b5ff00"/>
<rect x="1708" y="546" width="12" height="12" fill="#baff00"/>
<rect x="1720" y="546" width="12" height="12" fill="#bfff00"/>
<rect x="1732" y="546" width="12" height="12" fill="#c4ff00"/>
<rect x="1744" y="546" width="12" height="12" fill="#c9ff00"/>
<rect x="1756" y="546" width="12" height="12" fill="#ceff00"/>
<rect x="1768" y="546" width="12" height="12" fill="#d4ff00"/>
<rect x="1780" y="546" width="12" height="12" fill="#d9ff00"/>
<rect x="1792" y="546" width="12" height="12" fill="#deff00"/>
<rect x="1804" y="546" width="12" height="12" fill="#e4ff00"/>
<rect x="1816" y="546" width="12" height="12" fill="#e9ff00"/>
<rect x="1828" y="546" width="12" height="12" fill="#efff00"/>
<rect x="1840" y="546" width="12" height="12" fill="#f4ff00"/>
<rect x="1852" y="546" width="12" height="12" fill="#faff00"/>
<rect x="1864" y="546" width="12" height="12" fill="#ffff00"/>
<rect x="1876" y="546" width="12" height="12" fill="#fff900"/>
<rect x="1888" y="546" width="12" height="12" fill="#fff400"/>
<rect x="1900" y="546" width="12" height="12" fill="#ffef00"/>
<rect x="1912" y="546" width="12" height="12" fill="#ffea00"/>
<rect x="1924" y="546" width="12" height="12" fill="#ffe500"/>
<rect x="1660" y="558" width="12" height="12" fill="#a9ff00"/>
<rect x="1672" y="558" width="12" height="12" fill="#aeff00"/>
<rect x="1684" y="558" width="12" height="12" fill="#b3ff00"/>
<rect x="1696" y="558" width="12" height="12" fill="#b8ff00"/>
<rect x="1708" y="558" width="12" height="12" fill="#bdff00"/>
<rect x="1720" y="558" width="12" height="12" fill="#c2ff00"/>
<rect x="1732" y="558" width="12" height="12" fill="#c7ff00"/>
<rect x="1744" y="558" width="12" height="12" fill="#cdff00"/>
<rect x="1756" y="558" width="12" height="12" fill="#d2ff00"/>
<rect x="1768" y="558" width="12" height="12" fill="#d7ff00"/>
<rect x="1780" y="558" width="12" height="12" fill="#ddff00"/>
<rect x="1792" y="558" width="12" height="12" fill="#e2ff00"/>
<rect x="1804" y="558" width="12" height="12" fill="#e7ff00"/>
<rect x="1816" y="558" width="12" height="12" fill="#edff00"/>
<rect x="1828" y="558" width="12" height="12" fill="#f2ff00"/>
<rect x="1840" y="558" width="12" height="12" fill="#f8ff00"/>
<rect x="1852" y="558" width="12" height="12" fill="#feff00"/>
<rect x="1864" y="558" width="12" height="12" fill="#fffb00"/>
<rect x="1876" y="558" width="12" height="12" fill="#fff500"/>
<rect x="1888" y="558" width="12" height="12" fill="#fff000"/>
<rect x="1900" y="558" width="12" height="12" fill="#ffeb00"/>
<rect x="1912" y="558" width="12" height="12" fill="#ffe600"/>
<rect x="1924" y="558" width="12" height="12" fill="#ffe100"/>
<rect x="1660" y="570" width="12" height="12" fill="#acff00"/>
<rect x="1672" y="570" width="12" height="12" fill="#b1ff00"/>
<rect x="1684" y="570" width="12" height="12" fill="#b6ff00"/>
<rect x="1696" y="570" width="12" height="12" fill="#bbff00"/>
<rect x="1708" y="570" width="12" height="12" fill="#c0ff00"/>
<rect x="1720" y="570" width="12" height="12" fill="#c6ff00"/>
<rect x="1732" y="570" width="12" height="12" fill="#cbff00"/>
<rect x="1744" y="570" width="12" height="12" fill="#d0ff00"/>
<rect x="1756" y="570" width="12" height="12" fill="#d5ff00"/>
<rect x="1768" y="570" width="12" height="12" fill="#dbff00"/>
<rect x="1780" y="570" width="12" height="12" fill="#e0ff00"/>
<rect x="1792" y="570" width="12" height="12" fill="#e6ff00"/>
<rect x="1804" y="570" width="12" height="12" fill="#ebff00"/>
<rect x="1816" y="570" width="12" height="12" fill="#f1ff00"/>
<rect x="1828" y="570" width="12" height="12" fill="#f7ff00"/>
<rect x="1840" y="570" width="12" height="12" fill="#fcff00"/>
<rect x="1852" y="570" width="12" height="12" fill="#fffc00"/>
<rect x="1864" y="570" width="12" height="12" fill="#fff600"/>
<rect x="1876" y="570" width="12" height="12" fill="#fff100"/>
<rect x="1888" y="570" width="12" height="12" fill="#ffec00"/>
<rect x="1900" y="570" width="12" height="12" fill="#ffe700"/>
<rect x="1912" y="570" width="12" height="12" fill="#ffe200"/>
<rect x="1924" y="570" width="12" height="12" fill="#ffdd00"/>
<rect x="1660" y="582" width="12" height="12" fill="#afff02"/>
<rect x="1672" y="582" width="12" height="12" fill="#b4ff01"/>
<rect x="1684" y="582" width="12" height="12" fill="#b9ff00"/>
<rect x="1696" y="582" width="12" height="12" fill="#bfff00"/>
<rect x="1708" y="582" width="12" height="12" fill="#c4ff00"/>
<rect x="1720" y="582" width="12" height="12" fill="#c9ff00"/>
<rect x="1732" y="582" width="12" height="12" fill="#ceff00"/>
<rect x="1744" y="582" width="12" height="12" fill="#d4ff00"/>
<rect x="1756" y="582" width="12" height="12" fill="#d9ff00"/>
<rect x="1768" y="582" width="12" height="12" fill="#dfff00"/>
<rect x="1780" y="582" width="12" height="12" fill="#e4ff00"/>
<rect x="1792" y="582" width="12" height="12" fill="#eaff00"/>
<rect x="1804" y="582" width="12" height="12" fill="#efff00"/>
<rect x="1816" y="582" width="12" height="12" fill="#f5ff00"/>
<rect x="1828" y="582" width="12" height="12" fill="#fbff00"/>
<rect x="1840" y="582" width="12" height="12" fill="#fffe00"/>
<rect x="1852" y="582" width="12" height="12" fill="#fff800"/>
<rect x="1864" y="582" width="12" height="12" fill="#fff200"/>
<rect x="1876" y="582" width="12" height="12" fill="#ffed00"/>
<rect x="1888" y="582" width="12" height="12" fill="#ffe800"/>
<rect x="1900" y="582" width="12" height="12" fill="#ffe300"/>
<rect x="1912" y="582" width="12" height="12" fill="#ffde00"/>
<rect x="1924" y="582" width="12" height="12" fill="#ffda00"/>
<rect x="1660" y="594" width="12" height="12" fill="#b2ff04"/>
<rect x="1672" y="594" width="12" height="12" fill="#b8ff03"/>
<rect x="1684" y="594" width="12" height="12" fill="#bdff01"/>
<rect x="1696" y="594" width="12" height="12" fill="#c2ff00"/>
<rect x="1708" y="594" width="12" height="12" fill="#c7ff00"/>
<rect x="1720" y="594" width="12" height="12" fill="#cdff00"/>
<rect x="1732" y="594" width="12" height="12" fill="#d2ff00"/>
<rect x="1744" y="594" width="12" height="12" fill="#d7ff00"/>
<rect x="1756" y="594" width="12" height="12" fill="#ddff00"/>
<rect x="1768" y="594" width="12" height="12" fill="#e2ff00"/>
<rect x="1780" y="594" width="12" height="12" fill="#e8ff00"/>
<rect x="1792" y="594" width="12" height="12" fill="#eeff00"/>
<rect x="1804" y="594" width="12" height="12" fill="#f3ff00"/>
<rect x="1816" y="594" width="12" height="12" fill="#f9ff00"/>
<rect x="1828" y="594" width="12" height="12" fill="#ffff00"/>
<rect x="1840" y="594" width="12" height="12" fill="#fff900"/>
<rect x="1852" y="594" width="12" height="12" fill="#fff400"/>
<rect x="1864" y="594" width="12" height="12" fill="#ffee00"/>
<rect x="1876" y="594" width="12" height="12" fill="#ffe900"/>
<rect x="1888" y="594" width="12" height="12" fill="#ffe400"/>
<rect x="1900" y="594" width="12" height="12" fill="#ffdf00"/>
<rect x="1912" y="594" width="12" height="12" fill="#ffdb00"/>
<rect x="1924" y="594" width="12" height="12" fill="#ffd600"/>
<rect x="1660" y="606" width="12" height="12" fill="#b6ff06"/>
<rect x="1672" y="606" width="12" height="12" fill="#bbff04"/>
<rect x="1684" y="606" width="12" height="12" fill="#c0ff03"/>
<rect x="1696" y="606" width="12" height="12" fill="#c5ff02"/>
<rect x="1708" y="606" width="12" height="12" fill="#cbff01"/>
<rect x="1720" y="606" width="12" height="12" fill="#d0ff00"/>
<rect x="1732" y="606" width="12" height="12" fill="#d6ff00"/>
<rect x="1744" y="606" width="12" height="12" fill="#dbff00"/>
<rect x="1756" y="606" width="12" height="12" fill="#e1ff00"/>
<rect x="1768" y="606" width="12" height="12" fill="#e6ff00"/>
<rect x="1780" y="606" width="12" height="12" fill="#ecff00"/>
<rect x="1792" y="606" width="12" height="12" fill="#f2ff00"/>
<rect x="1804" y="606" width="12" height="12" fill="#f8ff00"/>
<rect x="1816" y="606" width="12" height="12" fill="#fdff00"/>
<rect x="1828" y="606" width="12" height="12" fill="#fffb00"/>
<rect x="1840" y="606" width="12" height="12" fill="#fff500"/>
<rect x="1852" y="606" width="12" height="12" fill="#fff000"/>
<rect x="1864" y="606" width="12" height="12" fill="#ffea00"/>
<rect x="1876" y="606" width="12" height="12" fill="#ffe500"/>
<rect x="1888" y="606" width="12" height="12" fill="#ffe000"/>
<rect x="1900" y="606" width="12" height="12" fill="#ffdc00"/>
<rect x="1912" y="606" width="12" height="12" fill="#ffd700"/>
<rect x="1924" y="606" width="12" height="12" fill="#ffd300"/>
<rect x="1660" y="618" width="12" height="12" fill="#b9ff07"/>
<rect x="1672" y="618" width="12" height="12" fill="#beff06"/>
<rect x="1684" y="618" width="12" height="12" fill="#c4ff05"/>
<rect x="1696" y="618" width="12" height="12" fill="#c9ff04"/>
<rect x="1708" y="618" width="12" height="12" fill="#ceff03"/>
<rect x="1720" y="618" width="12" height="12" fill="#d4ff02"/>
<rect x="1732" y="618" width="12" height="12" fill="#d9ff00"/>
<rect x="1744" y="618" width="12" height="12" fill="#dfff00"/>
<rect x="1756" y="618" width="12" height="12" fill="#e5ff00"/>
<rect x="1768" y="618" width="12" height="12" fill="#eaff00"/>
<rect x="1780" y="618" width="12" height="12" fill="#f0ff00"/>
<rect x="1792" y="618" width="12" height="12" fill="#f6ff00"/>
<rect x="1804" y="618" width="12" height="12" fill="#fcff00"/>
<rect x="1816" y="618" width="12" height="12" fill="#fffc00"/>
<rect x="1828" y="618" width="12" height="12" fill="#fff700"/>
<rect x="1840" y="618" width="12" height="12" fill="#fff100"/>
<rect x="1852" y="618" width="12" height="12" fill="#ffec00"/>
<rect x="1864" y="618" width="12" height="12" fill="#ffe700"/>
<rect x="1876" y="618" width="12" height="12" fill="#ffe200"/>
<rect x="1888" y="618" width="12" height="12" fill="#ffdd00"/>
<rect x="1900" y="618" width="12" height="12" fill="#ffd800"/>
<rect x="1912" y="618" width="12" height="12" fill="#ffd400"/>
<rect x="1924" y="618" width="12" height="12" fill="#ffcf00"/>
<rect x="1660" y="630" width="12" height="12" fill="#bcff09"/>
<rect x="1672" y="630" width="12" height="12" fill="#c2ff08"/>
<rect x="1684" y="630" width="12" height="12" fill="#c7ff07"/>
<rect x="1696" y="630" width="12" height="12" fill="#cdff06"/>
<rect x="1708" y="630" width="12" height="12" fill="#d2ff05"/>
<rect x="1720" y="630" width="12" height="12" fill="#d8ff03"/>
<rect x="1732" y="630" width="12" height="12" fill="#ddff02"/>
<rect x="1744" y="630" width="12" height="12" fill="#e3ff01"/>
<rect x="1756" y="630" width="12" height="12" fill="#e9ff00"/>
<rect x="1768" y="630" width="12" height="12" fill="#eeff00"/>
<rect x="1780" y="630" width="12" height="12" fill="#f4ff00"/>
<rect x="1792" y="630" width="12" height="12" fill="#faff00"/>
<rect x="1804" y="630" width="12" height="12" fill="#fffe00"/>
<rect x="1816" y="630" width="12" height="12" fill="#fff800"/>
<rect x="1828" y="630" width="12" height="12" fill="#fff200"/>
<rect x="1840" y="630" width="12" height="12" fill="#ffed00"/>
<rect x="1852" y="630" width="12" height="12" fill="#ffe800"/>
<rect x="1864" y="630" width="12" height="12" fill="#ffe300"/>
<rect x="1876" y="630" width="12" height="12" fill="#ffde00"/>
<rect x="1888" y="630" width="12" height="12" fill="#ffd900"/>
<rect x="1900" y="630" width="12" height="12" fill="#ffd500"/>
<rect x="1912" y="630" width="12" height="12" fill="#ffd000"/>
<rect x="1924" y="630" width="12" height="12" fill="#ffcc00"/>
<rect x="1660" y="642" width="12" height="12" fill="#c0ff0b"/>
<rect x="1672" y="642" width="12" height="12" fill="#c5ff0a"/>
<rect x="1684" y="642" width="12" height="12" fill="#cbff09"/>
<rect x="1696" y="642" width="12" height="12" fill="#d0ff08"/>
<rect x="1708" y="642" width="12" height="12" fill="#d6ff07"/>
<rect x="1720" y="642" width="12" height="12" fill="#dcff05"/>
<rect x="1732" y="642" width="12" height="12" fill="#e1ff04"/>
<rect x="1744" y="642" width="12" height="12" fill="#e7ff03"/>
<rect x="1756" y="642" width="12" height="12" fill="#edff02"/>
<rect x="1768" y="642" width="12" height="12" fill="#f3ff00"/>
<rect x="1780" y="642" width="12" height="12" fill="#f9ff00"/>
<rect x="1792" y="642" width="12" height="12" fill="#ffff00"/>
<rect x="1804" y="642" width="12" height="12" fill="#fffa00"/>
<rect x="1816" y="642" width="12" height="12" fill="#fff400"/>
<rect x="1828" y="642" width="12" height="12" fill="#ffee00"/>
<rect x="1840" y="642" width="12" height="12" fill="#ffe900"/>
<rect x="1852" y="642" width="12" height="12" fill="#ffe400"/>
<rect x="1864" y="642" width="12" height="12" fill="#ffdf00"/>
<rect x="1876" y="642" width="12" height="12" fill="#ffda00"/>
<rect x="1888" y="642" width="12" height="12" fill="#ffd500"/>
<rect x="1900" y="642" width="12" height="12" fill="#ffd100"/>
<rect x="1912" y="642" width="12" height="12" fill="#ffcd00"/>
<rect x="1924" y="642" width="12" height="12" fill="#ffc800"/>
<rect x="1660" y="654" width="12" height="12" fill="#c3ff0d"/>
<rect x="1672" y="654" width="12" height="12" fill="#c9ff0c"/>
<rect x="1684" y="654" width="12" height="12" fill="#cfff0b"/>
<rect x="1696" y="654" width="12" height="12" fill="#d4ff0a"/>
<rect x="1708" y="654" width="12" height="12" fill="#daff09"/>
<rect x="1720" y="654" width="12" height="12" fill="#e0ff07"/>
<rect x="1732" y="654" width="12" height="12" fill="#e5ff06"/>
<rect x="1744" y="654" width="12" height="12" fill="#ebff05"/>
<rect x="1756" y="654" width="12" height="12" fill="#f1ff04"/>
<rect x="1768" y="654" width="12" height="12" fill="#f7ff02"/>
<rect x="1780" y="654" width="12" height="12" fill="#fdff01"/>
<rect x="1792" y="654" width="12" height="12" fill="#fffb00"/>
<rect x="1804" y="654" width="12" height="12" fill="#fff500"/>
<rect x="1816" y="654" width="12" height="12" fill="#fff000"/>
<rect x="1828" y="654" width="12" height="12" fill="#ffea00"/>
<rect x="1840" y="654" width="12" height="12" fill="#ffe500"/>
<rect x="1852" y="654" width="12" height="12" fill="#ffe000"/>
<rect x="1864" y="654" width="12" height="12" fill="#ffdb00"/>
<rect x="1876" y="654" width="12" height="12" fill="#ffd600"/>
<rect x="1888" y="654" width="12" height="12" fill="#ffd200"/>
<rect x="1900" y="654" width="12" height="12" fill="#ffcd00"/>
<rect x="1912" y="654" width="12" height="12" fill="#ffc900"/>
<rect x="1924" y="654" width="12" height="12" fill="#ffc500"/>
<rect x="1660" y="666" width="12" height="12" fill="#c7ff0f"/>
<rect x="1672" y="666" width="12" height="12" fill="#cdff0e"/>
<rect x="1684" y="666" width="12" height="12" fill="#d2ff0d"/>
<rect x="1696" y="666" width="12" height="12" fill="#d8ff0c"/>
<rect x="1708" y="666" width="12" height="12" fill="#deff0b"/>
<rect x="1720" y="666" width="12" height="12" fill="#e4ff09"/>
<rect x="1732" y="666" width="12" height="12" fill="#e9ff08"/>
<rect x="1744" y="666" width="12" height="12" fill="#efff07"/>
<rect x="1756" y="666" width="12" height="12" fill="#f5ff06"/>
<rect x="1768" y="666" width="12" height="12" fill="#fbff04"/>
<rect x="1780" y="666" width="12" height="12" fill="#fffd03"/>
<rect x="1792" y="666" width="12" height="12" fill="#fff702"/>
<rect x="1804" y="666" width="12" height="12" fill="#fff100"/>
<rect x="1816" y="666" width="12" height="12" fill="#ffec00"/>
<rect x="1828" y="666" width="12" height="12" fill="#ffe600"/>
<rect x="1840" y="666" width="12" height="12" fill="#ffe100"/>
<rect x="1852" y="666" width="12" height="12" fill="#ffdc00"/>
<rect x="1864" y="666" width="12" height="12" fill="#ffd700"/>
<rect x="1876" y="666" width="12" height="12" fill="#ffd300"/>
<rect x="1888" y="666" width="12" height="12" fill="#ffce00"/>
<rect x="1900" y="666" width="12" height="12" fill="#ffca00"/>
<rect x="1912" y="666" width="12" height="12" fill="#ffc600"/>
<rect x="1924" y="666" width="12" height="12" fill="#ffc200"/>
<rect x="1660" y="678" width="12" height="12" fill="#cbff11"/>
<rect x="1672" y="678" width="12" height="12" fill="#d1ff10"/>
<rect x="1684" y="678" width="12" height="12" fill="#d6ff0f"/>
<rect x="1696" y="678" width="12" height="12" fill="#dcff0e"/>
<rect x="1708" y="678" width="12" height="12" fill="#e2ff0d"/>
<rect x="1720" y="678" width="12" height="12" fill="#e8ff0b"/>
<rect x="1732" y="678" width="12" height="12" fill="#eeff0a"/>
<rect x="1744" y="678" width="12" height="12" fill="#f4ff09"/>
<rect x="1756" y="678" width="12" height="12" fill="#faff08"/>
<rect x="1768" y="678" width="12" height="12" fill="#fffe06"/>
<rect x="1780" y="678" width="12" height="12" fill="#fff805"/>
<rect x="1792" y="678" width="12" height="12" fill="#fff204"/>
<rect x="1804" y="678" width="12" height="12" fill="#ffed02"/>
<rect x="1816" y="678" width="12" height="12" fill="#ffe701"/>
<rect x="1828" y="678" width="12" height="12" fill="#ffe200"/>
<rect x="1840" y="678" width="12" height="12" fill="#ffdd00"/>
<rect x="1852" y="678" width="12" height="12" fill="#ffd800"/>
<rect x="1864" y="678" width="12" height="12" fill="#ffd400"/>
<rect x="1876" y="678" width="12" height="12" fill="#ffcf00"/>
<rect x="1888" y="678" width="12" height="12" fill="#ffcb00"/>
<rect x="1900" y="678" width="12" height="12" fill="#ffc700"/>
<rect x="1912" y="678" width="12" height="12" fill="#ffc200"/>
<rect x="1924" y="678" width="12" height="12" fill="#ffbe00"/>
<rect x="1660" y="690" width="12" height="12" fill="#cfff13"/>
<rect x="1672" y="690" width="12" height="12" fill="#d4ff12"/>
<rect x="1684" y="690" width="12" height="12" fill="#daff11"/>
<rect x="1696" y="690" width="12" height="12" fill="#e0ff10"/>
<rect x="1708" y="690" width="12" height="12" fill="#e6ff0f"/>
<rect x="1720" y="690" width="12" height="12" fill="#ecff0d"/>
<rect x="1732" y="690" width="12" height="12" fill="#f2ff0c"/>
<rect x="1744" y="690" width="12" height="12" fill="#f8ff0b"/>
<rect x="1756" y="690" width="12" height="12" fill="#feff0a"/>
<rect x="1768" y="690" width="12" height="12" fill="#fffa08"/>
<rect x="1780" y="690" width="12" height="12" fill="#fff407"/>
<rect x="1792" y="690" width="12" height="12" fill="#ffee06"/>
<rect x="1804" y="690" width="12" height="12" fill="#ffe904"/>
<rect x="1816" y="690" width="12" height="12" fill="#ffe303"/>
<rect x="1828" y="690" width="12" height="12" fill="#ffde02"/>
<rect x="1840" y="690" width="12" height="12" fill="#ffd901"/>
<rect x="1852" y="690" width="12" height="12" fill="#ffd500"/>
<rect x="1864" y="690" width="12" height="12" fill="#ffd000"/>
<rect x="1876" y="690" width="12" height="12" fill="#ffcc00"/>
<rect x="1888" y="690" width="12" height="12" fill="#ffc700"/>
<rect x="1900" y="690" width="12" height="12" fill="#ffc300"/>
<rect x="1912" y="690" width="12" height="12" fill="#ffbf00"/>
<rect x="1924" y="690" width="12" height="12" fill="#ffbb00"/>
<rect x="1660" y="702" width="12" height="12" fill="#d3ff16"/>
<rect x="1672" y="702" width="12" height="12" fill="#d8ff14"/>
<rect x="1684" y="702" width="12" height="12" fill="#deff13"/>
<rect x="1696" y="702" width="12" height="12" fill="#e4ff12"/>
<rect x="1708" y="702" width="12" height="12" fill="#eaff11"/>
<rect x="1720" y="702" width="12" height="12" fill="#f0ff10"/>
<rect x="1732" y="702" width="12" height="12" fill="#f6ff0e"/>
<rect x="1744" y="702" width="12" height="12" fill="#fdff0d"/>
<rect x="1756" y="702" width="12" height="12" fill="#fffb0c"/>
<rect x="1768" y="702" width="12" height="12" fill="#fff50a"/>
<rect x="1780" y="702" width="12" height="12" fill="#fff009"/>
<rect x="1792" y="702" width="12" height="12" fill="#ffea07"/>
<rect x="1804" y="702" width="12" height="12" fill="#ffe506"/>
<rect x="1816" y="702" width="12" height="12" fill="#ffdf05"/>
<rect x="1828" y="702" width="12" height="12" fill="#ffda03"/>
<rect x="1840" y="702" width="12" height="12" fill="#ffd602"/>
<rect x="1852" y="702" width="12" height="12" fill="#ffd101"/>
<rect x="1864" y="702" width="12" height="12" fill="#ffcc00"/>
<rect x="1876" y="702" width="12" height="12" fill="#ffc800"/>
<rect x="1888" y="702" width="12" height="12" fill="#ffc400"/>
<rect x="1900" y="702" width="12" height="12" fill="#ffc000"/>
<rect x="1912" y="702" width="12" height="12" fill="#ffbc00"/>
<rect x="1924" y="702" width="12" height="12" fill="#ffb800"/>
<rect x="1660" y="714" width="12" height="12" fill="#d6ff18"/>
<rect x="1672" y="714" width="12" height="12" fill="#dcff17"/>
<rect x="1684" y="714" width="12" height="12" fill="#e2ff15"/>
<rect x="1696" y="714" width="12" height="12" fill="#e8ff14"/>
<rect x="1708" y="714" width="12" height="12" fill="#eeff13"/>
<rect x="1720" y="714" width="12" height="12" fill="#f5ff12"/>
<rect x="1732" y="714" width="12" height="12" fill="#fbff11"/>
<rect x="1744" y="714" width="12" height="12" fill="#fffd0f"/>
<rect x="1756" y="714" width="12" height="12" fill="#fff70e"/>
<rect x="1768" y="714" width="12" height="12" fill="#fff10c"/>
<rect x="1780" y="714" width="12" height="12" fill="#ffeb0b"/>
<rect x="1792" y="714" width="12" height="12" fill="#ffe609"/>
<rect x="1804" y="714" width="12" height="12" fill="#ffe108"/>
<rect x="1816" y="714" width="12" height="12" fill="#ffdc07"/>
<rect x="1828" y="714" width="12" height="12" fill="#ffd705"/>
<rect x="1840" y="714" width="12" height="12" fill="#ffd204"/>
<rect x="1852" y="714" width="12" height="12" fill="#ffcd03"/>
<rect x="1864" y="714" width="12" height="12" fill="#ffc902"/>
<rect x="1876" y="714" width="12" height="12" fill="#ffc501"/>
<rect x="1888" y="714" width="12" height="12" fill="#ffc000"/>
<rect x="1900" y="714" width="12" height="12" fill="#ffbc00"/>
<rect x="1912" y="714" width="12" height="12" fill="#ffb800"/>
<rect x="1924" y="714" width="12" height="12" fill="#ffb500"/>
<rect x="1660" y="726" width="12" height="12" fill="#dbff1a"/>
<rect x="1672" y="726" width="12" height="12" fill="#e1ff19"/>
<rect x="1684" y="726" width="12" height="12" fill="#e7ff18"/>
<rect x="1696" y="726" width="12" height="12" fill="#edff16"/>
<rect x="1708" y="726" width="12" height="12" fill="#f3ff15"/>
<rect x="1720" y="726" width="12" height="12" fill="#f9ff14"/>
<rect x="1732" y="726" width="12" height="12" fill="#ffff13"/>
<rect x="1744" y="726" width="12" height="12" fill="#fff811"/>
<rect x="1756" y="726" width="12" height="12" fill="#fff20f"/>
<rect x="1768" y="726" width="12" height="12" fill="#ffed0e"/>
<rect x="1780" y="726" width="12" height="12" fill="#ffe70c"/>
<rect x="1792" y="726" width="12" height="12" fill="#ffe20b"/>
<rect x="1804" y="726" width="12" height="12" fill="#ffdd0a"/>
<rect x="1816" y="726" width="12" height="12" fill="#ffd808"/>
<rect x="1828" y="726" width="12" height="12" fill="#ffd307"/>
<rect x="1840" y="726" width="12" height="12" fill="#ffce06"/>
<rect x="1852" y="726" width="12" height="12" fill="#ffca05"/>
<rect x="1864" y="726" width="12" height="12" fill="#ffc503"/>
<rect x="1876" y="726" width="12" height="12" fill="#ffc102"/>
<rect x="1888" y="726" width="12" height="12" fill="#ffbd01"/>
<rect x="1900" y="726" width="12" height="12" fill="#ffb900"/>
<rect x="1912" y="726" width="12" height="12" fill="#ffb500"/>
<rect x="1924" y="726" width="12" height="12" fill="#ffb200"/>
<rect x="1660" y="738" width="12" height="12" fill="#dfff1c"/>
<rect x="1672" y="738" width="12" height="12" fill="#e5ff1b"/>
<rect x="1684" y="738" width="12" height="12" fill="#ebff1a"/>
<rect x="1696" y="738" width="12" height="12" fill="#f1ff19"/>
<rect x="1708" y="738" width="12" height="12" fill="#f7ff18"/>
<rect x="1720" y="738" width="12" height="12" fill="#feff16"/>
<rect x="1732" y="738" width="12" height="12" fill="#fffa15"/>
<rect x="1744" y="738" width="12" height="12" fill="#fff413"/>
<rect x="1756" y="738" width="12" height="12" fill="#ffee11"/>
<rect x="1768" y="738" width="12" height="12" fill="#ffe810"/>
<rect x="1780" y="738" width="12" height="12" fill="#ffe30e"/>
<rect x="1792" y="738" width="12" height="12" fill="#ffde0d"/>
<rect x="1804" y="738" width="12" height="12" fill="#ffd90b"/>
<rect x="1816" y="738" width="12" height="12" fill="#ffd40a"/>
<rect x="1828" y="738" width="12" height="12" fill="#ffcf09"/>
<rect x="1840" y="738" width="12" height="12" fill="#ffcb07"/>
<rect x="1852" y="738" width="12" height="12" fill="#ffc606"/>
<rect x="1864" y="738" width="12" height="12" fill="#ffc205"/>
<rect x="1876" y="738" width="12" height="12" fill="#ffbe04"/>
<rect x="1888" y="738" width="12" height="12" fill="#ffba03"/>
<rect x="1900" y="738" width="12" height="12" fill="#ffb602"/>
<rect x="1912" y="738" width="12" height="12" fill="#ffb201"/>
<rect x="1924" y="738" width="12" height="12" fill="#ffae00"/>
<rect x="1660" y="750" width="12" height="12" fill="#e3ff1f"/>
<rect x="1672" y="750" width="12" height="12" fill="#e9ff1d"/>
<rect x="1684" y="750" width="12" height="12" fill="#efff1c"/>
<rect x="1696" y="750" width="12" height="12" fill="#f6ff1b"/>
<rect x="1708" y="750" width="12" height="12" fill="#fcff1a"/>
<rect x="1720" y="750" width="12" height="12" fill="#fffc18"/>
<rect x="1732" y="750" width="12" height="12" fill="#fff517"/>
<rect x="1744" y="750" width="12" height="12" fill="#ffef15"/>
<rect x="1756" y="750" width="12" height="12" fill="#ffea13"/>
<rect x="1768" y="750" width="12" height="12" fill="#ffe412"/>
<rect x="1780" y="750" width="12" height="12" fill="#ffdf10"/>
<rect x="1792" y="750" width="12" height="12" fill="#ffda0f"/>
<rect x="1804" y="750" width="12" height="12" fill="#ffd50d"/>
<rect x="1816" y="750" width="12" height="12" fill="#ffd00c"/>
<rect x="1828" y="750" width="12" height="12" fill="#ffcb0a"/>
<rect x="1840" y="750" width="12" height="12" fill="#ffc709"/>
<rect x="1852" y="750" width="12" height="12" fill="#ffc308"/>
<rect x="1864" y="750" width="12" height="12" fill="#ffbe07"/>
<rect x="1876" y="750" width="12" height="12" fill="#ffba05"/>
<rect x="1888" y="750" width="12" height="12" fill="#ffb604"/>
<rect x="1900" y="750" width="12" height="12" fill="#ffb303"/>
<rect x="1912" y="750" width="12" height="12" fill="#ffaf02"/>
<rect x="1924" y="750" width="12" height="12" fill="#ffab01"/>
<rect x="1660" y="762" width="12" height="12" fill="#e7ff21"/>
<rect x="1672" y="762" width="12" height="12" fill="#eeff20"/>
<rect x="1684" y="762" width="12" height="12" fill="#f4ff1f"/>
<rect x="1696" y="762" width="12" height="12" fill="#faff1d"/>
<rect x="1708" y="762" width="12" height="12" fill="#fffd1c"/>
<rect x="1720" y="762" width="12" height="12" fill="#fff71a"/>
<rect x="1732" y="762" width="12" height="12" fill="#fff118"/>
<rect x="1744" y="762" width="12" height="12" fill="#ffeb17"/>
<rect x="1756" y="762" width="12" height="12" fill="#ffe515"/>
<rect x="1768" y="762" width="12" height="12" fill="#ffe013"/>
<rect x="1780" y="762" width="12" height="12" fill="#ffdb12"/>
<rect x="1792" y="762" width="12" height="12" fill="#ffd610"/>
<rect x="1804" y="762" width="12" height="12" fill="#ffd10f"/>
<rect x="1816" y="762" width="12" height="12" fill="#ffcc0d"/>
<rect x="1828" y="762" width="12" height="12" fill="#ffc80c"/>
<rect x="1840" y="762" width="12" height="12" fill="#ffc30b"/>
<rect x="1852" y="762" width="12" height="12" fill="#ffbf09"/>
<rect x="1864" y="762" width="12" height="12" fill="#ffbb08"/>
<rect x="1876" y="762" width="12" height="12" fill="#ffb707"/>
<rect x="1888" y="762" width="12" height="12" fill="#ffb306"/>
<rect x="1900" y="762" width="12" height="12" fill="#ffaf05"/>
<rect x="1912" y="762" width="12" height="12" fill="#ffac04"/>
<rect x="1924" y="762" width="12" height="12" fill="#ffa803"/>
</g></g></g>
<rect x="1683" y="568.5" width="219" height="179" fill="none" stroke="#999" stroke-width="2.5"/>
<ellipse cx="1793.6" cy="625.1" rx="4.4" ry="5.6" fill="#c8c000" stroke="#000" stroke-width="1.2"/>
<rect x="1784" y="648.2" width="15.6" height="17.5" fill="none" stroke="#fff" stroke-width="2"/>
<text x="252.5" y="842.0" font-size="39.54" fill="#f2f2f2" textLength="238.5" lengthAdjust="spacingAndGlyphs">Avg dE2000: 2.43</text>
<text x="248.5" y="892.8" font-size="39.54" fill="#f2f2f2" textLength="247.5" lengthAdjust="spacingAndGlyphs">Max dE2000: 4.31</text>
<text x="215.8" y="951.7" font-size="38.23" fill="#f2f2f2" textLength="224.8" lengthAdjust="spacingAndGlyphs">Current Reading</text>
<text x="215.5" y="996.9" font-size="31.83" fill="#f2f2f2" textLength="105.0" lengthAdjust="spacingAndGlyphs">x: 0.4195</text>
<text x="376.6" y="996.9" font-size="31.83" fill="#f2f2f2" textLength="105.7" lengthAdjust="spacingAndGlyphs">y: 0.5141</text>
<text x="215.5" y="1047.8" font-size="31.69" fill="#f2f2f2" textLength="98.9" lengthAdjust="spacingAndGlyphs">fL: 41.85</text>
<text x="215.5" y="1089.7" font-size="31.25" fill="#f2f2f2" textLength="163.8" lengthAdjust="spacingAndGlyphs">cd/m²: 143.38</text>
<rect x="565.2" y="850.4" width="260.29999999999995" height="224.5000000000001" fill="#232323"/>
<line x1="565.2" y1="889" x2="825.5" y2="889" stroke="#8c8c8c" stroke-width="1.5"/>
<line x1="565.2" y1="964.7" x2="825.5" y2="964.7" stroke="#8c8c8c" stroke-width="1.5"/>
<line x1="565.2" y1="1038" x2="825.5" y2="1038" stroke="#8c8c8c" stroke-width="1.5"/>
<rect x="565.2" y="850.4" width="260.29999999999995" height="224.5000000000001" fill="none" stroke="#8c8c8c" stroke-width="1.5"/>
<line x1="559.5" y1="889" x2="565.2" y2="889" stroke="#ddd" stroke-width="1.5"/>
<text x="559.5" y="895.0" font-size="17.15" fill="#d8d8d8" textLength="16.5" lengthAdjust="spacingAndGlyphs" text-anchor="end">20</text>
<line x1="559.5" y1="964.7" x2="565.2" y2="964.7" stroke="#ddd" stroke-width="1.5"/>
<text x="559.5" y="970.7" font-size="17.15" fill="#d8d8d8" textLength="8.0" lengthAdjust="spacingAndGlyphs" text-anchor="end">0</text>
<line x1="559.5" y1="1038" x2="565.2" y2="1038" stroke="#ddd" stroke-width="1.5"/>
<text x="559.5" y="1044.0" font-size="17.15" fill="#d8d8d8" textLength="22.0" lengthAdjust="spacingAndGlyphs" text-anchor="end">-20</text>
<line x1="565.2" y1="1074.9" x2="565.2" y2="1082" stroke="#ddd" stroke-width="1.5"/>
<line x1="825.5" y1="1074.9" x2="825.5" y2="1082" stroke="#ddd" stroke-width="1.5"/>
<text x="681.2" y="844.0" font-size="17.44" fill="#d8d8d8" textLength="86.0" lengthAdjust="spacingAndGlyphs" text-anchor="middle">RGB Balance</text>
<text x="695.5" y="1095.4" font-size="17.44" fill="#d8d8d8" textLength="37.0" lengthAdjust="spacingAndGlyphs" text-anchor="middle">100%</text>
<rect x="591.4" y="963.2" width="209.2" height="3" fill="#000"/>
<rect x="591.9" y="964.7" width="67.8" height="17.3" fill="url(#redB)" stroke="#000" stroke-width="1.4"/>
<rect x="732.2" y="964.7" width="68.4" height="104.3" fill="url(#bluB)" stroke="#000" stroke-width="1.4"/>
<rect x="848" y="813.9" width="743" height="37" fill="#131313"/>
<rect x="848" y="813.9" width="743" height="18" fill="#2f2f2f"/>
<rect x="848" y="813.9" width="20" height="37" fill="#000"/>
<rect x="848" y="850.7" width="20" height="35.59999999999991" fill="#222222"/>
<rect x="868" y="850.7" width="723" height="35.59999999999991" fill="#414141"/>
<text x="875.0" y="877.2" font-size="23.55" fill="#f2f2f2" textLength="79.8" lengthAdjust="spacingAndGlyphs">x: CIE31</text>
<text x="1039.2" y="877.2" font-size="22.97" fill="#f2f2f2">0.3298</text>
<text x="1150.5" y="877.2" font-size="22.97" fill="#f2f2f2">0.3532</text>
<text x="1262.1" y="877.2" font-size="22.97" fill="#f2f2f2">0.3746</text>
<text x="1374.1" y="877.2" font-size="22.97" fill="#f2f2f2">0.3949</text>
<text x="1485.8" y="877.2" font-size="22.97" fill="#f2f2f2">0.4195</text>
<rect x="848" y="886.3" width="20" height="35.60000000000002" fill="#262626"/>
<rect x="868" y="886.3" width="723" height="35.60000000000002" fill="#808080"/>
<text x="875.0" y="912.8" font-size="23.55" fill="#f2f2f2" textLength="80.0" lengthAdjust="spacingAndGlyphs">y: CIE31</text>
<text x="1039.2" y="912.8" font-size="22.97" fill="#f2f2f2">0.3597</text>
<text x="1150.5" y="912.8" font-size="22.97" fill="#f2f2f2">0.4000</text>
<text x="1262.1" y="912.8" font-size="22.97" fill="#f2f2f2">0.4370</text>
<text x="1374.1" y="912.8" font-size="22.97" fill="#f2f2f2">0.4719</text>
<text x="1485.8" y="912.8" font-size="22.97" fill="#f2f2f2">0.5141</text>
<rect x="848" y="921.9" width="20" height="35.30000000000007" fill="#222222"/>
<rect x="868" y="921.9" width="723" height="35.30000000000007" fill="#414141"/>
<text x="875.0" y="948.4" font-size="23.55" fill="#f2f2f2" textLength="12.7" lengthAdjust="spacingAndGlyphs">Y</text>
<text x="1039.2" y="948.4" font-size="22.97" fill="#f2f2f2">153.1834</text>
<text x="1150.5" y="948.4" font-size="22.97" fill="#f2f2f2">150.4293</text>
<text x="1262.1" y="948.4" font-size="22.97" fill="#f2f2f2">148.4022</text>
<text x="1374.1" y="948.4" font-size="22.97" fill="#f2f2f2">146.6612</text>
<text x="1485.8" y="948.4" font-size="22.97" fill="#f2f2f2">143.3764</text>
<rect x="848" y="957.2" width="20" height="35.59999999999991" fill="#262626"/>
<rect x="868" y="957.2" width="723" height="35.59999999999991" fill="#808080"/>
<text x="875.0" y="983.7" font-size="23.55" fill="#f2f2f2" textLength="147.0" lengthAdjust="spacingAndGlyphs">Target x:CIE31</text>
<text x="1039.2" y="983.7" font-size="22.97" fill="#f2f2f2">0.3344</text>
<text x="1150.5" y="983.7" font-size="22.97" fill="#f2f2f2">0.3564</text>
<text x="1262.1" y="983.7" font-size="22.97" fill="#f2f2f2">0.3773</text>
<text x="1374.1" y="983.7" font-size="22.97" fill="#f2f2f2">0.3969</text>
<text x="1485.8" y="983.7" font-size="22.97" fill="#f2f2f2">0.4193</text>
<rect x="848" y="992.8" width="20" height="35.200000000000045" fill="#222222"/>
<rect x="868" y="992.8" width="723" height="35.200000000000045" fill="#414141"/>
<text x="875.0" y="1019.3" font-size="23.55" fill="#f2f2f2" textLength="147.3" lengthAdjust="spacingAndGlyphs">Target y:CIE31</text>
<text x="1039.2" y="1019.3" font-size="22.97" fill="#f2f2f2">0.3648</text>
<text x="1150.5" y="1019.3" font-size="22.97" fill="#f2f2f2">0.4013</text>
<text x="1262.1" y="1019.3" font-size="22.97" fill="#f2f2f2">0.4358</text>
<text x="1374.1" y="1019.3" font-size="22.97" fill="#f2f2f2">0.4682</text>
<text x="1485.8" y="1019.3" font-size="22.97" fill="#f2f2f2">0.5053</text>
<rect x="848" y="1028" width="20" height="35.700000000000045" fill="#262626"/>
<rect x="868" y="1028" width="723" height="35.700000000000045" fill="#808080"/>
<text x="875.0" y="1054.5" font-size="23.55" fill="#f2f2f2" textLength="85.3" lengthAdjust="spacingAndGlyphs">Target Y</text>
<text x="1039.2" y="1054.5" font-size="22.97" fill="#f2f2f2">154.1837</text>
<text x="1150.5" y="1054.5" font-size="22.97" fill="#f2f2f2">151.4773</text>
<text x="1262.1" y="1054.5" font-size="22.97" fill="#f2f2f2">149.3979</text>
<text x="1374.1" y="1054.5" font-size="22.97" fill="#f2f2f2">147.7659</text>
<text x="1485.8" y="1054.5" font-size="22.97" fill="#f2f2f2">146.1882</text>
<rect x="848" y="1063.7" width="20" height="35.200000000000045" fill="#222222"/>
<rect x="868" y="1063.7" width="723" height="35.200000000000045" fill="#414141"/>
<text x="875.0" y="1090.2" font-size="23.55" fill="#f2f2f2" textLength="86.0" lengthAdjust="spacingAndGlyphs">ΔE 2000</text>
<text x="1039.2" y="1090.2" font-size="22.97" fill="#f2f2f2">1.4881</text>
<text x="1150.5" y="1090.2" font-size="22.97" fill="#f2f2f2">0.8567</text>
<text x="1262.1" y="1090.2" font-size="22.97" fill="#f2f2f2">0.8352</text>
<text x="1374.1" y="1090.2" font-size="22.97" fill="#f2f2f2">0.8708</text>
<text x="1485.8" y="1090.2" font-size="22.97" fill="#f2f2f2">1.0979</text>
<text x="1039.2" y="840.0" font-size="20.35" fill="#fff" textLength="40.3" lengthAdjust="spacingAndGlyphs" stroke="#fff" stroke-width="0.25">20%</text>
<text x="1150.5" y="840.0" font-size="20.35" fill="#fff" textLength="40.3" lengthAdjust="spacingAndGlyphs" stroke="#fff" stroke-width="0.25">40%</text>
<text x="1262.1" y="840.0" font-size="20.35" fill="#fff" textLength="40.3" lengthAdjust="spacingAndGlyphs" stroke="#fff" stroke-width="0.25">60%</text>
<text x="1374.1" y="840.0" font-size="20.35" fill="#fff" textLength="40.3" lengthAdjust="spacingAndGlyphs" stroke="#fff" stroke-width="0.25">80%</text>
<text x="1485.8" y="840.0" font-size="20.35" fill="#fff" textLength="50.5" lengthAdjust="spacingAndGlyphs" stroke="#fff" stroke-width="0.25">100%</text>
<rect x="200" y="1107" width="1720" height="63" fill="url(#bar)"/>
<rect x="201.5" y="1108" width="44" height="62" rx="3" fill="url(#btab)"/>
<circle cx="223.7" cy="1116.4" r="6" fill="#555"/><path d="M219.5 1118.5h8l-4-4.5z" fill="#ddd"/>
<rect x="207" y="1134.3" width="34" height="30" fill="#ffff00"/>
<rect x="207" y="1134.3" width="34" height="30" rx="2" fill="#ffff00" stroke="#333" stroke-width="1"/>
<rect x="251.8" y="1108" width="150" height="62" rx="3" fill="url(#btab)"/>
<rect x="258.3" y="1113.4" width="138.5" height="36" rx="2" fill="#c0c1a6" stroke="#777" stroke-width="1"/>
<text x="326.8" y="1164.2" font-size="11.63" fill="#2e2e2e" textLength="22.0" lengthAdjust="spacingAndGlyphs" text-anchor="middle">20%</text>
<rect x="404.3" y="1108" width="150" height="62" rx="3" fill="url(#btab)"/>
<rect x="410.8" y="1113.4" width="138.5" height="36" rx="2" fill="#bfc186" stroke="#777" stroke-width="1"/>
<text x="479.3" y="1164.2" font-size="11.63" fill="#2e2e2e" textLength="22.0" lengthAdjust="spacingAndGlyphs" text-anchor="middle">40%</text>
<rect x="556.4" y="1108" width="150" height="62" rx="3" fill="url(#btab)"/>
<rect x="562.9" y="1113.4" width="138.5" height="36" rx="2" fill="#c0c06c" stroke="#777" stroke-width="1"/>
<text x="631.4" y="1164.2" font-size="11.63" fill="#2e2e2e" textLength="22.0" lengthAdjust="spacingAndGlyphs" text-anchor="middle">60%</text>
<rect x="708.5" y="1108" width="150" height="62" rx="3" fill="url(#btab)"/>
<rect x="715.0" y="1113.4" width="138.5" height="36" rx="2" fill="#bebe4b" stroke="#777" stroke-width="1"/>
<text x="783.5" y="1164.2" font-size="11.63" fill="#2e2e2e" textLength="22.0" lengthAdjust="spacingAndGlyphs" text-anchor="middle">80%</text>
<rect x="860.5" y="1108" width="150" height="62" rx="3" fill="url(#seltab)"/>
<rect x="867.0" y="1113.4" width="138.5" height="36" rx="2" fill="#c5c100" stroke="#777" stroke-width="1"/>
<text x="935.5" y="1164.2" font-size="11.63" fill="#fff" textLength="28.0" lengthAdjust="spacingAndGlyphs" text-anchor="middle" font-weight="bold">100%</text>
<rect x="1597" y="1127" width="48" height="43" rx="3" fill="url(#btab)"/>
<rect x="1607" y="1133" width="28" height="28" rx="5" fill="none" stroke="#222" stroke-width="2.5"/>
<rect x="1614" y="1140" width="14" height="14" fill="#000"/>
<rect x="1646" y="1109" width="226" height="28" rx="3" fill="url(#btab)"/>
<line x1="1691.2" y1="1109" x2="1691.2" y2="1137" stroke="#555" stroke-width="1"/>
<line x1="1736.4" y1="1109" x2="1736.4" y2="1137" stroke="#555" stroke-width="1"/>
<line x1="1781.6" y1="1109" x2="1781.6" y2="1137" stroke="#555" stroke-width="1"/>
<line x1="1826.8" y1="1109" x2="1826.8" y2="1137" stroke="#555" stroke-width="1"/>
<rect x="1646" y="1139" width="274" height="31" rx="3" fill="url(#btab)"/>
<line x1="1782" y1="1139" x2="1782" y2="1170" stroke="#666" stroke-width="1"/>
<circle cx="1677" cy="1154" r="9.5" fill="#888"/>
<text x="1677.0" y="1159.5" font-size="17.44" fill="#333" textLength="11.0" lengthAdjust="spacingAndGlyphs" text-anchor="middle">«</text>
<text x="1703.0" y="1163.5" font-size="21.80" fill="#2a2a2a" textLength="51.0" lengthAdjust="spacingAndGlyphs" stroke="#2a2a2a" stroke-width="0.7">Back</text>
<text x="1809.0" y="1163.5" font-size="21.80" fill="#2a2a2a" textLength="52.0" lengthAdjust="spacingAndGlyphs" stroke="#2a2a2a" stroke-width="0.7">Next</text>
<circle cx="1889" cy="1154" r="9.5" fill="#888"/>
<text x="1889.0" y="1159.5" font-size="17.44" fill="#333" textLength="11.0" lengthAdjust="spacingAndGlyphs" text-anchor="middle">»</text>
<g opacity="0.82">
<path d="M1534.4 1088.7L1536.6 1136.6L1568.6 1152.6L1623.8 1135.2L1591.8 1130.1" fill="none" stroke="#c8c8c8" stroke-width="7" stroke-linejoin="miter" stroke-linecap="round"/>
<path d="M1534.4 1088.7L1586 1097.4L1587.5 1129.4L1546.8 1131.6" fill="none" stroke="#c8c8c8" stroke-width="7" stroke-linejoin="miter" stroke-linecap="round"/>
<path d="M1534.4 1088.7L1536.6 1136.6L1568.6 1152.6L1623.8 1135.2L1591.8 1130.1" fill="none" stroke="#8c2a30" stroke-width="4.6" stroke-linejoin="miter" stroke-linecap="round"/>
<path d="M1534.4 1088.7L1586 1097.4L1587.5 1129.4L1546.8 1131.6" fill="none" stroke="#8c2a30" stroke-width="4.6" stroke-linejoin="miter" stroke-linecap="round"/>
<path d="M1550 1105.5Q1558 1104 1564.5 1123.5L1592 1088" fill="none" stroke="#c8c8c8" stroke-width="6.2" stroke-linejoin="round" stroke-linecap="round"/>
<path d="M1550 1105.5Q1558 1104 1564.5 1123.5L1592 1088" fill="none" stroke="#333" stroke-width="3.8" stroke-linejoin="round" stroke-linecap="round"/>
<text x="1597.0" y="1126.5" font-size="38.52" fill="none" textLength="193.0" lengthAdjust="spacingAndGlyphs" font-weight="bold" stroke="#c8c8c8" stroke-width="5" stroke-linejoin="round" opacity="0.9">NOTEBOOK</text>
<text x="1792.0" y="1126.5" font-size="38.52" fill="none" textLength="117.0" lengthAdjust="spacingAndGlyphs" font-weight="bold" stroke="#c8c8c8" stroke-width="5" stroke-linejoin="round" opacity="0.9">CHECK</text>
<text x="1597.0" y="1126.5" font-size="38.52" fill="#9a2c34" textLength="193.0" lengthAdjust="spacingAndGlyphs" font-weight="bold" stroke="#9a2c34" stroke-width="2.4" stroke-linejoin="round">NOTEBOOK</text>
<text x="1792.0" y="1126.5" font-size="38.52" fill="#2c2c2c" textLength="117.0" lengthAdjust="spacingAndGlyphs" font-weight="bold" stroke="#2c2c2c" stroke-width="2.4" stroke-linejoin="round">CHECK</text>
</g>
</svg></body></html>
